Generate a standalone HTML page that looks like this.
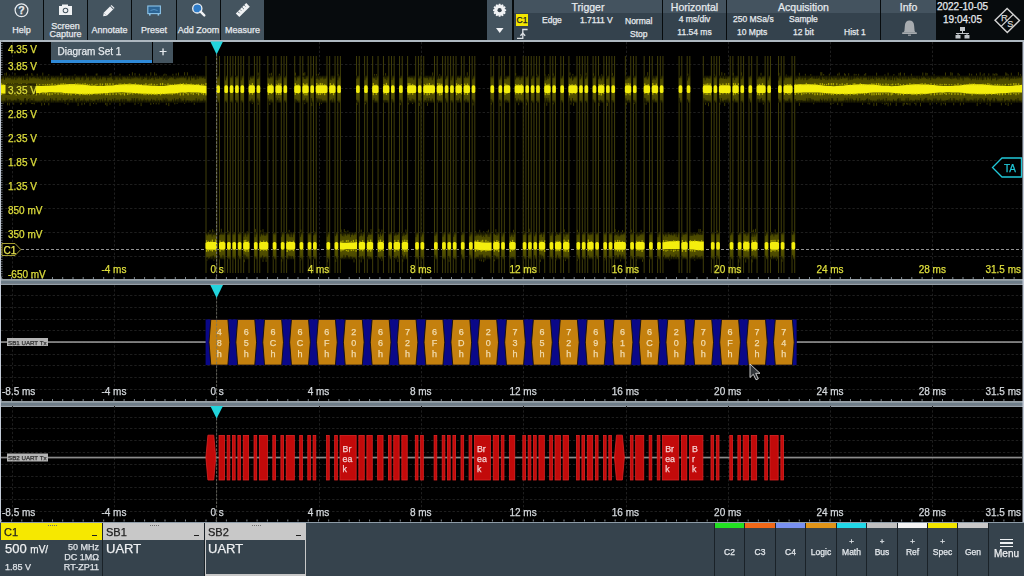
<!DOCTYPE html><html><head><meta charset="utf-8"><style>
*{margin:0;padding:0;box-sizing:border-box}
html,body{width:1024px;height:576px;overflow:hidden;background:#000;font-family:"Liberation Sans", sans-serif}
.a{position:absolute}
.t{position:absolute;white-space:nowrap;line-height:1;-webkit-text-stroke:0.25px currentColor}
.btn{position:absolute;top:0;height:40px;background:#44545f}
.bl{position:absolute;left:0;right:0;text-align:center;color:#e6eaee;font-size:9px;line-height:1;-webkit-text-stroke:0.25px currentColor}
</style></head><body>
<div class="a" style="left:0;top:0;width:1024px;height:40px;background:#070b0d"></div>
<div class="btn" style="left:0px;width:43px">
<div class="bl" style="top:26px">Help</div>
</div>
<div class="btn" style="left:44px;width:43px">
<div class="bl" style="top:22px">Screen</div><div class="bl" style="top:30px">Capture</div>
</div>
<div class="btn" style="left:88px;width:43px">
<div class="bl" style="top:26px">Annotate</div>
</div>
<div class="btn" style="left:132px;width:44px">
<div class="bl" style="top:26px">Preset</div>
</div>
<div class="btn" style="left:177px;width:43px">
<div class="bl" style="top:26px">Add Zoom</div>
</div>
<div class="btn" style="left:221px;width:43px">
<div class="bl" style="top:26px">Measure</div>
</div>
<svg class="a" style="left:0;top:0" width="270" height="40"><circle cx="21.5" cy="10.3" r="6.4" fill="none" stroke="#e8ecf0" stroke-width="1.2"/><text x="21.5" y="14" font-size="10.5" font-weight="bold" fill="#e8ecf0" text-anchor="middle" font-family='"Liberation Sans"' stroke="#e8ecf0" stroke-width="0.25">?</text><rect x="59" y="6" width="13" height="9" fill="#f0f2f4"/><rect x="62" y="4.5" width="6" height="2" fill="#f0f2f4"/><circle cx="65.5" cy="10.5" r="2.8" fill="#44545f"/><circle cx="65.5" cy="10.5" r="1.8" fill="#f0f2f4"/><g transform="translate(109.5,10) rotate(-45)"><rect x="-6" y="-2.2" width="11" height="4.4" fill="#f0f2f4"/><path d="M-6,-2.2 L-9,0 L-6,2.2 Z" fill="#f0f2f4"/><rect x="3" y="-2.2" width="0.8" height="4.4" fill="#44545f"/></g><rect x="147.8" y="6" width="12.6" height="7.6" fill="#2c6494" stroke="#8cc4e8" stroke-width="1.1"/><rect x="149" y="14" width="1.6" height="1.6" fill="#8cc4e8"/><rect x="157.6" y="14" width="1.6" height="1.6" fill="#8cc4e8"/><path d="M150.5,10.5 Q154,8.5 157.5,10.5" stroke="#6aa8d8" stroke-width="0.7" fill="none"/><circle cx="197.3" cy="8.4" r="4.6" fill="#2f7cc8" stroke="#f0f2f4" stroke-width="1.3"/><line x1="200.6" y1="11.7" x2="204.3" y2="15.4" stroke="#f0f2f4" stroke-width="2.4" stroke-linecap="round"/><g transform="translate(242.8,10.1) rotate(-45)"><rect x="-7.4" y="-2.5" width="14.8" height="5" fill="#f0f2f4"/><line x1="-4.5" y1="-2.5" x2="-4.5" y2="0" stroke="#44545f" stroke-width="0.8"/><line x1="-1.5" y1="-2.5" x2="-1.5" y2="-0.6" stroke="#44545f" stroke-width="0.8"/><line x1="1.5" y1="-2.5" x2="1.5" y2="0" stroke="#44545f" stroke-width="0.8"/><line x1="4.5" y1="-2.5" x2="4.5" y2="-0.6" stroke="#44545f" stroke-width="0.8"/></g></svg>
<div class="a" style="left:487px;top:0;width:25px;height:40px;background:#44545f"></div>
<svg class="a" style="left:0;top:0" width="520" height="40"><path d="M504.64,8.92 L506.15,9.42 L506.15,10.98 L504.64,11.48 L504.60,11.61 L505.66,12.81 L504.89,14.15 L503.32,13.83 L503.23,13.92 L503.55,15.49 L502.21,16.26 L501.01,15.20 L500.88,15.24 L500.38,16.75 L498.82,16.75 L498.32,15.24 L498.19,15.20 L496.99,16.26 L495.65,15.49 L495.97,13.92 L495.88,13.83 L494.31,14.15 L493.54,12.81 L494.60,11.61 L494.56,11.48 L493.05,10.98 L493.05,9.42 L494.56,8.92 L494.60,8.79 L493.54,7.59 L494.31,6.25 L495.88,6.57 L495.97,6.48 L495.65,4.91 L496.99,4.14 L498.19,5.20 L498.32,5.16 L498.82,3.65 L500.38,3.65 L500.88,5.16 L501.01,5.20 L502.21,4.14 L503.55,4.91 L503.23,6.48 L503.32,6.57 L504.89,6.25 L505.66,7.59 L504.60,8.79Z" fill="#f0f2f4"/><circle cx="499.6" cy="10.2" r="2.1" fill="#3a464f"/><path d="M496,28 L503.5,28 L499.75,33 Z" fill="#f0f2f4"/></svg>
<div class="a" style="left:514px;top:0;width:148px;height:13px;background:#44535f"></div>
<div class="a" style="left:514px;top:13px;width:148px;height:27px;background:#34424d"></div>
<div class="t" style="left:514px;width:148px;top:2px;text-align:center;font-size:10.5px;color:#e6eaee">Trigger</div>
<div class="a" style="left:663px;top:0;width:63px;height:13px;background:#44535f"></div>
<div class="a" style="left:663px;top:13px;width:63px;height:27px;background:#34424d"></div>
<div class="t" style="left:663px;width:63px;top:2px;text-align:center;font-size:10.5px;color:#e6eaee">Horizontal</div>
<div class="a" style="left:727px;top:0;width:153px;height:13px;background:#44535f"></div>
<div class="a" style="left:727px;top:13px;width:153px;height:27px;background:#34424d"></div>
<div class="t" style="left:727px;width:153px;top:2px;text-align:center;font-size:10.5px;color:#e6eaee">Acquisition</div>
<div class="a" style="left:881px;top:0;width:55px;height:13px;background:#44535f"></div>
<div class="a" style="left:881px;top:13px;width:55px;height:27px;background:#34424d"></div>
<div class="t" style="left:881px;width:55px;top:2px;text-align:center;font-size:10.5px;color:#e6eaee">Info</div>
<div class="a" style="left:516px;top:14px;width:12px;height:12px;background:#f4e600"></div>
<div class="t" style="left:516px;width:12px;text-align:center;top:16px;font-size:8.5px;color:#202020">C1</div>
<svg class="a" style="left:510px;top:24px" width="24" height="16"><path d="M7,14.4 L12.8,14.4 L12.8,5.5 L17.6,5.5" fill="none" stroke="#dde1e5" stroke-width="1.3"/><path d="M10.4,11.8 L12.8,9.2 L15.2,11.8" stroke="#dde1e5" stroke-width="1.3" fill="none"/></svg>
<div class="t" style="left:542px;top:16px;font-size:8.5px;color:#e6eaee;">Edge</div>
<div class="t" style="left:580px;top:16px;font-size:8.5px;color:#e6eaee;">1.7111 V</div>
<div class="t" style="left:625px;top:16.5px;font-size:8.5px;color:#e6eaee;">Normal</div>
<div class="t" style="left:630px;top:30px;font-size:8.5px;color:#e6eaee;">Stop</div>
<div class="t" style="left:594.5px;width:200px;text-align:center;top:14.5px;font-size:8.5px;color:#e6eaee;">4 ms/div</div>
<div class="t" style="left:594.5px;width:200px;text-align:center;top:27.5px;font-size:8.5px;color:#e6eaee;">11.54 ms</div>
<div class="t" style="left:733px;top:14.8px;font-size:8.5px;color:#e6eaee;">250 MSa/s</div>
<div class="t" style="left:789px;top:14.8px;font-size:8.5px;color:#e6eaee;">Sample</div>
<div class="t" style="left:737px;top:27.6px;font-size:8.5px;color:#e6eaee;">10 Mpts</div>
<div class="t" style="left:793px;top:27.6px;font-size:8.5px;color:#e6eaee;">12 bit</div>
<div class="t" style="left:844px;top:27.6px;font-size:8.5px;color:#e6eaee;">Hist 1</div>
<svg class="a" style="left:895px;top:16px" width="30" height="22"><path d="M14.5,4.6 Q10.3,4.6 9.9,9.5 L9.4,15 Q9,16 7.6,16.6 L21.4,16.6 Q20,16 19.6,15 L19.1,9.5 Q18.7,4.6 14.5,4.6 Z" fill="#a8acb0"/><rect x="7.2" y="16.4" width="14.6" height="1.6" fill="#a8acb0"/><rect x="13" y="18.6" width="3" height="1.1" fill="#a8acb0"/></svg>
<div class="t" style="left:862.5px;width:200px;text-align:center;top:2px;font-size:10px;color:#e6eaee;">2022-10-05</div>
<div class="t" style="left:862.5px;width:200px;text-align:center;top:15px;font-size:10px;color:#e6eaee;">19:04:05</div>
<svg class="a" style="left:950px;top:25px" width="26" height="15"><rect x="10" y="2" width="5" height="4" fill="#c0c4c8"/><line x1="12.5" y1="6" x2="12.5" y2="8.5" stroke="#c0c4c8"/><line x1="6" y1="8.5" x2="19" y2="8.5" stroke="#c0c4c8"/><line x1="8" y1="8.5" x2="8" y2="10" stroke="#c0c4c8"/><line x1="17" y1="8.5" x2="17" y2="10" stroke="#c0c4c8"/><rect x="5.5" y="10" width="5" height="3.5" fill="#c0c4c8"/><rect x="14.5" y="10" width="5" height="3.5" fill="#c0c4c8"/></svg>
<svg class="a" style="left:990px;top:4px" width="34" height="33"><path d="M17.1,4.4 L29.5,16.5 L17.3,28.6 L5,16.2 Z" fill="none" stroke="#d4d4d4" stroke-width="1.4"/><line x1="11.1" y1="22.4" x2="23.3" y2="10.4" stroke="#d4d4d4" stroke-width="1.3"/><text x="14.4" y="17.2" font-size="9.5" fill="#d4d4d4" text-anchor="middle" font-family='"Liberation Sans"' stroke="#d4d4d4" stroke-width="0.25">R</text><text x="20.3" y="23" font-size="9" fill="#d4d4d4" text-anchor="middle" font-family='"Liberation Sans"' stroke="#d4d4d4" stroke-width="0.25">S</text></svg>
<div class="a" style="left:0;top:40px;width:1024px;height:2px;background:#aeb8c0"></div>
<svg class="a" style="left:0;top:0" width="1024" height="576"><defs><linearGradient id="env" x1="0" y1="0" x2="0" y2="1"><stop offset="0" stop-color="#3a3a00" stop-opacity="0.5"/><stop offset="0.12" stop-color="#4a4800"/><stop offset="0.4" stop-color="#565400"/><stop offset="0.5" stop-color="#606000"/><stop offset="0.6" stop-color="#565400"/><stop offset="0.88" stop-color="#4a4800"/><stop offset="1" stop-color="#3a3a00" stop-opacity="0.5"/></linearGradient><filter id="bl" x="-0.2" y="-0.2" width="1.4" height="1.4"><feGaussianBlur stdDeviation="0.6"/></filter></defs><line x1="1" y1="64.5" x2="1022" y2="64.5" stroke="#1e1e1e" stroke-width="1" stroke-dasharray="2.4,1.9"/><line x1="1" y1="88.5" x2="1022" y2="88.5" stroke="#1e1e1e" stroke-width="1" stroke-dasharray="2.4,1.9"/><line x1="1" y1="112.5" x2="1022" y2="112.5" stroke="#1e1e1e" stroke-width="1" stroke-dasharray="2.4,1.9"/><line x1="1" y1="136.5" x2="1022" y2="136.5" stroke="#1e1e1e" stroke-width="1" stroke-dasharray="2.4,1.9"/><line x1="1" y1="160.5" x2="1022" y2="160.5" stroke="#1e1e1e" stroke-width="1" stroke-dasharray="2.4,1.9"/><line x1="1" y1="184.5" x2="1022" y2="184.5" stroke="#1e1e1e" stroke-width="1" stroke-dasharray="2.4,1.9"/><line x1="1" y1="208.5" x2="1022" y2="208.5" stroke="#1e1e1e" stroke-width="1" stroke-dasharray="2.4,1.9"/><line x1="1" y1="232.5" x2="1022" y2="232.5" stroke="#1e1e1e" stroke-width="1" stroke-dasharray="2.4,1.9"/><line x1="1" y1="256.5" x2="1022" y2="256.5" stroke="#1e1e1e" stroke-width="1" stroke-dasharray="2.4,1.9"/><line x1="12.5" y1="42" x2="12.5" y2="279" stroke="#1e1e1e" stroke-width="1" stroke-dasharray="2.4,1.9"/><line x1="114.5" y1="42" x2="114.5" y2="279" stroke="#1e1e1e" stroke-width="1" stroke-dasharray="2.4,1.9"/><line x1="216.5" y1="42" x2="216.5" y2="279" stroke="#1e1e1e" stroke-width="1" stroke-dasharray="2.4,1.9"/><line x1="319.5" y1="42" x2="319.5" y2="279" stroke="#1e1e1e" stroke-width="1" stroke-dasharray="2.4,1.9"/><line x1="421.5" y1="42" x2="421.5" y2="279" stroke="#1e1e1e" stroke-width="1" stroke-dasharray="2.4,1.9"/><line x1="523.5" y1="42" x2="523.5" y2="279" stroke="#1e1e1e" stroke-width="1" stroke-dasharray="2.4,1.9"/><line x1="626.5" y1="42" x2="626.5" y2="279" stroke="#1e1e1e" stroke-width="1" stroke-dasharray="2.4,1.9"/><line x1="728.5" y1="42" x2="728.5" y2="279" stroke="#1e1e1e" stroke-width="1" stroke-dasharray="2.4,1.9"/><line x1="830.5" y1="42" x2="830.5" y2="279" stroke="#1e1e1e" stroke-width="1" stroke-dasharray="2.4,1.9"/><line x1="932.5" y1="42" x2="932.5" y2="279" stroke="#1e1e1e" stroke-width="1" stroke-dasharray="2.4,1.9"/><line x1="1.4" y1="277" x2="1.4" y2="279" stroke="#8a949c" stroke-width="0.9"/><line x1="11.6" y1="277" x2="11.6" y2="279" stroke="#8a949c" stroke-width="0.9"/><line x1="21.8" y1="277" x2="21.8" y2="279" stroke="#8a949c" stroke-width="0.9"/><line x1="32.1" y1="277" x2="32.1" y2="279" stroke="#8a949c" stroke-width="0.9"/><line x1="42.3" y1="277" x2="42.3" y2="279" stroke="#8a949c" stroke-width="0.9"/><line x1="52.5" y1="277" x2="52.5" y2="279" stroke="#8a949c" stroke-width="0.9"/><line x1="62.7" y1="277" x2="62.7" y2="279" stroke="#8a949c" stroke-width="0.9"/><line x1="73.0" y1="277" x2="73.0" y2="279" stroke="#8a949c" stroke-width="0.9"/><line x1="83.2" y1="277" x2="83.2" y2="279" stroke="#8a949c" stroke-width="0.9"/><line x1="93.4" y1="277" x2="93.4" y2="279" stroke="#8a949c" stroke-width="0.9"/><line x1="103.7" y1="277" x2="103.7" y2="279" stroke="#8a949c" stroke-width="0.9"/><line x1="113.9" y1="277" x2="113.9" y2="279" stroke="#8a949c" stroke-width="0.9"/><line x1="124.1" y1="277" x2="124.1" y2="279" stroke="#8a949c" stroke-width="0.9"/><line x1="134.4" y1="277" x2="134.4" y2="279" stroke="#8a949c" stroke-width="0.9"/><line x1="144.6" y1="277" x2="144.6" y2="279" stroke="#8a949c" stroke-width="0.9"/><line x1="154.8" y1="277" x2="154.8" y2="279" stroke="#8a949c" stroke-width="0.9"/><line x1="165.0" y1="277" x2="165.0" y2="279" stroke="#8a949c" stroke-width="0.9"/><line x1="175.3" y1="277" x2="175.3" y2="279" stroke="#8a949c" stroke-width="0.9"/><line x1="185.5" y1="277" x2="185.5" y2="279" stroke="#8a949c" stroke-width="0.9"/><line x1="195.7" y1="277" x2="195.7" y2="279" stroke="#8a949c" stroke-width="0.9"/><line x1="206.0" y1="277" x2="206.0" y2="279" stroke="#8a949c" stroke-width="0.9"/><line x1="216.2" y1="277" x2="216.2" y2="279" stroke="#8a949c" stroke-width="0.9"/><line x1="226.4" y1="277" x2="226.4" y2="279" stroke="#8a949c" stroke-width="0.9"/><line x1="236.7" y1="277" x2="236.7" y2="279" stroke="#8a949c" stroke-width="0.9"/><line x1="246.9" y1="277" x2="246.9" y2="279" stroke="#8a949c" stroke-width="0.9"/><line x1="257.1" y1="277" x2="257.1" y2="279" stroke="#8a949c" stroke-width="0.9"/><line x1="267.4" y1="277" x2="267.4" y2="279" stroke="#8a949c" stroke-width="0.9"/><line x1="277.6" y1="277" x2="277.6" y2="279" stroke="#8a949c" stroke-width="0.9"/><line x1="287.8" y1="277" x2="287.8" y2="279" stroke="#8a949c" stroke-width="0.9"/><line x1="298.0" y1="277" x2="298.0" y2="279" stroke="#8a949c" stroke-width="0.9"/><line x1="308.3" y1="277" x2="308.3" y2="279" stroke="#8a949c" stroke-width="0.9"/><line x1="318.5" y1="277" x2="318.5" y2="279" stroke="#8a949c" stroke-width="0.9"/><line x1="328.7" y1="277" x2="328.7" y2="279" stroke="#8a949c" stroke-width="0.9"/><line x1="339.0" y1="277" x2="339.0" y2="279" stroke="#8a949c" stroke-width="0.9"/><line x1="349.2" y1="277" x2="349.2" y2="279" stroke="#8a949c" stroke-width="0.9"/><line x1="359.4" y1="277" x2="359.4" y2="279" stroke="#8a949c" stroke-width="0.9"/><line x1="369.6" y1="277" x2="369.6" y2="279" stroke="#8a949c" stroke-width="0.9"/><line x1="379.9" y1="277" x2="379.9" y2="279" stroke="#8a949c" stroke-width="0.9"/><line x1="390.1" y1="277" x2="390.1" y2="279" stroke="#8a949c" stroke-width="0.9"/><line x1="400.3" y1="277" x2="400.3" y2="279" stroke="#8a949c" stroke-width="0.9"/><line x1="410.6" y1="277" x2="410.6" y2="279" stroke="#8a949c" stroke-width="0.9"/><line x1="420.8" y1="277" x2="420.8" y2="279" stroke="#8a949c" stroke-width="0.9"/><line x1="431.0" y1="277" x2="431.0" y2="279" stroke="#8a949c" stroke-width="0.9"/><line x1="441.3" y1="277" x2="441.3" y2="279" stroke="#8a949c" stroke-width="0.9"/><line x1="451.5" y1="277" x2="451.5" y2="279" stroke="#8a949c" stroke-width="0.9"/><line x1="461.7" y1="277" x2="461.7" y2="279" stroke="#8a949c" stroke-width="0.9"/><line x1="471.9" y1="277" x2="471.9" y2="279" stroke="#8a949c" stroke-width="0.9"/><line x1="482.2" y1="277" x2="482.2" y2="279" stroke="#8a949c" stroke-width="0.9"/><line x1="492.4" y1="277" x2="492.4" y2="279" stroke="#8a949c" stroke-width="0.9"/><line x1="502.6" y1="277" x2="502.6" y2="279" stroke="#8a949c" stroke-width="0.9"/><line x1="512.9" y1="277" x2="512.9" y2="279" stroke="#8a949c" stroke-width="0.9"/><line x1="523.1" y1="277" x2="523.1" y2="279" stroke="#8a949c" stroke-width="0.9"/><line x1="533.3" y1="277" x2="533.3" y2="279" stroke="#8a949c" stroke-width="0.9"/><line x1="543.6" y1="277" x2="543.6" y2="279" stroke="#8a949c" stroke-width="0.9"/><line x1="553.8" y1="277" x2="553.8" y2="279" stroke="#8a949c" stroke-width="0.9"/><line x1="564.0" y1="277" x2="564.0" y2="279" stroke="#8a949c" stroke-width="0.9"/><line x1="574.2" y1="277" x2="574.2" y2="279" stroke="#8a949c" stroke-width="0.9"/><line x1="584.5" y1="277" x2="584.5" y2="279" stroke="#8a949c" stroke-width="0.9"/><line x1="594.7" y1="277" x2="594.7" y2="279" stroke="#8a949c" stroke-width="0.9"/><line x1="604.9" y1="277" x2="604.9" y2="279" stroke="#8a949c" stroke-width="0.9"/><line x1="615.2" y1="277" x2="615.2" y2="279" stroke="#8a949c" stroke-width="0.9"/><line x1="625.4" y1="277" x2="625.4" y2="279" stroke="#8a949c" stroke-width="0.9"/><line x1="635.6" y1="277" x2="635.6" y2="279" stroke="#8a949c" stroke-width="0.9"/><line x1="645.9" y1="277" x2="645.9" y2="279" stroke="#8a949c" stroke-width="0.9"/><line x1="656.1" y1="277" x2="656.1" y2="279" stroke="#8a949c" stroke-width="0.9"/><line x1="666.3" y1="277" x2="666.3" y2="279" stroke="#8a949c" stroke-width="0.9"/><line x1="676.5" y1="277" x2="676.5" y2="279" stroke="#8a949c" stroke-width="0.9"/><line x1="686.8" y1="277" x2="686.8" y2="279" stroke="#8a949c" stroke-width="0.9"/><line x1="697.0" y1="277" x2="697.0" y2="279" stroke="#8a949c" stroke-width="0.9"/><line x1="707.2" y1="277" x2="707.2" y2="279" stroke="#8a949c" stroke-width="0.9"/><line x1="717.5" y1="277" x2="717.5" y2="279" stroke="#8a949c" stroke-width="0.9"/><line x1="727.7" y1="277" x2="727.7" y2="279" stroke="#8a949c" stroke-width="0.9"/><line x1="737.9" y1="277" x2="737.9" y2="279" stroke="#8a949c" stroke-width="0.9"/><line x1="748.2" y1="277" x2="748.2" y2="279" stroke="#8a949c" stroke-width="0.9"/><line x1="758.4" y1="277" x2="758.4" y2="279" stroke="#8a949c" stroke-width="0.9"/><line x1="768.6" y1="277" x2="768.6" y2="279" stroke="#8a949c" stroke-width="0.9"/><line x1="778.8" y1="277" x2="778.8" y2="279" stroke="#8a949c" stroke-width="0.9"/><line x1="789.1" y1="277" x2="789.1" y2="279" stroke="#8a949c" stroke-width="0.9"/><line x1="799.3" y1="277" x2="799.3" y2="279" stroke="#8a949c" stroke-width="0.9"/><line x1="809.5" y1="277" x2="809.5" y2="279" stroke="#8a949c" stroke-width="0.9"/><line x1="819.8" y1="277" x2="819.8" y2="279" stroke="#8a949c" stroke-width="0.9"/><line x1="830.0" y1="277" x2="830.0" y2="279" stroke="#8a949c" stroke-width="0.9"/><line x1="840.2" y1="277" x2="840.2" y2="279" stroke="#8a949c" stroke-width="0.9"/><line x1="850.5" y1="277" x2="850.5" y2="279" stroke="#8a949c" stroke-width="0.9"/><line x1="860.7" y1="277" x2="860.7" y2="279" stroke="#8a949c" stroke-width="0.9"/><line x1="870.9" y1="277" x2="870.9" y2="279" stroke="#8a949c" stroke-width="0.9"/><line x1="881.2" y1="277" x2="881.2" y2="279" stroke="#8a949c" stroke-width="0.9"/><line x1="891.4" y1="277" x2="891.4" y2="279" stroke="#8a949c" stroke-width="0.9"/><line x1="901.6" y1="277" x2="901.6" y2="279" stroke="#8a949c" stroke-width="0.9"/><line x1="911.8" y1="277" x2="911.8" y2="279" stroke="#8a949c" stroke-width="0.9"/><line x1="922.1" y1="277" x2="922.1" y2="279" stroke="#8a949c" stroke-width="0.9"/><line x1="932.3" y1="277" x2="932.3" y2="279" stroke="#8a949c" stroke-width="0.9"/><line x1="942.5" y1="277" x2="942.5" y2="279" stroke="#8a949c" stroke-width="0.9"/><line x1="952.8" y1="277" x2="952.8" y2="279" stroke="#8a949c" stroke-width="0.9"/><line x1="963.0" y1="277" x2="963.0" y2="279" stroke="#8a949c" stroke-width="0.9"/><line x1="973.2" y1="277" x2="973.2" y2="279" stroke="#8a949c" stroke-width="0.9"/><line x1="983.5" y1="277" x2="983.5" y2="279" stroke="#8a949c" stroke-width="0.9"/><line x1="993.7" y1="277" x2="993.7" y2="279" stroke="#8a949c" stroke-width="0.9"/><line x1="1003.9" y1="277" x2="1003.9" y2="279" stroke="#8a949c" stroke-width="0.9"/><line x1="1014.1" y1="277" x2="1014.1" y2="279" stroke="#8a949c" stroke-width="0.9"/><line x1="1" y1="41.0" x2="2.6" y2="41.0" stroke="#8a949e" stroke-width="0.8"/><line x1="1" y1="43.4" x2="2.6" y2="43.4" stroke="#8a949e" stroke-width="0.8"/><line x1="1" y1="45.8" x2="2.6" y2="45.8" stroke="#8a949e" stroke-width="0.8"/><line x1="1" y1="48.2" x2="2.6" y2="48.2" stroke="#8a949e" stroke-width="0.8"/><line x1="1" y1="50.6" x2="2.6" y2="50.6" stroke="#8a949e" stroke-width="0.8"/><line x1="1" y1="53.0" x2="2.6" y2="53.0" stroke="#8a949e" stroke-width="0.8"/><line x1="1" y1="55.4" x2="2.6" y2="55.4" stroke="#8a949e" stroke-width="0.8"/><line x1="1" y1="57.8" x2="2.6" y2="57.8" stroke="#8a949e" stroke-width="0.8"/><line x1="1" y1="60.2" x2="2.6" y2="60.2" stroke="#8a949e" stroke-width="0.8"/><line x1="1" y1="62.6" x2="2.6" y2="62.6" stroke="#8a949e" stroke-width="0.8"/><line x1="1" y1="65.0" x2="2.6" y2="65.0" stroke="#8a949e" stroke-width="0.8"/><line x1="1" y1="67.4" x2="2.6" y2="67.4" stroke="#8a949e" stroke-width="0.8"/><line x1="1" y1="69.8" x2="2.6" y2="69.8" stroke="#8a949e" stroke-width="0.8"/><line x1="1" y1="72.2" x2="2.6" y2="72.2" stroke="#8a949e" stroke-width="0.8"/><line x1="1" y1="74.6" x2="2.6" y2="74.6" stroke="#8a949e" stroke-width="0.8"/><line x1="1" y1="77.0" x2="2.6" y2="77.0" stroke="#8a949e" stroke-width="0.8"/><line x1="1" y1="79.4" x2="2.6" y2="79.4" stroke="#8a949e" stroke-width="0.8"/><line x1="1" y1="81.8" x2="2.6" y2="81.8" stroke="#8a949e" stroke-width="0.8"/><line x1="1" y1="84.2" x2="2.6" y2="84.2" stroke="#8a949e" stroke-width="0.8"/><line x1="1" y1="86.6" x2="2.6" y2="86.6" stroke="#8a949e" stroke-width="0.8"/><line x1="1" y1="89.0" x2="2.6" y2="89.0" stroke="#8a949e" stroke-width="0.8"/><line x1="1" y1="91.4" x2="2.6" y2="91.4" stroke="#8a949e" stroke-width="0.8"/><line x1="1" y1="93.8" x2="2.6" y2="93.8" stroke="#8a949e" stroke-width="0.8"/><line x1="1" y1="96.2" x2="2.6" y2="96.2" stroke="#8a949e" stroke-width="0.8"/><line x1="1" y1="98.6" x2="2.6" y2="98.6" stroke="#8a949e" stroke-width="0.8"/><line x1="1" y1="101.0" x2="2.6" y2="101.0" stroke="#8a949e" stroke-width="0.8"/><line x1="1" y1="103.4" x2="2.6" y2="103.4" stroke="#8a949e" stroke-width="0.8"/><line x1="1" y1="105.8" x2="2.6" y2="105.8" stroke="#8a949e" stroke-width="0.8"/><line x1="1" y1="108.2" x2="2.6" y2="108.2" stroke="#8a949e" stroke-width="0.8"/><line x1="1" y1="110.6" x2="2.6" y2="110.6" stroke="#8a949e" stroke-width="0.8"/><line x1="1" y1="113.0" x2="2.6" y2="113.0" stroke="#8a949e" stroke-width="0.8"/><line x1="1" y1="115.4" x2="2.6" y2="115.4" stroke="#8a949e" stroke-width="0.8"/><line x1="1" y1="117.8" x2="2.6" y2="117.8" stroke="#8a949e" stroke-width="0.8"/><line x1="1" y1="120.2" x2="2.6" y2="120.2" stroke="#8a949e" stroke-width="0.8"/><line x1="1" y1="122.6" x2="2.6" y2="122.6" stroke="#8a949e" stroke-width="0.8"/><line x1="1" y1="125.0" x2="2.6" y2="125.0" stroke="#8a949e" stroke-width="0.8"/><line x1="1" y1="127.4" x2="2.6" y2="127.4" stroke="#8a949e" stroke-width="0.8"/><line x1="1" y1="129.8" x2="2.6" y2="129.8" stroke="#8a949e" stroke-width="0.8"/><line x1="1" y1="132.2" x2="2.6" y2="132.2" stroke="#8a949e" stroke-width="0.8"/><line x1="1" y1="134.6" x2="2.6" y2="134.6" stroke="#8a949e" stroke-width="0.8"/><line x1="1" y1="137.0" x2="2.6" y2="137.0" stroke="#8a949e" stroke-width="0.8"/><line x1="1" y1="139.4" x2="2.6" y2="139.4" stroke="#8a949e" stroke-width="0.8"/><line x1="1" y1="141.8" x2="2.6" y2="141.8" stroke="#8a949e" stroke-width="0.8"/><line x1="1" y1="144.2" x2="2.6" y2="144.2" stroke="#8a949e" stroke-width="0.8"/><line x1="1" y1="146.6" x2="2.6" y2="146.6" stroke="#8a949e" stroke-width="0.8"/><line x1="1" y1="149.0" x2="2.6" y2="149.0" stroke="#8a949e" stroke-width="0.8"/><line x1="1" y1="151.4" x2="2.6" y2="151.4" stroke="#8a949e" stroke-width="0.8"/><line x1="1" y1="153.8" x2="2.6" y2="153.8" stroke="#8a949e" stroke-width="0.8"/><line x1="1" y1="156.2" x2="2.6" y2="156.2" stroke="#8a949e" stroke-width="0.8"/><line x1="1" y1="158.6" x2="2.6" y2="158.6" stroke="#8a949e" stroke-width="0.8"/><line x1="1" y1="161.0" x2="2.6" y2="161.0" stroke="#8a949e" stroke-width="0.8"/><line x1="1" y1="163.4" x2="2.6" y2="163.4" stroke="#8a949e" stroke-width="0.8"/><line x1="1" y1="165.8" x2="2.6" y2="165.8" stroke="#8a949e" stroke-width="0.8"/><line x1="1" y1="168.2" x2="2.6" y2="168.2" stroke="#8a949e" stroke-width="0.8"/><line x1="1" y1="170.6" x2="2.6" y2="170.6" stroke="#8a949e" stroke-width="0.8"/><line x1="1" y1="173.0" x2="2.6" y2="173.0" stroke="#8a949e" stroke-width="0.8"/><line x1="1" y1="175.4" x2="2.6" y2="175.4" stroke="#8a949e" stroke-width="0.8"/><line x1="1" y1="177.8" x2="2.6" y2="177.8" stroke="#8a949e" stroke-width="0.8"/><line x1="1" y1="180.2" x2="2.6" y2="180.2" stroke="#8a949e" stroke-width="0.8"/><line x1="1" y1="182.6" x2="2.6" y2="182.6" stroke="#8a949e" stroke-width="0.8"/><line x1="1" y1="185.0" x2="2.6" y2="185.0" stroke="#8a949e" stroke-width="0.8"/><line x1="1" y1="187.4" x2="2.6" y2="187.4" stroke="#8a949e" stroke-width="0.8"/><line x1="1" y1="189.8" x2="2.6" y2="189.8" stroke="#8a949e" stroke-width="0.8"/><line x1="1" y1="192.2" x2="2.6" y2="192.2" stroke="#8a949e" stroke-width="0.8"/><line x1="1" y1="194.6" x2="2.6" y2="194.6" stroke="#8a949e" stroke-width="0.8"/><line x1="1" y1="197.0" x2="2.6" y2="197.0" stroke="#8a949e" stroke-width="0.8"/><line x1="1" y1="199.4" x2="2.6" y2="199.4" stroke="#8a949e" stroke-width="0.8"/><line x1="1" y1="201.8" x2="2.6" y2="201.8" stroke="#8a949e" stroke-width="0.8"/><line x1="1" y1="204.2" x2="2.6" y2="204.2" stroke="#8a949e" stroke-width="0.8"/><line x1="1" y1="206.6" x2="2.6" y2="206.6" stroke="#8a949e" stroke-width="0.8"/><line x1="1" y1="209.0" x2="2.6" y2="209.0" stroke="#8a949e" stroke-width="0.8"/><line x1="1" y1="211.4" x2="2.6" y2="211.4" stroke="#8a949e" stroke-width="0.8"/><line x1="1" y1="213.8" x2="2.6" y2="213.8" stroke="#8a949e" stroke-width="0.8"/><line x1="1" y1="216.2" x2="2.6" y2="216.2" stroke="#8a949e" stroke-width="0.8"/><line x1="1" y1="218.6" x2="2.6" y2="218.6" stroke="#8a949e" stroke-width="0.8"/><line x1="1" y1="221.0" x2="2.6" y2="221.0" stroke="#8a949e" stroke-width="0.8"/><line x1="1" y1="223.4" x2="2.6" y2="223.4" stroke="#8a949e" stroke-width="0.8"/><line x1="1" y1="225.8" x2="2.6" y2="225.8" stroke="#8a949e" stroke-width="0.8"/><line x1="1" y1="228.2" x2="2.6" y2="228.2" stroke="#8a949e" stroke-width="0.8"/><line x1="1" y1="230.6" x2="2.6" y2="230.6" stroke="#8a949e" stroke-width="0.8"/><line x1="1" y1="233.0" x2="2.6" y2="233.0" stroke="#8a949e" stroke-width="0.8"/><line x1="1" y1="235.4" x2="2.6" y2="235.4" stroke="#8a949e" stroke-width="0.8"/><line x1="1" y1="237.8" x2="2.6" y2="237.8" stroke="#8a949e" stroke-width="0.8"/><line x1="1" y1="240.2" x2="2.6" y2="240.2" stroke="#8a949e" stroke-width="0.8"/><line x1="1" y1="242.6" x2="2.6" y2="242.6" stroke="#8a949e" stroke-width="0.8"/><line x1="1" y1="245.0" x2="2.6" y2="245.0" stroke="#8a949e" stroke-width="0.8"/><line x1="1" y1="247.4" x2="2.6" y2="247.4" stroke="#8a949e" stroke-width="0.8"/><line x1="1" y1="249.8" x2="2.6" y2="249.8" stroke="#8a949e" stroke-width="0.8"/><line x1="1" y1="252.2" x2="2.6" y2="252.2" stroke="#8a949e" stroke-width="0.8"/><line x1="1" y1="254.6" x2="2.6" y2="254.6" stroke="#8a949e" stroke-width="0.8"/><line x1="1" y1="257.0" x2="2.6" y2="257.0" stroke="#8a949e" stroke-width="0.8"/><line x1="1" y1="259.4" x2="2.6" y2="259.4" stroke="#8a949e" stroke-width="0.8"/><line x1="1" y1="261.8" x2="2.6" y2="261.8" stroke="#8a949e" stroke-width="0.8"/><line x1="1" y1="264.2" x2="2.6" y2="264.2" stroke="#8a949e" stroke-width="0.8"/><line x1="1" y1="266.6" x2="2.6" y2="266.6" stroke="#8a949e" stroke-width="0.8"/><line x1="1" y1="269.0" x2="2.6" y2="269.0" stroke="#8a949e" stroke-width="0.8"/><line x1="1" y1="271.4" x2="2.6" y2="271.4" stroke="#8a949e" stroke-width="0.8"/><line x1="1" y1="273.8" x2="2.6" y2="273.8" stroke="#8a949e" stroke-width="0.8"/><line x1="1" y1="276.2" x2="2.6" y2="276.2" stroke="#8a949e" stroke-width="0.8"/><line x1="1" y1="278.6" x2="2.6" y2="278.6" stroke="#8a949e" stroke-width="0.8"/><line x1="21" y1="249.5" x2="1022" y2="249.5" stroke="#d0d0d0" stroke-width="1" stroke-dasharray="3,2" opacity="0.7"/><line x1="206.00" y1="56" x2="206.00" y2="273" stroke="#403e0a" stroke-width="1"/><line x1="216.77" y1="56" x2="216.77" y2="273" stroke="#403e0a" stroke-width="1"/><line x1="219.47" y1="56" x2="219.47" y2="273" stroke="#403e0a" stroke-width="1"/><line x1="224.85" y1="56" x2="224.85" y2="273" stroke="#403e0a" stroke-width="1"/><line x1="227.54" y1="56" x2="227.54" y2="273" stroke="#403e0a" stroke-width="1"/><line x1="230.24" y1="56" x2="230.24" y2="273" stroke="#403e0a" stroke-width="1"/><line x1="232.88" y1="56" x2="232.88" y2="273" stroke="#403e0a" stroke-width="1"/><line x1="235.57" y1="56" x2="235.57" y2="273" stroke="#403e0a" stroke-width="1"/><line x1="238.27" y1="56" x2="238.27" y2="273" stroke="#403e0a" stroke-width="1"/><line x1="240.96" y1="56" x2="240.96" y2="273" stroke="#403e0a" stroke-width="1"/><line x1="243.65" y1="56" x2="243.65" y2="273" stroke="#403e0a" stroke-width="1"/><line x1="249.04" y1="56" x2="249.04" y2="273" stroke="#403e0a" stroke-width="1"/><line x1="254.42" y1="56" x2="254.42" y2="273" stroke="#403e0a" stroke-width="1"/><line x1="257.12" y1="56" x2="257.12" y2="273" stroke="#403e0a" stroke-width="1"/><line x1="259.76" y1="56" x2="259.76" y2="273" stroke="#403e0a" stroke-width="1"/><line x1="267.84" y1="56" x2="267.84" y2="273" stroke="#403e0a" stroke-width="1"/><line x1="273.22" y1="56" x2="273.22" y2="273" stroke="#403e0a" stroke-width="1"/><line x1="275.92" y1="56" x2="275.92" y2="273" stroke="#403e0a" stroke-width="1"/><line x1="281.30" y1="56" x2="281.30" y2="273" stroke="#403e0a" stroke-width="1"/><line x1="284.00" y1="56" x2="284.00" y2="273" stroke="#403e0a" stroke-width="1"/><line x1="286.64" y1="56" x2="286.64" y2="273" stroke="#403e0a" stroke-width="1"/><line x1="294.72" y1="56" x2="294.72" y2="273" stroke="#403e0a" stroke-width="1"/><line x1="300.10" y1="56" x2="300.10" y2="273" stroke="#403e0a" stroke-width="1"/><line x1="302.80" y1="56" x2="302.80" y2="273" stroke="#403e0a" stroke-width="1"/><line x1="308.18" y1="56" x2="308.18" y2="273" stroke="#403e0a" stroke-width="1"/><line x1="310.88" y1="56" x2="310.88" y2="273" stroke="#403e0a" stroke-width="1"/><line x1="313.52" y1="56" x2="313.52" y2="273" stroke="#403e0a" stroke-width="1"/><line x1="316.21" y1="56" x2="316.21" y2="273" stroke="#403e0a" stroke-width="1"/><line x1="326.98" y1="56" x2="326.98" y2="273" stroke="#403e0a" stroke-width="1"/><line x1="329.68" y1="56" x2="329.68" y2="273" stroke="#403e0a" stroke-width="1"/><line x1="335.06" y1="56" x2="335.06" y2="273" stroke="#403e0a" stroke-width="1"/><line x1="337.76" y1="56" x2="337.76" y2="273" stroke="#403e0a" stroke-width="1"/><line x1="340.40" y1="56" x2="340.40" y2="273" stroke="#403e0a" stroke-width="1"/><line x1="356.56" y1="56" x2="356.56" y2="273" stroke="#403e0a" stroke-width="1"/><line x1="359.25" y1="56" x2="359.25" y2="273" stroke="#403e0a" stroke-width="1"/><line x1="364.64" y1="56" x2="364.64" y2="273" stroke="#403e0a" stroke-width="1"/><line x1="367.28" y1="56" x2="367.28" y2="273" stroke="#403e0a" stroke-width="1"/><line x1="372.67" y1="56" x2="372.67" y2="273" stroke="#403e0a" stroke-width="1"/><line x1="378.05" y1="56" x2="378.05" y2="273" stroke="#403e0a" stroke-width="1"/><line x1="383.44" y1="56" x2="383.44" y2="273" stroke="#403e0a" stroke-width="1"/><line x1="388.82" y1="56" x2="388.82" y2="273" stroke="#403e0a" stroke-width="1"/><line x1="391.52" y1="56" x2="391.52" y2="273" stroke="#403e0a" stroke-width="1"/><line x1="394.16" y1="56" x2="394.16" y2="273" stroke="#403e0a" stroke-width="1"/><line x1="399.55" y1="56" x2="399.55" y2="273" stroke="#403e0a" stroke-width="1"/><line x1="402.24" y1="56" x2="402.24" y2="273" stroke="#403e0a" stroke-width="1"/><line x1="407.62" y1="56" x2="407.62" y2="273" stroke="#403e0a" stroke-width="1"/><line x1="415.70" y1="56" x2="415.70" y2="273" stroke="#403e0a" stroke-width="1"/><line x1="418.40" y1="56" x2="418.40" y2="273" stroke="#403e0a" stroke-width="1"/><line x1="421.04" y1="56" x2="421.04" y2="273" stroke="#403e0a" stroke-width="1"/><line x1="423.73" y1="56" x2="423.73" y2="273" stroke="#403e0a" stroke-width="1"/><line x1="434.50" y1="56" x2="434.50" y2="273" stroke="#403e0a" stroke-width="1"/><line x1="437.20" y1="56" x2="437.20" y2="273" stroke="#403e0a" stroke-width="1"/><line x1="442.58" y1="56" x2="442.58" y2="273" stroke="#403e0a" stroke-width="1"/><line x1="445.28" y1="56" x2="445.28" y2="273" stroke="#403e0a" stroke-width="1"/><line x1="447.92" y1="56" x2="447.92" y2="273" stroke="#403e0a" stroke-width="1"/><line x1="450.61" y1="56" x2="450.61" y2="273" stroke="#403e0a" stroke-width="1"/><line x1="453.31" y1="56" x2="453.31" y2="273" stroke="#403e0a" stroke-width="1"/><line x1="456.00" y1="56" x2="456.00" y2="273" stroke="#403e0a" stroke-width="1"/><line x1="461.38" y1="56" x2="461.38" y2="273" stroke="#403e0a" stroke-width="1"/><line x1="464.08" y1="56" x2="464.08" y2="273" stroke="#403e0a" stroke-width="1"/><line x1="469.46" y1="56" x2="469.46" y2="273" stroke="#403e0a" stroke-width="1"/><line x1="472.16" y1="56" x2="472.16" y2="273" stroke="#403e0a" stroke-width="1"/><line x1="474.80" y1="56" x2="474.80" y2="273" stroke="#403e0a" stroke-width="1"/><line x1="490.96" y1="56" x2="490.96" y2="273" stroke="#403e0a" stroke-width="1"/><line x1="493.65" y1="56" x2="493.65" y2="273" stroke="#403e0a" stroke-width="1"/><line x1="499.04" y1="56" x2="499.04" y2="273" stroke="#403e0a" stroke-width="1"/><line x1="501.68" y1="56" x2="501.68" y2="273" stroke="#403e0a" stroke-width="1"/><line x1="504.37" y1="56" x2="504.37" y2="273" stroke="#403e0a" stroke-width="1"/><line x1="509.76" y1="56" x2="509.76" y2="273" stroke="#403e0a" stroke-width="1"/><line x1="515.14" y1="56" x2="515.14" y2="273" stroke="#403e0a" stroke-width="1"/><line x1="523.22" y1="56" x2="523.22" y2="273" stroke="#403e0a" stroke-width="1"/><line x1="525.92" y1="56" x2="525.92" y2="273" stroke="#403e0a" stroke-width="1"/><line x1="528.56" y1="56" x2="528.56" y2="273" stroke="#403e0a" stroke-width="1"/><line x1="531.25" y1="56" x2="531.25" y2="273" stroke="#403e0a" stroke-width="1"/><line x1="533.95" y1="56" x2="533.95" y2="273" stroke="#403e0a" stroke-width="1"/><line x1="536.64" y1="56" x2="536.64" y2="273" stroke="#403e0a" stroke-width="1"/><line x1="539.33" y1="56" x2="539.33" y2="273" stroke="#403e0a" stroke-width="1"/><line x1="544.72" y1="56" x2="544.72" y2="273" stroke="#403e0a" stroke-width="1"/><line x1="550.10" y1="56" x2="550.10" y2="273" stroke="#403e0a" stroke-width="1"/><line x1="552.80" y1="56" x2="552.80" y2="273" stroke="#403e0a" stroke-width="1"/><line x1="555.44" y1="56" x2="555.44" y2="273" stroke="#403e0a" stroke-width="1"/><line x1="560.83" y1="56" x2="560.83" y2="273" stroke="#403e0a" stroke-width="1"/><line x1="563.52" y1="56" x2="563.52" y2="273" stroke="#403e0a" stroke-width="1"/><line x1="568.91" y1="56" x2="568.91" y2="273" stroke="#403e0a" stroke-width="1"/><line x1="576.98" y1="56" x2="576.98" y2="273" stroke="#403e0a" stroke-width="1"/><line x1="579.68" y1="56" x2="579.68" y2="273" stroke="#403e0a" stroke-width="1"/><line x1="582.32" y1="56" x2="582.32" y2="273" stroke="#403e0a" stroke-width="1"/><line x1="585.01" y1="56" x2="585.01" y2="273" stroke="#403e0a" stroke-width="1"/><line x1="587.71" y1="56" x2="587.71" y2="273" stroke="#403e0a" stroke-width="1"/><line x1="593.09" y1="56" x2="593.09" y2="273" stroke="#403e0a" stroke-width="1"/><line x1="595.78" y1="56" x2="595.78" y2="273" stroke="#403e0a" stroke-width="1"/><line x1="598.48" y1="56" x2="598.48" y2="273" stroke="#403e0a" stroke-width="1"/><line x1="603.86" y1="56" x2="603.86" y2="273" stroke="#403e0a" stroke-width="1"/><line x1="606.56" y1="56" x2="606.56" y2="273" stroke="#403e0a" stroke-width="1"/><line x1="609.20" y1="56" x2="609.20" y2="273" stroke="#403e0a" stroke-width="1"/><line x1="611.89" y1="56" x2="611.89" y2="273" stroke="#403e0a" stroke-width="1"/><line x1="614.59" y1="56" x2="614.59" y2="273" stroke="#403e0a" stroke-width="1"/><line x1="625.36" y1="56" x2="625.36" y2="273" stroke="#403e0a" stroke-width="1"/><line x1="630.74" y1="56" x2="630.74" y2="273" stroke="#403e0a" stroke-width="1"/><line x1="633.44" y1="56" x2="633.44" y2="273" stroke="#403e0a" stroke-width="1"/><line x1="636.08" y1="56" x2="636.08" y2="273" stroke="#403e0a" stroke-width="1"/><line x1="644.16" y1="56" x2="644.16" y2="273" stroke="#403e0a" stroke-width="1"/><line x1="649.54" y1="56" x2="649.54" y2="273" stroke="#403e0a" stroke-width="1"/><line x1="652.24" y1="56" x2="652.24" y2="273" stroke="#403e0a" stroke-width="1"/><line x1="657.62" y1="56" x2="657.62" y2="273" stroke="#403e0a" stroke-width="1"/><line x1="660.32" y1="56" x2="660.32" y2="273" stroke="#403e0a" stroke-width="1"/><line x1="662.96" y1="56" x2="662.96" y2="273" stroke="#403e0a" stroke-width="1"/><line x1="679.12" y1="56" x2="679.12" y2="273" stroke="#403e0a" stroke-width="1"/><line x1="681.81" y1="56" x2="681.81" y2="273" stroke="#403e0a" stroke-width="1"/><line x1="687.20" y1="56" x2="687.20" y2="273" stroke="#403e0a" stroke-width="1"/><line x1="689.84" y1="56" x2="689.84" y2="273" stroke="#403e0a" stroke-width="1"/><line x1="703.30" y1="56" x2="703.30" y2="273" stroke="#403e0a" stroke-width="1"/><line x1="711.38" y1="56" x2="711.38" y2="273" stroke="#403e0a" stroke-width="1"/><line x1="714.08" y1="56" x2="714.08" y2="273" stroke="#403e0a" stroke-width="1"/><line x1="716.72" y1="56" x2="716.72" y2="273" stroke="#403e0a" stroke-width="1"/><line x1="719.41" y1="56" x2="719.41" y2="273" stroke="#403e0a" stroke-width="1"/><line x1="730.19" y1="56" x2="730.19" y2="273" stroke="#403e0a" stroke-width="1"/><line x1="732.88" y1="56" x2="732.88" y2="273" stroke="#403e0a" stroke-width="1"/><line x1="738.26" y1="56" x2="738.26" y2="273" stroke="#403e0a" stroke-width="1"/><line x1="740.96" y1="56" x2="740.96" y2="273" stroke="#403e0a" stroke-width="1"/><line x1="743.60" y1="56" x2="743.60" y2="273" stroke="#403e0a" stroke-width="1"/><line x1="748.99" y1="56" x2="748.99" y2="273" stroke="#403e0a" stroke-width="1"/><line x1="751.68" y1="56" x2="751.68" y2="273" stroke="#403e0a" stroke-width="1"/><line x1="757.07" y1="56" x2="757.07" y2="273" stroke="#403e0a" stroke-width="1"/><line x1="765.14" y1="56" x2="765.14" y2="273" stroke="#403e0a" stroke-width="1"/><line x1="767.84" y1="56" x2="767.84" y2="273" stroke="#403e0a" stroke-width="1"/><line x1="770.48" y1="56" x2="770.48" y2="273" stroke="#403e0a" stroke-width="1"/><line x1="778.56" y1="56" x2="778.56" y2="273" stroke="#403e0a" stroke-width="1"/><line x1="781.25" y1="56" x2="781.25" y2="273" stroke="#403e0a" stroke-width="1"/><line x1="783.95" y1="56" x2="783.95" y2="273" stroke="#403e0a" stroke-width="1"/><line x1="792.02" y1="56" x2="792.02" y2="273" stroke="#403e0a" stroke-width="1"/><line x1="794.72" y1="56" x2="794.72" y2="273" stroke="#403e0a" stroke-width="1"/><rect x="0.70" y="75.7" width="205.60" height="27" fill="url(#env)"/><rect x="205.70" y="232.3" width="11.37" height="27" fill="url(#env)"/><rect x="216.47" y="75.7" width="3.29" height="27" fill="url(#env)"/><rect x="219.16" y="232.3" width="5.99" height="27" fill="url(#env)"/><rect x="224.55" y="75.7" width="3.29" height="27" fill="url(#env)"/><rect x="227.24" y="232.3" width="3.29" height="27" fill="url(#env)"/><rect x="229.94" y="75.7" width="3.24" height="27" fill="url(#env)"/><rect x="232.58" y="232.3" width="3.29" height="27" fill="url(#env)"/><rect x="235.27" y="75.7" width="3.29" height="27" fill="url(#env)"/><rect x="237.97" y="232.3" width="3.29" height="27" fill="url(#env)"/><rect x="240.66" y="75.7" width="3.29" height="27" fill="url(#env)"/><rect x="243.35" y="232.3" width="5.99" height="27" fill="url(#env)"/><rect x="248.74" y="75.7" width="5.99" height="27" fill="url(#env)"/><rect x="254.12" y="232.3" width="3.29" height="27" fill="url(#env)"/><rect x="256.82" y="75.7" width="3.24" height="27" fill="url(#env)"/><rect x="259.46" y="232.3" width="8.68" height="27" fill="url(#env)"/><rect x="267.54" y="75.7" width="5.99" height="27" fill="url(#env)"/><rect x="272.92" y="232.3" width="3.29" height="27" fill="url(#env)"/><rect x="275.62" y="75.7" width="5.99" height="27" fill="url(#env)"/><rect x="281.00" y="232.3" width="3.29" height="27" fill="url(#env)"/><rect x="283.70" y="75.7" width="3.24" height="27" fill="url(#env)"/><rect x="286.34" y="232.3" width="8.68" height="27" fill="url(#env)"/><rect x="294.42" y="75.7" width="5.99" height="27" fill="url(#env)"/><rect x="299.80" y="232.3" width="3.29" height="27" fill="url(#env)"/><rect x="302.50" y="75.7" width="5.99" height="27" fill="url(#env)"/><rect x="307.88" y="232.3" width="3.29" height="27" fill="url(#env)"/><rect x="310.58" y="75.7" width="3.24" height="27" fill="url(#env)"/><rect x="313.22" y="232.3" width="3.29" height="27" fill="url(#env)"/><rect x="315.91" y="75.7" width="11.37" height="27" fill="url(#env)"/><rect x="326.68" y="232.3" width="3.29" height="27" fill="url(#env)"/><rect x="329.38" y="75.7" width="5.99" height="27" fill="url(#env)"/><rect x="334.76" y="232.3" width="3.29" height="27" fill="url(#env)"/><rect x="337.46" y="75.7" width="3.24" height="27" fill="url(#env)"/><rect x="340.10" y="232.3" width="16.76" height="27" fill="url(#env)"/><rect x="356.26" y="75.7" width="3.29" height="27" fill="url(#env)"/><rect x="358.95" y="232.3" width="5.99" height="27" fill="url(#env)"/><rect x="364.34" y="75.7" width="3.24" height="27" fill="url(#env)"/><rect x="366.98" y="232.3" width="5.99" height="27" fill="url(#env)"/><rect x="372.37" y="75.7" width="5.99" height="27" fill="url(#env)"/><rect x="377.75" y="232.3" width="5.99" height="27" fill="url(#env)"/><rect x="383.14" y="75.7" width="5.99" height="27" fill="url(#env)"/><rect x="388.52" y="232.3" width="3.29" height="27" fill="url(#env)"/><rect x="391.22" y="75.7" width="3.24" height="27" fill="url(#env)"/><rect x="393.86" y="232.3" width="5.99" height="27" fill="url(#env)"/><rect x="399.25" y="75.7" width="3.29" height="27" fill="url(#env)"/><rect x="401.94" y="232.3" width="5.99" height="27" fill="url(#env)"/><rect x="407.32" y="75.7" width="8.68" height="27" fill="url(#env)"/><rect x="415.40" y="232.3" width="3.29" height="27" fill="url(#env)"/><rect x="418.10" y="75.7" width="3.24" height="27" fill="url(#env)"/><rect x="420.74" y="232.3" width="3.29" height="27" fill="url(#env)"/><rect x="423.43" y="75.7" width="11.37" height="27" fill="url(#env)"/><rect x="434.20" y="232.3" width="3.29" height="27" fill="url(#env)"/><rect x="436.90" y="75.7" width="5.99" height="27" fill="url(#env)"/><rect x="442.28" y="232.3" width="3.29" height="27" fill="url(#env)"/><rect x="444.98" y="75.7" width="3.24" height="27" fill="url(#env)"/><rect x="447.62" y="232.3" width="3.29" height="27" fill="url(#env)"/><rect x="450.31" y="75.7" width="3.29" height="27" fill="url(#env)"/><rect x="453.01" y="232.3" width="3.29" height="27" fill="url(#env)"/><rect x="455.70" y="75.7" width="5.99" height="27" fill="url(#env)"/><rect x="461.08" y="232.3" width="3.29" height="27" fill="url(#env)"/><rect x="463.78" y="75.7" width="5.99" height="27" fill="url(#env)"/><rect x="469.16" y="232.3" width="3.29" height="27" fill="url(#env)"/><rect x="471.86" y="75.7" width="3.24" height="27" fill="url(#env)"/><rect x="474.50" y="232.3" width="16.76" height="27" fill="url(#env)"/><rect x="490.66" y="75.7" width="3.29" height="27" fill="url(#env)"/><rect x="493.35" y="232.3" width="5.99" height="27" fill="url(#env)"/><rect x="498.74" y="75.7" width="3.24" height="27" fill="url(#env)"/><rect x="501.38" y="232.3" width="3.29" height="27" fill="url(#env)"/><rect x="504.07" y="75.7" width="5.99" height="27" fill="url(#env)"/><rect x="509.46" y="232.3" width="5.99" height="27" fill="url(#env)"/><rect x="514.85" y="75.7" width="8.68" height="27" fill="url(#env)"/><rect x="522.92" y="232.3" width="3.29" height="27" fill="url(#env)"/><rect x="525.62" y="75.7" width="3.24" height="27" fill="url(#env)"/><rect x="528.26" y="232.3" width="3.29" height="27" fill="url(#env)"/><rect x="530.95" y="75.7" width="3.29" height="27" fill="url(#env)"/><rect x="533.65" y="232.3" width="3.29" height="27" fill="url(#env)"/><rect x="536.34" y="75.7" width="3.29" height="27" fill="url(#env)"/><rect x="539.03" y="232.3" width="5.99" height="27" fill="url(#env)"/><rect x="544.42" y="75.7" width="5.99" height="27" fill="url(#env)"/><rect x="549.80" y="232.3" width="3.29" height="27" fill="url(#env)"/><rect x="552.50" y="75.7" width="3.24" height="27" fill="url(#env)"/><rect x="555.14" y="232.3" width="5.99" height="27" fill="url(#env)"/><rect x="560.53" y="75.7" width="3.29" height="27" fill="url(#env)"/><rect x="563.22" y="232.3" width="5.99" height="27" fill="url(#env)"/><rect x="568.61" y="75.7" width="8.68" height="27" fill="url(#env)"/><rect x="576.68" y="232.3" width="3.29" height="27" fill="url(#env)"/><rect x="579.38" y="75.7" width="3.24" height="27" fill="url(#env)"/><rect x="582.02" y="232.3" width="3.29" height="27" fill="url(#env)"/><rect x="584.71" y="75.7" width="3.29" height="27" fill="url(#env)"/><rect x="587.41" y="232.3" width="5.99" height="27" fill="url(#env)"/><rect x="592.79" y="75.7" width="3.29" height="27" fill="url(#env)"/><rect x="595.49" y="232.3" width="3.29" height="27" fill="url(#env)"/><rect x="598.18" y="75.7" width="5.99" height="27" fill="url(#env)"/><rect x="603.56" y="232.3" width="3.29" height="27" fill="url(#env)"/><rect x="606.26" y="75.7" width="3.24" height="27" fill="url(#env)"/><rect x="608.90" y="232.3" width="3.29" height="27" fill="url(#env)"/><rect x="611.59" y="75.7" width="3.29" height="27" fill="url(#env)"/><rect x="614.29" y="232.3" width="11.37" height="27" fill="url(#env)"/><rect x="625.06" y="75.7" width="5.99" height="27" fill="url(#env)"/><rect x="630.44" y="232.3" width="3.29" height="27" fill="url(#env)"/><rect x="633.14" y="75.7" width="3.24" height="27" fill="url(#env)"/><rect x="635.78" y="232.3" width="8.68" height="27" fill="url(#env)"/><rect x="643.86" y="75.7" width="5.99" height="27" fill="url(#env)"/><rect x="649.25" y="232.3" width="3.29" height="27" fill="url(#env)"/><rect x="651.94" y="75.7" width="5.99" height="27" fill="url(#env)"/><rect x="657.32" y="232.3" width="3.29" height="27" fill="url(#env)"/><rect x="660.02" y="75.7" width="3.24" height="27" fill="url(#env)"/><rect x="662.66" y="232.3" width="16.76" height="27" fill="url(#env)"/><rect x="678.82" y="75.7" width="3.29" height="27" fill="url(#env)"/><rect x="681.51" y="232.3" width="5.99" height="27" fill="url(#env)"/><rect x="686.90" y="75.7" width="3.24" height="27" fill="url(#env)"/><rect x="689.54" y="232.3" width="14.07" height="27" fill="url(#env)"/><rect x="703.00" y="75.7" width="8.68" height="27" fill="url(#env)"/><rect x="711.08" y="232.3" width="3.29" height="27" fill="url(#env)"/><rect x="713.78" y="75.7" width="3.24" height="27" fill="url(#env)"/><rect x="716.42" y="232.3" width="3.29" height="27" fill="url(#env)"/><rect x="719.11" y="75.7" width="11.37" height="27" fill="url(#env)"/><rect x="729.89" y="232.3" width="3.29" height="27" fill="url(#env)"/><rect x="732.58" y="75.7" width="5.99" height="27" fill="url(#env)"/><rect x="737.96" y="232.3" width="3.29" height="27" fill="url(#env)"/><rect x="740.66" y="75.7" width="3.24" height="27" fill="url(#env)"/><rect x="743.30" y="232.3" width="5.99" height="27" fill="url(#env)"/><rect x="748.69" y="75.7" width="3.29" height="27" fill="url(#env)"/><rect x="751.38" y="232.3" width="5.99" height="27" fill="url(#env)"/><rect x="756.77" y="75.7" width="8.68" height="27" fill="url(#env)"/><rect x="764.84" y="232.3" width="3.29" height="27" fill="url(#env)"/><rect x="767.54" y="75.7" width="3.24" height="27" fill="url(#env)"/><rect x="770.18" y="232.3" width="8.68" height="27" fill="url(#env)"/><rect x="778.26" y="75.7" width="3.29" height="27" fill="url(#env)"/><rect x="780.95" y="232.3" width="3.29" height="27" fill="url(#env)"/><rect x="783.65" y="75.7" width="8.68" height="27" fill="url(#env)"/><rect x="791.72" y="232.3" width="3.29" height="27" fill="url(#env)"/><rect x="794.42" y="75.7" width="227.88" height="27" fill="url(#env)"/><line x1="1.5" y1="75.6" x2="1.5" y2="79.2" stroke="#000" stroke-width="0.9" opacity="0.6"/><line x1="1.5" y1="101.5" x2="1.5" y2="102.8" stroke="#000" stroke-width="0.9" opacity="0.6"/><line x1="2.8" y1="75.6" x2="2.8" y2="78.6" stroke="#000" stroke-width="0.9" opacity="0.6"/><line x1="2.8" y1="101.7" x2="2.8" y2="102.8" stroke="#000" stroke-width="0.9" opacity="0.6"/><line x1="3.2" y1="102.8" x2="3.2" y2="104.0" stroke="#4a4800" stroke-width="0.8"/><line x1="4.5" y1="75.6" x2="4.5" y2="79.9" stroke="#000" stroke-width="0.9" opacity="0.6"/><line x1="4.5" y1="101.3" x2="4.5" y2="102.8" stroke="#000" stroke-width="0.9" opacity="0.6"/><line x1="4.9" y1="73.0" x2="4.9" y2="75.6" stroke="#4a4800" stroke-width="0.8"/><line x1="6.1" y1="75.6" x2="6.1" y2="78.2" stroke="#000" stroke-width="0.9" opacity="0.6"/><line x1="6.1" y1="97.9" x2="6.1" y2="102.8" stroke="#000" stroke-width="0.9" opacity="0.6"/><line x1="6.5" y1="72.5" x2="6.5" y2="75.6" stroke="#4a4800" stroke-width="0.8"/><line x1="7.1" y1="75.6" x2="7.1" y2="77.1" stroke="#000" stroke-width="0.9" opacity="0.6"/><line x1="7.1" y1="100.6" x2="7.1" y2="102.8" stroke="#000" stroke-width="0.9" opacity="0.6"/><line x1="7.5" y1="102.8" x2="7.5" y2="105.3" stroke="#4a4800" stroke-width="0.8"/><line x1="8.9" y1="75.6" x2="8.9" y2="78.1" stroke="#000" stroke-width="0.9" opacity="0.6"/><line x1="8.9" y1="99.6" x2="8.9" y2="102.8" stroke="#000" stroke-width="0.9" opacity="0.6"/><line x1="9.3" y1="74.5" x2="9.3" y2="75.6" stroke="#4a4800" stroke-width="0.8"/><line x1="9.3" y1="102.8" x2="9.3" y2="105.5" stroke="#4a4800" stroke-width="0.8"/><line x1="10.1" y1="75.6" x2="10.1" y2="77.9" stroke="#000" stroke-width="0.9" opacity="0.6"/><line x1="10.1" y1="99.5" x2="10.1" y2="102.8" stroke="#000" stroke-width="0.9" opacity="0.6"/><line x1="11.8" y1="75.6" x2="11.8" y2="79.4" stroke="#000" stroke-width="0.9" opacity="0.6"/><line x1="11.8" y1="100.8" x2="11.8" y2="102.8" stroke="#000" stroke-width="0.9" opacity="0.6"/><line x1="13.3" y1="75.6" x2="13.3" y2="79.5" stroke="#000" stroke-width="0.9" opacity="0.6"/><line x1="13.3" y1="100.6" x2="13.3" y2="102.8" stroke="#000" stroke-width="0.9" opacity="0.6"/><line x1="13.7" y1="102.8" x2="13.7" y2="104.8" stroke="#4a4800" stroke-width="0.8"/><line x1="14.6" y1="75.6" x2="14.6" y2="77.2" stroke="#000" stroke-width="0.9" opacity="0.6"/><line x1="14.6" y1="99.8" x2="14.6" y2="102.8" stroke="#000" stroke-width="0.9" opacity="0.6"/><line x1="15.0" y1="72.9" x2="15.0" y2="75.6" stroke="#4a4800" stroke-width="0.8"/><line x1="15.9" y1="75.6" x2="15.9" y2="80.1" stroke="#000" stroke-width="0.9" opacity="0.6"/><line x1="15.9" y1="100.5" x2="15.9" y2="102.8" stroke="#000" stroke-width="0.9" opacity="0.6"/><line x1="17.3" y1="75.6" x2="17.3" y2="78.4" stroke="#000" stroke-width="0.9" opacity="0.6"/><line x1="17.3" y1="98.4" x2="17.3" y2="102.8" stroke="#000" stroke-width="0.9" opacity="0.6"/><line x1="18.7" y1="75.6" x2="18.7" y2="76.8" stroke="#000" stroke-width="0.9" opacity="0.6"/><line x1="18.7" y1="99.0" x2="18.7" y2="102.8" stroke="#000" stroke-width="0.9" opacity="0.6"/><line x1="20.3" y1="75.6" x2="20.3" y2="77.7" stroke="#000" stroke-width="0.9" opacity="0.6"/><line x1="20.3" y1="100.3" x2="20.3" y2="102.8" stroke="#000" stroke-width="0.9" opacity="0.6"/><line x1="20.7" y1="102.8" x2="20.7" y2="105.0" stroke="#4a4800" stroke-width="0.8"/><line x1="21.1" y1="75.6" x2="21.1" y2="77.1" stroke="#000" stroke-width="0.9" opacity="0.6"/><line x1="21.1" y1="101.6" x2="21.1" y2="102.8" stroke="#000" stroke-width="0.9" opacity="0.6"/><line x1="21.5" y1="102.8" x2="21.5" y2="104.4" stroke="#4a4800" stroke-width="0.8"/><line x1="22.7" y1="75.6" x2="22.7" y2="80.1" stroke="#000" stroke-width="0.9" opacity="0.6"/><line x1="22.7" y1="101.5" x2="22.7" y2="102.8" stroke="#000" stroke-width="0.9" opacity="0.6"/><line x1="24.5" y1="75.6" x2="24.5" y2="79.9" stroke="#000" stroke-width="0.9" opacity="0.6"/><line x1="24.5" y1="98.3" x2="24.5" y2="102.8" stroke="#000" stroke-width="0.9" opacity="0.6"/><line x1="25.5" y1="75.6" x2="25.5" y2="80.1" stroke="#000" stroke-width="0.9" opacity="0.6"/><line x1="25.5" y1="98.0" x2="25.5" y2="102.8" stroke="#000" stroke-width="0.9" opacity="0.6"/><line x1="25.9" y1="74.2" x2="25.9" y2="75.6" stroke="#4a4800" stroke-width="0.8"/><line x1="25.9" y1="102.8" x2="25.9" y2="104.4" stroke="#4a4800" stroke-width="0.8"/><line x1="27.0" y1="75.6" x2="27.0" y2="79.0" stroke="#000" stroke-width="0.9" opacity="0.6"/><line x1="27.0" y1="100.7" x2="27.0" y2="102.8" stroke="#000" stroke-width="0.9" opacity="0.6"/><line x1="27.4" y1="73.6" x2="27.4" y2="75.6" stroke="#4a4800" stroke-width="0.8"/><line x1="28.5" y1="75.6" x2="28.5" y2="80.4" stroke="#000" stroke-width="0.9" opacity="0.6"/><line x1="28.5" y1="99.0" x2="28.5" y2="102.8" stroke="#000" stroke-width="0.9" opacity="0.6"/><line x1="29.9" y1="75.6" x2="29.9" y2="76.8" stroke="#000" stroke-width="0.9" opacity="0.6"/><line x1="29.9" y1="98.2" x2="29.9" y2="102.8" stroke="#000" stroke-width="0.9" opacity="0.6"/><line x1="31.4" y1="75.6" x2="31.4" y2="78.2" stroke="#000" stroke-width="0.9" opacity="0.6"/><line x1="31.4" y1="100.2" x2="31.4" y2="102.8" stroke="#000" stroke-width="0.9" opacity="0.6"/><line x1="31.8" y1="73.0" x2="31.8" y2="75.6" stroke="#4a4800" stroke-width="0.8"/><line x1="31.8" y1="102.8" x2="31.8" y2="104.0" stroke="#4a4800" stroke-width="0.8"/><line x1="32.4" y1="75.6" x2="32.4" y2="77.2" stroke="#000" stroke-width="0.9" opacity="0.6"/><line x1="32.4" y1="100.4" x2="32.4" y2="102.8" stroke="#000" stroke-width="0.9" opacity="0.6"/><line x1="32.8" y1="74.6" x2="32.8" y2="75.6" stroke="#4a4800" stroke-width="0.8"/><line x1="32.8" y1="102.8" x2="32.8" y2="104.1" stroke="#4a4800" stroke-width="0.8"/><line x1="33.9" y1="75.6" x2="33.9" y2="76.7" stroke="#000" stroke-width="0.9" opacity="0.6"/><line x1="33.9" y1="98.3" x2="33.9" y2="102.8" stroke="#000" stroke-width="0.9" opacity="0.6"/><line x1="34.3" y1="102.8" x2="34.3" y2="104.4" stroke="#4a4800" stroke-width="0.8"/><line x1="35.3" y1="75.6" x2="35.3" y2="78.1" stroke="#000" stroke-width="0.9" opacity="0.6"/><line x1="35.3" y1="101.3" x2="35.3" y2="102.8" stroke="#000" stroke-width="0.9" opacity="0.6"/><line x1="36.8" y1="75.6" x2="36.8" y2="78.5" stroke="#000" stroke-width="0.9" opacity="0.6"/><line x1="36.8" y1="101.5" x2="36.8" y2="102.8" stroke="#000" stroke-width="0.9" opacity="0.6"/><line x1="37.2" y1="73.7" x2="37.2" y2="75.6" stroke="#4a4800" stroke-width="0.8"/><line x1="38.5" y1="75.6" x2="38.5" y2="77.2" stroke="#000" stroke-width="0.9" opacity="0.6"/><line x1="38.5" y1="101.7" x2="38.5" y2="102.8" stroke="#000" stroke-width="0.9" opacity="0.6"/><line x1="39.3" y1="75.6" x2="39.3" y2="78.8" stroke="#000" stroke-width="0.9" opacity="0.6"/><line x1="39.3" y1="101.7" x2="39.3" y2="102.8" stroke="#000" stroke-width="0.9" opacity="0.6"/><line x1="41.3" y1="75.6" x2="41.3" y2="79.4" stroke="#000" stroke-width="0.9" opacity="0.6"/><line x1="41.3" y1="100.8" x2="41.3" y2="102.8" stroke="#000" stroke-width="0.9" opacity="0.6"/><line x1="41.7" y1="102.8" x2="41.7" y2="105.7" stroke="#4a4800" stroke-width="0.8"/><line x1="42.4" y1="75.6" x2="42.4" y2="79.7" stroke="#000" stroke-width="0.9" opacity="0.6"/><line x1="42.4" y1="100.5" x2="42.4" y2="102.8" stroke="#000" stroke-width="0.9" opacity="0.6"/><line x1="42.8" y1="72.6" x2="42.8" y2="75.6" stroke="#4a4800" stroke-width="0.8"/><line x1="44.1" y1="75.6" x2="44.1" y2="79.8" stroke="#000" stroke-width="0.9" opacity="0.6"/><line x1="44.1" y1="98.5" x2="44.1" y2="102.8" stroke="#000" stroke-width="0.9" opacity="0.6"/><line x1="44.5" y1="102.8" x2="44.5" y2="105.1" stroke="#4a4800" stroke-width="0.8"/><line x1="45.1" y1="75.6" x2="45.1" y2="76.7" stroke="#000" stroke-width="0.9" opacity="0.6"/><line x1="45.1" y1="101.7" x2="45.1" y2="102.8" stroke="#000" stroke-width="0.9" opacity="0.6"/><line x1="46.8" y1="75.6" x2="46.8" y2="80.4" stroke="#000" stroke-width="0.9" opacity="0.6"/><line x1="46.8" y1="100.0" x2="46.8" y2="102.8" stroke="#000" stroke-width="0.9" opacity="0.6"/><line x1="48.4" y1="75.6" x2="48.4" y2="78.1" stroke="#000" stroke-width="0.9" opacity="0.6"/><line x1="48.4" y1="100.9" x2="48.4" y2="102.8" stroke="#000" stroke-width="0.9" opacity="0.6"/><line x1="48.8" y1="74.1" x2="48.8" y2="75.6" stroke="#4a4800" stroke-width="0.8"/><line x1="48.8" y1="102.8" x2="48.8" y2="105.4" stroke="#4a4800" stroke-width="0.8"/><line x1="49.7" y1="75.6" x2="49.7" y2="80.0" stroke="#000" stroke-width="0.9" opacity="0.6"/><line x1="49.7" y1="99.9" x2="49.7" y2="102.8" stroke="#000" stroke-width="0.9" opacity="0.6"/><line x1="50.5" y1="75.6" x2="50.5" y2="79.2" stroke="#000" stroke-width="0.9" opacity="0.6"/><line x1="50.5" y1="98.2" x2="50.5" y2="102.8" stroke="#000" stroke-width="0.9" opacity="0.6"/><line x1="52.2" y1="75.6" x2="52.2" y2="77.3" stroke="#000" stroke-width="0.9" opacity="0.6"/><line x1="52.2" y1="98.6" x2="52.2" y2="102.8" stroke="#000" stroke-width="0.9" opacity="0.6"/><line x1="54.0" y1="75.6" x2="54.0" y2="78.2" stroke="#000" stroke-width="0.9" opacity="0.6"/><line x1="54.0" y1="100.2" x2="54.0" y2="102.8" stroke="#000" stroke-width="0.9" opacity="0.6"/><line x1="54.7" y1="75.6" x2="54.7" y2="77.1" stroke="#000" stroke-width="0.9" opacity="0.6"/><line x1="54.7" y1="101.2" x2="54.7" y2="102.8" stroke="#000" stroke-width="0.9" opacity="0.6"/><line x1="56.1" y1="75.6" x2="56.1" y2="79.9" stroke="#000" stroke-width="0.9" opacity="0.6"/><line x1="56.1" y1="97.9" x2="56.1" y2="102.8" stroke="#000" stroke-width="0.9" opacity="0.6"/><line x1="57.8" y1="75.6" x2="57.8" y2="77.1" stroke="#000" stroke-width="0.9" opacity="0.6"/><line x1="57.8" y1="101.7" x2="57.8" y2="102.8" stroke="#000" stroke-width="0.9" opacity="0.6"/><line x1="59.2" y1="75.6" x2="59.2" y2="80.3" stroke="#000" stroke-width="0.9" opacity="0.6"/><line x1="59.2" y1="100.1" x2="59.2" y2="102.8" stroke="#000" stroke-width="0.9" opacity="0.6"/><line x1="60.4" y1="75.6" x2="60.4" y2="77.6" stroke="#000" stroke-width="0.9" opacity="0.6"/><line x1="60.4" y1="100.6" x2="60.4" y2="102.8" stroke="#000" stroke-width="0.9" opacity="0.6"/><line x1="60.8" y1="73.1" x2="60.8" y2="75.6" stroke="#4a4800" stroke-width="0.8"/><line x1="61.9" y1="75.6" x2="61.9" y2="77.1" stroke="#000" stroke-width="0.9" opacity="0.6"/><line x1="61.9" y1="98.2" x2="61.9" y2="102.8" stroke="#000" stroke-width="0.9" opacity="0.6"/><line x1="63.5" y1="75.6" x2="63.5" y2="80.2" stroke="#000" stroke-width="0.9" opacity="0.6"/><line x1="63.5" y1="100.1" x2="63.5" y2="102.8" stroke="#000" stroke-width="0.9" opacity="0.6"/><line x1="64.8" y1="75.6" x2="64.8" y2="78.7" stroke="#000" stroke-width="0.9" opacity="0.6"/><line x1="64.8" y1="101.7" x2="64.8" y2="102.8" stroke="#000" stroke-width="0.9" opacity="0.6"/><line x1="65.2" y1="102.8" x2="65.2" y2="103.8" stroke="#4a4800" stroke-width="0.8"/><line x1="66.4" y1="75.6" x2="66.4" y2="77.3" stroke="#000" stroke-width="0.9" opacity="0.6"/><line x1="66.4" y1="99.9" x2="66.4" y2="102.8" stroke="#000" stroke-width="0.9" opacity="0.6"/><line x1="67.5" y1="75.6" x2="67.5" y2="78.7" stroke="#000" stroke-width="0.9" opacity="0.6"/><line x1="67.5" y1="99.6" x2="67.5" y2="102.8" stroke="#000" stroke-width="0.9" opacity="0.6"/><line x1="67.9" y1="102.8" x2="67.9" y2="105.2" stroke="#4a4800" stroke-width="0.8"/><line x1="68.8" y1="75.6" x2="68.8" y2="77.7" stroke="#000" stroke-width="0.9" opacity="0.6"/><line x1="68.8" y1="98.7" x2="68.8" y2="102.8" stroke="#000" stroke-width="0.9" opacity="0.6"/><line x1="70.6" y1="75.6" x2="70.6" y2="80.2" stroke="#000" stroke-width="0.9" opacity="0.6"/><line x1="70.6" y1="100.0" x2="70.6" y2="102.8" stroke="#000" stroke-width="0.9" opacity="0.6"/><line x1="71.8" y1="75.6" x2="71.8" y2="79.4" stroke="#000" stroke-width="0.9" opacity="0.6"/><line x1="71.8" y1="100.0" x2="71.8" y2="102.8" stroke="#000" stroke-width="0.9" opacity="0.6"/><line x1="73.6" y1="75.6" x2="73.6" y2="79.4" stroke="#000" stroke-width="0.9" opacity="0.6"/><line x1="73.6" y1="98.3" x2="73.6" y2="102.8" stroke="#000" stroke-width="0.9" opacity="0.6"/><line x1="74.6" y1="75.6" x2="74.6" y2="80.4" stroke="#000" stroke-width="0.9" opacity="0.6"/><line x1="74.6" y1="98.4" x2="74.6" y2="102.8" stroke="#000" stroke-width="0.9" opacity="0.6"/><line x1="75.0" y1="74.3" x2="75.0" y2="75.6" stroke="#4a4800" stroke-width="0.8"/><line x1="75.7" y1="75.6" x2="75.7" y2="77.6" stroke="#000" stroke-width="0.9" opacity="0.6"/><line x1="75.7" y1="101.5" x2="75.7" y2="102.8" stroke="#000" stroke-width="0.9" opacity="0.6"/><line x1="77.7" y1="75.6" x2="77.7" y2="77.2" stroke="#000" stroke-width="0.9" opacity="0.6"/><line x1="77.7" y1="98.9" x2="77.7" y2="102.8" stroke="#000" stroke-width="0.9" opacity="0.6"/><line x1="78.1" y1="102.8" x2="78.1" y2="106.0" stroke="#4a4800" stroke-width="0.8"/><line x1="79.2" y1="75.6" x2="79.2" y2="77.5" stroke="#000" stroke-width="0.9" opacity="0.6"/><line x1="79.2" y1="98.0" x2="79.2" y2="102.8" stroke="#000" stroke-width="0.9" opacity="0.6"/><line x1="80.6" y1="75.6" x2="80.6" y2="79.9" stroke="#000" stroke-width="0.9" opacity="0.6"/><line x1="80.6" y1="101.2" x2="80.6" y2="102.8" stroke="#000" stroke-width="0.9" opacity="0.6"/><line x1="81.5" y1="75.6" x2="81.5" y2="77.4" stroke="#000" stroke-width="0.9" opacity="0.6"/><line x1="81.5" y1="100.5" x2="81.5" y2="102.8" stroke="#000" stroke-width="0.9" opacity="0.6"/><line x1="81.9" y1="102.8" x2="81.9" y2="105.2" stroke="#4a4800" stroke-width="0.8"/><line x1="83.0" y1="75.6" x2="83.0" y2="76.7" stroke="#000" stroke-width="0.9" opacity="0.6"/><line x1="83.0" y1="100.5" x2="83.0" y2="102.8" stroke="#000" stroke-width="0.9" opacity="0.6"/><line x1="84.1" y1="75.6" x2="84.1" y2="80.5" stroke="#000" stroke-width="0.9" opacity="0.6"/><line x1="84.1" y1="98.6" x2="84.1" y2="102.8" stroke="#000" stroke-width="0.9" opacity="0.6"/><line x1="84.5" y1="102.8" x2="84.5" y2="104.5" stroke="#4a4800" stroke-width="0.8"/><line x1="85.4" y1="75.6" x2="85.4" y2="79.7" stroke="#000" stroke-width="0.9" opacity="0.6"/><line x1="85.4" y1="100.7" x2="85.4" y2="102.8" stroke="#000" stroke-width="0.9" opacity="0.6"/><line x1="85.8" y1="73.5" x2="85.8" y2="75.6" stroke="#4a4800" stroke-width="0.8"/><line x1="87.5" y1="75.6" x2="87.5" y2="77.6" stroke="#000" stroke-width="0.9" opacity="0.6"/><line x1="87.5" y1="101.2" x2="87.5" y2="102.8" stroke="#000" stroke-width="0.9" opacity="0.6"/><line x1="88.8" y1="75.6" x2="88.8" y2="77.0" stroke="#000" stroke-width="0.9" opacity="0.6"/><line x1="88.8" y1="101.6" x2="88.8" y2="102.8" stroke="#000" stroke-width="0.9" opacity="0.6"/><line x1="89.7" y1="75.6" x2="89.7" y2="80.4" stroke="#000" stroke-width="0.9" opacity="0.6"/><line x1="89.7" y1="99.3" x2="89.7" y2="102.8" stroke="#000" stroke-width="0.9" opacity="0.6"/><line x1="90.1" y1="102.8" x2="90.1" y2="105.9" stroke="#4a4800" stroke-width="0.8"/><line x1="91.1" y1="75.6" x2="91.1" y2="80.1" stroke="#000" stroke-width="0.9" opacity="0.6"/><line x1="91.1" y1="100.0" x2="91.1" y2="102.8" stroke="#000" stroke-width="0.9" opacity="0.6"/><line x1="93.1" y1="75.6" x2="93.1" y2="77.7" stroke="#000" stroke-width="0.9" opacity="0.6"/><line x1="93.1" y1="101.3" x2="93.1" y2="102.8" stroke="#000" stroke-width="0.9" opacity="0.6"/><line x1="93.5" y1="102.8" x2="93.5" y2="104.1" stroke="#4a4800" stroke-width="0.8"/><line x1="93.9" y1="75.6" x2="93.9" y2="76.8" stroke="#000" stroke-width="0.9" opacity="0.6"/><line x1="93.9" y1="101.0" x2="93.9" y2="102.8" stroke="#000" stroke-width="0.9" opacity="0.6"/><line x1="95.8" y1="75.6" x2="95.8" y2="77.8" stroke="#000" stroke-width="0.9" opacity="0.6"/><line x1="95.8" y1="99.8" x2="95.8" y2="102.8" stroke="#000" stroke-width="0.9" opacity="0.6"/><line x1="96.2" y1="73.7" x2="96.2" y2="75.6" stroke="#4a4800" stroke-width="0.8"/><line x1="96.2" y1="102.8" x2="96.2" y2="104.4" stroke="#4a4800" stroke-width="0.8"/><line x1="96.6" y1="75.6" x2="96.6" y2="79.5" stroke="#000" stroke-width="0.9" opacity="0.6"/><line x1="96.6" y1="99.6" x2="96.6" y2="102.8" stroke="#000" stroke-width="0.9" opacity="0.6"/><line x1="97.0" y1="73.4" x2="97.0" y2="75.6" stroke="#4a4800" stroke-width="0.8"/><line x1="98.1" y1="75.6" x2="98.1" y2="79.9" stroke="#000" stroke-width="0.9" opacity="0.6"/><line x1="98.1" y1="100.1" x2="98.1" y2="102.8" stroke="#000" stroke-width="0.9" opacity="0.6"/><line x1="99.7" y1="75.6" x2="99.7" y2="78.6" stroke="#000" stroke-width="0.9" opacity="0.6"/><line x1="99.7" y1="99.0" x2="99.7" y2="102.8" stroke="#000" stroke-width="0.9" opacity="0.6"/><line x1="101.5" y1="75.6" x2="101.5" y2="79.4" stroke="#000" stroke-width="0.9" opacity="0.6"/><line x1="101.5" y1="99.3" x2="101.5" y2="102.8" stroke="#000" stroke-width="0.9" opacity="0.6"/><line x1="102.2" y1="75.6" x2="102.2" y2="77.1" stroke="#000" stroke-width="0.9" opacity="0.6"/><line x1="102.2" y1="101.5" x2="102.2" y2="102.8" stroke="#000" stroke-width="0.9" opacity="0.6"/><line x1="103.7" y1="75.6" x2="103.7" y2="76.9" stroke="#000" stroke-width="0.9" opacity="0.6"/><line x1="103.7" y1="98.4" x2="103.7" y2="102.8" stroke="#000" stroke-width="0.9" opacity="0.6"/><line x1="105.2" y1="75.6" x2="105.2" y2="77.6" stroke="#000" stroke-width="0.9" opacity="0.6"/><line x1="105.2" y1="100.6" x2="105.2" y2="102.8" stroke="#000" stroke-width="0.9" opacity="0.6"/><line x1="105.6" y1="102.8" x2="105.6" y2="104.9" stroke="#4a4800" stroke-width="0.8"/><line x1="106.6" y1="75.6" x2="106.6" y2="80.4" stroke="#000" stroke-width="0.9" opacity="0.6"/><line x1="106.6" y1="97.9" x2="106.6" y2="102.8" stroke="#000" stroke-width="0.9" opacity="0.6"/><line x1="107.0" y1="102.8" x2="107.0" y2="106.2" stroke="#4a4800" stroke-width="0.8"/><line x1="108.0" y1="75.6" x2="108.0" y2="78.0" stroke="#000" stroke-width="0.9" opacity="0.6"/><line x1="108.0" y1="101.8" x2="108.0" y2="102.8" stroke="#000" stroke-width="0.9" opacity="0.6"/><line x1="109.6" y1="75.6" x2="109.6" y2="77.4" stroke="#000" stroke-width="0.9" opacity="0.6"/><line x1="109.6" y1="99.8" x2="109.6" y2="102.8" stroke="#000" stroke-width="0.9" opacity="0.6"/><line x1="110.0" y1="73.9" x2="110.0" y2="75.6" stroke="#4a4800" stroke-width="0.8"/><line x1="110.0" y1="102.8" x2="110.0" y2="104.8" stroke="#4a4800" stroke-width="0.8"/><line x1="110.6" y1="75.6" x2="110.6" y2="76.7" stroke="#000" stroke-width="0.9" opacity="0.6"/><line x1="110.6" y1="100.6" x2="110.6" y2="102.8" stroke="#000" stroke-width="0.9" opacity="0.6"/><line x1="111.0" y1="73.1" x2="111.0" y2="75.6" stroke="#4a4800" stroke-width="0.8"/><line x1="112.6" y1="75.6" x2="112.6" y2="79.2" stroke="#000" stroke-width="0.9" opacity="0.6"/><line x1="112.6" y1="98.9" x2="112.6" y2="102.8" stroke="#000" stroke-width="0.9" opacity="0.6"/><line x1="113.7" y1="75.6" x2="113.7" y2="80.5" stroke="#000" stroke-width="0.9" opacity="0.6"/><line x1="113.7" y1="101.2" x2="113.7" y2="102.8" stroke="#000" stroke-width="0.9" opacity="0.6"/><line x1="114.8" y1="75.6" x2="114.8" y2="79.9" stroke="#000" stroke-width="0.9" opacity="0.6"/><line x1="114.8" y1="98.2" x2="114.8" y2="102.8" stroke="#000" stroke-width="0.9" opacity="0.6"/><line x1="116.8" y1="75.6" x2="116.8" y2="77.2" stroke="#000" stroke-width="0.9" opacity="0.6"/><line x1="116.8" y1="99.7" x2="116.8" y2="102.8" stroke="#000" stroke-width="0.9" opacity="0.6"/><line x1="118.2" y1="75.6" x2="118.2" y2="79.9" stroke="#000" stroke-width="0.9" opacity="0.6"/><line x1="118.2" y1="99.5" x2="118.2" y2="102.8" stroke="#000" stroke-width="0.9" opacity="0.6"/><line x1="119.6" y1="75.6" x2="119.6" y2="77.5" stroke="#000" stroke-width="0.9" opacity="0.6"/><line x1="119.6" y1="101.7" x2="119.6" y2="102.8" stroke="#000" stroke-width="0.9" opacity="0.6"/><line x1="120.0" y1="73.7" x2="120.0" y2="75.6" stroke="#4a4800" stroke-width="0.8"/><line x1="120.0" y1="102.8" x2="120.0" y2="105.9" stroke="#4a4800" stroke-width="0.8"/><line x1="120.8" y1="75.6" x2="120.8" y2="79.1" stroke="#000" stroke-width="0.9" opacity="0.6"/><line x1="120.8" y1="99.3" x2="120.8" y2="102.8" stroke="#000" stroke-width="0.9" opacity="0.6"/><line x1="121.8" y1="75.6" x2="121.8" y2="79.8" stroke="#000" stroke-width="0.9" opacity="0.6"/><line x1="121.8" y1="98.8" x2="121.8" y2="102.8" stroke="#000" stroke-width="0.9" opacity="0.6"/><line x1="123.7" y1="75.6" x2="123.7" y2="76.9" stroke="#000" stroke-width="0.9" opacity="0.6"/><line x1="123.7" y1="98.9" x2="123.7" y2="102.8" stroke="#000" stroke-width="0.9" opacity="0.6"/><line x1="124.1" y1="102.8" x2="124.1" y2="104.5" stroke="#4a4800" stroke-width="0.8"/><line x1="125.2" y1="75.6" x2="125.2" y2="77.4" stroke="#000" stroke-width="0.9" opacity="0.6"/><line x1="125.2" y1="98.8" x2="125.2" y2="102.8" stroke="#000" stroke-width="0.9" opacity="0.6"/><line x1="126.3" y1="75.6" x2="126.3" y2="78.5" stroke="#000" stroke-width="0.9" opacity="0.6"/><line x1="126.3" y1="99.1" x2="126.3" y2="102.8" stroke="#000" stroke-width="0.9" opacity="0.6"/><line x1="127.9" y1="75.6" x2="127.9" y2="76.9" stroke="#000" stroke-width="0.9" opacity="0.6"/><line x1="127.9" y1="101.2" x2="127.9" y2="102.8" stroke="#000" stroke-width="0.9" opacity="0.6"/><line x1="129.0" y1="75.6" x2="129.0" y2="78.9" stroke="#000" stroke-width="0.9" opacity="0.6"/><line x1="129.0" y1="101.8" x2="129.0" y2="102.8" stroke="#000" stroke-width="0.9" opacity="0.6"/><line x1="129.4" y1="73.9" x2="129.4" y2="75.6" stroke="#4a4800" stroke-width="0.8"/><line x1="130.8" y1="75.6" x2="130.8" y2="79.3" stroke="#000" stroke-width="0.9" opacity="0.6"/><line x1="130.8" y1="100.6" x2="130.8" y2="102.8" stroke="#000" stroke-width="0.9" opacity="0.6"/><line x1="132.0" y1="75.6" x2="132.0" y2="77.1" stroke="#000" stroke-width="0.9" opacity="0.6"/><line x1="132.0" y1="98.2" x2="132.0" y2="102.8" stroke="#000" stroke-width="0.9" opacity="0.6"/><line x1="132.4" y1="72.2" x2="132.4" y2="75.6" stroke="#4a4800" stroke-width="0.8"/><line x1="133.0" y1="75.6" x2="133.0" y2="78.4" stroke="#000" stroke-width="0.9" opacity="0.6"/><line x1="133.0" y1="98.5" x2="133.0" y2="102.8" stroke="#000" stroke-width="0.9" opacity="0.6"/><line x1="134.6" y1="75.6" x2="134.6" y2="77.4" stroke="#000" stroke-width="0.9" opacity="0.6"/><line x1="134.6" y1="98.0" x2="134.6" y2="102.8" stroke="#000" stroke-width="0.9" opacity="0.6"/><line x1="135.0" y1="73.1" x2="135.0" y2="75.6" stroke="#4a4800" stroke-width="0.8"/><line x1="135.0" y1="102.8" x2="135.0" y2="105.1" stroke="#4a4800" stroke-width="0.8"/><line x1="136.6" y1="75.6" x2="136.6" y2="77.1" stroke="#000" stroke-width="0.9" opacity="0.6"/><line x1="136.6" y1="98.5" x2="136.6" y2="102.8" stroke="#000" stroke-width="0.9" opacity="0.6"/><line x1="137.8" y1="75.6" x2="137.8" y2="77.5" stroke="#000" stroke-width="0.9" opacity="0.6"/><line x1="137.8" y1="98.2" x2="137.8" y2="102.8" stroke="#000" stroke-width="0.9" opacity="0.6"/><line x1="138.2" y1="102.8" x2="138.2" y2="103.8" stroke="#4a4800" stroke-width="0.8"/><line x1="139.0" y1="75.6" x2="139.0" y2="78.4" stroke="#000" stroke-width="0.9" opacity="0.6"/><line x1="139.0" y1="100.6" x2="139.0" y2="102.8" stroke="#000" stroke-width="0.9" opacity="0.6"/><line x1="139.4" y1="73.7" x2="139.4" y2="75.6" stroke="#4a4800" stroke-width="0.8"/><line x1="140.7" y1="75.6" x2="140.7" y2="76.6" stroke="#000" stroke-width="0.9" opacity="0.6"/><line x1="140.7" y1="98.8" x2="140.7" y2="102.8" stroke="#000" stroke-width="0.9" opacity="0.6"/><line x1="141.1" y1="102.8" x2="141.1" y2="106.1" stroke="#4a4800" stroke-width="0.8"/><line x1="142.0" y1="75.6" x2="142.0" y2="80.2" stroke="#000" stroke-width="0.9" opacity="0.6"/><line x1="142.0" y1="100.6" x2="142.0" y2="102.8" stroke="#000" stroke-width="0.9" opacity="0.6"/><line x1="143.6" y1="75.6" x2="143.6" y2="79.0" stroke="#000" stroke-width="0.9" opacity="0.6"/><line x1="143.6" y1="100.4" x2="143.6" y2="102.8" stroke="#000" stroke-width="0.9" opacity="0.6"/><line x1="144.2" y1="75.6" x2="144.2" y2="77.0" stroke="#000" stroke-width="0.9" opacity="0.6"/><line x1="144.2" y1="98.5" x2="144.2" y2="102.8" stroke="#000" stroke-width="0.9" opacity="0.6"/><line x1="145.8" y1="75.6" x2="145.8" y2="77.7" stroke="#000" stroke-width="0.9" opacity="0.6"/><line x1="145.8" y1="99.8" x2="145.8" y2="102.8" stroke="#000" stroke-width="0.9" opacity="0.6"/><line x1="146.2" y1="73.7" x2="146.2" y2="75.6" stroke="#4a4800" stroke-width="0.8"/><line x1="147.7" y1="75.6" x2="147.7" y2="79.8" stroke="#000" stroke-width="0.9" opacity="0.6"/><line x1="147.7" y1="99.3" x2="147.7" y2="102.8" stroke="#000" stroke-width="0.9" opacity="0.6"/><line x1="148.8" y1="75.6" x2="148.8" y2="79.5" stroke="#000" stroke-width="0.9" opacity="0.6"/><line x1="148.8" y1="101.6" x2="148.8" y2="102.8" stroke="#000" stroke-width="0.9" opacity="0.6"/><line x1="150.4" y1="75.6" x2="150.4" y2="79.2" stroke="#000" stroke-width="0.9" opacity="0.6"/><line x1="150.4" y1="100.7" x2="150.4" y2="102.8" stroke="#000" stroke-width="0.9" opacity="0.6"/><line x1="150.8" y1="72.3" x2="150.8" y2="75.6" stroke="#4a4800" stroke-width="0.8"/><line x1="150.8" y1="102.8" x2="150.8" y2="105.0" stroke="#4a4800" stroke-width="0.8"/><line x1="151.5" y1="75.6" x2="151.5" y2="77.8" stroke="#000" stroke-width="0.9" opacity="0.6"/><line x1="151.5" y1="98.8" x2="151.5" y2="102.8" stroke="#000" stroke-width="0.9" opacity="0.6"/><line x1="153.1" y1="75.6" x2="153.1" y2="77.8" stroke="#000" stroke-width="0.9" opacity="0.6"/><line x1="153.1" y1="99.6" x2="153.1" y2="102.8" stroke="#000" stroke-width="0.9" opacity="0.6"/><line x1="153.5" y1="102.8" x2="153.5" y2="104.2" stroke="#4a4800" stroke-width="0.8"/><line x1="154.2" y1="75.6" x2="154.2" y2="80.2" stroke="#000" stroke-width="0.9" opacity="0.6"/><line x1="154.2" y1="99.8" x2="154.2" y2="102.8" stroke="#000" stroke-width="0.9" opacity="0.6"/><line x1="154.6" y1="72.3" x2="154.6" y2="75.6" stroke="#4a4800" stroke-width="0.8"/><line x1="155.8" y1="75.6" x2="155.8" y2="77.2" stroke="#000" stroke-width="0.9" opacity="0.6"/><line x1="155.8" y1="101.0" x2="155.8" y2="102.8" stroke="#000" stroke-width="0.9" opacity="0.6"/><line x1="156.2" y1="73.7" x2="156.2" y2="75.6" stroke="#4a4800" stroke-width="0.8"/><line x1="156.2" y1="102.8" x2="156.2" y2="104.4" stroke="#4a4800" stroke-width="0.8"/><line x1="157.0" y1="75.6" x2="157.0" y2="78.9" stroke="#000" stroke-width="0.9" opacity="0.6"/><line x1="157.0" y1="98.3" x2="157.0" y2="102.8" stroke="#000" stroke-width="0.9" opacity="0.6"/><line x1="158.5" y1="75.6" x2="158.5" y2="78.7" stroke="#000" stroke-width="0.9" opacity="0.6"/><line x1="158.5" y1="100.3" x2="158.5" y2="102.8" stroke="#000" stroke-width="0.9" opacity="0.6"/><line x1="158.9" y1="102.8" x2="158.9" y2="104.5" stroke="#4a4800" stroke-width="0.8"/><line x1="160.4" y1="75.6" x2="160.4" y2="77.1" stroke="#000" stroke-width="0.9" opacity="0.6"/><line x1="160.4" y1="99.8" x2="160.4" y2="102.8" stroke="#000" stroke-width="0.9" opacity="0.6"/><line x1="161.2" y1="75.6" x2="161.2" y2="77.7" stroke="#000" stroke-width="0.9" opacity="0.6"/><line x1="161.2" y1="100.8" x2="161.2" y2="102.8" stroke="#000" stroke-width="0.9" opacity="0.6"/><line x1="163.2" y1="75.6" x2="163.2" y2="80.0" stroke="#000" stroke-width="0.9" opacity="0.6"/><line x1="163.2" y1="98.3" x2="163.2" y2="102.8" stroke="#000" stroke-width="0.9" opacity="0.6"/><line x1="163.6" y1="74.5" x2="163.6" y2="75.6" stroke="#4a4800" stroke-width="0.8"/><line x1="164.5" y1="75.6" x2="164.5" y2="78.5" stroke="#000" stroke-width="0.9" opacity="0.6"/><line x1="164.5" y1="99.5" x2="164.5" y2="102.8" stroke="#000" stroke-width="0.9" opacity="0.6"/><line x1="164.9" y1="73.6" x2="164.9" y2="75.6" stroke="#4a4800" stroke-width="0.8"/><line x1="165.9" y1="75.6" x2="165.9" y2="80.0" stroke="#000" stroke-width="0.9" opacity="0.6"/><line x1="165.9" y1="97.9" x2="165.9" y2="102.8" stroke="#000" stroke-width="0.9" opacity="0.6"/><line x1="166.3" y1="74.3" x2="166.3" y2="75.6" stroke="#4a4800" stroke-width="0.8"/><line x1="166.3" y1="102.8" x2="166.3" y2="105.1" stroke="#4a4800" stroke-width="0.8"/><line x1="167.1" y1="75.6" x2="167.1" y2="80.4" stroke="#000" stroke-width="0.9" opacity="0.6"/><line x1="167.1" y1="98.9" x2="167.1" y2="102.8" stroke="#000" stroke-width="0.9" opacity="0.6"/><line x1="168.4" y1="75.6" x2="168.4" y2="78.8" stroke="#000" stroke-width="0.9" opacity="0.6"/><line x1="168.4" y1="101.6" x2="168.4" y2="102.8" stroke="#000" stroke-width="0.9" opacity="0.6"/><line x1="168.8" y1="102.8" x2="168.8" y2="106.1" stroke="#4a4800" stroke-width="0.8"/><line x1="169.9" y1="75.6" x2="169.9" y2="77.8" stroke="#000" stroke-width="0.9" opacity="0.6"/><line x1="169.9" y1="101.3" x2="169.9" y2="102.8" stroke="#000" stroke-width="0.9" opacity="0.6"/><line x1="171.4" y1="75.6" x2="171.4" y2="77.0" stroke="#000" stroke-width="0.9" opacity="0.6"/><line x1="171.4" y1="101.5" x2="171.4" y2="102.8" stroke="#000" stroke-width="0.9" opacity="0.6"/><line x1="172.5" y1="75.6" x2="172.5" y2="77.5" stroke="#000" stroke-width="0.9" opacity="0.6"/><line x1="172.5" y1="99.4" x2="172.5" y2="102.8" stroke="#000" stroke-width="0.9" opacity="0.6"/><line x1="172.9" y1="73.8" x2="172.9" y2="75.6" stroke="#4a4800" stroke-width="0.8"/><line x1="174.4" y1="75.6" x2="174.4" y2="79.2" stroke="#000" stroke-width="0.9" opacity="0.6"/><line x1="174.4" y1="98.3" x2="174.4" y2="102.8" stroke="#000" stroke-width="0.9" opacity="0.6"/><line x1="174.8" y1="102.8" x2="174.8" y2="104.4" stroke="#4a4800" stroke-width="0.8"/><line x1="175.8" y1="75.6" x2="175.8" y2="79.4" stroke="#000" stroke-width="0.9" opacity="0.6"/><line x1="175.8" y1="100.6" x2="175.8" y2="102.8" stroke="#000" stroke-width="0.9" opacity="0.6"/><line x1="176.2" y1="73.4" x2="176.2" y2="75.6" stroke="#4a4800" stroke-width="0.8"/><line x1="176.7" y1="75.6" x2="176.7" y2="77.6" stroke="#000" stroke-width="0.9" opacity="0.6"/><line x1="176.7" y1="99.1" x2="176.7" y2="102.8" stroke="#000" stroke-width="0.9" opacity="0.6"/><line x1="177.1" y1="102.8" x2="177.1" y2="103.9" stroke="#4a4800" stroke-width="0.8"/><line x1="178.1" y1="75.6" x2="178.1" y2="78.3" stroke="#000" stroke-width="0.9" opacity="0.6"/><line x1="178.1" y1="99.1" x2="178.1" y2="102.8" stroke="#000" stroke-width="0.9" opacity="0.6"/><line x1="178.5" y1="72.6" x2="178.5" y2="75.6" stroke="#4a4800" stroke-width="0.8"/><line x1="179.6" y1="75.6" x2="179.6" y2="77.4" stroke="#000" stroke-width="0.9" opacity="0.6"/><line x1="179.6" y1="97.9" x2="179.6" y2="102.8" stroke="#000" stroke-width="0.9" opacity="0.6"/><line x1="180.8" y1="75.6" x2="180.8" y2="77.5" stroke="#000" stroke-width="0.9" opacity="0.6"/><line x1="180.8" y1="98.8" x2="180.8" y2="102.8" stroke="#000" stroke-width="0.9" opacity="0.6"/><line x1="182.4" y1="75.6" x2="182.4" y2="77.3" stroke="#000" stroke-width="0.9" opacity="0.6"/><line x1="182.4" y1="100.9" x2="182.4" y2="102.8" stroke="#000" stroke-width="0.9" opacity="0.6"/><line x1="184.2" y1="75.6" x2="184.2" y2="77.2" stroke="#000" stroke-width="0.9" opacity="0.6"/><line x1="184.2" y1="100.2" x2="184.2" y2="102.8" stroke="#000" stroke-width="0.9" opacity="0.6"/><line x1="184.6" y1="72.2" x2="184.6" y2="75.6" stroke="#4a4800" stroke-width="0.8"/><line x1="184.6" y1="102.8" x2="184.6" y2="103.9" stroke="#4a4800" stroke-width="0.8"/><line x1="184.8" y1="75.6" x2="184.8" y2="78.2" stroke="#000" stroke-width="0.9" opacity="0.6"/><line x1="184.8" y1="98.2" x2="184.8" y2="102.8" stroke="#000" stroke-width="0.9" opacity="0.6"/><line x1="187.0" y1="75.6" x2="187.0" y2="80.3" stroke="#000" stroke-width="0.9" opacity="0.6"/><line x1="187.0" y1="100.5" x2="187.0" y2="102.8" stroke="#000" stroke-width="0.9" opacity="0.6"/><line x1="187.4" y1="72.3" x2="187.4" y2="75.6" stroke="#4a4800" stroke-width="0.8"/><line x1="187.6" y1="75.6" x2="187.6" y2="79.3" stroke="#000" stroke-width="0.9" opacity="0.6"/><line x1="187.6" y1="100.3" x2="187.6" y2="102.8" stroke="#000" stroke-width="0.9" opacity="0.6"/><line x1="189.1" y1="75.6" x2="189.1" y2="76.6" stroke="#000" stroke-width="0.9" opacity="0.6"/><line x1="189.1" y1="100.7" x2="189.1" y2="102.8" stroke="#000" stroke-width="0.9" opacity="0.6"/><line x1="190.5" y1="75.6" x2="190.5" y2="80.5" stroke="#000" stroke-width="0.9" opacity="0.6"/><line x1="190.5" y1="101.0" x2="190.5" y2="102.8" stroke="#000" stroke-width="0.9" opacity="0.6"/><line x1="192.5" y1="75.6" x2="192.5" y2="78.3" stroke="#000" stroke-width="0.9" opacity="0.6"/><line x1="192.5" y1="101.6" x2="192.5" y2="102.8" stroke="#000" stroke-width="0.9" opacity="0.6"/><line x1="193.9" y1="75.6" x2="193.9" y2="77.4" stroke="#000" stroke-width="0.9" opacity="0.6"/><line x1="193.9" y1="100.3" x2="193.9" y2="102.8" stroke="#000" stroke-width="0.9" opacity="0.6"/><line x1="194.3" y1="102.8" x2="194.3" y2="104.8" stroke="#4a4800" stroke-width="0.8"/><line x1="195.2" y1="75.6" x2="195.2" y2="79.7" stroke="#000" stroke-width="0.9" opacity="0.6"/><line x1="195.2" y1="101.6" x2="195.2" y2="102.8" stroke="#000" stroke-width="0.9" opacity="0.6"/><line x1="195.6" y1="74.4" x2="195.6" y2="75.6" stroke="#4a4800" stroke-width="0.8"/><line x1="196.2" y1="75.6" x2="196.2" y2="79.6" stroke="#000" stroke-width="0.9" opacity="0.6"/><line x1="196.2" y1="98.2" x2="196.2" y2="102.8" stroke="#000" stroke-width="0.9" opacity="0.6"/><line x1="198.2" y1="75.6" x2="198.2" y2="79.1" stroke="#000" stroke-width="0.9" opacity="0.6"/><line x1="198.2" y1="100.8" x2="198.2" y2="102.8" stroke="#000" stroke-width="0.9" opacity="0.6"/><line x1="199.0" y1="75.6" x2="199.0" y2="76.6" stroke="#000" stroke-width="0.9" opacity="0.6"/><line x1="199.0" y1="98.8" x2="199.0" y2="102.8" stroke="#000" stroke-width="0.9" opacity="0.6"/><line x1="201.0" y1="75.6" x2="201.0" y2="76.7" stroke="#000" stroke-width="0.9" opacity="0.6"/><line x1="201.0" y1="100.9" x2="201.0" y2="102.8" stroke="#000" stroke-width="0.9" opacity="0.6"/><line x1="202.4" y1="75.6" x2="202.4" y2="78.1" stroke="#000" stroke-width="0.9" opacity="0.6"/><line x1="202.4" y1="100.8" x2="202.4" y2="102.8" stroke="#000" stroke-width="0.9" opacity="0.6"/><line x1="203.7" y1="75.6" x2="203.7" y2="77.3" stroke="#000" stroke-width="0.9" opacity="0.6"/><line x1="203.7" y1="98.6" x2="203.7" y2="102.8" stroke="#000" stroke-width="0.9" opacity="0.6"/><line x1="205.0" y1="75.6" x2="205.0" y2="79.0" stroke="#000" stroke-width="0.9" opacity="0.6"/><line x1="205.0" y1="100.5" x2="205.0" y2="102.8" stroke="#000" stroke-width="0.9" opacity="0.6"/><line x1="206.6" y1="232.2" x2="206.6" y2="233.5" stroke="#000" stroke-width="0.9" opacity="0.6"/><line x1="206.6" y1="257.6" x2="206.6" y2="259.4" stroke="#000" stroke-width="0.9" opacity="0.6"/><line x1="207.0" y1="259.4" x2="207.0" y2="260.6" stroke="#4a4800" stroke-width="0.8"/><line x1="207.4" y1="232.2" x2="207.4" y2="235.4" stroke="#000" stroke-width="0.9" opacity="0.6"/><line x1="207.4" y1="257.1" x2="207.4" y2="259.4" stroke="#000" stroke-width="0.9" opacity="0.6"/><line x1="209.6" y1="232.2" x2="209.6" y2="234.3" stroke="#000" stroke-width="0.9" opacity="0.6"/><line x1="209.6" y1="258.1" x2="209.6" y2="259.4" stroke="#000" stroke-width="0.9" opacity="0.6"/><line x1="210.0" y1="230.0" x2="210.0" y2="232.2" stroke="#4a4800" stroke-width="0.8"/><line x1="210.6" y1="232.2" x2="210.6" y2="234.1" stroke="#000" stroke-width="0.9" opacity="0.6"/><line x1="210.6" y1="256.7" x2="210.6" y2="259.4" stroke="#000" stroke-width="0.9" opacity="0.6"/><line x1="212.2" y1="232.2" x2="212.2" y2="236.6" stroke="#000" stroke-width="0.9" opacity="0.6"/><line x1="212.2" y1="255.7" x2="212.2" y2="259.4" stroke="#000" stroke-width="0.9" opacity="0.6"/><line x1="212.6" y1="229.1" x2="212.6" y2="232.2" stroke="#4a4800" stroke-width="0.8"/><line x1="213.5" y1="232.2" x2="213.5" y2="234.7" stroke="#000" stroke-width="0.9" opacity="0.6"/><line x1="213.5" y1="255.4" x2="213.5" y2="259.4" stroke="#000" stroke-width="0.9" opacity="0.6"/><line x1="213.9" y1="230.6" x2="213.9" y2="232.2" stroke="#4a4800" stroke-width="0.8"/><line x1="213.9" y1="259.4" x2="213.9" y2="260.8" stroke="#4a4800" stroke-width="0.8"/><line x1="215.1" y1="232.2" x2="215.1" y2="235.5" stroke="#000" stroke-width="0.9" opacity="0.6"/><line x1="215.1" y1="257.1" x2="215.1" y2="259.4" stroke="#000" stroke-width="0.9" opacity="0.6"/><line x1="217.2" y1="75.6" x2="217.2" y2="77.5" stroke="#000" stroke-width="0.9" opacity="0.6"/><line x1="217.2" y1="98.6" x2="217.2" y2="102.8" stroke="#000" stroke-width="0.9" opacity="0.6"/><line x1="219.5" y1="232.2" x2="219.5" y2="235.1" stroke="#000" stroke-width="0.9" opacity="0.6"/><line x1="219.5" y1="255.1" x2="219.5" y2="259.4" stroke="#000" stroke-width="0.9" opacity="0.6"/><line x1="220.9" y1="232.2" x2="220.9" y2="234.4" stroke="#000" stroke-width="0.9" opacity="0.6"/><line x1="220.9" y1="257.9" x2="220.9" y2="259.4" stroke="#000" stroke-width="0.9" opacity="0.6"/><line x1="221.3" y1="228.8" x2="221.3" y2="232.2" stroke="#4a4800" stroke-width="0.8"/><line x1="223.0" y1="232.2" x2="223.0" y2="234.7" stroke="#000" stroke-width="0.9" opacity="0.6"/><line x1="223.0" y1="254.9" x2="223.0" y2="259.4" stroke="#000" stroke-width="0.9" opacity="0.6"/><line x1="225.5" y1="75.6" x2="225.5" y2="80.4" stroke="#000" stroke-width="0.9" opacity="0.6"/><line x1="225.5" y1="101.4" x2="225.5" y2="102.8" stroke="#000" stroke-width="0.9" opacity="0.6"/><line x1="227.7" y1="232.2" x2="227.7" y2="234.7" stroke="#000" stroke-width="0.9" opacity="0.6"/><line x1="227.7" y1="257.8" x2="227.7" y2="259.4" stroke="#000" stroke-width="0.9" opacity="0.6"/><line x1="228.1" y1="230.6" x2="228.1" y2="232.2" stroke="#4a4800" stroke-width="0.8"/><line x1="230.8" y1="75.6" x2="230.8" y2="77.4" stroke="#000" stroke-width="0.9" opacity="0.6"/><line x1="230.8" y1="101.8" x2="230.8" y2="102.8" stroke="#000" stroke-width="0.9" opacity="0.6"/><line x1="233.0" y1="232.2" x2="233.0" y2="234.4" stroke="#000" stroke-width="0.9" opacity="0.6"/><line x1="233.0" y1="257.6" x2="233.0" y2="259.4" stroke="#000" stroke-width="0.9" opacity="0.6"/><line x1="235.6" y1="75.6" x2="235.6" y2="77.0" stroke="#000" stroke-width="0.9" opacity="0.6"/><line x1="235.6" y1="100.2" x2="235.6" y2="102.8" stroke="#000" stroke-width="0.9" opacity="0.6"/><line x1="238.3" y1="232.2" x2="238.3" y2="233.9" stroke="#000" stroke-width="0.9" opacity="0.6"/><line x1="238.3" y1="255.6" x2="238.3" y2="259.4" stroke="#000" stroke-width="0.9" opacity="0.6"/><line x1="241.2" y1="75.6" x2="241.2" y2="80.4" stroke="#000" stroke-width="0.9" opacity="0.6"/><line x1="241.2" y1="100.6" x2="241.2" y2="102.8" stroke="#000" stroke-width="0.9" opacity="0.6"/><line x1="244.0" y1="232.2" x2="244.0" y2="236.7" stroke="#000" stroke-width="0.9" opacity="0.6"/><line x1="244.0" y1="254.4" x2="244.0" y2="259.4" stroke="#000" stroke-width="0.9" opacity="0.6"/><line x1="244.4" y1="259.4" x2="244.4" y2="262.2" stroke="#4a4800" stroke-width="0.8"/><line x1="245.2" y1="232.2" x2="245.2" y2="233.2" stroke="#000" stroke-width="0.9" opacity="0.6"/><line x1="245.2" y1="254.8" x2="245.2" y2="259.4" stroke="#000" stroke-width="0.9" opacity="0.6"/><line x1="246.8" y1="232.2" x2="246.8" y2="236.7" stroke="#000" stroke-width="0.9" opacity="0.6"/><line x1="246.8" y1="256.6" x2="246.8" y2="259.4" stroke="#000" stroke-width="0.9" opacity="0.6"/><line x1="247.2" y1="231.2" x2="247.2" y2="232.2" stroke="#4a4800" stroke-width="0.8"/><line x1="249.6" y1="75.6" x2="249.6" y2="80.2" stroke="#000" stroke-width="0.9" opacity="0.6"/><line x1="249.6" y1="101.4" x2="249.6" y2="102.8" stroke="#000" stroke-width="0.9" opacity="0.6"/><line x1="250.8" y1="75.6" x2="250.8" y2="77.2" stroke="#000" stroke-width="0.9" opacity="0.6"/><line x1="250.8" y1="100.7" x2="250.8" y2="102.8" stroke="#000" stroke-width="0.9" opacity="0.6"/><line x1="251.9" y1="75.6" x2="251.9" y2="78.6" stroke="#000" stroke-width="0.9" opacity="0.6"/><line x1="251.9" y1="98.6" x2="251.9" y2="102.8" stroke="#000" stroke-width="0.9" opacity="0.6"/><line x1="252.3" y1="102.8" x2="252.3" y2="104.1" stroke="#4a4800" stroke-width="0.8"/><line x1="255.2" y1="232.2" x2="255.2" y2="237.1" stroke="#000" stroke-width="0.9" opacity="0.6"/><line x1="255.2" y1="256.5" x2="255.2" y2="259.4" stroke="#000" stroke-width="0.9" opacity="0.6"/><line x1="255.6" y1="228.9" x2="255.6" y2="232.2" stroke="#4a4800" stroke-width="0.8"/><line x1="257.8" y1="75.6" x2="257.8" y2="79.1" stroke="#000" stroke-width="0.9" opacity="0.6"/><line x1="257.8" y1="98.5" x2="257.8" y2="102.8" stroke="#000" stroke-width="0.9" opacity="0.6"/><line x1="258.2" y1="72.6" x2="258.2" y2="75.6" stroke="#4a4800" stroke-width="0.8"/><line x1="258.2" y1="102.8" x2="258.2" y2="104.8" stroke="#4a4800" stroke-width="0.8"/><line x1="260.4" y1="232.2" x2="260.4" y2="236.5" stroke="#000" stroke-width="0.9" opacity="0.6"/><line x1="260.4" y1="257.7" x2="260.4" y2="259.4" stroke="#000" stroke-width="0.9" opacity="0.6"/><line x1="260.8" y1="230.2" x2="260.8" y2="232.2" stroke="#4a4800" stroke-width="0.8"/><line x1="261.5" y1="232.2" x2="261.5" y2="233.7" stroke="#000" stroke-width="0.9" opacity="0.6"/><line x1="261.5" y1="257.4" x2="261.5" y2="259.4" stroke="#000" stroke-width="0.9" opacity="0.6"/><line x1="262.6" y1="232.2" x2="262.6" y2="235.4" stroke="#000" stroke-width="0.9" opacity="0.6"/><line x1="262.6" y1="255.4" x2="262.6" y2="259.4" stroke="#000" stroke-width="0.9" opacity="0.6"/><line x1="263.0" y1="229.1" x2="263.0" y2="232.2" stroke="#4a4800" stroke-width="0.8"/><line x1="263.0" y1="259.4" x2="263.0" y2="261.9" stroke="#4a4800" stroke-width="0.8"/><line x1="264.4" y1="232.2" x2="264.4" y2="235.7" stroke="#000" stroke-width="0.9" opacity="0.6"/><line x1="264.4" y1="257.2" x2="264.4" y2="259.4" stroke="#000" stroke-width="0.9" opacity="0.6"/><line x1="265.7" y1="232.2" x2="265.7" y2="235.8" stroke="#000" stroke-width="0.9" opacity="0.6"/><line x1="265.7" y1="256.6" x2="265.7" y2="259.4" stroke="#000" stroke-width="0.9" opacity="0.6"/><line x1="266.1" y1="259.4" x2="266.1" y2="261.9" stroke="#4a4800" stroke-width="0.8"/><line x1="268.2" y1="75.6" x2="268.2" y2="77.5" stroke="#000" stroke-width="0.9" opacity="0.6"/><line x1="268.2" y1="98.7" x2="268.2" y2="102.8" stroke="#000" stroke-width="0.9" opacity="0.6"/><line x1="269.4" y1="75.6" x2="269.4" y2="78.5" stroke="#000" stroke-width="0.9" opacity="0.6"/><line x1="269.4" y1="101.4" x2="269.4" y2="102.8" stroke="#000" stroke-width="0.9" opacity="0.6"/><line x1="269.8" y1="73.5" x2="269.8" y2="75.6" stroke="#4a4800" stroke-width="0.8"/><line x1="269.8" y1="102.8" x2="269.8" y2="104.9" stroke="#4a4800" stroke-width="0.8"/><line x1="271.0" y1="75.6" x2="271.0" y2="76.8" stroke="#000" stroke-width="0.9" opacity="0.6"/><line x1="271.0" y1="99.3" x2="271.0" y2="102.8" stroke="#000" stroke-width="0.9" opacity="0.6"/><line x1="271.4" y1="72.8" x2="271.4" y2="75.6" stroke="#4a4800" stroke-width="0.8"/><line x1="273.6" y1="232.2" x2="273.6" y2="233.4" stroke="#000" stroke-width="0.9" opacity="0.6"/><line x1="273.6" y1="256.4" x2="273.6" y2="259.4" stroke="#000" stroke-width="0.9" opacity="0.6"/><line x1="276.0" y1="75.6" x2="276.0" y2="80.0" stroke="#000" stroke-width="0.9" opacity="0.6"/><line x1="276.0" y1="97.8" x2="276.0" y2="102.8" stroke="#000" stroke-width="0.9" opacity="0.6"/><line x1="277.5" y1="75.6" x2="277.5" y2="80.5" stroke="#000" stroke-width="0.9" opacity="0.6"/><line x1="277.5" y1="99.8" x2="277.5" y2="102.8" stroke="#000" stroke-width="0.9" opacity="0.6"/><line x1="278.9" y1="75.6" x2="278.9" y2="79.8" stroke="#000" stroke-width="0.9" opacity="0.6"/><line x1="278.9" y1="98.1" x2="278.9" y2="102.8" stroke="#000" stroke-width="0.9" opacity="0.6"/><line x1="279.3" y1="73.7" x2="279.3" y2="75.6" stroke="#4a4800" stroke-width="0.8"/><line x1="281.4" y1="232.2" x2="281.4" y2="236.8" stroke="#000" stroke-width="0.9" opacity="0.6"/><line x1="281.4" y1="257.3" x2="281.4" y2="259.4" stroke="#000" stroke-width="0.9" opacity="0.6"/><line x1="281.8" y1="259.4" x2="281.8" y2="261.7" stroke="#4a4800" stroke-width="0.8"/><line x1="284.7" y1="75.6" x2="284.7" y2="77.4" stroke="#000" stroke-width="0.9" opacity="0.6"/><line x1="284.7" y1="100.7" x2="284.7" y2="102.8" stroke="#000" stroke-width="0.9" opacity="0.6"/><line x1="286.7" y1="232.2" x2="286.7" y2="233.9" stroke="#000" stroke-width="0.9" opacity="0.6"/><line x1="286.7" y1="257.8" x2="286.7" y2="259.4" stroke="#000" stroke-width="0.9" opacity="0.6"/><line x1="288.8" y1="232.2" x2="288.8" y2="233.9" stroke="#000" stroke-width="0.9" opacity="0.6"/><line x1="288.8" y1="255.3" x2="288.8" y2="259.4" stroke="#000" stroke-width="0.9" opacity="0.6"/><line x1="289.2" y1="229.9" x2="289.2" y2="232.2" stroke="#4a4800" stroke-width="0.8"/><line x1="289.7" y1="232.2" x2="289.7" y2="236.7" stroke="#000" stroke-width="0.9" opacity="0.6"/><line x1="289.7" y1="256.2" x2="289.7" y2="259.4" stroke="#000" stroke-width="0.9" opacity="0.6"/><line x1="290.9" y1="232.2" x2="290.9" y2="237.2" stroke="#000" stroke-width="0.9" opacity="0.6"/><line x1="290.9" y1="255.9" x2="290.9" y2="259.4" stroke="#000" stroke-width="0.9" opacity="0.6"/><line x1="292.5" y1="232.2" x2="292.5" y2="237.2" stroke="#000" stroke-width="0.9" opacity="0.6"/><line x1="292.5" y1="256.1" x2="292.5" y2="259.4" stroke="#000" stroke-width="0.9" opacity="0.6"/><line x1="295.1" y1="75.6" x2="295.1" y2="77.3" stroke="#000" stroke-width="0.9" opacity="0.6"/><line x1="295.1" y1="98.8" x2="295.1" y2="102.8" stroke="#000" stroke-width="0.9" opacity="0.6"/><line x1="295.5" y1="72.6" x2="295.5" y2="75.6" stroke="#4a4800" stroke-width="0.8"/><line x1="296.6" y1="75.6" x2="296.6" y2="80.5" stroke="#000" stroke-width="0.9" opacity="0.6"/><line x1="296.6" y1="99.5" x2="296.6" y2="102.8" stroke="#000" stroke-width="0.9" opacity="0.6"/><line x1="297.5" y1="75.6" x2="297.5" y2="76.7" stroke="#000" stroke-width="0.9" opacity="0.6"/><line x1="297.5" y1="101.2" x2="297.5" y2="102.8" stroke="#000" stroke-width="0.9" opacity="0.6"/><line x1="300.5" y1="232.2" x2="300.5" y2="236.8" stroke="#000" stroke-width="0.9" opacity="0.6"/><line x1="300.5" y1="257.9" x2="300.5" y2="259.4" stroke="#000" stroke-width="0.9" opacity="0.6"/><line x1="300.9" y1="229.6" x2="300.9" y2="232.2" stroke="#4a4800" stroke-width="0.8"/><line x1="300.9" y1="259.4" x2="300.9" y2="260.4" stroke="#4a4800" stroke-width="0.8"/><line x1="303.1" y1="75.6" x2="303.1" y2="77.0" stroke="#000" stroke-width="0.9" opacity="0.6"/><line x1="303.1" y1="100.4" x2="303.1" y2="102.8" stroke="#000" stroke-width="0.9" opacity="0.6"/><line x1="303.5" y1="73.1" x2="303.5" y2="75.6" stroke="#4a4800" stroke-width="0.8"/><line x1="304.4" y1="75.6" x2="304.4" y2="79.1" stroke="#000" stroke-width="0.9" opacity="0.6"/><line x1="304.4" y1="99.9" x2="304.4" y2="102.8" stroke="#000" stroke-width="0.9" opacity="0.6"/><line x1="304.8" y1="72.3" x2="304.8" y2="75.6" stroke="#4a4800" stroke-width="0.8"/><line x1="304.8" y1="102.8" x2="304.8" y2="104.2" stroke="#4a4800" stroke-width="0.8"/><line x1="305.7" y1="75.6" x2="305.7" y2="79.2" stroke="#000" stroke-width="0.9" opacity="0.6"/><line x1="305.7" y1="98.3" x2="305.7" y2="102.8" stroke="#000" stroke-width="0.9" opacity="0.6"/><line x1="308.4" y1="232.2" x2="308.4" y2="233.2" stroke="#000" stroke-width="0.9" opacity="0.6"/><line x1="308.4" y1="255.8" x2="308.4" y2="259.4" stroke="#000" stroke-width="0.9" opacity="0.6"/><line x1="311.4" y1="75.6" x2="311.4" y2="78.4" stroke="#000" stroke-width="0.9" opacity="0.6"/><line x1="311.4" y1="98.1" x2="311.4" y2="102.8" stroke="#000" stroke-width="0.9" opacity="0.6"/><line x1="311.8" y1="102.8" x2="311.8" y2="106.1" stroke="#4a4800" stroke-width="0.8"/><line x1="313.6" y1="232.2" x2="313.6" y2="235.3" stroke="#000" stroke-width="0.9" opacity="0.6"/><line x1="313.6" y1="256.8" x2="313.6" y2="259.4" stroke="#000" stroke-width="0.9" opacity="0.6"/><line x1="314.0" y1="231.1" x2="314.0" y2="232.2" stroke="#4a4800" stroke-width="0.8"/><line x1="316.2" y1="75.6" x2="316.2" y2="78.8" stroke="#000" stroke-width="0.9" opacity="0.6"/><line x1="316.2" y1="98.0" x2="316.2" y2="102.8" stroke="#000" stroke-width="0.9" opacity="0.6"/><line x1="316.6" y1="74.1" x2="316.6" y2="75.6" stroke="#4a4800" stroke-width="0.8"/><line x1="318.0" y1="75.6" x2="318.0" y2="79.2" stroke="#000" stroke-width="0.9" opacity="0.6"/><line x1="318.0" y1="98.5" x2="318.0" y2="102.8" stroke="#000" stroke-width="0.9" opacity="0.6"/><line x1="318.4" y1="73.8" x2="318.4" y2="75.6" stroke="#4a4800" stroke-width="0.8"/><line x1="319.1" y1="75.6" x2="319.1" y2="80.2" stroke="#000" stroke-width="0.9" opacity="0.6"/><line x1="319.1" y1="98.7" x2="319.1" y2="102.8" stroke="#000" stroke-width="0.9" opacity="0.6"/><line x1="319.5" y1="102.8" x2="319.5" y2="105.9" stroke="#4a4800" stroke-width="0.8"/><line x1="321.0" y1="75.6" x2="321.0" y2="78.5" stroke="#000" stroke-width="0.9" opacity="0.6"/><line x1="321.0" y1="98.8" x2="321.0" y2="102.8" stroke="#000" stroke-width="0.9" opacity="0.6"/><line x1="321.4" y1="102.8" x2="321.4" y2="104.1" stroke="#4a4800" stroke-width="0.8"/><line x1="322.0" y1="75.6" x2="322.0" y2="76.8" stroke="#000" stroke-width="0.9" opacity="0.6"/><line x1="322.0" y1="100.5" x2="322.0" y2="102.8" stroke="#000" stroke-width="0.9" opacity="0.6"/><line x1="323.9" y1="75.6" x2="323.9" y2="79.4" stroke="#000" stroke-width="0.9" opacity="0.6"/><line x1="323.9" y1="100.7" x2="323.9" y2="102.8" stroke="#000" stroke-width="0.9" opacity="0.6"/><line x1="325.2" y1="75.6" x2="325.2" y2="78.7" stroke="#000" stroke-width="0.9" opacity="0.6"/><line x1="325.2" y1="100.7" x2="325.2" y2="102.8" stroke="#000" stroke-width="0.9" opacity="0.6"/><line x1="327.2" y1="232.2" x2="327.2" y2="236.7" stroke="#000" stroke-width="0.9" opacity="0.6"/><line x1="327.2" y1="258.3" x2="327.2" y2="259.4" stroke="#000" stroke-width="0.9" opacity="0.6"/><line x1="327.6" y1="259.4" x2="327.6" y2="262.3" stroke="#4a4800" stroke-width="0.8"/><line x1="330.4" y1="75.6" x2="330.4" y2="79.6" stroke="#000" stroke-width="0.9" opacity="0.6"/><line x1="330.4" y1="100.5" x2="330.4" y2="102.8" stroke="#000" stroke-width="0.9" opacity="0.6"/><line x1="331.3" y1="75.6" x2="331.3" y2="80.2" stroke="#000" stroke-width="0.9" opacity="0.6"/><line x1="331.3" y1="99.3" x2="331.3" y2="102.8" stroke="#000" stroke-width="0.9" opacity="0.6"/><line x1="333.3" y1="75.6" x2="333.3" y2="78.5" stroke="#000" stroke-width="0.9" opacity="0.6"/><line x1="333.3" y1="98.4" x2="333.3" y2="102.8" stroke="#000" stroke-width="0.9" opacity="0.6"/><line x1="335.4" y1="232.2" x2="335.4" y2="236.1" stroke="#000" stroke-width="0.9" opacity="0.6"/><line x1="335.4" y1="256.1" x2="335.4" y2="259.4" stroke="#000" stroke-width="0.9" opacity="0.6"/><line x1="335.8" y1="259.4" x2="335.8" y2="262.0" stroke="#4a4800" stroke-width="0.8"/><line x1="337.8" y1="75.6" x2="337.8" y2="80.2" stroke="#000" stroke-width="0.9" opacity="0.6"/><line x1="337.8" y1="101.2" x2="337.8" y2="102.8" stroke="#000" stroke-width="0.9" opacity="0.6"/><line x1="338.2" y1="74.3" x2="338.2" y2="75.6" stroke="#4a4800" stroke-width="0.8"/><line x1="340.7" y1="232.2" x2="340.7" y2="233.8" stroke="#000" stroke-width="0.9" opacity="0.6"/><line x1="340.7" y1="258.3" x2="340.7" y2="259.4" stroke="#000" stroke-width="0.9" opacity="0.6"/><line x1="341.1" y1="229.5" x2="341.1" y2="232.2" stroke="#4a4800" stroke-width="0.8"/><line x1="342.4" y1="232.2" x2="342.4" y2="236.1" stroke="#000" stroke-width="0.9" opacity="0.6"/><line x1="342.4" y1="258.1" x2="342.4" y2="259.4" stroke="#000" stroke-width="0.9" opacity="0.6"/><line x1="343.9" y1="232.2" x2="343.9" y2="236.5" stroke="#000" stroke-width="0.9" opacity="0.6"/><line x1="343.9" y1="254.8" x2="343.9" y2="259.4" stroke="#000" stroke-width="0.9" opacity="0.6"/><line x1="344.3" y1="229.0" x2="344.3" y2="232.2" stroke="#4a4800" stroke-width="0.8"/><line x1="345.4" y1="232.2" x2="345.4" y2="233.6" stroke="#000" stroke-width="0.9" opacity="0.6"/><line x1="345.4" y1="257.6" x2="345.4" y2="259.4" stroke="#000" stroke-width="0.9" opacity="0.6"/><line x1="345.8" y1="231.1" x2="345.8" y2="232.2" stroke="#4a4800" stroke-width="0.8"/><line x1="346.6" y1="232.2" x2="346.6" y2="235.7" stroke="#000" stroke-width="0.9" opacity="0.6"/><line x1="346.6" y1="255.1" x2="346.6" y2="259.4" stroke="#000" stroke-width="0.9" opacity="0.6"/><line x1="347.5" y1="232.2" x2="347.5" y2="233.6" stroke="#000" stroke-width="0.9" opacity="0.6"/><line x1="347.5" y1="255.4" x2="347.5" y2="259.4" stroke="#000" stroke-width="0.9" opacity="0.6"/><line x1="347.9" y1="230.4" x2="347.9" y2="232.2" stroke="#4a4800" stroke-width="0.8"/><line x1="348.8" y1="232.2" x2="348.8" y2="234.2" stroke="#000" stroke-width="0.9" opacity="0.6"/><line x1="348.8" y1="257.3" x2="348.8" y2="259.4" stroke="#000" stroke-width="0.9" opacity="0.6"/><line x1="350.5" y1="232.2" x2="350.5" y2="237.1" stroke="#000" stroke-width="0.9" opacity="0.6"/><line x1="350.5" y1="256.4" x2="350.5" y2="259.4" stroke="#000" stroke-width="0.9" opacity="0.6"/><line x1="351.6" y1="232.2" x2="351.6" y2="234.9" stroke="#000" stroke-width="0.9" opacity="0.6"/><line x1="351.6" y1="256.7" x2="351.6" y2="259.4" stroke="#000" stroke-width="0.9" opacity="0.6"/><line x1="353.6" y1="232.2" x2="353.6" y2="235.4" stroke="#000" stroke-width="0.9" opacity="0.6"/><line x1="353.6" y1="257.5" x2="353.6" y2="259.4" stroke="#000" stroke-width="0.9" opacity="0.6"/><line x1="354.0" y1="259.4" x2="354.0" y2="262.4" stroke="#4a4800" stroke-width="0.8"/><line x1="354.5" y1="232.2" x2="354.5" y2="233.2" stroke="#000" stroke-width="0.9" opacity="0.6"/><line x1="354.5" y1="257.6" x2="354.5" y2="259.4" stroke="#000" stroke-width="0.9" opacity="0.6"/><line x1="356.6" y1="75.6" x2="356.6" y2="78.6" stroke="#000" stroke-width="0.9" opacity="0.6"/><line x1="356.6" y1="99.8" x2="356.6" y2="102.8" stroke="#000" stroke-width="0.9" opacity="0.6"/><line x1="357.0" y1="102.8" x2="357.0" y2="105.0" stroke="#4a4800" stroke-width="0.8"/><line x1="359.5" y1="232.2" x2="359.5" y2="236.5" stroke="#000" stroke-width="0.9" opacity="0.6"/><line x1="359.5" y1="257.4" x2="359.5" y2="259.4" stroke="#000" stroke-width="0.9" opacity="0.6"/><line x1="360.8" y1="232.2" x2="360.8" y2="236.0" stroke="#000" stroke-width="0.9" opacity="0.6"/><line x1="360.8" y1="256.4" x2="360.8" y2="259.4" stroke="#000" stroke-width="0.9" opacity="0.6"/><line x1="361.2" y1="229.6" x2="361.2" y2="232.2" stroke="#4a4800" stroke-width="0.8"/><line x1="361.2" y1="259.4" x2="361.2" y2="262.4" stroke="#4a4800" stroke-width="0.8"/><line x1="362.6" y1="232.2" x2="362.6" y2="236.3" stroke="#000" stroke-width="0.9" opacity="0.6"/><line x1="362.6" y1="255.9" x2="362.6" y2="259.4" stroke="#000" stroke-width="0.9" opacity="0.6"/><line x1="365.0" y1="75.6" x2="365.0" y2="80.2" stroke="#000" stroke-width="0.9" opacity="0.6"/><line x1="365.0" y1="101.5" x2="365.0" y2="102.8" stroke="#000" stroke-width="0.9" opacity="0.6"/><line x1="365.4" y1="102.8" x2="365.4" y2="104.3" stroke="#4a4800" stroke-width="0.8"/><line x1="367.5" y1="232.2" x2="367.5" y2="236.8" stroke="#000" stroke-width="0.9" opacity="0.6"/><line x1="367.5" y1="256.4" x2="367.5" y2="259.4" stroke="#000" stroke-width="0.9" opacity="0.6"/><line x1="368.9" y1="232.2" x2="368.9" y2="235.0" stroke="#000" stroke-width="0.9" opacity="0.6"/><line x1="368.9" y1="256.3" x2="368.9" y2="259.4" stroke="#000" stroke-width="0.9" opacity="0.6"/><line x1="370.6" y1="232.2" x2="370.6" y2="234.6" stroke="#000" stroke-width="0.9" opacity="0.6"/><line x1="370.6" y1="257.1" x2="370.6" y2="259.4" stroke="#000" stroke-width="0.9" opacity="0.6"/><line x1="371.0" y1="229.1" x2="371.0" y2="232.2" stroke="#4a4800" stroke-width="0.8"/><line x1="373.3" y1="75.6" x2="373.3" y2="77.3" stroke="#000" stroke-width="0.9" opacity="0.6"/><line x1="373.3" y1="100.0" x2="373.3" y2="102.8" stroke="#000" stroke-width="0.9" opacity="0.6"/><line x1="374.2" y1="75.6" x2="374.2" y2="78.4" stroke="#000" stroke-width="0.9" opacity="0.6"/><line x1="374.2" y1="98.3" x2="374.2" y2="102.8" stroke="#000" stroke-width="0.9" opacity="0.6"/><line x1="374.6" y1="74.1" x2="374.6" y2="75.6" stroke="#4a4800" stroke-width="0.8"/><line x1="376.0" y1="75.6" x2="376.0" y2="80.0" stroke="#000" stroke-width="0.9" opacity="0.6"/><line x1="376.0" y1="101.2" x2="376.0" y2="102.8" stroke="#000" stroke-width="0.9" opacity="0.6"/><line x1="376.4" y1="74.0" x2="376.4" y2="75.6" stroke="#4a4800" stroke-width="0.8"/><line x1="378.5" y1="232.2" x2="378.5" y2="233.8" stroke="#000" stroke-width="0.9" opacity="0.6"/><line x1="378.5" y1="257.1" x2="378.5" y2="259.4" stroke="#000" stroke-width="0.9" opacity="0.6"/><line x1="378.9" y1="228.8" x2="378.9" y2="232.2" stroke="#4a4800" stroke-width="0.8"/><line x1="379.5" y1="232.2" x2="379.5" y2="237.0" stroke="#000" stroke-width="0.9" opacity="0.6"/><line x1="379.5" y1="258.0" x2="379.5" y2="259.4" stroke="#000" stroke-width="0.9" opacity="0.6"/><line x1="381.5" y1="232.2" x2="381.5" y2="236.1" stroke="#000" stroke-width="0.9" opacity="0.6"/><line x1="381.5" y1="256.7" x2="381.5" y2="259.4" stroke="#000" stroke-width="0.9" opacity="0.6"/><line x1="381.9" y1="229.6" x2="381.9" y2="232.2" stroke="#4a4800" stroke-width="0.8"/><line x1="381.9" y1="259.4" x2="381.9" y2="260.9" stroke="#4a4800" stroke-width="0.8"/><line x1="383.7" y1="75.6" x2="383.7" y2="76.7" stroke="#000" stroke-width="0.9" opacity="0.6"/><line x1="383.7" y1="100.2" x2="383.7" y2="102.8" stroke="#000" stroke-width="0.9" opacity="0.6"/><line x1="385.2" y1="75.6" x2="385.2" y2="79.1" stroke="#000" stroke-width="0.9" opacity="0.6"/><line x1="385.2" y1="99.9" x2="385.2" y2="102.8" stroke="#000" stroke-width="0.9" opacity="0.6"/><line x1="385.6" y1="73.1" x2="385.6" y2="75.6" stroke="#4a4800" stroke-width="0.8"/><line x1="386.8" y1="75.6" x2="386.8" y2="80.2" stroke="#000" stroke-width="0.9" opacity="0.6"/><line x1="386.8" y1="100.1" x2="386.8" y2="102.8" stroke="#000" stroke-width="0.9" opacity="0.6"/><line x1="389.2" y1="232.2" x2="389.2" y2="234.1" stroke="#000" stroke-width="0.9" opacity="0.6"/><line x1="389.2" y1="255.5" x2="389.2" y2="259.4" stroke="#000" stroke-width="0.9" opacity="0.6"/><line x1="392.1" y1="75.6" x2="392.1" y2="80.0" stroke="#000" stroke-width="0.9" opacity="0.6"/><line x1="392.1" y1="99.1" x2="392.1" y2="102.8" stroke="#000" stroke-width="0.9" opacity="0.6"/><line x1="394.4" y1="232.2" x2="394.4" y2="235.7" stroke="#000" stroke-width="0.9" opacity="0.6"/><line x1="394.4" y1="258.0" x2="394.4" y2="259.4" stroke="#000" stroke-width="0.9" opacity="0.6"/><line x1="396.1" y1="232.2" x2="396.1" y2="235.7" stroke="#000" stroke-width="0.9" opacity="0.6"/><line x1="396.1" y1="257.4" x2="396.1" y2="259.4" stroke="#000" stroke-width="0.9" opacity="0.6"/><line x1="397.5" y1="232.2" x2="397.5" y2="234.8" stroke="#000" stroke-width="0.9" opacity="0.6"/><line x1="397.5" y1="255.7" x2="397.5" y2="259.4" stroke="#000" stroke-width="0.9" opacity="0.6"/><line x1="397.9" y1="259.4" x2="397.9" y2="262.0" stroke="#4a4800" stroke-width="0.8"/><line x1="400.2" y1="75.6" x2="400.2" y2="78.2" stroke="#000" stroke-width="0.9" opacity="0.6"/><line x1="400.2" y1="99.8" x2="400.2" y2="102.8" stroke="#000" stroke-width="0.9" opacity="0.6"/><line x1="400.6" y1="102.8" x2="400.6" y2="105.2" stroke="#4a4800" stroke-width="0.8"/><line x1="402.4" y1="232.2" x2="402.4" y2="236.3" stroke="#000" stroke-width="0.9" opacity="0.6"/><line x1="402.4" y1="254.6" x2="402.4" y2="259.4" stroke="#000" stroke-width="0.9" opacity="0.6"/><line x1="402.8" y1="259.4" x2="402.8" y2="261.8" stroke="#4a4800" stroke-width="0.8"/><line x1="404.1" y1="232.2" x2="404.1" y2="236.1" stroke="#000" stroke-width="0.9" opacity="0.6"/><line x1="404.1" y1="256.4" x2="404.1" y2="259.4" stroke="#000" stroke-width="0.9" opacity="0.6"/><line x1="405.5" y1="232.2" x2="405.5" y2="234.8" stroke="#000" stroke-width="0.9" opacity="0.6"/><line x1="405.5" y1="254.6" x2="405.5" y2="259.4" stroke="#000" stroke-width="0.9" opacity="0.6"/><line x1="405.9" y1="229.5" x2="405.9" y2="232.2" stroke="#4a4800" stroke-width="0.8"/><line x1="408.2" y1="75.6" x2="408.2" y2="77.1" stroke="#000" stroke-width="0.9" opacity="0.6"/><line x1="408.2" y1="97.9" x2="408.2" y2="102.8" stroke="#000" stroke-width="0.9" opacity="0.6"/><line x1="408.6" y1="102.8" x2="408.6" y2="104.5" stroke="#4a4800" stroke-width="0.8"/><line x1="409.3" y1="75.6" x2="409.3" y2="76.7" stroke="#000" stroke-width="0.9" opacity="0.6"/><line x1="409.3" y1="100.1" x2="409.3" y2="102.8" stroke="#000" stroke-width="0.9" opacity="0.6"/><line x1="410.7" y1="75.6" x2="410.7" y2="77.7" stroke="#000" stroke-width="0.9" opacity="0.6"/><line x1="410.7" y1="100.9" x2="410.7" y2="102.8" stroke="#000" stroke-width="0.9" opacity="0.6"/><line x1="412.2" y1="75.6" x2="412.2" y2="77.5" stroke="#000" stroke-width="0.9" opacity="0.6"/><line x1="412.2" y1="98.6" x2="412.2" y2="102.8" stroke="#000" stroke-width="0.9" opacity="0.6"/><line x1="412.6" y1="102.8" x2="412.6" y2="104.1" stroke="#4a4800" stroke-width="0.8"/><line x1="413.8" y1="75.6" x2="413.8" y2="79.8" stroke="#000" stroke-width="0.9" opacity="0.6"/><line x1="413.8" y1="99.3" x2="413.8" y2="102.8" stroke="#000" stroke-width="0.9" opacity="0.6"/><line x1="415.9" y1="232.2" x2="415.9" y2="237.1" stroke="#000" stroke-width="0.9" opacity="0.6"/><line x1="415.9" y1="257.0" x2="415.9" y2="259.4" stroke="#000" stroke-width="0.9" opacity="0.6"/><line x1="419.0" y1="75.6" x2="419.0" y2="78.5" stroke="#000" stroke-width="0.9" opacity="0.6"/><line x1="419.0" y1="100.6" x2="419.0" y2="102.8" stroke="#000" stroke-width="0.9" opacity="0.6"/><line x1="419.4" y1="102.8" x2="419.4" y2="105.9" stroke="#4a4800" stroke-width="0.8"/><line x1="421.3" y1="232.2" x2="421.3" y2="236.6" stroke="#000" stroke-width="0.9" opacity="0.6"/><line x1="421.3" y1="257.3" x2="421.3" y2="259.4" stroke="#000" stroke-width="0.9" opacity="0.6"/><line x1="424.1" y1="75.6" x2="424.1" y2="77.3" stroke="#000" stroke-width="0.9" opacity="0.6"/><line x1="424.1" y1="101.8" x2="424.1" y2="102.8" stroke="#000" stroke-width="0.9" opacity="0.6"/><line x1="425.3" y1="75.6" x2="425.3" y2="77.8" stroke="#000" stroke-width="0.9" opacity="0.6"/><line x1="425.3" y1="99.9" x2="425.3" y2="102.8" stroke="#000" stroke-width="0.9" opacity="0.6"/><line x1="427.1" y1="75.6" x2="427.1" y2="78.0" stroke="#000" stroke-width="0.9" opacity="0.6"/><line x1="427.1" y1="98.1" x2="427.1" y2="102.8" stroke="#000" stroke-width="0.9" opacity="0.6"/><line x1="427.5" y1="102.8" x2="427.5" y2="105.9" stroke="#4a4800" stroke-width="0.8"/><line x1="428.7" y1="75.6" x2="428.7" y2="79.7" stroke="#000" stroke-width="0.9" opacity="0.6"/><line x1="428.7" y1="101.2" x2="428.7" y2="102.8" stroke="#000" stroke-width="0.9" opacity="0.6"/><line x1="429.3" y1="75.6" x2="429.3" y2="76.6" stroke="#000" stroke-width="0.9" opacity="0.6"/><line x1="429.3" y1="98.0" x2="429.3" y2="102.8" stroke="#000" stroke-width="0.9" opacity="0.6"/><line x1="430.8" y1="75.6" x2="430.8" y2="77.2" stroke="#000" stroke-width="0.9" opacity="0.6"/><line x1="430.8" y1="100.9" x2="430.8" y2="102.8" stroke="#000" stroke-width="0.9" opacity="0.6"/><line x1="432.3" y1="75.6" x2="432.3" y2="80.2" stroke="#000" stroke-width="0.9" opacity="0.6"/><line x1="432.3" y1="98.6" x2="432.3" y2="102.8" stroke="#000" stroke-width="0.9" opacity="0.6"/><line x1="432.7" y1="72.4" x2="432.7" y2="75.6" stroke="#4a4800" stroke-width="0.8"/><line x1="435.1" y1="232.2" x2="435.1" y2="235.9" stroke="#000" stroke-width="0.9" opacity="0.6"/><line x1="435.1" y1="254.8" x2="435.1" y2="259.4" stroke="#000" stroke-width="0.9" opacity="0.6"/><line x1="437.4" y1="75.6" x2="437.4" y2="79.4" stroke="#000" stroke-width="0.9" opacity="0.6"/><line x1="437.4" y1="99.7" x2="437.4" y2="102.8" stroke="#000" stroke-width="0.9" opacity="0.6"/><line x1="439.3" y1="75.6" x2="439.3" y2="78.8" stroke="#000" stroke-width="0.9" opacity="0.6"/><line x1="439.3" y1="100.7" x2="439.3" y2="102.8" stroke="#000" stroke-width="0.9" opacity="0.6"/><line x1="439.7" y1="74.3" x2="439.7" y2="75.6" stroke="#4a4800" stroke-width="0.8"/><line x1="440.0" y1="75.6" x2="440.0" y2="78.5" stroke="#000" stroke-width="0.9" opacity="0.6"/><line x1="440.0" y1="101.2" x2="440.0" y2="102.8" stroke="#000" stroke-width="0.9" opacity="0.6"/><line x1="443.0" y1="232.2" x2="443.0" y2="236.7" stroke="#000" stroke-width="0.9" opacity="0.6"/><line x1="443.0" y1="258.4" x2="443.0" y2="259.4" stroke="#000" stroke-width="0.9" opacity="0.6"/><line x1="445.7" y1="75.6" x2="445.7" y2="79.3" stroke="#000" stroke-width="0.9" opacity="0.6"/><line x1="445.7" y1="98.4" x2="445.7" y2="102.8" stroke="#000" stroke-width="0.9" opacity="0.6"/><line x1="448.7" y1="232.2" x2="448.7" y2="233.5" stroke="#000" stroke-width="0.9" opacity="0.6"/><line x1="448.7" y1="255.9" x2="448.7" y2="259.4" stroke="#000" stroke-width="0.9" opacity="0.6"/><line x1="449.1" y1="259.4" x2="449.1" y2="261.9" stroke="#4a4800" stroke-width="0.8"/><line x1="451.2" y1="75.6" x2="451.2" y2="80.3" stroke="#000" stroke-width="0.9" opacity="0.6"/><line x1="451.2" y1="100.5" x2="451.2" y2="102.8" stroke="#000" stroke-width="0.9" opacity="0.6"/><line x1="453.7" y1="232.2" x2="453.7" y2="236.8" stroke="#000" stroke-width="0.9" opacity="0.6"/><line x1="453.7" y1="258.3" x2="453.7" y2="259.4" stroke="#000" stroke-width="0.9" opacity="0.6"/><line x1="456.3" y1="75.6" x2="456.3" y2="80.0" stroke="#000" stroke-width="0.9" opacity="0.6"/><line x1="456.3" y1="100.3" x2="456.3" y2="102.8" stroke="#000" stroke-width="0.9" opacity="0.6"/><line x1="458.0" y1="75.6" x2="458.0" y2="77.4" stroke="#000" stroke-width="0.9" opacity="0.6"/><line x1="458.0" y1="100.1" x2="458.0" y2="102.8" stroke="#000" stroke-width="0.9" opacity="0.6"/><line x1="459.5" y1="75.6" x2="459.5" y2="77.8" stroke="#000" stroke-width="0.9" opacity="0.6"/><line x1="459.5" y1="98.5" x2="459.5" y2="102.8" stroke="#000" stroke-width="0.9" opacity="0.6"/><line x1="461.6" y1="232.2" x2="461.6" y2="235.2" stroke="#000" stroke-width="0.9" opacity="0.6"/><line x1="461.6" y1="254.5" x2="461.6" y2="259.4" stroke="#000" stroke-width="0.9" opacity="0.6"/><line x1="464.3" y1="75.6" x2="464.3" y2="77.9" stroke="#000" stroke-width="0.9" opacity="0.6"/><line x1="464.3" y1="100.6" x2="464.3" y2="102.8" stroke="#000" stroke-width="0.9" opacity="0.6"/><line x1="466.1" y1="75.6" x2="466.1" y2="76.8" stroke="#000" stroke-width="0.9" opacity="0.6"/><line x1="466.1" y1="98.9" x2="466.1" y2="102.8" stroke="#000" stroke-width="0.9" opacity="0.6"/><line x1="466.9" y1="75.6" x2="466.9" y2="77.8" stroke="#000" stroke-width="0.9" opacity="0.6"/><line x1="466.9" y1="101.8" x2="466.9" y2="102.8" stroke="#000" stroke-width="0.9" opacity="0.6"/><line x1="467.3" y1="72.3" x2="467.3" y2="75.6" stroke="#4a4800" stroke-width="0.8"/><line x1="470.0" y1="232.2" x2="470.0" y2="236.4" stroke="#000" stroke-width="0.9" opacity="0.6"/><line x1="470.0" y1="254.8" x2="470.0" y2="259.4" stroke="#000" stroke-width="0.9" opacity="0.6"/><line x1="472.7" y1="75.6" x2="472.7" y2="79.4" stroke="#000" stroke-width="0.9" opacity="0.6"/><line x1="472.7" y1="99.4" x2="472.7" y2="102.8" stroke="#000" stroke-width="0.9" opacity="0.6"/><line x1="473.1" y1="102.8" x2="473.1" y2="105.5" stroke="#4a4800" stroke-width="0.8"/><line x1="475.2" y1="232.2" x2="475.2" y2="236.3" stroke="#000" stroke-width="0.9" opacity="0.6"/><line x1="475.2" y1="258.0" x2="475.2" y2="259.4" stroke="#000" stroke-width="0.9" opacity="0.6"/><line x1="475.6" y1="231.1" x2="475.6" y2="232.2" stroke="#4a4800" stroke-width="0.8"/><line x1="476.9" y1="232.2" x2="476.9" y2="235.8" stroke="#000" stroke-width="0.9" opacity="0.6"/><line x1="476.9" y1="256.9" x2="476.9" y2="259.4" stroke="#000" stroke-width="0.9" opacity="0.6"/><line x1="478.0" y1="232.2" x2="478.0" y2="234.2" stroke="#000" stroke-width="0.9" opacity="0.6"/><line x1="478.0" y1="257.2" x2="478.0" y2="259.4" stroke="#000" stroke-width="0.9" opacity="0.6"/><line x1="479.3" y1="232.2" x2="479.3" y2="235.8" stroke="#000" stroke-width="0.9" opacity="0.6"/><line x1="479.3" y1="254.7" x2="479.3" y2="259.4" stroke="#000" stroke-width="0.9" opacity="0.6"/><line x1="479.7" y1="229.8" x2="479.7" y2="232.2" stroke="#4a4800" stroke-width="0.8"/><line x1="479.7" y1="259.4" x2="479.7" y2="260.7" stroke="#4a4800" stroke-width="0.8"/><line x1="481.0" y1="232.2" x2="481.0" y2="235.5" stroke="#000" stroke-width="0.9" opacity="0.6"/><line x1="481.0" y1="254.7" x2="481.0" y2="259.4" stroke="#000" stroke-width="0.9" opacity="0.6"/><line x1="481.4" y1="259.4" x2="481.4" y2="261.4" stroke="#4a4800" stroke-width="0.8"/><line x1="482.3" y1="232.2" x2="482.3" y2="237.0" stroke="#000" stroke-width="0.9" opacity="0.6"/><line x1="482.3" y1="254.5" x2="482.3" y2="259.4" stroke="#000" stroke-width="0.9" opacity="0.6"/><line x1="483.3" y1="232.2" x2="483.3" y2="235.8" stroke="#000" stroke-width="0.9" opacity="0.6"/><line x1="483.3" y1="257.6" x2="483.3" y2="259.4" stroke="#000" stroke-width="0.9" opacity="0.6"/><line x1="483.7" y1="231.2" x2="483.7" y2="232.2" stroke="#4a4800" stroke-width="0.8"/><line x1="483.7" y1="259.4" x2="483.7" y2="262.1" stroke="#4a4800" stroke-width="0.8"/><line x1="484.7" y1="232.2" x2="484.7" y2="237.1" stroke="#000" stroke-width="0.9" opacity="0.6"/><line x1="484.7" y1="258.0" x2="484.7" y2="259.4" stroke="#000" stroke-width="0.9" opacity="0.6"/><line x1="485.1" y1="259.4" x2="485.1" y2="260.4" stroke="#4a4800" stroke-width="0.8"/><line x1="486.6" y1="232.2" x2="486.6" y2="234.2" stroke="#000" stroke-width="0.9" opacity="0.6"/><line x1="486.6" y1="255.5" x2="486.6" y2="259.4" stroke="#000" stroke-width="0.9" opacity="0.6"/><line x1="487.0" y1="231.1" x2="487.0" y2="232.2" stroke="#4a4800" stroke-width="0.8"/><line x1="488.0" y1="232.2" x2="488.0" y2="236.6" stroke="#000" stroke-width="0.9" opacity="0.6"/><line x1="488.0" y1="255.5" x2="488.0" y2="259.4" stroke="#000" stroke-width="0.9" opacity="0.6"/><line x1="488.4" y1="229.6" x2="488.4" y2="232.2" stroke="#4a4800" stroke-width="0.8"/><line x1="489.2" y1="232.2" x2="489.2" y2="236.9" stroke="#000" stroke-width="0.9" opacity="0.6"/><line x1="489.2" y1="257.4" x2="489.2" y2="259.4" stroke="#000" stroke-width="0.9" opacity="0.6"/><line x1="491.0" y1="75.6" x2="491.0" y2="76.7" stroke="#000" stroke-width="0.9" opacity="0.6"/><line x1="491.0" y1="99.2" x2="491.0" y2="102.8" stroke="#000" stroke-width="0.9" opacity="0.6"/><line x1="491.4" y1="102.8" x2="491.4" y2="104.6" stroke="#4a4800" stroke-width="0.8"/><line x1="494.2" y1="232.2" x2="494.2" y2="233.9" stroke="#000" stroke-width="0.9" opacity="0.6"/><line x1="494.2" y1="255.0" x2="494.2" y2="259.4" stroke="#000" stroke-width="0.9" opacity="0.6"/><line x1="494.6" y1="259.4" x2="494.6" y2="261.3" stroke="#4a4800" stroke-width="0.8"/><line x1="495.5" y1="232.2" x2="495.5" y2="235.0" stroke="#000" stroke-width="0.9" opacity="0.6"/><line x1="495.5" y1="255.7" x2="495.5" y2="259.4" stroke="#000" stroke-width="0.9" opacity="0.6"/><line x1="495.9" y1="229.2" x2="495.9" y2="232.2" stroke="#4a4800" stroke-width="0.8"/><line x1="497.0" y1="232.2" x2="497.0" y2="235.7" stroke="#000" stroke-width="0.9" opacity="0.6"/><line x1="497.0" y1="256.7" x2="497.0" y2="259.4" stroke="#000" stroke-width="0.9" opacity="0.6"/><line x1="499.8" y1="75.6" x2="499.8" y2="79.7" stroke="#000" stroke-width="0.9" opacity="0.6"/><line x1="499.8" y1="99.5" x2="499.8" y2="102.8" stroke="#000" stroke-width="0.9" opacity="0.6"/><line x1="500.2" y1="102.8" x2="500.2" y2="106.2" stroke="#4a4800" stroke-width="0.8"/><line x1="502.2" y1="232.2" x2="502.2" y2="236.5" stroke="#000" stroke-width="0.9" opacity="0.6"/><line x1="502.2" y1="257.1" x2="502.2" y2="259.4" stroke="#000" stroke-width="0.9" opacity="0.6"/><line x1="505.0" y1="75.6" x2="505.0" y2="79.0" stroke="#000" stroke-width="0.9" opacity="0.6"/><line x1="505.0" y1="100.6" x2="505.0" y2="102.8" stroke="#000" stroke-width="0.9" opacity="0.6"/><line x1="506.1" y1="75.6" x2="506.1" y2="79.3" stroke="#000" stroke-width="0.9" opacity="0.6"/><line x1="506.1" y1="99.4" x2="506.1" y2="102.8" stroke="#000" stroke-width="0.9" opacity="0.6"/><line x1="507.4" y1="75.6" x2="507.4" y2="76.6" stroke="#000" stroke-width="0.9" opacity="0.6"/><line x1="507.4" y1="100.7" x2="507.4" y2="102.8" stroke="#000" stroke-width="0.9" opacity="0.6"/><line x1="510.4" y1="232.2" x2="510.4" y2="236.7" stroke="#000" stroke-width="0.9" opacity="0.6"/><line x1="510.4" y1="258.2" x2="510.4" y2="259.4" stroke="#000" stroke-width="0.9" opacity="0.6"/><line x1="511.9" y1="232.2" x2="511.9" y2="235.5" stroke="#000" stroke-width="0.9" opacity="0.6"/><line x1="511.9" y1="257.3" x2="511.9" y2="259.4" stroke="#000" stroke-width="0.9" opacity="0.6"/><line x1="513.1" y1="232.2" x2="513.1" y2="236.9" stroke="#000" stroke-width="0.9" opacity="0.6"/><line x1="513.1" y1="257.0" x2="513.1" y2="259.4" stroke="#000" stroke-width="0.9" opacity="0.6"/><line x1="513.5" y1="229.8" x2="513.5" y2="232.2" stroke="#4a4800" stroke-width="0.8"/><line x1="515.3" y1="75.6" x2="515.3" y2="79.6" stroke="#000" stroke-width="0.9" opacity="0.6"/><line x1="515.3" y1="98.1" x2="515.3" y2="102.8" stroke="#000" stroke-width="0.9" opacity="0.6"/><line x1="515.7" y1="73.1" x2="515.7" y2="75.6" stroke="#4a4800" stroke-width="0.8"/><line x1="516.9" y1="75.6" x2="516.9" y2="77.4" stroke="#000" stroke-width="0.9" opacity="0.6"/><line x1="516.9" y1="100.8" x2="516.9" y2="102.8" stroke="#000" stroke-width="0.9" opacity="0.6"/><line x1="518.3" y1="75.6" x2="518.3" y2="77.0" stroke="#000" stroke-width="0.9" opacity="0.6"/><line x1="518.3" y1="98.6" x2="518.3" y2="102.8" stroke="#000" stroke-width="0.9" opacity="0.6"/><line x1="518.7" y1="102.8" x2="518.7" y2="105.2" stroke="#4a4800" stroke-width="0.8"/><line x1="520.1" y1="75.6" x2="520.1" y2="80.1" stroke="#000" stroke-width="0.9" opacity="0.6"/><line x1="520.1" y1="99.7" x2="520.1" y2="102.8" stroke="#000" stroke-width="0.9" opacity="0.6"/><line x1="520.9" y1="75.6" x2="520.9" y2="77.4" stroke="#000" stroke-width="0.9" opacity="0.6"/><line x1="520.9" y1="101.1" x2="520.9" y2="102.8" stroke="#000" stroke-width="0.9" opacity="0.6"/><line x1="523.7" y1="232.2" x2="523.7" y2="234.8" stroke="#000" stroke-width="0.9" opacity="0.6"/><line x1="523.7" y1="256.3" x2="523.7" y2="259.4" stroke="#000" stroke-width="0.9" opacity="0.6"/><line x1="524.1" y1="231.1" x2="524.1" y2="232.2" stroke="#4a4800" stroke-width="0.8"/><line x1="526.2" y1="75.6" x2="526.2" y2="77.0" stroke="#000" stroke-width="0.9" opacity="0.6"/><line x1="526.2" y1="99.3" x2="526.2" y2="102.8" stroke="#000" stroke-width="0.9" opacity="0.6"/><line x1="526.6" y1="102.8" x2="526.6" y2="105.3" stroke="#4a4800" stroke-width="0.8"/><line x1="528.8" y1="232.2" x2="528.8" y2="235.3" stroke="#000" stroke-width="0.9" opacity="0.6"/><line x1="528.8" y1="258.3" x2="528.8" y2="259.4" stroke="#000" stroke-width="0.9" opacity="0.6"/><line x1="529.2" y1="228.7" x2="529.2" y2="232.2" stroke="#4a4800" stroke-width="0.8"/><line x1="531.6" y1="75.6" x2="531.6" y2="78.9" stroke="#000" stroke-width="0.9" opacity="0.6"/><line x1="531.6" y1="100.8" x2="531.6" y2="102.8" stroke="#000" stroke-width="0.9" opacity="0.6"/><line x1="534.7" y1="232.2" x2="534.7" y2="236.3" stroke="#000" stroke-width="0.9" opacity="0.6"/><line x1="534.7" y1="255.1" x2="534.7" y2="259.4" stroke="#000" stroke-width="0.9" opacity="0.6"/><line x1="536.7" y1="75.6" x2="536.7" y2="77.4" stroke="#000" stroke-width="0.9" opacity="0.6"/><line x1="536.7" y1="101.1" x2="536.7" y2="102.8" stroke="#000" stroke-width="0.9" opacity="0.6"/><line x1="537.1" y1="74.5" x2="537.1" y2="75.6" stroke="#4a4800" stroke-width="0.8"/><line x1="540.0" y1="232.2" x2="540.0" y2="235.0" stroke="#000" stroke-width="0.9" opacity="0.6"/><line x1="540.0" y1="254.6" x2="540.0" y2="259.4" stroke="#000" stroke-width="0.9" opacity="0.6"/><line x1="540.4" y1="259.4" x2="540.4" y2="261.9" stroke="#4a4800" stroke-width="0.8"/><line x1="541.0" y1="232.2" x2="541.0" y2="233.7" stroke="#000" stroke-width="0.9" opacity="0.6"/><line x1="541.0" y1="254.6" x2="541.0" y2="259.4" stroke="#000" stroke-width="0.9" opacity="0.6"/><line x1="542.6" y1="232.2" x2="542.6" y2="237.0" stroke="#000" stroke-width="0.9" opacity="0.6"/><line x1="542.6" y1="255.7" x2="542.6" y2="259.4" stroke="#000" stroke-width="0.9" opacity="0.6"/><line x1="544.8" y1="75.6" x2="544.8" y2="80.5" stroke="#000" stroke-width="0.9" opacity="0.6"/><line x1="544.8" y1="97.8" x2="544.8" y2="102.8" stroke="#000" stroke-width="0.9" opacity="0.6"/><line x1="545.2" y1="74.5" x2="545.2" y2="75.6" stroke="#4a4800" stroke-width="0.8"/><line x1="546.4" y1="75.6" x2="546.4" y2="80.2" stroke="#000" stroke-width="0.9" opacity="0.6"/><line x1="546.4" y1="98.2" x2="546.4" y2="102.8" stroke="#000" stroke-width="0.9" opacity="0.6"/><line x1="546.8" y1="102.8" x2="546.8" y2="105.8" stroke="#4a4800" stroke-width="0.8"/><line x1="548.1" y1="75.6" x2="548.1" y2="79.2" stroke="#000" stroke-width="0.9" opacity="0.6"/><line x1="548.1" y1="97.9" x2="548.1" y2="102.8" stroke="#000" stroke-width="0.9" opacity="0.6"/><line x1="548.5" y1="74.2" x2="548.5" y2="75.6" stroke="#4a4800" stroke-width="0.8"/><line x1="550.9" y1="232.2" x2="550.9" y2="235.9" stroke="#000" stroke-width="0.9" opacity="0.6"/><line x1="550.9" y1="257.2" x2="550.9" y2="259.4" stroke="#000" stroke-width="0.9" opacity="0.6"/><line x1="552.9" y1="75.6" x2="552.9" y2="77.9" stroke="#000" stroke-width="0.9" opacity="0.6"/><line x1="552.9" y1="100.8" x2="552.9" y2="102.8" stroke="#000" stroke-width="0.9" opacity="0.6"/><line x1="553.3" y1="73.4" x2="553.3" y2="75.6" stroke="#4a4800" stroke-width="0.8"/><line x1="553.3" y1="102.8" x2="553.3" y2="104.4" stroke="#4a4800" stroke-width="0.8"/><line x1="555.6" y1="232.2" x2="555.6" y2="235.9" stroke="#000" stroke-width="0.9" opacity="0.6"/><line x1="555.6" y1="258.3" x2="555.6" y2="259.4" stroke="#000" stroke-width="0.9" opacity="0.6"/><line x1="556.0" y1="259.4" x2="556.0" y2="260.5" stroke="#4a4800" stroke-width="0.8"/><line x1="557.6" y1="232.2" x2="557.6" y2="234.1" stroke="#000" stroke-width="0.9" opacity="0.6"/><line x1="557.6" y1="254.7" x2="557.6" y2="259.4" stroke="#000" stroke-width="0.9" opacity="0.6"/><line x1="558.4" y1="232.2" x2="558.4" y2="235.0" stroke="#000" stroke-width="0.9" opacity="0.6"/><line x1="558.4" y1="258.0" x2="558.4" y2="259.4" stroke="#000" stroke-width="0.9" opacity="0.6"/><line x1="561.3" y1="75.6" x2="561.3" y2="78.4" stroke="#000" stroke-width="0.9" opacity="0.6"/><line x1="561.3" y1="100.4" x2="561.3" y2="102.8" stroke="#000" stroke-width="0.9" opacity="0.6"/><line x1="564.0" y1="232.2" x2="564.0" y2="233.8" stroke="#000" stroke-width="0.9" opacity="0.6"/><line x1="564.0" y1="257.5" x2="564.0" y2="259.4" stroke="#000" stroke-width="0.9" opacity="0.6"/><line x1="564.4" y1="229.4" x2="564.4" y2="232.2" stroke="#4a4800" stroke-width="0.8"/><line x1="565.0" y1="232.2" x2="565.0" y2="236.7" stroke="#000" stroke-width="0.9" opacity="0.6"/><line x1="565.0" y1="257.3" x2="565.0" y2="259.4" stroke="#000" stroke-width="0.9" opacity="0.6"/><line x1="565.4" y1="259.4" x2="565.4" y2="261.1" stroke="#4a4800" stroke-width="0.8"/><line x1="567.0" y1="232.2" x2="567.0" y2="234.5" stroke="#000" stroke-width="0.9" opacity="0.6"/><line x1="567.0" y1="257.7" x2="567.0" y2="259.4" stroke="#000" stroke-width="0.9" opacity="0.6"/><line x1="569.6" y1="75.6" x2="569.6" y2="77.1" stroke="#000" stroke-width="0.9" opacity="0.6"/><line x1="569.6" y1="97.9" x2="569.6" y2="102.8" stroke="#000" stroke-width="0.9" opacity="0.6"/><line x1="570.0" y1="72.4" x2="570.0" y2="75.6" stroke="#4a4800" stroke-width="0.8"/><line x1="570.5" y1="75.6" x2="570.5" y2="78.5" stroke="#000" stroke-width="0.9" opacity="0.6"/><line x1="570.5" y1="100.7" x2="570.5" y2="102.8" stroke="#000" stroke-width="0.9" opacity="0.6"/><line x1="570.9" y1="102.8" x2="570.9" y2="104.7" stroke="#4a4800" stroke-width="0.8"/><line x1="572.5" y1="75.6" x2="572.5" y2="80.6" stroke="#000" stroke-width="0.9" opacity="0.6"/><line x1="572.5" y1="98.1" x2="572.5" y2="102.8" stroke="#000" stroke-width="0.9" opacity="0.6"/><line x1="572.9" y1="73.9" x2="572.9" y2="75.6" stroke="#4a4800" stroke-width="0.8"/><line x1="573.2" y1="75.6" x2="573.2" y2="79.5" stroke="#000" stroke-width="0.9" opacity="0.6"/><line x1="573.2" y1="100.6" x2="573.2" y2="102.8" stroke="#000" stroke-width="0.9" opacity="0.6"/><line x1="573.6" y1="102.8" x2="573.6" y2="105.8" stroke="#4a4800" stroke-width="0.8"/><line x1="574.8" y1="75.6" x2="574.8" y2="77.2" stroke="#000" stroke-width="0.9" opacity="0.6"/><line x1="574.8" y1="101.8" x2="574.8" y2="102.8" stroke="#000" stroke-width="0.9" opacity="0.6"/><line x1="577.1" y1="232.2" x2="577.1" y2="234.9" stroke="#000" stroke-width="0.9" opacity="0.6"/><line x1="577.1" y1="254.8" x2="577.1" y2="259.4" stroke="#000" stroke-width="0.9" opacity="0.6"/><line x1="577.5" y1="229.8" x2="577.5" y2="232.2" stroke="#4a4800" stroke-width="0.8"/><line x1="577.5" y1="259.4" x2="577.5" y2="260.9" stroke="#4a4800" stroke-width="0.8"/><line x1="580.3" y1="75.6" x2="580.3" y2="79.4" stroke="#000" stroke-width="0.9" opacity="0.6"/><line x1="580.3" y1="101.0" x2="580.3" y2="102.8" stroke="#000" stroke-width="0.9" opacity="0.6"/><line x1="580.7" y1="74.4" x2="580.7" y2="75.6" stroke="#4a4800" stroke-width="0.8"/><line x1="582.7" y1="232.2" x2="582.7" y2="234.3" stroke="#000" stroke-width="0.9" opacity="0.6"/><line x1="582.7" y1="257.6" x2="582.7" y2="259.4" stroke="#000" stroke-width="0.9" opacity="0.6"/><line x1="585.7" y1="75.6" x2="585.7" y2="78.9" stroke="#000" stroke-width="0.9" opacity="0.6"/><line x1="585.7" y1="101.0" x2="585.7" y2="102.8" stroke="#000" stroke-width="0.9" opacity="0.6"/><line x1="586.1" y1="72.8" x2="586.1" y2="75.6" stroke="#4a4800" stroke-width="0.8"/><line x1="588.3" y1="232.2" x2="588.3" y2="233.4" stroke="#000" stroke-width="0.9" opacity="0.6"/><line x1="588.3" y1="255.2" x2="588.3" y2="259.4" stroke="#000" stroke-width="0.9" opacity="0.6"/><line x1="589.8" y1="232.2" x2="589.8" y2="235.2" stroke="#000" stroke-width="0.9" opacity="0.6"/><line x1="589.8" y1="258.3" x2="589.8" y2="259.4" stroke="#000" stroke-width="0.9" opacity="0.6"/><line x1="591.2" y1="232.2" x2="591.2" y2="234.3" stroke="#000" stroke-width="0.9" opacity="0.6"/><line x1="591.2" y1="257.7" x2="591.2" y2="259.4" stroke="#000" stroke-width="0.9" opacity="0.6"/><line x1="593.2" y1="75.6" x2="593.2" y2="78.1" stroke="#000" stroke-width="0.9" opacity="0.6"/><line x1="593.2" y1="99.4" x2="593.2" y2="102.8" stroke="#000" stroke-width="0.9" opacity="0.6"/><line x1="593.6" y1="73.3" x2="593.6" y2="75.6" stroke="#4a4800" stroke-width="0.8"/><line x1="596.2" y1="232.2" x2="596.2" y2="233.7" stroke="#000" stroke-width="0.9" opacity="0.6"/><line x1="596.2" y1="255.5" x2="596.2" y2="259.4" stroke="#000" stroke-width="0.9" opacity="0.6"/><line x1="598.7" y1="75.6" x2="598.7" y2="79.4" stroke="#000" stroke-width="0.9" opacity="0.6"/><line x1="598.7" y1="100.3" x2="598.7" y2="102.8" stroke="#000" stroke-width="0.9" opacity="0.6"/><line x1="599.1" y1="102.8" x2="599.1" y2="106.0" stroke="#4a4800" stroke-width="0.8"/><line x1="600.6" y1="75.6" x2="600.6" y2="78.6" stroke="#000" stroke-width="0.9" opacity="0.6"/><line x1="600.6" y1="99.7" x2="600.6" y2="102.8" stroke="#000" stroke-width="0.9" opacity="0.6"/><line x1="601.3" y1="75.6" x2="601.3" y2="80.5" stroke="#000" stroke-width="0.9" opacity="0.6"/><line x1="601.3" y1="100.9" x2="601.3" y2="102.8" stroke="#000" stroke-width="0.9" opacity="0.6"/><line x1="601.7" y1="74.3" x2="601.7" y2="75.6" stroke="#4a4800" stroke-width="0.8"/><line x1="604.5" y1="232.2" x2="604.5" y2="233.3" stroke="#000" stroke-width="0.9" opacity="0.6"/><line x1="604.5" y1="258.0" x2="604.5" y2="259.4" stroke="#000" stroke-width="0.9" opacity="0.6"/><line x1="604.9" y1="259.4" x2="604.9" y2="260.4" stroke="#4a4800" stroke-width="0.8"/><line x1="607.0" y1="75.6" x2="607.0" y2="78.9" stroke="#000" stroke-width="0.9" opacity="0.6"/><line x1="607.0" y1="99.7" x2="607.0" y2="102.8" stroke="#000" stroke-width="0.9" opacity="0.6"/><line x1="607.4" y1="102.8" x2="607.4" y2="106.0" stroke="#4a4800" stroke-width="0.8"/><line x1="609.8" y1="232.2" x2="609.8" y2="233.4" stroke="#000" stroke-width="0.9" opacity="0.6"/><line x1="609.8" y1="257.9" x2="609.8" y2="259.4" stroke="#000" stroke-width="0.9" opacity="0.6"/><line x1="612.1" y1="75.6" x2="612.1" y2="77.1" stroke="#000" stroke-width="0.9" opacity="0.6"/><line x1="612.1" y1="100.2" x2="612.1" y2="102.8" stroke="#000" stroke-width="0.9" opacity="0.6"/><line x1="612.5" y1="73.1" x2="612.5" y2="75.6" stroke="#4a4800" stroke-width="0.8"/><line x1="614.7" y1="232.2" x2="614.7" y2="235.5" stroke="#000" stroke-width="0.9" opacity="0.6"/><line x1="614.7" y1="255.4" x2="614.7" y2="259.4" stroke="#000" stroke-width="0.9" opacity="0.6"/><line x1="615.1" y1="229.1" x2="615.1" y2="232.2" stroke="#4a4800" stroke-width="0.8"/><line x1="616.3" y1="232.2" x2="616.3" y2="234.9" stroke="#000" stroke-width="0.9" opacity="0.6"/><line x1="616.3" y1="255.0" x2="616.3" y2="259.4" stroke="#000" stroke-width="0.9" opacity="0.6"/><line x1="618.1" y1="232.2" x2="618.1" y2="236.3" stroke="#000" stroke-width="0.9" opacity="0.6"/><line x1="618.1" y1="257.0" x2="618.1" y2="259.4" stroke="#000" stroke-width="0.9" opacity="0.6"/><line x1="618.5" y1="230.4" x2="618.5" y2="232.2" stroke="#4a4800" stroke-width="0.8"/><line x1="619.6" y1="232.2" x2="619.6" y2="236.4" stroke="#000" stroke-width="0.9" opacity="0.6"/><line x1="619.6" y1="254.7" x2="619.6" y2="259.4" stroke="#000" stroke-width="0.9" opacity="0.6"/><line x1="620.2" y1="232.2" x2="620.2" y2="235.3" stroke="#000" stroke-width="0.9" opacity="0.6"/><line x1="620.2" y1="254.6" x2="620.2" y2="259.4" stroke="#000" stroke-width="0.9" opacity="0.6"/><line x1="620.6" y1="259.4" x2="620.6" y2="261.5" stroke="#4a4800" stroke-width="0.8"/><line x1="622.1" y1="232.2" x2="622.1" y2="234.7" stroke="#000" stroke-width="0.9" opacity="0.6"/><line x1="622.1" y1="256.3" x2="622.1" y2="259.4" stroke="#000" stroke-width="0.9" opacity="0.6"/><line x1="622.5" y1="230.1" x2="622.5" y2="232.2" stroke="#4a4800" stroke-width="0.8"/><line x1="623.0" y1="232.2" x2="623.0" y2="233.8" stroke="#000" stroke-width="0.9" opacity="0.6"/><line x1="623.0" y1="254.5" x2="623.0" y2="259.4" stroke="#000" stroke-width="0.9" opacity="0.6"/><line x1="625.9" y1="75.6" x2="625.9" y2="79.8" stroke="#000" stroke-width="0.9" opacity="0.6"/><line x1="625.9" y1="98.3" x2="625.9" y2="102.8" stroke="#000" stroke-width="0.9" opacity="0.6"/><line x1="626.3" y1="102.8" x2="626.3" y2="105.4" stroke="#4a4800" stroke-width="0.8"/><line x1="627.0" y1="75.6" x2="627.0" y2="79.3" stroke="#000" stroke-width="0.9" opacity="0.6"/><line x1="627.0" y1="100.7" x2="627.0" y2="102.8" stroke="#000" stroke-width="0.9" opacity="0.6"/><line x1="628.7" y1="75.6" x2="628.7" y2="77.6" stroke="#000" stroke-width="0.9" opacity="0.6"/><line x1="628.7" y1="99.7" x2="628.7" y2="102.8" stroke="#000" stroke-width="0.9" opacity="0.6"/><line x1="631.0" y1="232.2" x2="631.0" y2="234.4" stroke="#000" stroke-width="0.9" opacity="0.6"/><line x1="631.0" y1="255.8" x2="631.0" y2="259.4" stroke="#000" stroke-width="0.9" opacity="0.6"/><line x1="631.4" y1="229.7" x2="631.4" y2="232.2" stroke="#4a4800" stroke-width="0.8"/><line x1="633.8" y1="75.6" x2="633.8" y2="77.7" stroke="#000" stroke-width="0.9" opacity="0.6"/><line x1="633.8" y1="99.9" x2="633.8" y2="102.8" stroke="#000" stroke-width="0.9" opacity="0.6"/><line x1="634.2" y1="102.8" x2="634.2" y2="104.1" stroke="#4a4800" stroke-width="0.8"/><line x1="636.2" y1="232.2" x2="636.2" y2="234.4" stroke="#000" stroke-width="0.9" opacity="0.6"/><line x1="636.2" y1="256.8" x2="636.2" y2="259.4" stroke="#000" stroke-width="0.9" opacity="0.6"/><line x1="636.6" y1="259.4" x2="636.6" y2="260.6" stroke="#4a4800" stroke-width="0.8"/><line x1="637.9" y1="232.2" x2="637.9" y2="236.6" stroke="#000" stroke-width="0.9" opacity="0.6"/><line x1="637.9" y1="256.0" x2="637.9" y2="259.4" stroke="#000" stroke-width="0.9" opacity="0.6"/><line x1="639.0" y1="232.2" x2="639.0" y2="236.0" stroke="#000" stroke-width="0.9" opacity="0.6"/><line x1="639.0" y1="256.6" x2="639.0" y2="259.4" stroke="#000" stroke-width="0.9" opacity="0.6"/><line x1="640.7" y1="232.2" x2="640.7" y2="234.4" stroke="#000" stroke-width="0.9" opacity="0.6"/><line x1="640.7" y1="257.4" x2="640.7" y2="259.4" stroke="#000" stroke-width="0.9" opacity="0.6"/><line x1="641.1" y1="229.9" x2="641.1" y2="232.2" stroke="#4a4800" stroke-width="0.8"/><line x1="642.1" y1="232.2" x2="642.1" y2="233.2" stroke="#000" stroke-width="0.9" opacity="0.6"/><line x1="642.1" y1="257.0" x2="642.1" y2="259.4" stroke="#000" stroke-width="0.9" opacity="0.6"/><line x1="642.5" y1="259.4" x2="642.5" y2="261.8" stroke="#4a4800" stroke-width="0.8"/><line x1="644.6" y1="75.6" x2="644.6" y2="77.7" stroke="#000" stroke-width="0.9" opacity="0.6"/><line x1="644.6" y1="97.8" x2="644.6" y2="102.8" stroke="#000" stroke-width="0.9" opacity="0.6"/><line x1="645.7" y1="75.6" x2="645.7" y2="76.9" stroke="#000" stroke-width="0.9" opacity="0.6"/><line x1="645.7" y1="98.3" x2="645.7" y2="102.8" stroke="#000" stroke-width="0.9" opacity="0.6"/><line x1="646.1" y1="102.8" x2="646.1" y2="104.8" stroke="#4a4800" stroke-width="0.8"/><line x1="647.3" y1="75.6" x2="647.3" y2="79.5" stroke="#000" stroke-width="0.9" opacity="0.6"/><line x1="647.3" y1="101.4" x2="647.3" y2="102.8" stroke="#000" stroke-width="0.9" opacity="0.6"/><line x1="647.7" y1="72.2" x2="647.7" y2="75.6" stroke="#4a4800" stroke-width="0.8"/><line x1="649.7" y1="232.2" x2="649.7" y2="234.5" stroke="#000" stroke-width="0.9" opacity="0.6"/><line x1="649.7" y1="257.0" x2="649.7" y2="259.4" stroke="#000" stroke-width="0.9" opacity="0.6"/><line x1="652.9" y1="75.6" x2="652.9" y2="79.9" stroke="#000" stroke-width="0.9" opacity="0.6"/><line x1="652.9" y1="99.7" x2="652.9" y2="102.8" stroke="#000" stroke-width="0.9" opacity="0.6"/><line x1="654.2" y1="75.6" x2="654.2" y2="78.5" stroke="#000" stroke-width="0.9" opacity="0.6"/><line x1="654.2" y1="98.7" x2="654.2" y2="102.8" stroke="#000" stroke-width="0.9" opacity="0.6"/><line x1="655.1" y1="75.6" x2="655.1" y2="80.1" stroke="#000" stroke-width="0.9" opacity="0.6"/><line x1="655.1" y1="101.8" x2="655.1" y2="102.8" stroke="#000" stroke-width="0.9" opacity="0.6"/><line x1="658.0" y1="232.2" x2="658.0" y2="237.1" stroke="#000" stroke-width="0.9" opacity="0.6"/><line x1="658.0" y1="256.1" x2="658.0" y2="259.4" stroke="#000" stroke-width="0.9" opacity="0.6"/><line x1="661.0" y1="75.6" x2="661.0" y2="79.0" stroke="#000" stroke-width="0.9" opacity="0.6"/><line x1="661.0" y1="100.3" x2="661.0" y2="102.8" stroke="#000" stroke-width="0.9" opacity="0.6"/><line x1="663.5" y1="232.2" x2="663.5" y2="234.4" stroke="#000" stroke-width="0.9" opacity="0.6"/><line x1="663.5" y1="256.8" x2="663.5" y2="259.4" stroke="#000" stroke-width="0.9" opacity="0.6"/><line x1="664.6" y1="232.2" x2="664.6" y2="236.3" stroke="#000" stroke-width="0.9" opacity="0.6"/><line x1="664.6" y1="255.0" x2="664.6" y2="259.4" stroke="#000" stroke-width="0.9" opacity="0.6"/><line x1="665.9" y1="232.2" x2="665.9" y2="234.4" stroke="#000" stroke-width="0.9" opacity="0.6"/><line x1="665.9" y1="257.8" x2="665.9" y2="259.4" stroke="#000" stroke-width="0.9" opacity="0.6"/><line x1="667.2" y1="232.2" x2="667.2" y2="236.9" stroke="#000" stroke-width="0.9" opacity="0.6"/><line x1="667.2" y1="257.1" x2="667.2" y2="259.4" stroke="#000" stroke-width="0.9" opacity="0.6"/><line x1="669.3" y1="232.2" x2="669.3" y2="234.0" stroke="#000" stroke-width="0.9" opacity="0.6"/><line x1="669.3" y1="256.7" x2="669.3" y2="259.4" stroke="#000" stroke-width="0.9" opacity="0.6"/><line x1="669.7" y1="259.4" x2="669.7" y2="260.5" stroke="#4a4800" stroke-width="0.8"/><line x1="670.4" y1="232.2" x2="670.4" y2="235.2" stroke="#000" stroke-width="0.9" opacity="0.6"/><line x1="670.4" y1="254.7" x2="670.4" y2="259.4" stroke="#000" stroke-width="0.9" opacity="0.6"/><line x1="672.2" y1="232.2" x2="672.2" y2="235.3" stroke="#000" stroke-width="0.9" opacity="0.6"/><line x1="672.2" y1="256.3" x2="672.2" y2="259.4" stroke="#000" stroke-width="0.9" opacity="0.6"/><line x1="673.0" y1="232.2" x2="673.0" y2="235.6" stroke="#000" stroke-width="0.9" opacity="0.6"/><line x1="673.0" y1="257.0" x2="673.0" y2="259.4" stroke="#000" stroke-width="0.9" opacity="0.6"/><line x1="674.6" y1="232.2" x2="674.6" y2="233.6" stroke="#000" stroke-width="0.9" opacity="0.6"/><line x1="674.6" y1="256.9" x2="674.6" y2="259.4" stroke="#000" stroke-width="0.9" opacity="0.6"/><line x1="676.0" y1="232.2" x2="676.0" y2="236.7" stroke="#000" stroke-width="0.9" opacity="0.6"/><line x1="676.0" y1="254.5" x2="676.0" y2="259.4" stroke="#000" stroke-width="0.9" opacity="0.6"/><line x1="677.5" y1="232.2" x2="677.5" y2="237.2" stroke="#000" stroke-width="0.9" opacity="0.6"/><line x1="677.5" y1="257.0" x2="677.5" y2="259.4" stroke="#000" stroke-width="0.9" opacity="0.6"/><line x1="679.3" y1="75.6" x2="679.3" y2="77.9" stroke="#000" stroke-width="0.9" opacity="0.6"/><line x1="679.3" y1="97.9" x2="679.3" y2="102.8" stroke="#000" stroke-width="0.9" opacity="0.6"/><line x1="681.9" y1="232.2" x2="681.9" y2="236.8" stroke="#000" stroke-width="0.9" opacity="0.6"/><line x1="681.9" y1="255.6" x2="681.9" y2="259.4" stroke="#000" stroke-width="0.9" opacity="0.6"/><line x1="683.9" y1="232.2" x2="683.9" y2="234.9" stroke="#000" stroke-width="0.9" opacity="0.6"/><line x1="683.9" y1="257.8" x2="683.9" y2="259.4" stroke="#000" stroke-width="0.9" opacity="0.6"/><line x1="685.0" y1="232.2" x2="685.0" y2="234.0" stroke="#000" stroke-width="0.9" opacity="0.6"/><line x1="685.0" y1="257.7" x2="685.0" y2="259.4" stroke="#000" stroke-width="0.9" opacity="0.6"/><line x1="687.5" y1="75.6" x2="687.5" y2="80.6" stroke="#000" stroke-width="0.9" opacity="0.6"/><line x1="687.5" y1="99.3" x2="687.5" y2="102.8" stroke="#000" stroke-width="0.9" opacity="0.6"/><line x1="687.9" y1="73.6" x2="687.9" y2="75.6" stroke="#4a4800" stroke-width="0.8"/><line x1="690.1" y1="232.2" x2="690.1" y2="236.0" stroke="#000" stroke-width="0.9" opacity="0.6"/><line x1="690.1" y1="258.4" x2="690.1" y2="259.4" stroke="#000" stroke-width="0.9" opacity="0.6"/><line x1="691.7" y1="232.2" x2="691.7" y2="235.9" stroke="#000" stroke-width="0.9" opacity="0.6"/><line x1="691.7" y1="257.6" x2="691.7" y2="259.4" stroke="#000" stroke-width="0.9" opacity="0.6"/><line x1="692.9" y1="232.2" x2="692.9" y2="235.8" stroke="#000" stroke-width="0.9" opacity="0.6"/><line x1="692.9" y1="256.3" x2="692.9" y2="259.4" stroke="#000" stroke-width="0.9" opacity="0.6"/><line x1="694.4" y1="232.2" x2="694.4" y2="233.7" stroke="#000" stroke-width="0.9" opacity="0.6"/><line x1="694.4" y1="257.8" x2="694.4" y2="259.4" stroke="#000" stroke-width="0.9" opacity="0.6"/><line x1="694.8" y1="259.4" x2="694.8" y2="260.7" stroke="#4a4800" stroke-width="0.8"/><line x1="695.6" y1="232.2" x2="695.6" y2="235.3" stroke="#000" stroke-width="0.9" opacity="0.6"/><line x1="695.6" y1="255.1" x2="695.6" y2="259.4" stroke="#000" stroke-width="0.9" opacity="0.6"/><line x1="696.9" y1="232.2" x2="696.9" y2="233.2" stroke="#000" stroke-width="0.9" opacity="0.6"/><line x1="696.9" y1="255.3" x2="696.9" y2="259.4" stroke="#000" stroke-width="0.9" opacity="0.6"/><line x1="698.5" y1="232.2" x2="698.5" y2="233.9" stroke="#000" stroke-width="0.9" opacity="0.6"/><line x1="698.5" y1="257.3" x2="698.5" y2="259.4" stroke="#000" stroke-width="0.9" opacity="0.6"/><line x1="698.9" y1="228.9" x2="698.9" y2="232.2" stroke="#4a4800" stroke-width="0.8"/><line x1="699.9" y1="232.2" x2="699.9" y2="235.0" stroke="#000" stroke-width="0.9" opacity="0.6"/><line x1="699.9" y1="256.9" x2="699.9" y2="259.4" stroke="#000" stroke-width="0.9" opacity="0.6"/><line x1="700.3" y1="229.0" x2="700.3" y2="232.2" stroke="#4a4800" stroke-width="0.8"/><line x1="701.8" y1="232.2" x2="701.8" y2="235.0" stroke="#000" stroke-width="0.9" opacity="0.6"/><line x1="701.8" y1="255.9" x2="701.8" y2="259.4" stroke="#000" stroke-width="0.9" opacity="0.6"/><line x1="702.2" y1="231.1" x2="702.2" y2="232.2" stroke="#4a4800" stroke-width="0.8"/><line x1="704.0" y1="75.6" x2="704.0" y2="77.9" stroke="#000" stroke-width="0.9" opacity="0.6"/><line x1="704.0" y1="98.2" x2="704.0" y2="102.8" stroke="#000" stroke-width="0.9" opacity="0.6"/><line x1="705.2" y1="75.6" x2="705.2" y2="80.4" stroke="#000" stroke-width="0.9" opacity="0.6"/><line x1="705.2" y1="99.8" x2="705.2" y2="102.8" stroke="#000" stroke-width="0.9" opacity="0.6"/><line x1="705.6" y1="102.8" x2="705.6" y2="104.8" stroke="#4a4800" stroke-width="0.8"/><line x1="706.7" y1="75.6" x2="706.7" y2="77.5" stroke="#000" stroke-width="0.9" opacity="0.6"/><line x1="706.7" y1="100.6" x2="706.7" y2="102.8" stroke="#000" stroke-width="0.9" opacity="0.6"/><line x1="708.1" y1="75.6" x2="708.1" y2="77.6" stroke="#000" stroke-width="0.9" opacity="0.6"/><line x1="708.1" y1="101.1" x2="708.1" y2="102.8" stroke="#000" stroke-width="0.9" opacity="0.6"/><line x1="708.5" y1="102.8" x2="708.5" y2="106.2" stroke="#4a4800" stroke-width="0.8"/><line x1="709.1" y1="75.6" x2="709.1" y2="78.8" stroke="#000" stroke-width="0.9" opacity="0.6"/><line x1="709.1" y1="101.3" x2="709.1" y2="102.8" stroke="#000" stroke-width="0.9" opacity="0.6"/><line x1="711.7" y1="232.2" x2="711.7" y2="233.5" stroke="#000" stroke-width="0.9" opacity="0.6"/><line x1="711.7" y1="257.9" x2="711.7" y2="259.4" stroke="#000" stroke-width="0.9" opacity="0.6"/><line x1="714.3" y1="75.6" x2="714.3" y2="77.4" stroke="#000" stroke-width="0.9" opacity="0.6"/><line x1="714.3" y1="100.7" x2="714.3" y2="102.8" stroke="#000" stroke-width="0.9" opacity="0.6"/><line x1="714.7" y1="74.5" x2="714.7" y2="75.6" stroke="#4a4800" stroke-width="0.8"/><line x1="717.0" y1="232.2" x2="717.0" y2="233.8" stroke="#000" stroke-width="0.9" opacity="0.6"/><line x1="717.0" y1="255.6" x2="717.0" y2="259.4" stroke="#000" stroke-width="0.9" opacity="0.6"/><line x1="717.4" y1="230.5" x2="717.4" y2="232.2" stroke="#4a4800" stroke-width="0.8"/><line x1="719.5" y1="75.6" x2="719.5" y2="78.4" stroke="#000" stroke-width="0.9" opacity="0.6"/><line x1="719.5" y1="98.5" x2="719.5" y2="102.8" stroke="#000" stroke-width="0.9" opacity="0.6"/><line x1="719.9" y1="102.8" x2="719.9" y2="104.7" stroke="#4a4800" stroke-width="0.8"/><line x1="721.4" y1="75.6" x2="721.4" y2="78.1" stroke="#000" stroke-width="0.9" opacity="0.6"/><line x1="721.4" y1="98.0" x2="721.4" y2="102.8" stroke="#000" stroke-width="0.9" opacity="0.6"/><line x1="721.8" y1="72.2" x2="721.8" y2="75.6" stroke="#4a4800" stroke-width="0.8"/><line x1="722.4" y1="75.6" x2="722.4" y2="78.4" stroke="#000" stroke-width="0.9" opacity="0.6"/><line x1="722.4" y1="101.3" x2="722.4" y2="102.8" stroke="#000" stroke-width="0.9" opacity="0.6"/><line x1="724.3" y1="75.6" x2="724.3" y2="79.0" stroke="#000" stroke-width="0.9" opacity="0.6"/><line x1="724.3" y1="100.3" x2="724.3" y2="102.8" stroke="#000" stroke-width="0.9" opacity="0.6"/><line x1="724.7" y1="73.1" x2="724.7" y2="75.6" stroke="#4a4800" stroke-width="0.8"/><line x1="724.7" y1="102.8" x2="724.7" y2="106.0" stroke="#4a4800" stroke-width="0.8"/><line x1="725.1" y1="75.6" x2="725.1" y2="78.7" stroke="#000" stroke-width="0.9" opacity="0.6"/><line x1="725.1" y1="99.6" x2="725.1" y2="102.8" stroke="#000" stroke-width="0.9" opacity="0.6"/><line x1="726.7" y1="75.6" x2="726.7" y2="79.2" stroke="#000" stroke-width="0.9" opacity="0.6"/><line x1="726.7" y1="99.5" x2="726.7" y2="102.8" stroke="#000" stroke-width="0.9" opacity="0.6"/><line x1="727.9" y1="75.6" x2="727.9" y2="77.3" stroke="#000" stroke-width="0.9" opacity="0.6"/><line x1="727.9" y1="98.4" x2="727.9" y2="102.8" stroke="#000" stroke-width="0.9" opacity="0.6"/><line x1="730.3" y1="232.2" x2="730.3" y2="235.4" stroke="#000" stroke-width="0.9" opacity="0.6"/><line x1="730.3" y1="257.0" x2="730.3" y2="259.4" stroke="#000" stroke-width="0.9" opacity="0.6"/><line x1="732.9" y1="75.6" x2="732.9" y2="77.8" stroke="#000" stroke-width="0.9" opacity="0.6"/><line x1="732.9" y1="100.9" x2="732.9" y2="102.8" stroke="#000" stroke-width="0.9" opacity="0.6"/><line x1="733.3" y1="72.8" x2="733.3" y2="75.6" stroke="#4a4800" stroke-width="0.8"/><line x1="734.6" y1="75.6" x2="734.6" y2="80.2" stroke="#000" stroke-width="0.9" opacity="0.6"/><line x1="734.6" y1="98.7" x2="734.6" y2="102.8" stroke="#000" stroke-width="0.9" opacity="0.6"/><line x1="735.8" y1="75.6" x2="735.8" y2="77.7" stroke="#000" stroke-width="0.9" opacity="0.6"/><line x1="735.8" y1="101.7" x2="735.8" y2="102.8" stroke="#000" stroke-width="0.9" opacity="0.6"/><line x1="738.5" y1="232.2" x2="738.5" y2="234.9" stroke="#000" stroke-width="0.9" opacity="0.6"/><line x1="738.5" y1="255.8" x2="738.5" y2="259.4" stroke="#000" stroke-width="0.9" opacity="0.6"/><line x1="738.9" y1="259.4" x2="738.9" y2="262.5" stroke="#4a4800" stroke-width="0.8"/><line x1="741.2" y1="75.6" x2="741.2" y2="79.1" stroke="#000" stroke-width="0.9" opacity="0.6"/><line x1="741.2" y1="101.1" x2="741.2" y2="102.8" stroke="#000" stroke-width="0.9" opacity="0.6"/><line x1="741.6" y1="72.3" x2="741.6" y2="75.6" stroke="#4a4800" stroke-width="0.8"/><line x1="744.2" y1="232.2" x2="744.2" y2="233.4" stroke="#000" stroke-width="0.9" opacity="0.6"/><line x1="744.2" y1="258.2" x2="744.2" y2="259.4" stroke="#000" stroke-width="0.9" opacity="0.6"/><line x1="744.6" y1="230.7" x2="744.6" y2="232.2" stroke="#4a4800" stroke-width="0.8"/><line x1="745.3" y1="232.2" x2="745.3" y2="233.4" stroke="#000" stroke-width="0.9" opacity="0.6"/><line x1="745.3" y1="257.2" x2="745.3" y2="259.4" stroke="#000" stroke-width="0.9" opacity="0.6"/><line x1="745.7" y1="259.4" x2="745.7" y2="262.5" stroke="#4a4800" stroke-width="0.8"/><line x1="746.9" y1="232.2" x2="746.9" y2="236.1" stroke="#000" stroke-width="0.9" opacity="0.6"/><line x1="746.9" y1="257.4" x2="746.9" y2="259.4" stroke="#000" stroke-width="0.9" opacity="0.6"/><line x1="749.3" y1="75.6" x2="749.3" y2="76.6" stroke="#000" stroke-width="0.9" opacity="0.6"/><line x1="749.3" y1="98.5" x2="749.3" y2="102.8" stroke="#000" stroke-width="0.9" opacity="0.6"/><line x1="751.7" y1="232.2" x2="751.7" y2="236.6" stroke="#000" stroke-width="0.9" opacity="0.6"/><line x1="751.7" y1="256.0" x2="751.7" y2="259.4" stroke="#000" stroke-width="0.9" opacity="0.6"/><line x1="752.1" y1="230.6" x2="752.1" y2="232.2" stroke="#4a4800" stroke-width="0.8"/><line x1="752.1" y1="259.4" x2="752.1" y2="262.4" stroke="#4a4800" stroke-width="0.8"/><line x1="753.2" y1="232.2" x2="753.2" y2="236.9" stroke="#000" stroke-width="0.9" opacity="0.6"/><line x1="753.2" y1="255.4" x2="753.2" y2="259.4" stroke="#000" stroke-width="0.9" opacity="0.6"/><line x1="753.6" y1="229.5" x2="753.6" y2="232.2" stroke="#4a4800" stroke-width="0.8"/><line x1="755.1" y1="232.2" x2="755.1" y2="236.5" stroke="#000" stroke-width="0.9" opacity="0.6"/><line x1="755.1" y1="257.3" x2="755.1" y2="259.4" stroke="#000" stroke-width="0.9" opacity="0.6"/><line x1="755.5" y1="228.8" x2="755.5" y2="232.2" stroke="#4a4800" stroke-width="0.8"/><line x1="757.8" y1="75.6" x2="757.8" y2="79.4" stroke="#000" stroke-width="0.9" opacity="0.6"/><line x1="757.8" y1="98.8" x2="757.8" y2="102.8" stroke="#000" stroke-width="0.9" opacity="0.6"/><line x1="758.8" y1="75.6" x2="758.8" y2="76.8" stroke="#000" stroke-width="0.9" opacity="0.6"/><line x1="758.8" y1="99.0" x2="758.8" y2="102.8" stroke="#000" stroke-width="0.9" opacity="0.6"/><line x1="760.6" y1="75.6" x2="760.6" y2="77.1" stroke="#000" stroke-width="0.9" opacity="0.6"/><line x1="760.6" y1="98.8" x2="760.6" y2="102.8" stroke="#000" stroke-width="0.9" opacity="0.6"/><line x1="761.0" y1="72.8" x2="761.0" y2="75.6" stroke="#4a4800" stroke-width="0.8"/><line x1="761.5" y1="75.6" x2="761.5" y2="78.8" stroke="#000" stroke-width="0.9" opacity="0.6"/><line x1="761.5" y1="97.9" x2="761.5" y2="102.8" stroke="#000" stroke-width="0.9" opacity="0.6"/><line x1="762.9" y1="75.6" x2="762.9" y2="76.8" stroke="#000" stroke-width="0.9" opacity="0.6"/><line x1="762.9" y1="100.4" x2="762.9" y2="102.8" stroke="#000" stroke-width="0.9" opacity="0.6"/><line x1="763.3" y1="102.8" x2="763.3" y2="104.6" stroke="#4a4800" stroke-width="0.8"/><line x1="765.3" y1="232.2" x2="765.3" y2="236.0" stroke="#000" stroke-width="0.9" opacity="0.6"/><line x1="765.3" y1="255.7" x2="765.3" y2="259.4" stroke="#000" stroke-width="0.9" opacity="0.6"/><line x1="765.7" y1="230.6" x2="765.7" y2="232.2" stroke="#4a4800" stroke-width="0.8"/><line x1="768.2" y1="75.6" x2="768.2" y2="80.3" stroke="#000" stroke-width="0.9" opacity="0.6"/><line x1="768.2" y1="100.4" x2="768.2" y2="102.8" stroke="#000" stroke-width="0.9" opacity="0.6"/><line x1="770.6" y1="232.2" x2="770.6" y2="235.5" stroke="#000" stroke-width="0.9" opacity="0.6"/><line x1="770.6" y1="257.1" x2="770.6" y2="259.4" stroke="#000" stroke-width="0.9" opacity="0.6"/><line x1="772.5" y1="232.2" x2="772.5" y2="233.9" stroke="#000" stroke-width="0.9" opacity="0.6"/><line x1="772.5" y1="255.7" x2="772.5" y2="259.4" stroke="#000" stroke-width="0.9" opacity="0.6"/><line x1="773.9" y1="232.2" x2="773.9" y2="236.5" stroke="#000" stroke-width="0.9" opacity="0.6"/><line x1="773.9" y1="257.9" x2="773.9" y2="259.4" stroke="#000" stroke-width="0.9" opacity="0.6"/><line x1="774.8" y1="232.2" x2="774.8" y2="233.4" stroke="#000" stroke-width="0.9" opacity="0.6"/><line x1="774.8" y1="257.3" x2="774.8" y2="259.4" stroke="#000" stroke-width="0.9" opacity="0.6"/><line x1="775.2" y1="229.4" x2="775.2" y2="232.2" stroke="#4a4800" stroke-width="0.8"/><line x1="776.2" y1="232.2" x2="776.2" y2="234.5" stroke="#000" stroke-width="0.9" opacity="0.6"/><line x1="776.2" y1="256.5" x2="776.2" y2="259.4" stroke="#000" stroke-width="0.9" opacity="0.6"/><line x1="776.6" y1="259.4" x2="776.6" y2="260.6" stroke="#4a4800" stroke-width="0.8"/><line x1="778.6" y1="75.6" x2="778.6" y2="80.6" stroke="#000" stroke-width="0.9" opacity="0.6"/><line x1="778.6" y1="98.8" x2="778.6" y2="102.8" stroke="#000" stroke-width="0.9" opacity="0.6"/><line x1="779.0" y1="72.8" x2="779.0" y2="75.6" stroke="#4a4800" stroke-width="0.8"/><line x1="781.7" y1="232.2" x2="781.7" y2="233.6" stroke="#000" stroke-width="0.9" opacity="0.6"/><line x1="781.7" y1="256.4" x2="781.7" y2="259.4" stroke="#000" stroke-width="0.9" opacity="0.6"/><line x1="782.1" y1="259.4" x2="782.1" y2="261.8" stroke="#4a4800" stroke-width="0.8"/><line x1="784.0" y1="75.6" x2="784.0" y2="80.3" stroke="#000" stroke-width="0.9" opacity="0.6"/><line x1="784.0" y1="99.2" x2="784.0" y2="102.8" stroke="#000" stroke-width="0.9" opacity="0.6"/><line x1="785.9" y1="75.6" x2="785.9" y2="77.6" stroke="#000" stroke-width="0.9" opacity="0.6"/><line x1="785.9" y1="100.8" x2="785.9" y2="102.8" stroke="#000" stroke-width="0.9" opacity="0.6"/><line x1="786.3" y1="74.5" x2="786.3" y2="75.6" stroke="#4a4800" stroke-width="0.8"/><line x1="787.4" y1="75.6" x2="787.4" y2="77.8" stroke="#000" stroke-width="0.9" opacity="0.6"/><line x1="787.4" y1="101.1" x2="787.4" y2="102.8" stroke="#000" stroke-width="0.9" opacity="0.6"/><line x1="788.9" y1="75.6" x2="788.9" y2="77.3" stroke="#000" stroke-width="0.9" opacity="0.6"/><line x1="788.9" y1="98.7" x2="788.9" y2="102.8" stroke="#000" stroke-width="0.9" opacity="0.6"/><line x1="789.8" y1="75.6" x2="789.8" y2="77.3" stroke="#000" stroke-width="0.9" opacity="0.6"/><line x1="789.8" y1="98.5" x2="789.8" y2="102.8" stroke="#000" stroke-width="0.9" opacity="0.6"/><line x1="792.5" y1="232.2" x2="792.5" y2="234.7" stroke="#000" stroke-width="0.9" opacity="0.6"/><line x1="792.5" y1="255.1" x2="792.5" y2="259.4" stroke="#000" stroke-width="0.9" opacity="0.6"/><line x1="792.9" y1="231.1" x2="792.9" y2="232.2" stroke="#4a4800" stroke-width="0.8"/><line x1="795.2" y1="75.6" x2="795.2" y2="79.9" stroke="#000" stroke-width="0.9" opacity="0.6"/><line x1="795.2" y1="99.0" x2="795.2" y2="102.8" stroke="#000" stroke-width="0.9" opacity="0.6"/><line x1="796.5" y1="75.6" x2="796.5" y2="78.6" stroke="#000" stroke-width="0.9" opacity="0.6"/><line x1="796.5" y1="101.2" x2="796.5" y2="102.8" stroke="#000" stroke-width="0.9" opacity="0.6"/><line x1="797.6" y1="75.6" x2="797.6" y2="79.4" stroke="#000" stroke-width="0.9" opacity="0.6"/><line x1="797.6" y1="101.1" x2="797.6" y2="102.8" stroke="#000" stroke-width="0.9" opacity="0.6"/><line x1="799.0" y1="75.6" x2="799.0" y2="76.8" stroke="#000" stroke-width="0.9" opacity="0.6"/><line x1="799.0" y1="100.0" x2="799.0" y2="102.8" stroke="#000" stroke-width="0.9" opacity="0.6"/><line x1="799.4" y1="72.8" x2="799.4" y2="75.6" stroke="#4a4800" stroke-width="0.8"/><line x1="799.4" y1="102.8" x2="799.4" y2="105.9" stroke="#4a4800" stroke-width="0.8"/><line x1="801.0" y1="75.6" x2="801.0" y2="79.7" stroke="#000" stroke-width="0.9" opacity="0.6"/><line x1="801.0" y1="100.1" x2="801.0" y2="102.8" stroke="#000" stroke-width="0.9" opacity="0.6"/><line x1="802.1" y1="75.6" x2="802.1" y2="78.3" stroke="#000" stroke-width="0.9" opacity="0.6"/><line x1="802.1" y1="100.4" x2="802.1" y2="102.8" stroke="#000" stroke-width="0.9" opacity="0.6"/><line x1="803.8" y1="75.6" x2="803.8" y2="80.2" stroke="#000" stroke-width="0.9" opacity="0.6"/><line x1="803.8" y1="101.1" x2="803.8" y2="102.8" stroke="#000" stroke-width="0.9" opacity="0.6"/><line x1="805.0" y1="75.6" x2="805.0" y2="78.0" stroke="#000" stroke-width="0.9" opacity="0.6"/><line x1="805.0" y1="101.0" x2="805.0" y2="102.8" stroke="#000" stroke-width="0.9" opacity="0.6"/><line x1="805.4" y1="73.8" x2="805.4" y2="75.6" stroke="#4a4800" stroke-width="0.8"/><line x1="806.7" y1="75.6" x2="806.7" y2="80.2" stroke="#000" stroke-width="0.9" opacity="0.6"/><line x1="806.7" y1="98.3" x2="806.7" y2="102.8" stroke="#000" stroke-width="0.9" opacity="0.6"/><line x1="807.8" y1="75.6" x2="807.8" y2="79.8" stroke="#000" stroke-width="0.9" opacity="0.6"/><line x1="807.8" y1="101.6" x2="807.8" y2="102.8" stroke="#000" stroke-width="0.9" opacity="0.6"/><line x1="809.0" y1="75.6" x2="809.0" y2="78.9" stroke="#000" stroke-width="0.9" opacity="0.6"/><line x1="809.0" y1="98.0" x2="809.0" y2="102.8" stroke="#000" stroke-width="0.9" opacity="0.6"/><line x1="810.4" y1="75.6" x2="810.4" y2="78.0" stroke="#000" stroke-width="0.9" opacity="0.6"/><line x1="810.4" y1="98.3" x2="810.4" y2="102.8" stroke="#000" stroke-width="0.9" opacity="0.6"/><line x1="810.8" y1="74.1" x2="810.8" y2="75.6" stroke="#4a4800" stroke-width="0.8"/><line x1="811.9" y1="75.6" x2="811.9" y2="76.9" stroke="#000" stroke-width="0.9" opacity="0.6"/><line x1="811.9" y1="99.2" x2="811.9" y2="102.8" stroke="#000" stroke-width="0.9" opacity="0.6"/><line x1="813.3" y1="75.6" x2="813.3" y2="78.7" stroke="#000" stroke-width="0.9" opacity="0.6"/><line x1="813.3" y1="99.5" x2="813.3" y2="102.8" stroke="#000" stroke-width="0.9" opacity="0.6"/><line x1="813.7" y1="102.8" x2="813.7" y2="104.3" stroke="#4a4800" stroke-width="0.8"/><line x1="815.0" y1="75.6" x2="815.0" y2="78.8" stroke="#000" stroke-width="0.9" opacity="0.6"/><line x1="815.0" y1="101.4" x2="815.0" y2="102.8" stroke="#000" stroke-width="0.9" opacity="0.6"/><line x1="815.8" y1="75.6" x2="815.8" y2="78.7" stroke="#000" stroke-width="0.9" opacity="0.6"/><line x1="815.8" y1="100.8" x2="815.8" y2="102.8" stroke="#000" stroke-width="0.9" opacity="0.6"/><line x1="817.3" y1="75.6" x2="817.3" y2="78.9" stroke="#000" stroke-width="0.9" opacity="0.6"/><line x1="817.3" y1="101.3" x2="817.3" y2="102.8" stroke="#000" stroke-width="0.9" opacity="0.6"/><line x1="818.6" y1="75.6" x2="818.6" y2="78.2" stroke="#000" stroke-width="0.9" opacity="0.6"/><line x1="818.6" y1="101.5" x2="818.6" y2="102.8" stroke="#000" stroke-width="0.9" opacity="0.6"/><line x1="820.4" y1="75.6" x2="820.4" y2="79.5" stroke="#000" stroke-width="0.9" opacity="0.6"/><line x1="820.4" y1="98.8" x2="820.4" y2="102.8" stroke="#000" stroke-width="0.9" opacity="0.6"/><line x1="820.8" y1="72.1" x2="820.8" y2="75.6" stroke="#4a4800" stroke-width="0.8"/><line x1="821.4" y1="75.6" x2="821.4" y2="79.9" stroke="#000" stroke-width="0.9" opacity="0.6"/><line x1="821.4" y1="100.2" x2="821.4" y2="102.8" stroke="#000" stroke-width="0.9" opacity="0.6"/><line x1="821.8" y1="72.2" x2="821.8" y2="75.6" stroke="#4a4800" stroke-width="0.8"/><line x1="823.3" y1="75.6" x2="823.3" y2="77.1" stroke="#000" stroke-width="0.9" opacity="0.6"/><line x1="823.3" y1="98.7" x2="823.3" y2="102.8" stroke="#000" stroke-width="0.9" opacity="0.6"/><line x1="823.7" y1="74.0" x2="823.7" y2="75.6" stroke="#4a4800" stroke-width="0.8"/><line x1="824.1" y1="75.6" x2="824.1" y2="79.0" stroke="#000" stroke-width="0.9" opacity="0.6"/><line x1="824.1" y1="100.9" x2="824.1" y2="102.8" stroke="#000" stroke-width="0.9" opacity="0.6"/><line x1="825.9" y1="75.6" x2="825.9" y2="80.2" stroke="#000" stroke-width="0.9" opacity="0.6"/><line x1="825.9" y1="99.3" x2="825.9" y2="102.8" stroke="#000" stroke-width="0.9" opacity="0.6"/><line x1="827.7" y1="75.6" x2="827.7" y2="80.1" stroke="#000" stroke-width="0.9" opacity="0.6"/><line x1="827.7" y1="101.1" x2="827.7" y2="102.8" stroke="#000" stroke-width="0.9" opacity="0.6"/><line x1="828.9" y1="75.6" x2="828.9" y2="79.3" stroke="#000" stroke-width="0.9" opacity="0.6"/><line x1="828.9" y1="98.5" x2="828.9" y2="102.8" stroke="#000" stroke-width="0.9" opacity="0.6"/><line x1="829.3" y1="73.7" x2="829.3" y2="75.6" stroke="#4a4800" stroke-width="0.8"/><line x1="830.5" y1="75.6" x2="830.5" y2="79.5" stroke="#000" stroke-width="0.9" opacity="0.6"/><line x1="830.5" y1="101.6" x2="830.5" y2="102.8" stroke="#000" stroke-width="0.9" opacity="0.6"/><line x1="830.9" y1="102.8" x2="830.9" y2="105.2" stroke="#4a4800" stroke-width="0.8"/><line x1="831.8" y1="75.6" x2="831.8" y2="77.1" stroke="#000" stroke-width="0.9" opacity="0.6"/><line x1="831.8" y1="98.1" x2="831.8" y2="102.8" stroke="#000" stroke-width="0.9" opacity="0.6"/><line x1="832.7" y1="75.6" x2="832.7" y2="78.4" stroke="#000" stroke-width="0.9" opacity="0.6"/><line x1="832.7" y1="98.4" x2="832.7" y2="102.8" stroke="#000" stroke-width="0.9" opacity="0.6"/><line x1="833.1" y1="102.8" x2="833.1" y2="103.9" stroke="#4a4800" stroke-width="0.8"/><line x1="834.0" y1="75.6" x2="834.0" y2="79.8" stroke="#000" stroke-width="0.9" opacity="0.6"/><line x1="834.0" y1="101.1" x2="834.0" y2="102.8" stroke="#000" stroke-width="0.9" opacity="0.6"/><line x1="835.9" y1="75.6" x2="835.9" y2="78.1" stroke="#000" stroke-width="0.9" opacity="0.6"/><line x1="835.9" y1="101.2" x2="835.9" y2="102.8" stroke="#000" stroke-width="0.9" opacity="0.6"/><line x1="837.3" y1="75.6" x2="837.3" y2="79.8" stroke="#000" stroke-width="0.9" opacity="0.6"/><line x1="837.3" y1="98.0" x2="837.3" y2="102.8" stroke="#000" stroke-width="0.9" opacity="0.6"/><line x1="837.7" y1="73.7" x2="837.7" y2="75.6" stroke="#4a4800" stroke-width="0.8"/><line x1="837.7" y1="102.8" x2="837.7" y2="105.1" stroke="#4a4800" stroke-width="0.8"/><line x1="838.8" y1="75.6" x2="838.8" y2="79.8" stroke="#000" stroke-width="0.9" opacity="0.6"/><line x1="838.8" y1="101.7" x2="838.8" y2="102.8" stroke="#000" stroke-width="0.9" opacity="0.6"/><line x1="839.2" y1="72.6" x2="839.2" y2="75.6" stroke="#4a4800" stroke-width="0.8"/><line x1="839.8" y1="75.6" x2="839.8" y2="78.5" stroke="#000" stroke-width="0.9" opacity="0.6"/><line x1="839.8" y1="101.2" x2="839.8" y2="102.8" stroke="#000" stroke-width="0.9" opacity="0.6"/><line x1="841.6" y1="75.6" x2="841.6" y2="79.0" stroke="#000" stroke-width="0.9" opacity="0.6"/><line x1="841.6" y1="101.5" x2="841.6" y2="102.8" stroke="#000" stroke-width="0.9" opacity="0.6"/><line x1="842.0" y1="102.8" x2="842.0" y2="106.0" stroke="#4a4800" stroke-width="0.8"/><line x1="842.8" y1="75.6" x2="842.8" y2="76.8" stroke="#000" stroke-width="0.9" opacity="0.6"/><line x1="842.8" y1="101.1" x2="842.8" y2="102.8" stroke="#000" stroke-width="0.9" opacity="0.6"/><line x1="844.2" y1="75.6" x2="844.2" y2="78.2" stroke="#000" stroke-width="0.9" opacity="0.6"/><line x1="844.2" y1="100.4" x2="844.2" y2="102.8" stroke="#000" stroke-width="0.9" opacity="0.6"/><line x1="844.6" y1="73.2" x2="844.6" y2="75.6" stroke="#4a4800" stroke-width="0.8"/><line x1="845.1" y1="75.6" x2="845.1" y2="78.4" stroke="#000" stroke-width="0.9" opacity="0.6"/><line x1="845.1" y1="97.9" x2="845.1" y2="102.8" stroke="#000" stroke-width="0.9" opacity="0.6"/><line x1="845.5" y1="74.2" x2="845.5" y2="75.6" stroke="#4a4800" stroke-width="0.8"/><line x1="846.7" y1="75.6" x2="846.7" y2="77.7" stroke="#000" stroke-width="0.9" opacity="0.6"/><line x1="846.7" y1="99.8" x2="846.7" y2="102.8" stroke="#000" stroke-width="0.9" opacity="0.6"/><line x1="848.3" y1="75.6" x2="848.3" y2="80.4" stroke="#000" stroke-width="0.9" opacity="0.6"/><line x1="848.3" y1="97.8" x2="848.3" y2="102.8" stroke="#000" stroke-width="0.9" opacity="0.6"/><line x1="848.7" y1="73.2" x2="848.7" y2="75.6" stroke="#4a4800" stroke-width="0.8"/><line x1="850.0" y1="75.6" x2="850.0" y2="79.7" stroke="#000" stroke-width="0.9" opacity="0.6"/><line x1="850.0" y1="99.3" x2="850.0" y2="102.8" stroke="#000" stroke-width="0.9" opacity="0.6"/><line x1="850.9" y1="75.6" x2="850.9" y2="79.8" stroke="#000" stroke-width="0.9" opacity="0.6"/><line x1="850.9" y1="98.3" x2="850.9" y2="102.8" stroke="#000" stroke-width="0.9" opacity="0.6"/><line x1="852.4" y1="75.6" x2="852.4" y2="79.7" stroke="#000" stroke-width="0.9" opacity="0.6"/><line x1="852.4" y1="98.8" x2="852.4" y2="102.8" stroke="#000" stroke-width="0.9" opacity="0.6"/><line x1="853.8" y1="75.6" x2="853.8" y2="78.8" stroke="#000" stroke-width="0.9" opacity="0.6"/><line x1="853.8" y1="100.2" x2="853.8" y2="102.8" stroke="#000" stroke-width="0.9" opacity="0.6"/><line x1="854.2" y1="73.8" x2="854.2" y2="75.6" stroke="#4a4800" stroke-width="0.8"/><line x1="855.7" y1="75.6" x2="855.7" y2="78.5" stroke="#000" stroke-width="0.9" opacity="0.6"/><line x1="855.7" y1="100.3" x2="855.7" y2="102.8" stroke="#000" stroke-width="0.9" opacity="0.6"/><line x1="856.1" y1="74.0" x2="856.1" y2="75.6" stroke="#4a4800" stroke-width="0.8"/><line x1="856.4" y1="75.6" x2="856.4" y2="76.6" stroke="#000" stroke-width="0.9" opacity="0.6"/><line x1="856.4" y1="98.3" x2="856.4" y2="102.8" stroke="#000" stroke-width="0.9" opacity="0.6"/><line x1="858.2" y1="75.6" x2="858.2" y2="77.8" stroke="#000" stroke-width="0.9" opacity="0.6"/><line x1="858.2" y1="101.1" x2="858.2" y2="102.8" stroke="#000" stroke-width="0.9" opacity="0.6"/><line x1="858.6" y1="73.8" x2="858.6" y2="75.6" stroke="#4a4800" stroke-width="0.8"/><line x1="859.7" y1="75.6" x2="859.7" y2="78.8" stroke="#000" stroke-width="0.9" opacity="0.6"/><line x1="859.7" y1="98.1" x2="859.7" y2="102.8" stroke="#000" stroke-width="0.9" opacity="0.6"/><line x1="861.0" y1="75.6" x2="861.0" y2="76.9" stroke="#000" stroke-width="0.9" opacity="0.6"/><line x1="861.0" y1="101.1" x2="861.0" y2="102.8" stroke="#000" stroke-width="0.9" opacity="0.6"/><line x1="862.2" y1="75.6" x2="862.2" y2="79.7" stroke="#000" stroke-width="0.9" opacity="0.6"/><line x1="862.2" y1="100.1" x2="862.2" y2="102.8" stroke="#000" stroke-width="0.9" opacity="0.6"/><line x1="862.6" y1="102.8" x2="862.6" y2="105.0" stroke="#4a4800" stroke-width="0.8"/><line x1="864.0" y1="75.6" x2="864.0" y2="77.7" stroke="#000" stroke-width="0.9" opacity="0.6"/><line x1="864.0" y1="100.8" x2="864.0" y2="102.8" stroke="#000" stroke-width="0.9" opacity="0.6"/><line x1="864.4" y1="74.2" x2="864.4" y2="75.6" stroke="#4a4800" stroke-width="0.8"/><line x1="865.3" y1="75.6" x2="865.3" y2="77.5" stroke="#000" stroke-width="0.9" opacity="0.6"/><line x1="865.3" y1="100.2" x2="865.3" y2="102.8" stroke="#000" stroke-width="0.9" opacity="0.6"/><line x1="865.7" y1="73.1" x2="865.7" y2="75.6" stroke="#4a4800" stroke-width="0.8"/><line x1="866.6" y1="75.6" x2="866.6" y2="77.4" stroke="#000" stroke-width="0.9" opacity="0.6"/><line x1="866.6" y1="98.9" x2="866.6" y2="102.8" stroke="#000" stroke-width="0.9" opacity="0.6"/><line x1="867.6" y1="75.6" x2="867.6" y2="79.8" stroke="#000" stroke-width="0.9" opacity="0.6"/><line x1="867.6" y1="98.3" x2="867.6" y2="102.8" stroke="#000" stroke-width="0.9" opacity="0.6"/><line x1="868.0" y1="102.8" x2="868.0" y2="104.3" stroke="#4a4800" stroke-width="0.8"/><line x1="869.3" y1="75.6" x2="869.3" y2="80.1" stroke="#000" stroke-width="0.9" opacity="0.6"/><line x1="869.3" y1="99.2" x2="869.3" y2="102.8" stroke="#000" stroke-width="0.9" opacity="0.6"/><line x1="869.7" y1="102.8" x2="869.7" y2="104.6" stroke="#4a4800" stroke-width="0.8"/><line x1="870.9" y1="75.6" x2="870.9" y2="79.2" stroke="#000" stroke-width="0.9" opacity="0.6"/><line x1="870.9" y1="100.2" x2="870.9" y2="102.8" stroke="#000" stroke-width="0.9" opacity="0.6"/><line x1="871.8" y1="75.6" x2="871.8" y2="78.3" stroke="#000" stroke-width="0.9" opacity="0.6"/><line x1="871.8" y1="101.6" x2="871.8" y2="102.8" stroke="#000" stroke-width="0.9" opacity="0.6"/><line x1="873.5" y1="75.6" x2="873.5" y2="79.0" stroke="#000" stroke-width="0.9" opacity="0.6"/><line x1="873.5" y1="100.8" x2="873.5" y2="102.8" stroke="#000" stroke-width="0.9" opacity="0.6"/><line x1="873.9" y1="102.8" x2="873.9" y2="106.1" stroke="#4a4800" stroke-width="0.8"/><line x1="875.0" y1="75.6" x2="875.0" y2="80.6" stroke="#000" stroke-width="0.9" opacity="0.6"/><line x1="875.0" y1="101.6" x2="875.0" y2="102.8" stroke="#000" stroke-width="0.9" opacity="0.6"/><line x1="876.2" y1="75.6" x2="876.2" y2="77.0" stroke="#000" stroke-width="0.9" opacity="0.6"/><line x1="876.2" y1="101.2" x2="876.2" y2="102.8" stroke="#000" stroke-width="0.9" opacity="0.6"/><line x1="876.6" y1="72.7" x2="876.6" y2="75.6" stroke="#4a4800" stroke-width="0.8"/><line x1="876.6" y1="102.8" x2="876.6" y2="105.8" stroke="#4a4800" stroke-width="0.8"/><line x1="877.7" y1="75.6" x2="877.7" y2="78.8" stroke="#000" stroke-width="0.9" opacity="0.6"/><line x1="877.7" y1="99.4" x2="877.7" y2="102.8" stroke="#000" stroke-width="0.9" opacity="0.6"/><line x1="879.2" y1="75.6" x2="879.2" y2="77.9" stroke="#000" stroke-width="0.9" opacity="0.6"/><line x1="879.2" y1="98.8" x2="879.2" y2="102.8" stroke="#000" stroke-width="0.9" opacity="0.6"/><line x1="880.7" y1="75.6" x2="880.7" y2="79.7" stroke="#000" stroke-width="0.9" opacity="0.6"/><line x1="880.7" y1="100.6" x2="880.7" y2="102.8" stroke="#000" stroke-width="0.9" opacity="0.6"/><line x1="881.9" y1="75.6" x2="881.9" y2="77.7" stroke="#000" stroke-width="0.9" opacity="0.6"/><line x1="881.9" y1="99.7" x2="881.9" y2="102.8" stroke="#000" stroke-width="0.9" opacity="0.6"/><line x1="882.3" y1="102.8" x2="882.3" y2="103.8" stroke="#4a4800" stroke-width="0.8"/><line x1="883.3" y1="75.6" x2="883.3" y2="79.2" stroke="#000" stroke-width="0.9" opacity="0.6"/><line x1="883.3" y1="98.7" x2="883.3" y2="102.8" stroke="#000" stroke-width="0.9" opacity="0.6"/><line x1="884.5" y1="75.6" x2="884.5" y2="79.6" stroke="#000" stroke-width="0.9" opacity="0.6"/><line x1="884.5" y1="101.4" x2="884.5" y2="102.8" stroke="#000" stroke-width="0.9" opacity="0.6"/><line x1="884.9" y1="74.3" x2="884.9" y2="75.6" stroke="#4a4800" stroke-width="0.8"/><line x1="884.9" y1="102.8" x2="884.9" y2="105.1" stroke="#4a4800" stroke-width="0.8"/><line x1="886.2" y1="75.6" x2="886.2" y2="77.3" stroke="#000" stroke-width="0.9" opacity="0.6"/><line x1="886.2" y1="98.0" x2="886.2" y2="102.8" stroke="#000" stroke-width="0.9" opacity="0.6"/><line x1="886.6" y1="102.8" x2="886.6" y2="104.2" stroke="#4a4800" stroke-width="0.8"/><line x1="887.7" y1="75.6" x2="887.7" y2="80.3" stroke="#000" stroke-width="0.9" opacity="0.6"/><line x1="887.7" y1="101.2" x2="887.7" y2="102.8" stroke="#000" stroke-width="0.9" opacity="0.6"/><line x1="888.1" y1="72.7" x2="888.1" y2="75.6" stroke="#4a4800" stroke-width="0.8"/><line x1="888.1" y1="102.8" x2="888.1" y2="106.3" stroke="#4a4800" stroke-width="0.8"/><line x1="888.9" y1="75.6" x2="888.9" y2="79.1" stroke="#000" stroke-width="0.9" opacity="0.6"/><line x1="888.9" y1="100.4" x2="888.9" y2="102.8" stroke="#000" stroke-width="0.9" opacity="0.6"/><line x1="890.2" y1="75.6" x2="890.2" y2="80.2" stroke="#000" stroke-width="0.9" opacity="0.6"/><line x1="890.2" y1="101.4" x2="890.2" y2="102.8" stroke="#000" stroke-width="0.9" opacity="0.6"/><line x1="890.6" y1="102.8" x2="890.6" y2="105.4" stroke="#4a4800" stroke-width="0.8"/><line x1="891.6" y1="75.6" x2="891.6" y2="80.1" stroke="#000" stroke-width="0.9" opacity="0.6"/><line x1="891.6" y1="101.6" x2="891.6" y2="102.8" stroke="#000" stroke-width="0.9" opacity="0.6"/><line x1="893.5" y1="75.6" x2="893.5" y2="80.4" stroke="#000" stroke-width="0.9" opacity="0.6"/><line x1="893.5" y1="99.3" x2="893.5" y2="102.8" stroke="#000" stroke-width="0.9" opacity="0.6"/><line x1="893.9" y1="74.0" x2="893.9" y2="75.6" stroke="#4a4800" stroke-width="0.8"/><line x1="894.5" y1="75.6" x2="894.5" y2="77.5" stroke="#000" stroke-width="0.9" opacity="0.6"/><line x1="894.5" y1="101.0" x2="894.5" y2="102.8" stroke="#000" stroke-width="0.9" opacity="0.6"/><line x1="895.8" y1="75.6" x2="895.8" y2="80.6" stroke="#000" stroke-width="0.9" opacity="0.6"/><line x1="895.8" y1="100.9" x2="895.8" y2="102.8" stroke="#000" stroke-width="0.9" opacity="0.6"/><line x1="896.2" y1="102.8" x2="896.2" y2="106.0" stroke="#4a4800" stroke-width="0.8"/><line x1="897.6" y1="75.6" x2="897.6" y2="77.7" stroke="#000" stroke-width="0.9" opacity="0.6"/><line x1="897.6" y1="98.8" x2="897.6" y2="102.8" stroke="#000" stroke-width="0.9" opacity="0.6"/><line x1="898.6" y1="75.6" x2="898.6" y2="78.5" stroke="#000" stroke-width="0.9" opacity="0.6"/><line x1="898.6" y1="98.2" x2="898.6" y2="102.8" stroke="#000" stroke-width="0.9" opacity="0.6"/><line x1="899.0" y1="72.9" x2="899.0" y2="75.6" stroke="#4a4800" stroke-width="0.8"/><line x1="900.1" y1="75.6" x2="900.1" y2="78.9" stroke="#000" stroke-width="0.9" opacity="0.6"/><line x1="900.1" y1="98.3" x2="900.1" y2="102.8" stroke="#000" stroke-width="0.9" opacity="0.6"/><line x1="900.5" y1="72.4" x2="900.5" y2="75.6" stroke="#4a4800" stroke-width="0.8"/><line x1="901.7" y1="75.6" x2="901.7" y2="80.1" stroke="#000" stroke-width="0.9" opacity="0.6"/><line x1="901.7" y1="101.1" x2="901.7" y2="102.8" stroke="#000" stroke-width="0.9" opacity="0.6"/><line x1="902.8" y1="75.6" x2="902.8" y2="76.7" stroke="#000" stroke-width="0.9" opacity="0.6"/><line x1="902.8" y1="101.4" x2="902.8" y2="102.8" stroke="#000" stroke-width="0.9" opacity="0.6"/><line x1="903.2" y1="102.8" x2="903.2" y2="106.1" stroke="#4a4800" stroke-width="0.8"/><line x1="904.0" y1="75.6" x2="904.0" y2="79.5" stroke="#000" stroke-width="0.9" opacity="0.6"/><line x1="904.0" y1="101.4" x2="904.0" y2="102.8" stroke="#000" stroke-width="0.9" opacity="0.6"/><line x1="904.4" y1="72.9" x2="904.4" y2="75.6" stroke="#4a4800" stroke-width="0.8"/><line x1="904.4" y1="102.8" x2="904.4" y2="104.6" stroke="#4a4800" stroke-width="0.8"/><line x1="906.1" y1="75.6" x2="906.1" y2="79.5" stroke="#000" stroke-width="0.9" opacity="0.6"/><line x1="906.1" y1="98.3" x2="906.1" y2="102.8" stroke="#000" stroke-width="0.9" opacity="0.6"/><line x1="906.5" y1="102.8" x2="906.5" y2="104.4" stroke="#4a4800" stroke-width="0.8"/><line x1="907.4" y1="75.6" x2="907.4" y2="79.4" stroke="#000" stroke-width="0.9" opacity="0.6"/><line x1="907.4" y1="101.6" x2="907.4" y2="102.8" stroke="#000" stroke-width="0.9" opacity="0.6"/><line x1="907.8" y1="102.8" x2="907.8" y2="104.9" stroke="#4a4800" stroke-width="0.8"/><line x1="908.2" y1="75.6" x2="908.2" y2="76.7" stroke="#000" stroke-width="0.9" opacity="0.6"/><line x1="908.2" y1="97.8" x2="908.2" y2="102.8" stroke="#000" stroke-width="0.9" opacity="0.6"/><line x1="909.6" y1="75.6" x2="909.6" y2="78.5" stroke="#000" stroke-width="0.9" opacity="0.6"/><line x1="909.6" y1="101.3" x2="909.6" y2="102.8" stroke="#000" stroke-width="0.9" opacity="0.6"/><line x1="910.0" y1="102.8" x2="910.0" y2="105.5" stroke="#4a4800" stroke-width="0.8"/><line x1="911.0" y1="75.6" x2="911.0" y2="79.6" stroke="#000" stroke-width="0.9" opacity="0.6"/><line x1="911.0" y1="99.8" x2="911.0" y2="102.8" stroke="#000" stroke-width="0.9" opacity="0.6"/><line x1="911.4" y1="73.7" x2="911.4" y2="75.6" stroke="#4a4800" stroke-width="0.8"/><line x1="913.1" y1="75.6" x2="913.1" y2="78.0" stroke="#000" stroke-width="0.9" opacity="0.6"/><line x1="913.1" y1="100.9" x2="913.1" y2="102.8" stroke="#000" stroke-width="0.9" opacity="0.6"/><line x1="914.3" y1="75.6" x2="914.3" y2="77.7" stroke="#000" stroke-width="0.9" opacity="0.6"/><line x1="914.3" y1="101.1" x2="914.3" y2="102.8" stroke="#000" stroke-width="0.9" opacity="0.6"/><line x1="914.7" y1="102.8" x2="914.7" y2="103.9" stroke="#4a4800" stroke-width="0.8"/><line x1="915.5" y1="75.6" x2="915.5" y2="78.2" stroke="#000" stroke-width="0.9" opacity="0.6"/><line x1="915.5" y1="99.6" x2="915.5" y2="102.8" stroke="#000" stroke-width="0.9" opacity="0.6"/><line x1="915.9" y1="102.8" x2="915.9" y2="105.5" stroke="#4a4800" stroke-width="0.8"/><line x1="917.0" y1="75.6" x2="917.0" y2="78.8" stroke="#000" stroke-width="0.9" opacity="0.6"/><line x1="917.0" y1="99.6" x2="917.0" y2="102.8" stroke="#000" stroke-width="0.9" opacity="0.6"/><line x1="918.6" y1="75.6" x2="918.6" y2="79.5" stroke="#000" stroke-width="0.9" opacity="0.6"/><line x1="918.6" y1="100.2" x2="918.6" y2="102.8" stroke="#000" stroke-width="0.9" opacity="0.6"/><line x1="920.1" y1="75.6" x2="920.1" y2="78.1" stroke="#000" stroke-width="0.9" opacity="0.6"/><line x1="920.1" y1="100.3" x2="920.1" y2="102.8" stroke="#000" stroke-width="0.9" opacity="0.6"/><line x1="920.5" y1="102.8" x2="920.5" y2="106.3" stroke="#4a4800" stroke-width="0.8"/><line x1="920.7" y1="75.6" x2="920.7" y2="79.0" stroke="#000" stroke-width="0.9" opacity="0.6"/><line x1="920.7" y1="98.1" x2="920.7" y2="102.8" stroke="#000" stroke-width="0.9" opacity="0.6"/><line x1="922.4" y1="75.6" x2="922.4" y2="77.6" stroke="#000" stroke-width="0.9" opacity="0.6"/><line x1="922.4" y1="101.0" x2="922.4" y2="102.8" stroke="#000" stroke-width="0.9" opacity="0.6"/><line x1="922.8" y1="72.5" x2="922.8" y2="75.6" stroke="#4a4800" stroke-width="0.8"/><line x1="924.2" y1="75.6" x2="924.2" y2="76.8" stroke="#000" stroke-width="0.9" opacity="0.6"/><line x1="924.2" y1="99.0" x2="924.2" y2="102.8" stroke="#000" stroke-width="0.9" opacity="0.6"/><line x1="925.4" y1="75.6" x2="925.4" y2="77.9" stroke="#000" stroke-width="0.9" opacity="0.6"/><line x1="925.4" y1="97.9" x2="925.4" y2="102.8" stroke="#000" stroke-width="0.9" opacity="0.6"/><line x1="925.8" y1="72.7" x2="925.8" y2="75.6" stroke="#4a4800" stroke-width="0.8"/><line x1="926.7" y1="75.6" x2="926.7" y2="79.0" stroke="#000" stroke-width="0.9" opacity="0.6"/><line x1="926.7" y1="97.8" x2="926.7" y2="102.8" stroke="#000" stroke-width="0.9" opacity="0.6"/><line x1="927.1" y1="73.0" x2="927.1" y2="75.6" stroke="#4a4800" stroke-width="0.8"/><line x1="928.0" y1="75.6" x2="928.0" y2="79.4" stroke="#000" stroke-width="0.9" opacity="0.6"/><line x1="928.0" y1="100.2" x2="928.0" y2="102.8" stroke="#000" stroke-width="0.9" opacity="0.6"/><line x1="929.7" y1="75.6" x2="929.7" y2="77.9" stroke="#000" stroke-width="0.9" opacity="0.6"/><line x1="929.7" y1="99.3" x2="929.7" y2="102.8" stroke="#000" stroke-width="0.9" opacity="0.6"/><line x1="930.1" y1="102.8" x2="930.1" y2="105.3" stroke="#4a4800" stroke-width="0.8"/><line x1="930.7" y1="75.6" x2="930.7" y2="80.2" stroke="#000" stroke-width="0.9" opacity="0.6"/><line x1="930.7" y1="99.9" x2="930.7" y2="102.8" stroke="#000" stroke-width="0.9" opacity="0.6"/><line x1="932.3" y1="75.6" x2="932.3" y2="77.5" stroke="#000" stroke-width="0.9" opacity="0.6"/><line x1="932.3" y1="101.2" x2="932.3" y2="102.8" stroke="#000" stroke-width="0.9" opacity="0.6"/><line x1="933.7" y1="75.6" x2="933.7" y2="78.7" stroke="#000" stroke-width="0.9" opacity="0.6"/><line x1="933.7" y1="98.5" x2="933.7" y2="102.8" stroke="#000" stroke-width="0.9" opacity="0.6"/><line x1="934.1" y1="74.2" x2="934.1" y2="75.6" stroke="#4a4800" stroke-width="0.8"/><line x1="935.1" y1="75.6" x2="935.1" y2="79.2" stroke="#000" stroke-width="0.9" opacity="0.6"/><line x1="935.1" y1="98.5" x2="935.1" y2="102.8" stroke="#000" stroke-width="0.9" opacity="0.6"/><line x1="936.2" y1="75.6" x2="936.2" y2="78.1" stroke="#000" stroke-width="0.9" opacity="0.6"/><line x1="936.2" y1="98.5" x2="936.2" y2="102.8" stroke="#000" stroke-width="0.9" opacity="0.6"/><line x1="936.6" y1="102.8" x2="936.6" y2="104.2" stroke="#4a4800" stroke-width="0.8"/><line x1="937.7" y1="75.6" x2="937.7" y2="77.0" stroke="#000" stroke-width="0.9" opacity="0.6"/><line x1="937.7" y1="100.4" x2="937.7" y2="102.8" stroke="#000" stroke-width="0.9" opacity="0.6"/><line x1="939.3" y1="75.6" x2="939.3" y2="77.0" stroke="#000" stroke-width="0.9" opacity="0.6"/><line x1="939.3" y1="100.2" x2="939.3" y2="102.8" stroke="#000" stroke-width="0.9" opacity="0.6"/><line x1="940.7" y1="75.6" x2="940.7" y2="78.5" stroke="#000" stroke-width="0.9" opacity="0.6"/><line x1="940.7" y1="98.6" x2="940.7" y2="102.8" stroke="#000" stroke-width="0.9" opacity="0.6"/><line x1="941.1" y1="102.8" x2="941.1" y2="105.5" stroke="#4a4800" stroke-width="0.8"/><line x1="942.0" y1="75.6" x2="942.0" y2="78.7" stroke="#000" stroke-width="0.9" opacity="0.6"/><line x1="942.0" y1="100.8" x2="942.0" y2="102.8" stroke="#000" stroke-width="0.9" opacity="0.6"/><line x1="943.4" y1="75.6" x2="943.4" y2="76.7" stroke="#000" stroke-width="0.9" opacity="0.6"/><line x1="943.4" y1="101.0" x2="943.4" y2="102.8" stroke="#000" stroke-width="0.9" opacity="0.6"/><line x1="943.8" y1="102.8" x2="943.8" y2="104.2" stroke="#4a4800" stroke-width="0.8"/><line x1="945.1" y1="75.6" x2="945.1" y2="77.7" stroke="#000" stroke-width="0.9" opacity="0.6"/><line x1="945.1" y1="100.5" x2="945.1" y2="102.8" stroke="#000" stroke-width="0.9" opacity="0.6"/><line x1="945.5" y1="72.5" x2="945.5" y2="75.6" stroke="#4a4800" stroke-width="0.8"/><line x1="945.5" y1="102.8" x2="945.5" y2="105.4" stroke="#4a4800" stroke-width="0.8"/><line x1="946.6" y1="75.6" x2="946.6" y2="77.4" stroke="#000" stroke-width="0.9" opacity="0.6"/><line x1="946.6" y1="100.1" x2="946.6" y2="102.8" stroke="#000" stroke-width="0.9" opacity="0.6"/><line x1="947.6" y1="75.6" x2="947.6" y2="76.8" stroke="#000" stroke-width="0.9" opacity="0.6"/><line x1="947.6" y1="100.0" x2="947.6" y2="102.8" stroke="#000" stroke-width="0.9" opacity="0.6"/><line x1="949.0" y1="75.6" x2="949.0" y2="78.2" stroke="#000" stroke-width="0.9" opacity="0.6"/><line x1="949.0" y1="99.2" x2="949.0" y2="102.8" stroke="#000" stroke-width="0.9" opacity="0.6"/><line x1="950.4" y1="75.6" x2="950.4" y2="78.9" stroke="#000" stroke-width="0.9" opacity="0.6"/><line x1="950.4" y1="98.1" x2="950.4" y2="102.8" stroke="#000" stroke-width="0.9" opacity="0.6"/><line x1="950.8" y1="72.2" x2="950.8" y2="75.6" stroke="#4a4800" stroke-width="0.8"/><line x1="951.8" y1="75.6" x2="951.8" y2="79.3" stroke="#000" stroke-width="0.9" opacity="0.6"/><line x1="951.8" y1="100.5" x2="951.8" y2="102.8" stroke="#000" stroke-width="0.9" opacity="0.6"/><line x1="952.2" y1="72.7" x2="952.2" y2="75.6" stroke="#4a4800" stroke-width="0.8"/><line x1="953.3" y1="75.6" x2="953.3" y2="78.6" stroke="#000" stroke-width="0.9" opacity="0.6"/><line x1="953.3" y1="98.2" x2="953.3" y2="102.8" stroke="#000" stroke-width="0.9" opacity="0.6"/><line x1="953.7" y1="102.8" x2="953.7" y2="105.3" stroke="#4a4800" stroke-width="0.8"/><line x1="954.7" y1="75.6" x2="954.7" y2="78.4" stroke="#000" stroke-width="0.9" opacity="0.6"/><line x1="954.7" y1="98.4" x2="954.7" y2="102.8" stroke="#000" stroke-width="0.9" opacity="0.6"/><line x1="956.4" y1="75.6" x2="956.4" y2="78.4" stroke="#000" stroke-width="0.9" opacity="0.6"/><line x1="956.4" y1="99.8" x2="956.4" y2="102.8" stroke="#000" stroke-width="0.9" opacity="0.6"/><line x1="957.7" y1="75.6" x2="957.7" y2="79.6" stroke="#000" stroke-width="0.9" opacity="0.6"/><line x1="957.7" y1="100.2" x2="957.7" y2="102.8" stroke="#000" stroke-width="0.9" opacity="0.6"/><line x1="958.1" y1="72.9" x2="958.1" y2="75.6" stroke="#4a4800" stroke-width="0.8"/><line x1="959.1" y1="75.6" x2="959.1" y2="79.7" stroke="#000" stroke-width="0.9" opacity="0.6"/><line x1="959.1" y1="101.3" x2="959.1" y2="102.8" stroke="#000" stroke-width="0.9" opacity="0.6"/><line x1="959.5" y1="74.4" x2="959.5" y2="75.6" stroke="#4a4800" stroke-width="0.8"/><line x1="960.0" y1="75.6" x2="960.0" y2="77.0" stroke="#000" stroke-width="0.9" opacity="0.6"/><line x1="960.0" y1="98.8" x2="960.0" y2="102.8" stroke="#000" stroke-width="0.9" opacity="0.6"/><line x1="960.4" y1="102.8" x2="960.4" y2="105.5" stroke="#4a4800" stroke-width="0.8"/><line x1="961.9" y1="75.6" x2="961.9" y2="78.5" stroke="#000" stroke-width="0.9" opacity="0.6"/><line x1="961.9" y1="101.6" x2="961.9" y2="102.8" stroke="#000" stroke-width="0.9" opacity="0.6"/><line x1="963.2" y1="75.6" x2="963.2" y2="80.6" stroke="#000" stroke-width="0.9" opacity="0.6"/><line x1="963.2" y1="98.5" x2="963.2" y2="102.8" stroke="#000" stroke-width="0.9" opacity="0.6"/><line x1="963.6" y1="102.8" x2="963.6" y2="104.6" stroke="#4a4800" stroke-width="0.8"/><line x1="964.5" y1="75.6" x2="964.5" y2="76.6" stroke="#000" stroke-width="0.9" opacity="0.6"/><line x1="964.5" y1="97.8" x2="964.5" y2="102.8" stroke="#000" stroke-width="0.9" opacity="0.6"/><line x1="965.8" y1="75.6" x2="965.8" y2="77.6" stroke="#000" stroke-width="0.9" opacity="0.6"/><line x1="965.8" y1="98.4" x2="965.8" y2="102.8" stroke="#000" stroke-width="0.9" opacity="0.6"/><line x1="967.3" y1="75.6" x2="967.3" y2="76.8" stroke="#000" stroke-width="0.9" opacity="0.6"/><line x1="967.3" y1="100.6" x2="967.3" y2="102.8" stroke="#000" stroke-width="0.9" opacity="0.6"/><line x1="969.0" y1="75.6" x2="969.0" y2="77.6" stroke="#000" stroke-width="0.9" opacity="0.6"/><line x1="969.0" y1="101.0" x2="969.0" y2="102.8" stroke="#000" stroke-width="0.9" opacity="0.6"/><line x1="969.4" y1="73.3" x2="969.4" y2="75.6" stroke="#4a4800" stroke-width="0.8"/><line x1="970.1" y1="75.6" x2="970.1" y2="78.6" stroke="#000" stroke-width="0.9" opacity="0.6"/><line x1="970.1" y1="99.5" x2="970.1" y2="102.8" stroke="#000" stroke-width="0.9" opacity="0.6"/><line x1="971.3" y1="75.6" x2="971.3" y2="80.3" stroke="#000" stroke-width="0.9" opacity="0.6"/><line x1="971.3" y1="99.6" x2="971.3" y2="102.8" stroke="#000" stroke-width="0.9" opacity="0.6"/><line x1="971.7" y1="73.8" x2="971.7" y2="75.6" stroke="#4a4800" stroke-width="0.8"/><line x1="972.8" y1="75.6" x2="972.8" y2="78.9" stroke="#000" stroke-width="0.9" opacity="0.6"/><line x1="972.8" y1="100.5" x2="972.8" y2="102.8" stroke="#000" stroke-width="0.9" opacity="0.6"/><line x1="974.2" y1="75.6" x2="974.2" y2="79.4" stroke="#000" stroke-width="0.9" opacity="0.6"/><line x1="974.2" y1="98.6" x2="974.2" y2="102.8" stroke="#000" stroke-width="0.9" opacity="0.6"/><line x1="976.1" y1="75.6" x2="976.1" y2="78.4" stroke="#000" stroke-width="0.9" opacity="0.6"/><line x1="976.1" y1="98.3" x2="976.1" y2="102.8" stroke="#000" stroke-width="0.9" opacity="0.6"/><line x1="976.5" y1="73.5" x2="976.5" y2="75.6" stroke="#4a4800" stroke-width="0.8"/><line x1="976.8" y1="75.6" x2="976.8" y2="80.1" stroke="#000" stroke-width="0.9" opacity="0.6"/><line x1="976.8" y1="101.5" x2="976.8" y2="102.8" stroke="#000" stroke-width="0.9" opacity="0.6"/><line x1="977.2" y1="102.8" x2="977.2" y2="106.1" stroke="#4a4800" stroke-width="0.8"/><line x1="978.6" y1="75.6" x2="978.6" y2="79.8" stroke="#000" stroke-width="0.9" opacity="0.6"/><line x1="978.6" y1="99.8" x2="978.6" y2="102.8" stroke="#000" stroke-width="0.9" opacity="0.6"/><line x1="979.8" y1="75.6" x2="979.8" y2="77.4" stroke="#000" stroke-width="0.9" opacity="0.6"/><line x1="979.8" y1="98.4" x2="979.8" y2="102.8" stroke="#000" stroke-width="0.9" opacity="0.6"/><line x1="980.2" y1="72.3" x2="980.2" y2="75.6" stroke="#4a4800" stroke-width="0.8"/><line x1="980.2" y1="102.8" x2="980.2" y2="104.1" stroke="#4a4800" stroke-width="0.8"/><line x1="981.0" y1="75.6" x2="981.0" y2="79.7" stroke="#000" stroke-width="0.9" opacity="0.6"/><line x1="981.0" y1="98.0" x2="981.0" y2="102.8" stroke="#000" stroke-width="0.9" opacity="0.6"/><line x1="982.5" y1="75.6" x2="982.5" y2="80.2" stroke="#000" stroke-width="0.9" opacity="0.6"/><line x1="982.5" y1="99.1" x2="982.5" y2="102.8" stroke="#000" stroke-width="0.9" opacity="0.6"/><line x1="982.9" y1="74.5" x2="982.9" y2="75.6" stroke="#4a4800" stroke-width="0.8"/><line x1="983.8" y1="75.6" x2="983.8" y2="79.9" stroke="#000" stroke-width="0.9" opacity="0.6"/><line x1="983.8" y1="100.6" x2="983.8" y2="102.8" stroke="#000" stroke-width="0.9" opacity="0.6"/><line x1="984.2" y1="73.1" x2="984.2" y2="75.6" stroke="#4a4800" stroke-width="0.8"/><line x1="985.6" y1="75.6" x2="985.6" y2="77.2" stroke="#000" stroke-width="0.9" opacity="0.6"/><line x1="985.6" y1="98.2" x2="985.6" y2="102.8" stroke="#000" stroke-width="0.9" opacity="0.6"/><line x1="986.6" y1="75.6" x2="986.6" y2="79.8" stroke="#000" stroke-width="0.9" opacity="0.6"/><line x1="986.6" y1="97.9" x2="986.6" y2="102.8" stroke="#000" stroke-width="0.9" opacity="0.6"/><line x1="987.0" y1="102.8" x2="987.0" y2="104.7" stroke="#4a4800" stroke-width="0.8"/><line x1="988.4" y1="75.6" x2="988.4" y2="77.5" stroke="#000" stroke-width="0.9" opacity="0.6"/><line x1="988.4" y1="99.6" x2="988.4" y2="102.8" stroke="#000" stroke-width="0.9" opacity="0.6"/><line x1="988.8" y1="73.4" x2="988.8" y2="75.6" stroke="#4a4800" stroke-width="0.8"/><line x1="989.7" y1="75.6" x2="989.7" y2="79.3" stroke="#000" stroke-width="0.9" opacity="0.6"/><line x1="989.7" y1="101.3" x2="989.7" y2="102.8" stroke="#000" stroke-width="0.9" opacity="0.6"/><line x1="990.1" y1="102.8" x2="990.1" y2="106.1" stroke="#4a4800" stroke-width="0.8"/><line x1="991.5" y1="75.6" x2="991.5" y2="80.4" stroke="#000" stroke-width="0.9" opacity="0.6"/><line x1="991.5" y1="99.7" x2="991.5" y2="102.8" stroke="#000" stroke-width="0.9" opacity="0.6"/><line x1="992.7" y1="75.6" x2="992.7" y2="78.6" stroke="#000" stroke-width="0.9" opacity="0.6"/><line x1="992.7" y1="98.1" x2="992.7" y2="102.8" stroke="#000" stroke-width="0.9" opacity="0.6"/><line x1="993.1" y1="73.4" x2="993.1" y2="75.6" stroke="#4a4800" stroke-width="0.8"/><line x1="994.0" y1="75.6" x2="994.0" y2="78.8" stroke="#000" stroke-width="0.9" opacity="0.6"/><line x1="994.0" y1="101.4" x2="994.0" y2="102.8" stroke="#000" stroke-width="0.9" opacity="0.6"/><line x1="994.4" y1="73.9" x2="994.4" y2="75.6" stroke="#4a4800" stroke-width="0.8"/><line x1="995.6" y1="75.6" x2="995.6" y2="77.5" stroke="#000" stroke-width="0.9" opacity="0.6"/><line x1="995.6" y1="98.1" x2="995.6" y2="102.8" stroke="#000" stroke-width="0.9" opacity="0.6"/><line x1="996.0" y1="73.1" x2="996.0" y2="75.6" stroke="#4a4800" stroke-width="0.8"/><line x1="996.6" y1="75.6" x2="996.6" y2="80.4" stroke="#000" stroke-width="0.9" opacity="0.6"/><line x1="996.6" y1="99.2" x2="996.6" y2="102.8" stroke="#000" stroke-width="0.9" opacity="0.6"/><line x1="997.0" y1="73.8" x2="997.0" y2="75.6" stroke="#4a4800" stroke-width="0.8"/><line x1="997.9" y1="75.6" x2="997.9" y2="79.6" stroke="#000" stroke-width="0.9" opacity="0.6"/><line x1="997.9" y1="101.1" x2="997.9" y2="102.8" stroke="#000" stroke-width="0.9" opacity="0.6"/><line x1="999.2" y1="75.6" x2="999.2" y2="78.8" stroke="#000" stroke-width="0.9" opacity="0.6"/><line x1="999.2" y1="101.4" x2="999.2" y2="102.8" stroke="#000" stroke-width="0.9" opacity="0.6"/><line x1="1001.0" y1="75.6" x2="1001.0" y2="78.4" stroke="#000" stroke-width="0.9" opacity="0.6"/><line x1="1001.0" y1="101.7" x2="1001.0" y2="102.8" stroke="#000" stroke-width="0.9" opacity="0.6"/><line x1="1001.4" y1="102.8" x2="1001.4" y2="105.4" stroke="#4a4800" stroke-width="0.8"/><line x1="1002.0" y1="75.6" x2="1002.0" y2="78.9" stroke="#000" stroke-width="0.9" opacity="0.6"/><line x1="1002.0" y1="100.4" x2="1002.0" y2="102.8" stroke="#000" stroke-width="0.9" opacity="0.6"/><line x1="1003.4" y1="75.6" x2="1003.4" y2="77.3" stroke="#000" stroke-width="0.9" opacity="0.6"/><line x1="1003.4" y1="98.0" x2="1003.4" y2="102.8" stroke="#000" stroke-width="0.9" opacity="0.6"/><line x1="1005.4" y1="75.6" x2="1005.4" y2="78.5" stroke="#000" stroke-width="0.9" opacity="0.6"/><line x1="1005.4" y1="101.2" x2="1005.4" y2="102.8" stroke="#000" stroke-width="0.9" opacity="0.6"/><line x1="1005.8" y1="72.4" x2="1005.8" y2="75.6" stroke="#4a4800" stroke-width="0.8"/><line x1="1005.8" y1="102.8" x2="1005.8" y2="105.0" stroke="#4a4800" stroke-width="0.8"/><line x1="1006.5" y1="75.6" x2="1006.5" y2="77.1" stroke="#000" stroke-width="0.9" opacity="0.6"/><line x1="1006.5" y1="99.9" x2="1006.5" y2="102.8" stroke="#000" stroke-width="0.9" opacity="0.6"/><line x1="1006.9" y1="73.3" x2="1006.9" y2="75.6" stroke="#4a4800" stroke-width="0.8"/><line x1="1007.8" y1="75.6" x2="1007.8" y2="77.4" stroke="#000" stroke-width="0.9" opacity="0.6"/><line x1="1007.8" y1="100.2" x2="1007.8" y2="102.8" stroke="#000" stroke-width="0.9" opacity="0.6"/><line x1="1008.2" y1="74.3" x2="1008.2" y2="75.6" stroke="#4a4800" stroke-width="0.8"/><line x1="1008.2" y1="102.8" x2="1008.2" y2="106.0" stroke="#4a4800" stroke-width="0.8"/><line x1="1009.3" y1="75.6" x2="1009.3" y2="80.2" stroke="#000" stroke-width="0.9" opacity="0.6"/><line x1="1009.3" y1="101.7" x2="1009.3" y2="102.8" stroke="#000" stroke-width="0.9" opacity="0.6"/><line x1="1010.9" y1="75.6" x2="1010.9" y2="78.9" stroke="#000" stroke-width="0.9" opacity="0.6"/><line x1="1010.9" y1="99.0" x2="1010.9" y2="102.8" stroke="#000" stroke-width="0.9" opacity="0.6"/><line x1="1011.3" y1="72.7" x2="1011.3" y2="75.6" stroke="#4a4800" stroke-width="0.8"/><line x1="1011.3" y1="102.8" x2="1011.3" y2="104.5" stroke="#4a4800" stroke-width="0.8"/><line x1="1011.7" y1="75.6" x2="1011.7" y2="78.2" stroke="#000" stroke-width="0.9" opacity="0.6"/><line x1="1011.7" y1="99.7" x2="1011.7" y2="102.8" stroke="#000" stroke-width="0.9" opacity="0.6"/><line x1="1013.2" y1="75.6" x2="1013.2" y2="78.9" stroke="#000" stroke-width="0.9" opacity="0.6"/><line x1="1013.2" y1="100.9" x2="1013.2" y2="102.8" stroke="#000" stroke-width="0.9" opacity="0.6"/><line x1="1015.1" y1="75.6" x2="1015.1" y2="76.8" stroke="#000" stroke-width="0.9" opacity="0.6"/><line x1="1015.1" y1="100.8" x2="1015.1" y2="102.8" stroke="#000" stroke-width="0.9" opacity="0.6"/><line x1="1015.9" y1="75.6" x2="1015.9" y2="79.1" stroke="#000" stroke-width="0.9" opacity="0.6"/><line x1="1015.9" y1="99.0" x2="1015.9" y2="102.8" stroke="#000" stroke-width="0.9" opacity="0.6"/><line x1="1018.0" y1="75.6" x2="1018.0" y2="78.4" stroke="#000" stroke-width="0.9" opacity="0.6"/><line x1="1018.0" y1="98.1" x2="1018.0" y2="102.8" stroke="#000" stroke-width="0.9" opacity="0.6"/><line x1="1018.4" y1="72.2" x2="1018.4" y2="75.6" stroke="#4a4800" stroke-width="0.8"/><line x1="1019.0" y1="75.6" x2="1019.0" y2="77.0" stroke="#000" stroke-width="0.9" opacity="0.6"/><line x1="1019.0" y1="100.8" x2="1019.0" y2="102.8" stroke="#000" stroke-width="0.9" opacity="0.6"/><line x1="1020.2" y1="75.6" x2="1020.2" y2="78.0" stroke="#000" stroke-width="0.9" opacity="0.6"/><line x1="1020.2" y1="101.2" x2="1020.2" y2="102.8" stroke="#000" stroke-width="0.9" opacity="0.6"/><line x1="1020.6" y1="74.1" x2="1020.6" y2="75.6" stroke="#4a4800" stroke-width="0.8"/><g filter="url(#bl)"><path d="M0.5,85.1 L3.5,84.9 L6.6,84.6 L9.6,84.3 L12.6,84.1 L15.6,84.1 L18.7,84.2 L21.7,84.5 L24.7,84.6 L27.8,84.8 L30.8,85.1 L33.8,85.7 L36.9,85.7 L39.9,86.0 L42.9,86.1 L45.9,85.8 L49.0,85.8 L52.0,85.6 L55.0,85.5 L58.1,85.0 L61.1,84.6 L64.1,84.4 L67.1,84.2 L70.2,84.1 L73.2,84.1 L76.2,84.3 L79.3,84.5 L82.3,84.6 L85.3,84.9 L88.4,85.2 L91.4,85.7 L94.4,85.6 L97.4,85.9 L100.5,85.8 L103.5,86.1 L106.5,85.6 L109.6,85.5 L112.6,85.4 L115.6,84.9 L118.6,84.8 L121.7,84.6 L124.7,84.3 L127.7,84.3 L130.8,84.2 L133.8,84.2 L136.8,84.5 L139.9,84.7 L142.9,85.2 L145.9,85.3 L148.9,85.6 L152.0,85.8 L155.0,85.8 L158.0,85.9 L161.1,85.9 L164.1,85.9 L167.1,85.4 L170.1,85.1 L173.2,85.0 L176.2,84.6 L179.2,84.3 L182.3,84.1 L185.3,84.4 L188.3,84.3 L191.4,84.6 L194.4,84.8 L197.4,84.8 L200.4,85.2 L203.5,85.5 L206.5,85.8 L206.5,93.4 L203.5,93.1 L200.4,92.7 L197.4,92.6 L194.4,92.5 L191.4,92.5 L188.3,92.2 L185.3,92.7 L182.3,92.6 L179.2,92.8 L176.2,93.2 L173.2,93.4 L170.1,93.5 L167.1,93.7 L164.1,94.0 L161.1,94.2 L158.0,94.1 L155.0,94.4 L152.0,94.1 L148.9,94.1 L145.9,93.7 L142.9,93.7 L139.9,93.6 L136.8,93.3 L133.8,92.9 L130.8,92.7 L127.7,92.7 L124.7,92.5 L121.7,92.2 L118.6,92.4 L115.6,92.4 L112.6,92.8 L109.6,92.8 L106.5,93.3 L103.5,93.2 L100.5,93.4 L97.4,93.8 L94.4,93.8 L91.4,94.2 L88.4,94.1 L85.3,94.4 L82.3,94.1 L79.3,94.2 L76.2,93.8 L73.2,93.6 L70.2,93.5 L67.1,93.2 L64.1,93.0 L61.1,92.6 L58.1,92.5 L55.0,92.6 L52.0,92.3 L49.0,92.3 L45.9,92.7 L42.9,92.5 L39.9,93.0 L36.9,93.0 L33.8,93.5 L30.8,93.7 L27.8,93.8 L24.7,94.1 L21.7,94.0 L18.7,94.0 L15.6,94.1 L12.6,94.2 L9.6,94.1 L6.6,93.7 L3.5,93.5 L0.5,93.3Z" fill="#f4ee10"/><rect x="1.0" y="83.3" width="1.2" height="2.0" fill="#c8c200" opacity="0.8"/><rect x="1.0" y="93.1" width="1.2" height="2.0" fill="#c8c200" opacity="0.8"/><rect x="2.6" y="84.0" width="1.2" height="1.3" fill="#c8c200" opacity="0.8"/><rect x="2.6" y="93.1" width="1.2" height="1.0" fill="#c8c200" opacity="0.8"/><rect x="6.0" y="83.1" width="1.2" height="2.2" fill="#c8c200" opacity="0.8"/><rect x="6.0" y="93.1" width="1.2" height="1.0" fill="#c8c200" opacity="0.8"/><rect x="8.7" y="83.6" width="1.2" height="1.7" fill="#c8c200" opacity="0.8"/><rect x="8.7" y="93.1" width="1.2" height="0.9" fill="#c8c200" opacity="0.8"/><rect x="10.9" y="83.3" width="1.2" height="2.0" fill="#c8c200" opacity="0.8"/><rect x="10.9" y="93.1" width="1.2" height="1.8" fill="#c8c200" opacity="0.8"/><rect x="13.0" y="83.3" width="1.2" height="2.0" fill="#c8c200" opacity="0.8"/><rect x="13.0" y="93.1" width="1.2" height="1.3" fill="#c8c200" opacity="0.8"/><rect x="15.6" y="83.8" width="1.2" height="1.5" fill="#c8c200" opacity="0.8"/><rect x="15.6" y="93.1" width="1.2" height="2.4" fill="#c8c200" opacity="0.8"/><rect x="18.4" y="83.2" width="1.2" height="2.1" fill="#c8c200" opacity="0.8"/><rect x="18.4" y="93.1" width="1.2" height="1.9" fill="#c8c200" opacity="0.8"/><rect x="20.6" y="83.0" width="1.2" height="2.3" fill="#c8c200" opacity="0.8"/><rect x="20.6" y="93.1" width="1.2" height="1.9" fill="#c8c200" opacity="0.8"/><rect x="23.5" y="84.1" width="1.2" height="1.2" fill="#c8c200" opacity="0.8"/><rect x="23.5" y="93.1" width="1.2" height="1.1" fill="#c8c200" opacity="0.8"/><rect x="26.2" y="83.2" width="1.2" height="2.1" fill="#c8c200" opacity="0.8"/><rect x="26.2" y="93.1" width="1.2" height="2.1" fill="#c8c200" opacity="0.8"/><rect x="28.4" y="84.3" width="1.2" height="1.0" fill="#c8c200" opacity="0.8"/><rect x="28.4" y="93.1" width="1.2" height="1.6" fill="#c8c200" opacity="0.8"/><rect x="31.6" y="84.2" width="1.2" height="1.1" fill="#c8c200" opacity="0.8"/><rect x="31.6" y="93.1" width="1.2" height="2.0" fill="#c8c200" opacity="0.8"/><rect x="33.5" y="84.0" width="1.2" height="1.3" fill="#c8c200" opacity="0.8"/><rect x="33.5" y="93.1" width="1.2" height="0.9" fill="#c8c200" opacity="0.8"/><rect x="35.6" y="83.9" width="1.2" height="1.4" fill="#c8c200" opacity="0.8"/><rect x="35.6" y="93.1" width="1.2" height="2.3" fill="#c8c200" opacity="0.8"/><rect x="39.0" y="84.2" width="1.2" height="1.1" fill="#c8c200" opacity="0.8"/><rect x="39.0" y="93.1" width="1.2" height="1.3" fill="#c8c200" opacity="0.8"/><rect x="42.4" y="84.2" width="1.2" height="1.1" fill="#c8c200" opacity="0.8"/><rect x="42.4" y="93.1" width="1.2" height="1.3" fill="#c8c200" opacity="0.8"/><rect x="44.8" y="84.3" width="1.2" height="1.0" fill="#c8c200" opacity="0.8"/><rect x="44.8" y="93.1" width="1.2" height="1.2" fill="#c8c200" opacity="0.8"/><rect x="47.0" y="83.9" width="1.2" height="1.4" fill="#c8c200" opacity="0.8"/><rect x="47.0" y="93.1" width="1.2" height="2.3" fill="#c8c200" opacity="0.8"/><rect x="49.1" y="84.2" width="1.2" height="1.1" fill="#c8c200" opacity="0.8"/><rect x="49.1" y="93.1" width="1.2" height="2.3" fill="#c8c200" opacity="0.8"/><rect x="51.5" y="83.2" width="1.2" height="2.1" fill="#c8c200" opacity="0.8"/><rect x="51.5" y="93.1" width="1.2" height="1.8" fill="#c8c200" opacity="0.8"/><rect x="54.5" y="84.0" width="1.2" height="1.3" fill="#c8c200" opacity="0.8"/><rect x="54.5" y="93.1" width="1.2" height="1.0" fill="#c8c200" opacity="0.8"/><rect x="57.5" y="83.7" width="1.2" height="1.6" fill="#c8c200" opacity="0.8"/><rect x="57.5" y="93.1" width="1.2" height="1.7" fill="#c8c200" opacity="0.8"/><rect x="60.4" y="83.3" width="1.2" height="2.0" fill="#c8c200" opacity="0.8"/><rect x="60.4" y="93.1" width="1.2" height="1.2" fill="#c8c200" opacity="0.8"/><rect x="62.6" y="83.0" width="1.2" height="2.3" fill="#c8c200" opacity="0.8"/><rect x="62.6" y="93.1" width="1.2" height="1.6" fill="#c8c200" opacity="0.8"/><rect x="64.7" y="83.5" width="1.2" height="1.8" fill="#c8c200" opacity="0.8"/><rect x="64.7" y="93.1" width="1.2" height="1.2" fill="#c8c200" opacity="0.8"/><rect x="67.7" y="84.4" width="1.2" height="0.9" fill="#c8c200" opacity="0.8"/><rect x="67.7" y="93.1" width="1.2" height="2.1" fill="#c8c200" opacity="0.8"/><rect x="70.4" y="83.9" width="1.2" height="1.4" fill="#c8c200" opacity="0.8"/><rect x="70.4" y="93.1" width="1.2" height="2.3" fill="#c8c200" opacity="0.8"/><rect x="72.4" y="84.1" width="1.2" height="1.2" fill="#c8c200" opacity="0.8"/><rect x="72.4" y="93.1" width="1.2" height="0.9" fill="#c8c200" opacity="0.8"/><rect x="75.0" y="83.3" width="1.2" height="2.0" fill="#c8c200" opacity="0.8"/><rect x="75.0" y="93.1" width="1.2" height="1.9" fill="#c8c200" opacity="0.8"/><rect x="77.3" y="83.2" width="1.2" height="2.1" fill="#c8c200" opacity="0.8"/><rect x="77.3" y="93.1" width="1.2" height="1.0" fill="#c8c200" opacity="0.8"/><rect x="79.4" y="83.5" width="1.2" height="1.8" fill="#c8c200" opacity="0.8"/><rect x="79.4" y="93.1" width="1.2" height="2.3" fill="#c8c200" opacity="0.8"/><rect x="82.2" y="83.4" width="1.2" height="1.9" fill="#c8c200" opacity="0.8"/><rect x="82.2" y="93.1" width="1.2" height="2.0" fill="#c8c200" opacity="0.8"/><rect x="84.5" y="83.0" width="1.2" height="2.3" fill="#c8c200" opacity="0.8"/><rect x="84.5" y="93.1" width="1.2" height="2.0" fill="#c8c200" opacity="0.8"/><rect x="86.7" y="83.9" width="1.2" height="1.4" fill="#c8c200" opacity="0.8"/><rect x="86.7" y="93.1" width="1.2" height="2.1" fill="#c8c200" opacity="0.8"/><rect x="88.9" y="84.2" width="1.2" height="1.1" fill="#c8c200" opacity="0.8"/><rect x="88.9" y="93.1" width="1.2" height="2.2" fill="#c8c200" opacity="0.8"/><rect x="91.4" y="83.7" width="1.2" height="1.6" fill="#c8c200" opacity="0.8"/><rect x="91.4" y="93.1" width="1.2" height="1.9" fill="#c8c200" opacity="0.8"/><rect x="94.7" y="84.3" width="1.2" height="1.0" fill="#c8c200" opacity="0.8"/><rect x="94.7" y="93.1" width="1.2" height="1.3" fill="#c8c200" opacity="0.8"/><rect x="96.4" y="83.8" width="1.2" height="1.5" fill="#c8c200" opacity="0.8"/><rect x="96.4" y="93.1" width="1.2" height="1.6" fill="#c8c200" opacity="0.8"/><rect x="99.6" y="83.4" width="1.2" height="1.9" fill="#c8c200" opacity="0.8"/><rect x="99.6" y="93.1" width="1.2" height="1.7" fill="#c8c200" opacity="0.8"/><rect x="101.9" y="83.6" width="1.2" height="1.7" fill="#c8c200" opacity="0.8"/><rect x="101.9" y="93.1" width="1.2" height="1.2" fill="#c8c200" opacity="0.8"/><rect x="105.1" y="83.2" width="1.2" height="2.1" fill="#c8c200" opacity="0.8"/><rect x="105.1" y="93.1" width="1.2" height="2.1" fill="#c8c200" opacity="0.8"/><rect x="106.9" y="83.4" width="1.2" height="1.9" fill="#c8c200" opacity="0.8"/><rect x="106.9" y="93.1" width="1.2" height="2.0" fill="#c8c200" opacity="0.8"/><rect x="109.4" y="83.1" width="1.2" height="2.2" fill="#c8c200" opacity="0.8"/><rect x="109.4" y="93.1" width="1.2" height="2.2" fill="#c8c200" opacity="0.8"/><rect x="112.4" y="83.2" width="1.2" height="2.1" fill="#c8c200" opacity="0.8"/><rect x="112.4" y="93.1" width="1.2" height="1.8" fill="#c8c200" opacity="0.8"/><rect x="115.6" y="84.3" width="1.2" height="1.0" fill="#c8c200" opacity="0.8"/><rect x="115.6" y="93.1" width="1.2" height="1.9" fill="#c8c200" opacity="0.8"/><rect x="118.5" y="83.5" width="1.2" height="1.8" fill="#c8c200" opacity="0.8"/><rect x="118.5" y="93.1" width="1.2" height="1.2" fill="#c8c200" opacity="0.8"/><rect x="120.2" y="83.5" width="1.2" height="1.8" fill="#c8c200" opacity="0.8"/><rect x="120.2" y="93.1" width="1.2" height="2.1" fill="#c8c200" opacity="0.8"/><rect x="122.2" y="84.2" width="1.2" height="1.1" fill="#c8c200" opacity="0.8"/><rect x="122.2" y="93.1" width="1.2" height="1.2" fill="#c8c200" opacity="0.8"/><rect x="123.9" y="83.4" width="1.2" height="1.9" fill="#c8c200" opacity="0.8"/><rect x="123.9" y="93.1" width="1.2" height="2.4" fill="#c8c200" opacity="0.8"/><rect x="127.0" y="83.9" width="1.2" height="1.4" fill="#c8c200" opacity="0.8"/><rect x="127.0" y="93.1" width="1.2" height="1.9" fill="#c8c200" opacity="0.8"/><rect x="128.6" y="83.2" width="1.2" height="2.1" fill="#c8c200" opacity="0.8"/><rect x="128.6" y="93.1" width="1.2" height="1.3" fill="#c8c200" opacity="0.8"/><rect x="130.1" y="83.5" width="1.2" height="1.8" fill="#c8c200" opacity="0.8"/><rect x="130.1" y="93.1" width="1.2" height="1.0" fill="#c8c200" opacity="0.8"/><rect x="132.2" y="84.4" width="1.2" height="0.9" fill="#c8c200" opacity="0.8"/><rect x="132.2" y="93.1" width="1.2" height="1.5" fill="#c8c200" opacity="0.8"/><rect x="134.8" y="83.2" width="1.2" height="2.1" fill="#c8c200" opacity="0.8"/><rect x="134.8" y="93.1" width="1.2" height="0.9" fill="#c8c200" opacity="0.8"/><rect x="138.0" y="84.3" width="1.2" height="1.0" fill="#c8c200" opacity="0.8"/><rect x="138.0" y="93.1" width="1.2" height="1.2" fill="#c8c200" opacity="0.8"/><rect x="140.7" y="84.0" width="1.2" height="1.3" fill="#c8c200" opacity="0.8"/><rect x="140.7" y="93.1" width="1.2" height="1.3" fill="#c8c200" opacity="0.8"/><rect x="143.4" y="84.2" width="1.2" height="1.1" fill="#c8c200" opacity="0.8"/><rect x="143.4" y="93.1" width="1.2" height="2.1" fill="#c8c200" opacity="0.8"/><rect x="145.3" y="83.2" width="1.2" height="2.1" fill="#c8c200" opacity="0.8"/><rect x="145.3" y="93.1" width="1.2" height="2.1" fill="#c8c200" opacity="0.8"/><rect x="147.9" y="84.5" width="1.2" height="0.8" fill="#c8c200" opacity="0.8"/><rect x="147.9" y="93.1" width="1.2" height="2.0" fill="#c8c200" opacity="0.8"/><rect x="149.4" y="83.7" width="1.2" height="1.6" fill="#c8c200" opacity="0.8"/><rect x="149.4" y="93.1" width="1.2" height="1.5" fill="#c8c200" opacity="0.8"/><rect x="151.0" y="83.5" width="1.2" height="1.8" fill="#c8c200" opacity="0.8"/><rect x="151.0" y="93.1" width="1.2" height="2.0" fill="#c8c200" opacity="0.8"/><rect x="153.7" y="83.9" width="1.2" height="1.4" fill="#c8c200" opacity="0.8"/><rect x="153.7" y="93.1" width="1.2" height="1.6" fill="#c8c200" opacity="0.8"/><rect x="156.4" y="84.1" width="1.2" height="1.2" fill="#c8c200" opacity="0.8"/><rect x="156.4" y="93.1" width="1.2" height="2.2" fill="#c8c200" opacity="0.8"/><rect x="159.9" y="83.2" width="1.2" height="2.1" fill="#c8c200" opacity="0.8"/><rect x="159.9" y="93.1" width="1.2" height="2.3" fill="#c8c200" opacity="0.8"/><rect x="162.0" y="82.9" width="1.2" height="2.4" fill="#c8c200" opacity="0.8"/><rect x="162.0" y="93.1" width="1.2" height="0.9" fill="#c8c200" opacity="0.8"/><rect x="164.5" y="84.3" width="1.2" height="1.0" fill="#c8c200" opacity="0.8"/><rect x="164.5" y="93.1" width="1.2" height="1.5" fill="#c8c200" opacity="0.8"/><rect x="167.4" y="83.4" width="1.2" height="1.9" fill="#c8c200" opacity="0.8"/><rect x="167.4" y="93.1" width="1.2" height="1.5" fill="#c8c200" opacity="0.8"/><rect x="169.5" y="84.2" width="1.2" height="1.1" fill="#c8c200" opacity="0.8"/><rect x="169.5" y="93.1" width="1.2" height="1.4" fill="#c8c200" opacity="0.8"/><rect x="171.6" y="84.2" width="1.2" height="1.1" fill="#c8c200" opacity="0.8"/><rect x="171.6" y="93.1" width="1.2" height="2.0" fill="#c8c200" opacity="0.8"/><rect x="174.1" y="83.8" width="1.2" height="1.5" fill="#c8c200" opacity="0.8"/><rect x="174.1" y="93.1" width="1.2" height="1.1" fill="#c8c200" opacity="0.8"/><rect x="177.0" y="84.2" width="1.2" height="1.1" fill="#c8c200" opacity="0.8"/><rect x="177.0" y="93.1" width="1.2" height="1.2" fill="#c8c200" opacity="0.8"/><rect x="179.7" y="83.4" width="1.2" height="1.9" fill="#c8c200" opacity="0.8"/><rect x="179.7" y="93.1" width="1.2" height="2.4" fill="#c8c200" opacity="0.8"/><rect x="182.7" y="83.0" width="1.2" height="2.3" fill="#c8c200" opacity="0.8"/><rect x="182.7" y="93.1" width="1.2" height="2.3" fill="#c8c200" opacity="0.8"/><rect x="185.6" y="83.3" width="1.2" height="2.0" fill="#c8c200" opacity="0.8"/><rect x="185.6" y="93.1" width="1.2" height="0.9" fill="#c8c200" opacity="0.8"/><rect x="187.5" y="84.5" width="1.2" height="0.8" fill="#c8c200" opacity="0.8"/><rect x="187.5" y="93.1" width="1.2" height="2.2" fill="#c8c200" opacity="0.8"/><rect x="190.5" y="83.5" width="1.2" height="1.8" fill="#c8c200" opacity="0.8"/><rect x="190.5" y="93.1" width="1.2" height="1.2" fill="#c8c200" opacity="0.8"/><rect x="192.7" y="84.2" width="1.2" height="1.1" fill="#c8c200" opacity="0.8"/><rect x="192.7" y="93.1" width="1.2" height="1.8" fill="#c8c200" opacity="0.8"/><rect x="196.2" y="84.0" width="1.2" height="1.3" fill="#c8c200" opacity="0.8"/><rect x="196.2" y="93.1" width="1.2" height="0.9" fill="#c8c200" opacity="0.8"/><rect x="198.0" y="83.9" width="1.2" height="1.4" fill="#c8c200" opacity="0.8"/><rect x="198.0" y="93.1" width="1.2" height="2.2" fill="#c8c200" opacity="0.8"/><rect x="201.1" y="83.8" width="1.2" height="1.5" fill="#c8c200" opacity="0.8"/><rect x="201.1" y="93.1" width="1.2" height="1.0" fill="#c8c200" opacity="0.8"/><rect x="202.8" y="84.3" width="1.2" height="1.0" fill="#c8c200" opacity="0.8"/><rect x="202.8" y="93.1" width="1.2" height="2.0" fill="#c8c200" opacity="0.8"/><rect x="205.3" y="82.9" width="1.2" height="2.4" fill="#c8c200" opacity="0.8"/><rect x="205.3" y="93.1" width="1.2" height="2.3" fill="#c8c200" opacity="0.8"/><rect x="205.50" y="241.90" width="11.77" height="7.8" rx="1.6" fill="#f4ee10"/><rect x="206.0" y="240.3" width="1.2" height="1.6" fill="#c8c200" opacity="0.8"/><rect x="206.0" y="249.7" width="1.2" height="2.1" fill="#c8c200" opacity="0.8"/><rect x="207.8" y="240.9" width="1.2" height="1.0" fill="#c8c200" opacity="0.8"/><rect x="207.8" y="249.7" width="1.2" height="1.7" fill="#c8c200" opacity="0.8"/><rect x="210.3" y="240.8" width="1.2" height="1.1" fill="#c8c200" opacity="0.8"/><rect x="210.3" y="249.7" width="1.2" height="1.2" fill="#c8c200" opacity="0.8"/><rect x="211.8" y="239.6" width="1.2" height="2.3" fill="#c8c200" opacity="0.8"/><rect x="211.8" y="249.7" width="1.2" height="1.9" fill="#c8c200" opacity="0.8"/><rect x="215.2" y="239.5" width="1.2" height="2.4" fill="#c8c200" opacity="0.8"/><rect x="215.2" y="249.7" width="1.2" height="1.5" fill="#c8c200" opacity="0.8"/><rect x="216.27" y="85.30" width="3.69" height="7.8" rx="1.6" fill="#f4ee10"/><rect x="218.97" y="241.90" width="6.39" height="7.8" rx="1.6" fill="#f4ee10"/><rect x="219.5" y="240.5" width="1.2" height="1.4" fill="#c8c200" opacity="0.8"/><rect x="219.5" y="249.7" width="1.2" height="2.1" fill="#c8c200" opacity="0.8"/><rect x="222.6" y="240.9" width="1.2" height="1.0" fill="#c8c200" opacity="0.8"/><rect x="222.6" y="249.7" width="1.2" height="0.8" fill="#c8c200" opacity="0.8"/><rect x="224.35" y="85.30" width="3.69" height="7.8" rx="1.6" fill="#f4ee10"/><rect x="227.04" y="241.90" width="3.69" height="7.8" rx="1.6" fill="#f4ee10"/><rect x="229.74" y="85.30" width="3.64" height="7.8" rx="1.6" fill="#f4ee10"/><rect x="232.38" y="241.90" width="3.69" height="7.8" rx="1.6" fill="#f4ee10"/><rect x="235.07" y="85.30" width="3.69" height="7.8" rx="1.6" fill="#f4ee10"/><rect x="237.77" y="241.90" width="3.69" height="7.8" rx="1.6" fill="#f4ee10"/><rect x="240.46" y="85.30" width="3.69" height="7.8" rx="1.6" fill="#f4ee10"/><rect x="243.15" y="241.90" width="6.39" height="7.8" rx="1.6" fill="#f4ee10"/><rect x="243.7" y="240.2" width="1.2" height="1.7" fill="#c8c200" opacity="0.8"/><rect x="243.7" y="249.7" width="1.2" height="1.4" fill="#c8c200" opacity="0.8"/><rect x="245.2" y="239.8" width="1.2" height="2.1" fill="#c8c200" opacity="0.8"/><rect x="245.2" y="249.7" width="1.2" height="2.1" fill="#c8c200" opacity="0.8"/><rect x="247.6" y="241.0" width="1.2" height="0.9" fill="#c8c200" opacity="0.8"/><rect x="247.6" y="249.7" width="1.2" height="2.2" fill="#c8c200" opacity="0.8"/><rect x="248.54" y="85.30" width="6.39" height="7.8" rx="1.6" fill="#f4ee10"/><rect x="249.0" y="84.4" width="1.2" height="0.9" fill="#c8c200" opacity="0.8"/><rect x="249.0" y="93.1" width="1.2" height="1.3" fill="#c8c200" opacity="0.8"/><rect x="251.8" y="83.1" width="1.2" height="2.2" fill="#c8c200" opacity="0.8"/><rect x="251.8" y="93.1" width="1.2" height="1.6" fill="#c8c200" opacity="0.8"/><rect x="253.92" y="241.90" width="3.69" height="7.8" rx="1.6" fill="#f4ee10"/><rect x="256.62" y="85.30" width="3.64" height="7.8" rx="1.6" fill="#f4ee10"/><rect x="259.26" y="241.90" width="9.08" height="7.8" rx="1.6" fill="#f4ee10"/><rect x="259.8" y="240.8" width="1.2" height="1.1" fill="#c8c200" opacity="0.8"/><rect x="259.8" y="249.7" width="1.2" height="1.2" fill="#c8c200" opacity="0.8"/><rect x="263.1" y="240.5" width="1.2" height="1.4" fill="#c8c200" opacity="0.8"/><rect x="263.1" y="249.7" width="1.2" height="1.0" fill="#c8c200" opacity="0.8"/><rect x="265.8" y="240.9" width="1.2" height="1.0" fill="#c8c200" opacity="0.8"/><rect x="265.8" y="249.7" width="1.2" height="1.1" fill="#c8c200" opacity="0.8"/><rect x="267.34" y="85.30" width="6.39" height="7.8" rx="1.6" fill="#f4ee10"/><rect x="267.8" y="83.6" width="1.2" height="1.7" fill="#c8c200" opacity="0.8"/><rect x="267.8" y="93.1" width="1.2" height="1.8" fill="#c8c200" opacity="0.8"/><rect x="270.8" y="83.8" width="1.2" height="1.5" fill="#c8c200" opacity="0.8"/><rect x="270.8" y="93.1" width="1.2" height="0.9" fill="#c8c200" opacity="0.8"/><rect x="272.72" y="241.90" width="3.69" height="7.8" rx="1.6" fill="#f4ee10"/><rect x="275.42" y="85.30" width="6.39" height="7.8" rx="1.6" fill="#f4ee10"/><rect x="275.9" y="84.4" width="1.2" height="0.9" fill="#c8c200" opacity="0.8"/><rect x="275.9" y="93.1" width="1.2" height="1.6" fill="#c8c200" opacity="0.8"/><rect x="278.2" y="83.4" width="1.2" height="1.9" fill="#c8c200" opacity="0.8"/><rect x="278.2" y="93.1" width="1.2" height="1.9" fill="#c8c200" opacity="0.8"/><rect x="280.2" y="83.5" width="1.2" height="1.8" fill="#c8c200" opacity="0.8"/><rect x="280.2" y="93.1" width="1.2" height="1.9" fill="#c8c200" opacity="0.8"/><rect x="280.80" y="241.90" width="3.69" height="7.8" rx="1.6" fill="#f4ee10"/><rect x="283.50" y="85.30" width="3.64" height="7.8" rx="1.6" fill="#f4ee10"/><rect x="286.14" y="241.90" width="9.08" height="7.8" rx="1.6" fill="#f4ee10"/><rect x="286.6" y="240.9" width="1.2" height="1.0" fill="#c8c200" opacity="0.8"/><rect x="286.6" y="249.7" width="1.2" height="2.3" fill="#c8c200" opacity="0.8"/><rect x="289.3" y="241.0" width="1.2" height="0.9" fill="#c8c200" opacity="0.8"/><rect x="289.3" y="249.7" width="1.2" height="1.2" fill="#c8c200" opacity="0.8"/><rect x="292.8" y="240.7" width="1.2" height="1.2" fill="#c8c200" opacity="0.8"/><rect x="292.8" y="249.7" width="1.2" height="1.4" fill="#c8c200" opacity="0.8"/><rect x="294.22" y="85.30" width="6.39" height="7.8" rx="1.6" fill="#f4ee10"/><rect x="294.7" y="83.2" width="1.2" height="2.1" fill="#c8c200" opacity="0.8"/><rect x="294.7" y="93.1" width="1.2" height="1.8" fill="#c8c200" opacity="0.8"/><rect x="297.7" y="84.4" width="1.2" height="0.9" fill="#c8c200" opacity="0.8"/><rect x="297.7" y="93.1" width="1.2" height="1.0" fill="#c8c200" opacity="0.8"/><rect x="299.60" y="241.90" width="3.69" height="7.8" rx="1.6" fill="#f4ee10"/><rect x="302.30" y="85.30" width="6.39" height="7.8" rx="1.6" fill="#f4ee10"/><rect x="302.8" y="83.2" width="1.2" height="2.1" fill="#c8c200" opacity="0.8"/><rect x="302.8" y="93.1" width="1.2" height="0.9" fill="#c8c200" opacity="0.8"/><rect x="304.4" y="84.1" width="1.2" height="1.2" fill="#c8c200" opacity="0.8"/><rect x="304.4" y="93.1" width="1.2" height="2.3" fill="#c8c200" opacity="0.8"/><rect x="306.3" y="83.4" width="1.2" height="1.9" fill="#c8c200" opacity="0.8"/><rect x="306.3" y="93.1" width="1.2" height="2.3" fill="#c8c200" opacity="0.8"/><rect x="307.68" y="241.90" width="3.69" height="7.8" rx="1.6" fill="#f4ee10"/><rect x="310.38" y="85.30" width="3.64" height="7.8" rx="1.6" fill="#f4ee10"/><rect x="313.02" y="241.90" width="3.69" height="7.8" rx="1.6" fill="#f4ee10"/><rect x="315.71" y="85.30" width="11.77" height="7.8" rx="1.6" fill="#f4ee10"/><rect x="316.2" y="83.0" width="1.2" height="2.3" fill="#c8c200" opacity="0.8"/><rect x="316.2" y="93.1" width="1.2" height="1.2" fill="#c8c200" opacity="0.8"/><rect x="318.0" y="84.5" width="1.2" height="0.8" fill="#c8c200" opacity="0.8"/><rect x="318.0" y="93.1" width="1.2" height="2.0" fill="#c8c200" opacity="0.8"/><rect x="319.7" y="82.9" width="1.2" height="2.4" fill="#c8c200" opacity="0.8"/><rect x="319.7" y="93.1" width="1.2" height="1.9" fill="#c8c200" opacity="0.8"/><rect x="321.6" y="83.2" width="1.2" height="2.1" fill="#c8c200" opacity="0.8"/><rect x="321.6" y="93.1" width="1.2" height="1.1" fill="#c8c200" opacity="0.8"/><rect x="324.1" y="84.3" width="1.2" height="1.0" fill="#c8c200" opacity="0.8"/><rect x="324.1" y="93.1" width="1.2" height="2.1" fill="#c8c200" opacity="0.8"/><rect x="326.48" y="241.90" width="3.69" height="7.8" rx="1.6" fill="#f4ee10"/><rect x="329.18" y="85.30" width="6.39" height="7.8" rx="1.6" fill="#f4ee10"/><rect x="329.7" y="83.0" width="1.2" height="2.3" fill="#c8c200" opacity="0.8"/><rect x="329.7" y="93.1" width="1.2" height="0.8" fill="#c8c200" opacity="0.8"/><rect x="332.9" y="83.6" width="1.2" height="1.7" fill="#c8c200" opacity="0.8"/><rect x="332.9" y="93.1" width="1.2" height="2.1" fill="#c8c200" opacity="0.8"/><rect x="334.56" y="241.90" width="3.69" height="7.8" rx="1.6" fill="#f4ee10"/><rect x="337.26" y="85.30" width="3.64" height="7.8" rx="1.6" fill="#f4ee10"/><path d="M339.9,242.2 L343.3,242.7 L346.8,242.8 L350.2,242.5 L353.6,242.4 L357.1,242.1 L357.1,249.0 L353.6,249.2 L350.2,249.3 L346.8,249.1 L343.3,249.7 L339.9,249.6Z" fill="#f4ee10"/><rect x="340.4" y="240.9" width="1.2" height="1.0" fill="#c8c200" opacity="0.8"/><rect x="340.4" y="249.7" width="1.2" height="1.8" fill="#c8c200" opacity="0.8"/><rect x="342.3" y="240.4" width="1.2" height="1.5" fill="#c8c200" opacity="0.8"/><rect x="342.3" y="249.7" width="1.2" height="1.0" fill="#c8c200" opacity="0.8"/><rect x="345.8" y="240.2" width="1.2" height="1.7" fill="#c8c200" opacity="0.8"/><rect x="345.8" y="249.7" width="1.2" height="1.4" fill="#c8c200" opacity="0.8"/><rect x="347.5" y="239.9" width="1.2" height="2.0" fill="#c8c200" opacity="0.8"/><rect x="347.5" y="249.7" width="1.2" height="2.2" fill="#c8c200" opacity="0.8"/><rect x="350.7" y="240.9" width="1.2" height="1.0" fill="#c8c200" opacity="0.8"/><rect x="350.7" y="249.7" width="1.2" height="1.4" fill="#c8c200" opacity="0.8"/><rect x="352.8" y="239.9" width="1.2" height="2.0" fill="#c8c200" opacity="0.8"/><rect x="352.8" y="249.7" width="1.2" height="1.0" fill="#c8c200" opacity="0.8"/><rect x="355.5" y="239.5" width="1.2" height="2.4" fill="#c8c200" opacity="0.8"/><rect x="355.5" y="249.7" width="1.2" height="2.0" fill="#c8c200" opacity="0.8"/><rect x="356.06" y="85.30" width="3.69" height="7.8" rx="1.6" fill="#f4ee10"/><rect x="358.75" y="241.90" width="6.39" height="7.8" rx="1.6" fill="#f4ee10"/><rect x="359.3" y="241.0" width="1.2" height="0.9" fill="#c8c200" opacity="0.8"/><rect x="359.3" y="249.7" width="1.2" height="1.0" fill="#c8c200" opacity="0.8"/><rect x="362.1" y="240.1" width="1.2" height="1.8" fill="#c8c200" opacity="0.8"/><rect x="362.1" y="249.7" width="1.2" height="1.6" fill="#c8c200" opacity="0.8"/><rect x="364.14" y="85.30" width="3.64" height="7.8" rx="1.6" fill="#f4ee10"/><rect x="366.78" y="241.90" width="6.39" height="7.8" rx="1.6" fill="#f4ee10"/><rect x="367.3" y="240.4" width="1.2" height="1.5" fill="#c8c200" opacity="0.8"/><rect x="367.3" y="249.7" width="1.2" height="1.8" fill="#c8c200" opacity="0.8"/><rect x="370.1" y="239.6" width="1.2" height="2.3" fill="#c8c200" opacity="0.8"/><rect x="370.1" y="249.7" width="1.2" height="2.0" fill="#c8c200" opacity="0.8"/><rect x="372.17" y="85.30" width="6.39" height="7.8" rx="1.6" fill="#f4ee10"/><rect x="372.7" y="83.0" width="1.2" height="2.3" fill="#c8c200" opacity="0.8"/><rect x="372.7" y="93.1" width="1.2" height="2.1" fill="#c8c200" opacity="0.8"/><rect x="375.6" y="84.5" width="1.2" height="0.8" fill="#c8c200" opacity="0.8"/><rect x="375.6" y="93.1" width="1.2" height="1.9" fill="#c8c200" opacity="0.8"/><rect x="377.55" y="241.90" width="6.39" height="7.8" rx="1.6" fill="#f4ee10"/><rect x="378.1" y="240.4" width="1.2" height="1.5" fill="#c8c200" opacity="0.8"/><rect x="378.1" y="249.7" width="1.2" height="2.2" fill="#c8c200" opacity="0.8"/><rect x="379.9" y="239.6" width="1.2" height="2.3" fill="#c8c200" opacity="0.8"/><rect x="379.9" y="249.7" width="1.2" height="1.5" fill="#c8c200" opacity="0.8"/><rect x="382.8" y="240.7" width="1.2" height="1.2" fill="#c8c200" opacity="0.8"/><rect x="382.8" y="249.7" width="1.2" height="1.3" fill="#c8c200" opacity="0.8"/><rect x="382.94" y="85.30" width="6.39" height="7.8" rx="1.6" fill="#f4ee10"/><rect x="383.4" y="84.0" width="1.2" height="1.3" fill="#c8c200" opacity="0.8"/><rect x="383.4" y="93.1" width="1.2" height="1.0" fill="#c8c200" opacity="0.8"/><rect x="385.8" y="82.9" width="1.2" height="2.4" fill="#c8c200" opacity="0.8"/><rect x="385.8" y="93.1" width="1.2" height="1.8" fill="#c8c200" opacity="0.8"/><rect x="388.32" y="241.90" width="3.69" height="7.8" rx="1.6" fill="#f4ee10"/><rect x="391.02" y="85.30" width="3.64" height="7.8" rx="1.6" fill="#f4ee10"/><rect x="393.66" y="241.90" width="6.39" height="7.8" rx="1.6" fill="#f4ee10"/><rect x="394.2" y="239.9" width="1.2" height="2.0" fill="#c8c200" opacity="0.8"/><rect x="394.2" y="249.7" width="1.2" height="2.1" fill="#c8c200" opacity="0.8"/><rect x="397.6" y="239.9" width="1.2" height="2.0" fill="#c8c200" opacity="0.8"/><rect x="397.6" y="249.7" width="1.2" height="1.2" fill="#c8c200" opacity="0.8"/><rect x="399.05" y="85.30" width="3.69" height="7.8" rx="1.6" fill="#f4ee10"/><rect x="401.74" y="241.90" width="6.39" height="7.8" rx="1.6" fill="#f4ee10"/><rect x="402.2" y="240.4" width="1.2" height="1.5" fill="#c8c200" opacity="0.8"/><rect x="402.2" y="249.7" width="1.2" height="0.8" fill="#c8c200" opacity="0.8"/><rect x="404.2" y="239.7" width="1.2" height="2.2" fill="#c8c200" opacity="0.8"/><rect x="404.2" y="249.7" width="1.2" height="2.3" fill="#c8c200" opacity="0.8"/><rect x="406.4" y="239.9" width="1.2" height="2.0" fill="#c8c200" opacity="0.8"/><rect x="406.4" y="249.7" width="1.2" height="2.0" fill="#c8c200" opacity="0.8"/><rect x="407.12" y="85.30" width="9.08" height="7.8" rx="1.6" fill="#f4ee10"/><rect x="407.6" y="83.2" width="1.2" height="2.1" fill="#c8c200" opacity="0.8"/><rect x="407.6" y="93.1" width="1.2" height="1.7" fill="#c8c200" opacity="0.8"/><rect x="409.3" y="83.2" width="1.2" height="2.1" fill="#c8c200" opacity="0.8"/><rect x="409.3" y="93.1" width="1.2" height="1.3" fill="#c8c200" opacity="0.8"/><rect x="412.1" y="83.9" width="1.2" height="1.4" fill="#c8c200" opacity="0.8"/><rect x="412.1" y="93.1" width="1.2" height="1.7" fill="#c8c200" opacity="0.8"/><rect x="415.20" y="241.90" width="3.69" height="7.8" rx="1.6" fill="#f4ee10"/><rect x="417.90" y="85.30" width="3.64" height="7.8" rx="1.6" fill="#f4ee10"/><rect x="420.54" y="241.90" width="3.69" height="7.8" rx="1.6" fill="#f4ee10"/><rect x="423.23" y="85.30" width="11.77" height="7.8" rx="1.6" fill="#f4ee10"/><rect x="423.7" y="84.2" width="1.2" height="1.1" fill="#c8c200" opacity="0.8"/><rect x="423.7" y="93.1" width="1.2" height="1.6" fill="#c8c200" opacity="0.8"/><rect x="426.5" y="83.6" width="1.2" height="1.7" fill="#c8c200" opacity="0.8"/><rect x="426.5" y="93.1" width="1.2" height="2.3" fill="#c8c200" opacity="0.8"/><rect x="428.8" y="83.0" width="1.2" height="2.3" fill="#c8c200" opacity="0.8"/><rect x="428.8" y="93.1" width="1.2" height="1.9" fill="#c8c200" opacity="0.8"/><rect x="432.3" y="84.4" width="1.2" height="0.9" fill="#c8c200" opacity="0.8"/><rect x="432.3" y="93.1" width="1.2" height="1.1" fill="#c8c200" opacity="0.8"/><rect x="434.00" y="241.90" width="3.69" height="7.8" rx="1.6" fill="#f4ee10"/><rect x="436.70" y="85.30" width="6.39" height="7.8" rx="1.6" fill="#f4ee10"/><rect x="437.2" y="83.0" width="1.2" height="2.3" fill="#c8c200" opacity="0.8"/><rect x="437.2" y="93.1" width="1.2" height="0.8" fill="#c8c200" opacity="0.8"/><rect x="439.2" y="83.4" width="1.2" height="1.9" fill="#c8c200" opacity="0.8"/><rect x="439.2" y="93.1" width="1.2" height="2.4" fill="#c8c200" opacity="0.8"/><rect x="441.1" y="83.8" width="1.2" height="1.5" fill="#c8c200" opacity="0.8"/><rect x="441.1" y="93.1" width="1.2" height="1.9" fill="#c8c200" opacity="0.8"/><rect x="442.08" y="241.90" width="3.69" height="7.8" rx="1.6" fill="#f4ee10"/><rect x="444.78" y="85.30" width="3.64" height="7.8" rx="1.6" fill="#f4ee10"/><rect x="447.42" y="241.90" width="3.69" height="7.8" rx="1.6" fill="#f4ee10"/><rect x="450.11" y="85.30" width="3.69" height="7.8" rx="1.6" fill="#f4ee10"/><rect x="452.81" y="241.90" width="3.69" height="7.8" rx="1.6" fill="#f4ee10"/><rect x="455.50" y="85.30" width="6.39" height="7.8" rx="1.6" fill="#f4ee10"/><rect x="456.0" y="83.3" width="1.2" height="2.0" fill="#c8c200" opacity="0.8"/><rect x="456.0" y="93.1" width="1.2" height="2.0" fill="#c8c200" opacity="0.8"/><rect x="458.0" y="84.1" width="1.2" height="1.2" fill="#c8c200" opacity="0.8"/><rect x="458.0" y="93.1" width="1.2" height="0.8" fill="#c8c200" opacity="0.8"/><rect x="460.9" y="84.2" width="1.2" height="1.1" fill="#c8c200" opacity="0.8"/><rect x="460.9" y="93.1" width="1.2" height="1.2" fill="#c8c200" opacity="0.8"/><rect x="460.88" y="241.90" width="3.69" height="7.8" rx="1.6" fill="#f4ee10"/><rect x="463.58" y="85.30" width="6.39" height="7.8" rx="1.6" fill="#f4ee10"/><rect x="464.1" y="83.5" width="1.2" height="1.8" fill="#c8c200" opacity="0.8"/><rect x="464.1" y="93.1" width="1.2" height="1.7" fill="#c8c200" opacity="0.8"/><rect x="466.9" y="83.5" width="1.2" height="1.8" fill="#c8c200" opacity="0.8"/><rect x="466.9" y="93.1" width="1.2" height="1.9" fill="#c8c200" opacity="0.8"/><rect x="468.96" y="241.90" width="3.69" height="7.8" rx="1.6" fill="#f4ee10"/><rect x="471.66" y="85.30" width="3.64" height="7.8" rx="1.6" fill="#f4ee10"/><path d="M474.3,241.6 L477.7,241.8 L481.2,242.2 L484.6,242.5 L488.0,242.5 L491.5,242.4 L491.5,250.6 L488.0,250.4 L484.6,250.2 L481.2,250.2 L477.7,249.7 L474.3,249.6Z" fill="#f4ee10"/><rect x="474.8" y="240.4" width="1.2" height="1.5" fill="#c8c200" opacity="0.8"/><rect x="474.8" y="249.7" width="1.2" height="1.9" fill="#c8c200" opacity="0.8"/><rect x="477.2" y="239.9" width="1.2" height="2.0" fill="#c8c200" opacity="0.8"/><rect x="477.2" y="249.7" width="1.2" height="1.0" fill="#c8c200" opacity="0.8"/><rect x="480.6" y="240.6" width="1.2" height="1.3" fill="#c8c200" opacity="0.8"/><rect x="480.6" y="249.7" width="1.2" height="2.1" fill="#c8c200" opacity="0.8"/><rect x="482.1" y="239.8" width="1.2" height="2.1" fill="#c8c200" opacity="0.8"/><rect x="482.1" y="249.7" width="1.2" height="1.2" fill="#c8c200" opacity="0.8"/><rect x="485.3" y="239.8" width="1.2" height="2.1" fill="#c8c200" opacity="0.8"/><rect x="485.3" y="249.7" width="1.2" height="1.9" fill="#c8c200" opacity="0.8"/><rect x="487.4" y="241.1" width="1.2" height="0.8" fill="#c8c200" opacity="0.8"/><rect x="487.4" y="249.7" width="1.2" height="1.1" fill="#c8c200" opacity="0.8"/><rect x="490.46" y="85.30" width="3.69" height="7.8" rx="1.6" fill="#f4ee10"/><rect x="493.15" y="241.90" width="6.39" height="7.8" rx="1.6" fill="#f4ee10"/><rect x="493.7" y="240.8" width="1.2" height="1.1" fill="#c8c200" opacity="0.8"/><rect x="493.7" y="249.7" width="1.2" height="1.9" fill="#c8c200" opacity="0.8"/><rect x="496.3" y="240.0" width="1.2" height="1.9" fill="#c8c200" opacity="0.8"/><rect x="496.3" y="249.7" width="1.2" height="1.1" fill="#c8c200" opacity="0.8"/><rect x="498.1" y="240.9" width="1.2" height="1.0" fill="#c8c200" opacity="0.8"/><rect x="498.1" y="249.7" width="1.2" height="2.4" fill="#c8c200" opacity="0.8"/><rect x="498.54" y="85.30" width="3.64" height="7.8" rx="1.6" fill="#f4ee10"/><rect x="501.18" y="241.90" width="3.69" height="7.8" rx="1.6" fill="#f4ee10"/><rect x="503.87" y="85.30" width="6.39" height="7.8" rx="1.6" fill="#f4ee10"/><rect x="504.4" y="83.5" width="1.2" height="1.8" fill="#c8c200" opacity="0.8"/><rect x="504.4" y="93.1" width="1.2" height="1.7" fill="#c8c200" opacity="0.8"/><rect x="506.3" y="84.4" width="1.2" height="0.9" fill="#c8c200" opacity="0.8"/><rect x="506.3" y="93.1" width="1.2" height="0.8" fill="#c8c200" opacity="0.8"/><rect x="509.26" y="241.90" width="6.39" height="7.8" rx="1.6" fill="#f4ee10"/><rect x="509.8" y="240.9" width="1.2" height="1.0" fill="#c8c200" opacity="0.8"/><rect x="509.8" y="249.7" width="1.2" height="2.3" fill="#c8c200" opacity="0.8"/><rect x="512.0" y="239.9" width="1.2" height="2.0" fill="#c8c200" opacity="0.8"/><rect x="512.0" y="249.7" width="1.2" height="1.0" fill="#c8c200" opacity="0.8"/><rect x="514.64" y="85.30" width="9.08" height="7.8" rx="1.6" fill="#f4ee10"/><rect x="515.1" y="84.1" width="1.2" height="1.2" fill="#c8c200" opacity="0.8"/><rect x="515.1" y="93.1" width="1.2" height="1.4" fill="#c8c200" opacity="0.8"/><rect x="517.7" y="84.3" width="1.2" height="1.0" fill="#c8c200" opacity="0.8"/><rect x="517.7" y="93.1" width="1.2" height="1.2" fill="#c8c200" opacity="0.8"/><rect x="520.8" y="84.0" width="1.2" height="1.3" fill="#c8c200" opacity="0.8"/><rect x="520.8" y="93.1" width="1.2" height="1.4" fill="#c8c200" opacity="0.8"/><rect x="522.72" y="241.90" width="3.69" height="7.8" rx="1.6" fill="#f4ee10"/><rect x="525.42" y="85.30" width="3.64" height="7.8" rx="1.6" fill="#f4ee10"/><rect x="528.06" y="241.90" width="3.69" height="7.8" rx="1.6" fill="#f4ee10"/><rect x="530.75" y="85.30" width="3.69" height="7.8" rx="1.6" fill="#f4ee10"/><rect x="533.45" y="241.90" width="3.69" height="7.8" rx="1.6" fill="#f4ee10"/><rect x="536.14" y="85.30" width="3.69" height="7.8" rx="1.6" fill="#f4ee10"/><rect x="538.83" y="241.90" width="6.39" height="7.8" rx="1.6" fill="#f4ee10"/><rect x="539.3" y="240.7" width="1.2" height="1.2" fill="#c8c200" opacity="0.8"/><rect x="539.3" y="249.7" width="1.2" height="1.1" fill="#c8c200" opacity="0.8"/><rect x="541.3" y="240.5" width="1.2" height="1.4" fill="#c8c200" opacity="0.8"/><rect x="541.3" y="249.7" width="1.2" height="1.4" fill="#c8c200" opacity="0.8"/><rect x="544.1" y="240.3" width="1.2" height="1.6" fill="#c8c200" opacity="0.8"/><rect x="544.1" y="249.7" width="1.2" height="2.2" fill="#c8c200" opacity="0.8"/><rect x="544.22" y="85.30" width="6.39" height="7.8" rx="1.6" fill="#f4ee10"/><rect x="544.7" y="83.4" width="1.2" height="1.9" fill="#c8c200" opacity="0.8"/><rect x="544.7" y="93.1" width="1.2" height="2.1" fill="#c8c200" opacity="0.8"/><rect x="546.7" y="84.5" width="1.2" height="0.8" fill="#c8c200" opacity="0.8"/><rect x="546.7" y="93.1" width="1.2" height="1.5" fill="#c8c200" opacity="0.8"/><rect x="548.4" y="83.8" width="1.2" height="1.5" fill="#c8c200" opacity="0.8"/><rect x="548.4" y="93.1" width="1.2" height="1.9" fill="#c8c200" opacity="0.8"/><rect x="549.60" y="241.90" width="3.69" height="7.8" rx="1.6" fill="#f4ee10"/><rect x="552.30" y="85.30" width="3.64" height="7.8" rx="1.6" fill="#f4ee10"/><rect x="554.94" y="241.90" width="6.39" height="7.8" rx="1.6" fill="#f4ee10"/><rect x="555.4" y="240.9" width="1.2" height="1.0" fill="#c8c200" opacity="0.8"/><rect x="555.4" y="249.7" width="1.2" height="1.6" fill="#c8c200" opacity="0.8"/><rect x="557.3" y="240.7" width="1.2" height="1.2" fill="#c8c200" opacity="0.8"/><rect x="557.3" y="249.7" width="1.2" height="1.5" fill="#c8c200" opacity="0.8"/><rect x="559.0" y="241.0" width="1.2" height="0.9" fill="#c8c200" opacity="0.8"/><rect x="559.0" y="249.7" width="1.2" height="1.4" fill="#c8c200" opacity="0.8"/><rect x="560.33" y="85.30" width="3.69" height="7.8" rx="1.6" fill="#f4ee10"/><rect x="563.02" y="241.90" width="6.39" height="7.8" rx="1.6" fill="#f4ee10"/><rect x="563.5" y="239.6" width="1.2" height="2.3" fill="#c8c200" opacity="0.8"/><rect x="563.5" y="249.7" width="1.2" height="1.7" fill="#c8c200" opacity="0.8"/><rect x="565.2" y="240.7" width="1.2" height="1.2" fill="#c8c200" opacity="0.8"/><rect x="565.2" y="249.7" width="1.2" height="2.0" fill="#c8c200" opacity="0.8"/><rect x="567.8" y="239.7" width="1.2" height="2.2" fill="#c8c200" opacity="0.8"/><rect x="567.8" y="249.7" width="1.2" height="2.3" fill="#c8c200" opacity="0.8"/><rect x="568.41" y="85.30" width="9.08" height="7.8" rx="1.6" fill="#f4ee10"/><rect x="568.9" y="84.3" width="1.2" height="1.0" fill="#c8c200" opacity="0.8"/><rect x="568.9" y="93.1" width="1.2" height="2.3" fill="#c8c200" opacity="0.8"/><rect x="571.5" y="84.1" width="1.2" height="1.2" fill="#c8c200" opacity="0.8"/><rect x="571.5" y="93.1" width="1.2" height="1.1" fill="#c8c200" opacity="0.8"/><rect x="574.7" y="84.2" width="1.2" height="1.1" fill="#c8c200" opacity="0.8"/><rect x="574.7" y="93.1" width="1.2" height="0.9" fill="#c8c200" opacity="0.8"/><rect x="576.48" y="241.90" width="3.69" height="7.8" rx="1.6" fill="#f4ee10"/><rect x="579.18" y="85.30" width="3.64" height="7.8" rx="1.6" fill="#f4ee10"/><rect x="581.82" y="241.90" width="3.69" height="7.8" rx="1.6" fill="#f4ee10"/><rect x="584.51" y="85.30" width="3.69" height="7.8" rx="1.6" fill="#f4ee10"/><rect x="587.21" y="241.90" width="6.39" height="7.8" rx="1.6" fill="#f4ee10"/><rect x="587.7" y="239.6" width="1.2" height="2.3" fill="#c8c200" opacity="0.8"/><rect x="587.7" y="249.7" width="1.2" height="1.5" fill="#c8c200" opacity="0.8"/><rect x="590.7" y="241.0" width="1.2" height="0.9" fill="#c8c200" opacity="0.8"/><rect x="590.7" y="249.7" width="1.2" height="1.5" fill="#c8c200" opacity="0.8"/><rect x="592.59" y="85.30" width="3.69" height="7.8" rx="1.6" fill="#f4ee10"/><rect x="595.28" y="241.90" width="3.69" height="7.8" rx="1.6" fill="#f4ee10"/><rect x="597.98" y="85.30" width="6.39" height="7.8" rx="1.6" fill="#f4ee10"/><rect x="598.5" y="84.2" width="1.2" height="1.1" fill="#c8c200" opacity="0.8"/><rect x="598.5" y="93.1" width="1.2" height="1.9" fill="#c8c200" opacity="0.8"/><rect x="600.7" y="84.3" width="1.2" height="1.0" fill="#c8c200" opacity="0.8"/><rect x="600.7" y="93.1" width="1.2" height="2.4" fill="#c8c200" opacity="0.8"/><rect x="603.2" y="84.2" width="1.2" height="1.1" fill="#c8c200" opacity="0.8"/><rect x="603.2" y="93.1" width="1.2" height="0.8" fill="#c8c200" opacity="0.8"/><rect x="603.36" y="241.90" width="3.69" height="7.8" rx="1.6" fill="#f4ee10"/><rect x="606.06" y="85.30" width="3.64" height="7.8" rx="1.6" fill="#f4ee10"/><rect x="608.70" y="241.90" width="3.69" height="7.8" rx="1.6" fill="#f4ee10"/><rect x="611.39" y="85.30" width="3.69" height="7.8" rx="1.6" fill="#f4ee10"/><rect x="614.09" y="241.90" width="11.77" height="7.8" rx="1.6" fill="#f4ee10"/><rect x="614.6" y="240.3" width="1.2" height="1.6" fill="#c8c200" opacity="0.8"/><rect x="614.6" y="249.7" width="1.2" height="0.8" fill="#c8c200" opacity="0.8"/><rect x="617.0" y="239.9" width="1.2" height="2.0" fill="#c8c200" opacity="0.8"/><rect x="617.0" y="249.7" width="1.2" height="1.7" fill="#c8c200" opacity="0.8"/><rect x="619.0" y="240.3" width="1.2" height="1.6" fill="#c8c200" opacity="0.8"/><rect x="619.0" y="249.7" width="1.2" height="1.8" fill="#c8c200" opacity="0.8"/><rect x="621.8" y="240.9" width="1.2" height="1.0" fill="#c8c200" opacity="0.8"/><rect x="621.8" y="249.7" width="1.2" height="2.1" fill="#c8c200" opacity="0.8"/><rect x="624.86" y="85.30" width="6.39" height="7.8" rx="1.6" fill="#f4ee10"/><rect x="625.4" y="83.3" width="1.2" height="2.0" fill="#c8c200" opacity="0.8"/><rect x="625.4" y="93.1" width="1.2" height="2.2" fill="#c8c200" opacity="0.8"/><rect x="627.6" y="83.1" width="1.2" height="2.2" fill="#c8c200" opacity="0.8"/><rect x="627.6" y="93.1" width="1.2" height="1.1" fill="#c8c200" opacity="0.8"/><rect x="629.5" y="83.5" width="1.2" height="1.8" fill="#c8c200" opacity="0.8"/><rect x="629.5" y="93.1" width="1.2" height="2.2" fill="#c8c200" opacity="0.8"/><rect x="630.24" y="241.90" width="3.69" height="7.8" rx="1.6" fill="#f4ee10"/><rect x="632.94" y="85.30" width="3.64" height="7.8" rx="1.6" fill="#f4ee10"/><rect x="635.58" y="241.90" width="9.08" height="7.8" rx="1.6" fill="#f4ee10"/><rect x="636.1" y="240.8" width="1.2" height="1.1" fill="#c8c200" opacity="0.8"/><rect x="636.1" y="249.7" width="1.2" height="0.9" fill="#c8c200" opacity="0.8"/><rect x="638.5" y="240.9" width="1.2" height="1.0" fill="#c8c200" opacity="0.8"/><rect x="638.5" y="249.7" width="1.2" height="1.1" fill="#c8c200" opacity="0.8"/><rect x="641.5" y="240.2" width="1.2" height="1.7" fill="#c8c200" opacity="0.8"/><rect x="641.5" y="249.7" width="1.2" height="2.3" fill="#c8c200" opacity="0.8"/><rect x="643.66" y="85.30" width="6.39" height="7.8" rx="1.6" fill="#f4ee10"/><rect x="644.2" y="83.4" width="1.2" height="1.9" fill="#c8c200" opacity="0.8"/><rect x="644.2" y="93.1" width="1.2" height="0.8" fill="#c8c200" opacity="0.8"/><rect x="647.6" y="84.1" width="1.2" height="1.2" fill="#c8c200" opacity="0.8"/><rect x="647.6" y="93.1" width="1.2" height="1.6" fill="#c8c200" opacity="0.8"/><rect x="649.04" y="241.90" width="3.69" height="7.8" rx="1.6" fill="#f4ee10"/><rect x="651.74" y="85.30" width="6.39" height="7.8" rx="1.6" fill="#f4ee10"/><rect x="652.2" y="83.0" width="1.2" height="2.3" fill="#c8c200" opacity="0.8"/><rect x="652.2" y="93.1" width="1.2" height="1.6" fill="#c8c200" opacity="0.8"/><rect x="655.7" y="83.5" width="1.2" height="1.8" fill="#c8c200" opacity="0.8"/><rect x="655.7" y="93.1" width="1.2" height="1.1" fill="#c8c200" opacity="0.8"/><rect x="657.12" y="241.90" width="3.69" height="7.8" rx="1.6" fill="#f4ee10"/><rect x="659.82" y="85.30" width="3.64" height="7.8" rx="1.6" fill="#f4ee10"/><path d="M662.5,242.2 L665.9,241.9 L669.3,241.3 L672.8,241.2 L676.2,241.0 L679.6,240.9 L679.6,248.9 L676.2,249.1 L672.8,248.9 L669.3,249.0 L665.9,249.0 L662.5,249.5Z" fill="#f4ee10"/><rect x="663.0" y="240.1" width="1.2" height="1.8" fill="#c8c200" opacity="0.8"/><rect x="663.0" y="249.7" width="1.2" height="1.2" fill="#c8c200" opacity="0.8"/><rect x="665.4" y="240.2" width="1.2" height="1.7" fill="#c8c200" opacity="0.8"/><rect x="665.4" y="249.7" width="1.2" height="1.9" fill="#c8c200" opacity="0.8"/><rect x="667.1" y="240.7" width="1.2" height="1.2" fill="#c8c200" opacity="0.8"/><rect x="667.1" y="249.7" width="1.2" height="1.0" fill="#c8c200" opacity="0.8"/><rect x="670.6" y="240.9" width="1.2" height="1.0" fill="#c8c200" opacity="0.8"/><rect x="670.6" y="249.7" width="1.2" height="1.0" fill="#c8c200" opacity="0.8"/><rect x="673.1" y="240.2" width="1.2" height="1.7" fill="#c8c200" opacity="0.8"/><rect x="673.1" y="249.7" width="1.2" height="2.2" fill="#c8c200" opacity="0.8"/><rect x="674.7" y="240.7" width="1.2" height="1.2" fill="#c8c200" opacity="0.8"/><rect x="674.7" y="249.7" width="1.2" height="1.1" fill="#c8c200" opacity="0.8"/><rect x="677.4" y="240.4" width="1.2" height="1.5" fill="#c8c200" opacity="0.8"/><rect x="677.4" y="249.7" width="1.2" height="1.5" fill="#c8c200" opacity="0.8"/><rect x="678.62" y="85.30" width="3.69" height="7.8" rx="1.6" fill="#f4ee10"/><rect x="681.31" y="241.90" width="6.39" height="7.8" rx="1.6" fill="#f4ee10"/><rect x="681.8" y="240.0" width="1.2" height="1.9" fill="#c8c200" opacity="0.8"/><rect x="681.8" y="249.7" width="1.2" height="2.2" fill="#c8c200" opacity="0.8"/><rect x="685.2" y="240.7" width="1.2" height="1.2" fill="#c8c200" opacity="0.8"/><rect x="685.2" y="249.7" width="1.2" height="2.3" fill="#c8c200" opacity="0.8"/><rect x="686.70" y="85.30" width="3.64" height="7.8" rx="1.6" fill="#f4ee10"/><path d="M689.3,241.0 L693.0,241.0 L696.6,241.1 L700.2,241.4 L703.8,241.5 L703.8,250.5 L700.2,250.3 L696.6,249.9 L693.0,249.5 L689.3,249.5Z" fill="#f4ee10"/><rect x="689.8" y="240.1" width="1.2" height="1.8" fill="#c8c200" opacity="0.8"/><rect x="689.8" y="249.7" width="1.2" height="1.6" fill="#c8c200" opacity="0.8"/><rect x="691.6" y="240.7" width="1.2" height="1.2" fill="#c8c200" opacity="0.8"/><rect x="691.6" y="249.7" width="1.2" height="1.9" fill="#c8c200" opacity="0.8"/><rect x="694.2" y="239.8" width="1.2" height="2.1" fill="#c8c200" opacity="0.8"/><rect x="694.2" y="249.7" width="1.2" height="2.2" fill="#c8c200" opacity="0.8"/><rect x="697.7" y="240.8" width="1.2" height="1.1" fill="#c8c200" opacity="0.8"/><rect x="697.7" y="249.7" width="1.2" height="0.9" fill="#c8c200" opacity="0.8"/><rect x="701.0" y="240.2" width="1.2" height="1.7" fill="#c8c200" opacity="0.8"/><rect x="701.0" y="249.7" width="1.2" height="1.1" fill="#c8c200" opacity="0.8"/><rect x="702.80" y="85.30" width="9.08" height="7.8" rx="1.6" fill="#f4ee10"/><rect x="703.3" y="84.1" width="1.2" height="1.2" fill="#c8c200" opacity="0.8"/><rect x="703.3" y="93.1" width="1.2" height="1.2" fill="#c8c200" opacity="0.8"/><rect x="705.5" y="83.7" width="1.2" height="1.6" fill="#c8c200" opacity="0.8"/><rect x="705.5" y="93.1" width="1.2" height="1.9" fill="#c8c200" opacity="0.8"/><rect x="707.2" y="83.3" width="1.2" height="2.0" fill="#c8c200" opacity="0.8"/><rect x="707.2" y="93.1" width="1.2" height="1.8" fill="#c8c200" opacity="0.8"/><rect x="709.6" y="83.4" width="1.2" height="1.9" fill="#c8c200" opacity="0.8"/><rect x="709.6" y="93.1" width="1.2" height="2.1" fill="#c8c200" opacity="0.8"/><rect x="710.88" y="241.90" width="3.69" height="7.8" rx="1.6" fill="#f4ee10"/><rect x="713.58" y="85.30" width="3.64" height="7.8" rx="1.6" fill="#f4ee10"/><rect x="716.22" y="241.90" width="3.69" height="7.8" rx="1.6" fill="#f4ee10"/><rect x="718.91" y="85.30" width="11.77" height="7.8" rx="1.6" fill="#f4ee10"/><rect x="719.4" y="83.7" width="1.2" height="1.6" fill="#c8c200" opacity="0.8"/><rect x="719.4" y="93.1" width="1.2" height="1.9" fill="#c8c200" opacity="0.8"/><rect x="722.3" y="83.5" width="1.2" height="1.8" fill="#c8c200" opacity="0.8"/><rect x="722.3" y="93.1" width="1.2" height="1.1" fill="#c8c200" opacity="0.8"/><rect x="725.7" y="83.2" width="1.2" height="2.1" fill="#c8c200" opacity="0.8"/><rect x="725.7" y="93.1" width="1.2" height="1.2" fill="#c8c200" opacity="0.8"/><rect x="728.1" y="83.0" width="1.2" height="2.3" fill="#c8c200" opacity="0.8"/><rect x="728.1" y="93.1" width="1.2" height="1.1" fill="#c8c200" opacity="0.8"/><rect x="729.69" y="241.90" width="3.69" height="7.8" rx="1.6" fill="#f4ee10"/><rect x="732.38" y="85.30" width="6.39" height="7.8" rx="1.6" fill="#f4ee10"/><rect x="732.9" y="83.0" width="1.2" height="2.3" fill="#c8c200" opacity="0.8"/><rect x="732.9" y="93.1" width="1.2" height="2.2" fill="#c8c200" opacity="0.8"/><rect x="734.8" y="83.3" width="1.2" height="2.0" fill="#c8c200" opacity="0.8"/><rect x="734.8" y="93.1" width="1.2" height="1.4" fill="#c8c200" opacity="0.8"/><rect x="737.7" y="83.3" width="1.2" height="2.0" fill="#c8c200" opacity="0.8"/><rect x="737.7" y="93.1" width="1.2" height="1.0" fill="#c8c200" opacity="0.8"/><rect x="737.76" y="241.90" width="3.69" height="7.8" rx="1.6" fill="#f4ee10"/><rect x="740.46" y="85.30" width="3.64" height="7.8" rx="1.6" fill="#f4ee10"/><rect x="743.10" y="241.90" width="6.39" height="7.8" rx="1.6" fill="#f4ee10"/><rect x="743.6" y="240.8" width="1.2" height="1.1" fill="#c8c200" opacity="0.8"/><rect x="743.6" y="249.7" width="1.2" height="1.2" fill="#c8c200" opacity="0.8"/><rect x="745.2" y="240.9" width="1.2" height="1.0" fill="#c8c200" opacity="0.8"/><rect x="745.2" y="249.7" width="1.2" height="1.4" fill="#c8c200" opacity="0.8"/><rect x="747.5" y="241.0" width="1.2" height="0.9" fill="#c8c200" opacity="0.8"/><rect x="747.5" y="249.7" width="1.2" height="1.7" fill="#c8c200" opacity="0.8"/><rect x="748.49" y="85.30" width="3.69" height="7.8" rx="1.6" fill="#f4ee10"/><rect x="751.18" y="241.90" width="6.39" height="7.8" rx="1.6" fill="#f4ee10"/><rect x="751.7" y="240.2" width="1.2" height="1.7" fill="#c8c200" opacity="0.8"/><rect x="751.7" y="249.7" width="1.2" height="1.4" fill="#c8c200" opacity="0.8"/><rect x="754.6" y="240.4" width="1.2" height="1.5" fill="#c8c200" opacity="0.8"/><rect x="754.6" y="249.7" width="1.2" height="1.1" fill="#c8c200" opacity="0.8"/><rect x="756.57" y="85.30" width="9.08" height="7.8" rx="1.6" fill="#f4ee10"/><rect x="757.1" y="84.5" width="1.2" height="0.8" fill="#c8c200" opacity="0.8"/><rect x="757.1" y="93.1" width="1.2" height="1.9" fill="#c8c200" opacity="0.8"/><rect x="758.9" y="83.9" width="1.2" height="1.4" fill="#c8c200" opacity="0.8"/><rect x="758.9" y="93.1" width="1.2" height="2.3" fill="#c8c200" opacity="0.8"/><rect x="761.9" y="83.2" width="1.2" height="2.1" fill="#c8c200" opacity="0.8"/><rect x="761.9" y="93.1" width="1.2" height="1.8" fill="#c8c200" opacity="0.8"/><rect x="764.64" y="241.90" width="3.69" height="7.8" rx="1.6" fill="#f4ee10"/><rect x="767.34" y="85.30" width="3.64" height="7.8" rx="1.6" fill="#f4ee10"/><rect x="769.98" y="241.90" width="9.08" height="7.8" rx="1.6" fill="#f4ee10"/><rect x="770.5" y="240.0" width="1.2" height="1.9" fill="#c8c200" opacity="0.8"/><rect x="770.5" y="249.7" width="1.2" height="2.3" fill="#c8c200" opacity="0.8"/><rect x="772.4" y="239.9" width="1.2" height="2.0" fill="#c8c200" opacity="0.8"/><rect x="772.4" y="249.7" width="1.2" height="1.3" fill="#c8c200" opacity="0.8"/><rect x="774.4" y="239.8" width="1.2" height="2.1" fill="#c8c200" opacity="0.8"/><rect x="774.4" y="249.7" width="1.2" height="1.8" fill="#c8c200" opacity="0.8"/><rect x="777.6" y="239.7" width="1.2" height="2.2" fill="#c8c200" opacity="0.8"/><rect x="777.6" y="249.7" width="1.2" height="1.7" fill="#c8c200" opacity="0.8"/><rect x="778.06" y="85.30" width="3.69" height="7.8" rx="1.6" fill="#f4ee10"/><rect x="780.75" y="241.90" width="3.69" height="7.8" rx="1.6" fill="#f4ee10"/><rect x="783.45" y="85.30" width="9.08" height="7.8" rx="1.6" fill="#f4ee10"/><rect x="783.9" y="84.5" width="1.2" height="0.8" fill="#c8c200" opacity="0.8"/><rect x="783.9" y="93.1" width="1.2" height="1.7" fill="#c8c200" opacity="0.8"/><rect x="786.9" y="84.1" width="1.2" height="1.2" fill="#c8c200" opacity="0.8"/><rect x="786.9" y="93.1" width="1.2" height="0.9" fill="#c8c200" opacity="0.8"/><rect x="788.4" y="84.2" width="1.2" height="1.1" fill="#c8c200" opacity="0.8"/><rect x="788.4" y="93.1" width="1.2" height="1.9" fill="#c8c200" opacity="0.8"/><rect x="789.9" y="84.1" width="1.2" height="1.2" fill="#c8c200" opacity="0.8"/><rect x="789.9" y="93.1" width="1.2" height="1.2" fill="#c8c200" opacity="0.8"/><rect x="791.52" y="241.90" width="3.69" height="7.8" rx="1.6" fill="#f4ee10"/><path d="M794.2,85.1 L797.3,84.5 L800.3,84.2 L803.3,84.4 L806.4,84.3 L809.4,84.2 L812.4,84.5 L815.5,84.6 L818.5,84.9 L821.6,85.3 L824.6,85.7 L827.6,85.9 L830.7,86.0 L833.7,86.2 L836.7,85.9 L839.8,85.8 L842.8,85.8 L845.8,85.3 L848.9,85.0 L851.9,84.9 L855.0,84.5 L858.0,84.5 L861.0,84.1 L864.1,84.2 L867.1,84.5 L870.1,84.6 L873.2,84.6 L876.2,85.0 L879.3,85.2 L882.3,85.7 L885.3,85.7 L888.4,85.8 L891.4,86.2 L894.4,85.9 L897.5,85.9 L900.5,85.5 L903.6,85.2 L906.6,84.9 L909.6,84.8 L912.7,84.6 L915.7,84.2 L918.7,84.2 L921.8,84.4 L924.8,84.5 L927.8,84.5 L930.9,85.0 L933.9,85.1 L937.0,85.5 L940.0,85.8 L943.0,85.9 L946.1,86.0 L949.1,85.9 L952.1,86.1 L955.2,85.6 L958.2,85.6 L961.3,85.3 L964.3,84.8 L967.3,84.5 L970.4,84.3 L973.4,84.1 L976.4,84.3 L979.5,84.3 L982.5,84.3 L985.6,84.7 L988.6,85.1 L991.6,85.3 L994.7,85.4 L997.7,85.6 L1000.7,85.8 L1003.8,85.8 L1006.8,85.9 L1009.9,85.9 L1012.9,85.7 L1015.9,85.3 L1019.0,85.2 L1022.0,84.7 L1022.0,92.4 L1019.0,92.4 L1015.9,92.6 L1012.9,92.5 L1009.9,92.8 L1006.8,93.0 L1003.8,93.2 L1000.7,93.2 L997.7,93.4 L994.7,94.0 L991.6,93.9 L988.6,94.0 L985.6,94.1 L982.5,94.2 L979.5,94.2 L976.4,93.9 L973.4,93.7 L970.4,93.8 L967.3,93.4 L964.3,93.0 L961.3,92.7 L958.2,92.5 L955.2,92.4 L952.1,92.5 L949.1,92.3 L946.1,92.3 L943.0,92.7 L940.0,92.5 L937.0,92.8 L933.9,93.0 L930.9,93.3 L927.8,93.7 L924.8,93.9 L921.8,93.8 L918.7,94.1 L915.7,94.2 L912.7,94.2 L909.6,94.0 L906.6,94.1 L903.6,94.0 L900.5,93.4 L897.5,93.2 L894.4,93.1 L891.4,92.8 L888.4,92.5 L885.3,92.6 L882.3,92.6 L879.3,92.6 L876.2,92.4 L873.2,92.5 L870.1,92.8 L867.1,93.0 L864.1,93.2 L861.0,93.4 L858.0,93.6 L855.0,93.9 L851.9,93.9 L848.9,94.1 L845.8,94.2 L842.8,94.0 L839.8,93.9 L836.7,94.0 L833.7,93.8 L830.7,93.6 L827.6,93.2 L824.6,93.0 L821.6,92.8 L818.5,92.5 L815.5,92.4 L812.4,92.4 L809.4,92.6 L806.4,92.6 L803.3,92.5 L800.3,92.8 L797.3,92.8 L794.2,93.1Z" fill="#f4ee10"/><rect x="794.7" y="83.8" width="1.2" height="1.5" fill="#c8c200" opacity="0.8"/><rect x="794.7" y="93.1" width="1.2" height="1.9" fill="#c8c200" opacity="0.8"/><rect x="797.7" y="84.3" width="1.2" height="1.0" fill="#c8c200" opacity="0.8"/><rect x="797.7" y="93.1" width="1.2" height="1.1" fill="#c8c200" opacity="0.8"/><rect x="801.1" y="84.3" width="1.2" height="1.0" fill="#c8c200" opacity="0.8"/><rect x="801.1" y="93.1" width="1.2" height="2.1" fill="#c8c200" opacity="0.8"/><rect x="803.3" y="84.1" width="1.2" height="1.2" fill="#c8c200" opacity="0.8"/><rect x="803.3" y="93.1" width="1.2" height="1.2" fill="#c8c200" opacity="0.8"/><rect x="805.7" y="82.9" width="1.2" height="2.4" fill="#c8c200" opacity="0.8"/><rect x="805.7" y="93.1" width="1.2" height="1.0" fill="#c8c200" opacity="0.8"/><rect x="808.9" y="84.0" width="1.2" height="1.3" fill="#c8c200" opacity="0.8"/><rect x="808.9" y="93.1" width="1.2" height="1.1" fill="#c8c200" opacity="0.8"/><rect x="811.9" y="84.0" width="1.2" height="1.3" fill="#c8c200" opacity="0.8"/><rect x="811.9" y="93.1" width="1.2" height="1.1" fill="#c8c200" opacity="0.8"/><rect x="814.3" y="83.2" width="1.2" height="2.1" fill="#c8c200" opacity="0.8"/><rect x="814.3" y="93.1" width="1.2" height="2.2" fill="#c8c200" opacity="0.8"/><rect x="816.9" y="84.5" width="1.2" height="0.8" fill="#c8c200" opacity="0.8"/><rect x="816.9" y="93.1" width="1.2" height="2.0" fill="#c8c200" opacity="0.8"/><rect x="819.6" y="83.1" width="1.2" height="2.2" fill="#c8c200" opacity="0.8"/><rect x="819.6" y="93.1" width="1.2" height="2.3" fill="#c8c200" opacity="0.8"/><rect x="821.8" y="83.1" width="1.2" height="2.2" fill="#c8c200" opacity="0.8"/><rect x="821.8" y="93.1" width="1.2" height="2.1" fill="#c8c200" opacity="0.8"/><rect x="823.8" y="83.9" width="1.2" height="1.4" fill="#c8c200" opacity="0.8"/><rect x="823.8" y="93.1" width="1.2" height="1.4" fill="#c8c200" opacity="0.8"/><rect x="826.0" y="83.9" width="1.2" height="1.4" fill="#c8c200" opacity="0.8"/><rect x="826.0" y="93.1" width="1.2" height="1.0" fill="#c8c200" opacity="0.8"/><rect x="828.0" y="83.0" width="1.2" height="2.3" fill="#c8c200" opacity="0.8"/><rect x="828.0" y="93.1" width="1.2" height="1.5" fill="#c8c200" opacity="0.8"/><rect x="830.7" y="83.1" width="1.2" height="2.2" fill="#c8c200" opacity="0.8"/><rect x="830.7" y="93.1" width="1.2" height="2.0" fill="#c8c200" opacity="0.8"/><rect x="832.7" y="83.0" width="1.2" height="2.3" fill="#c8c200" opacity="0.8"/><rect x="832.7" y="93.1" width="1.2" height="2.1" fill="#c8c200" opacity="0.8"/><rect x="836.2" y="83.3" width="1.2" height="2.0" fill="#c8c200" opacity="0.8"/><rect x="836.2" y="93.1" width="1.2" height="2.0" fill="#c8c200" opacity="0.8"/><rect x="839.3" y="84.1" width="1.2" height="1.2" fill="#c8c200" opacity="0.8"/><rect x="839.3" y="93.1" width="1.2" height="1.8" fill="#c8c200" opacity="0.8"/><rect x="841.6" y="83.2" width="1.2" height="2.1" fill="#c8c200" opacity="0.8"/><rect x="841.6" y="93.1" width="1.2" height="1.0" fill="#c8c200" opacity="0.8"/><rect x="844.2" y="84.0" width="1.2" height="1.3" fill="#c8c200" opacity="0.8"/><rect x="844.2" y="93.1" width="1.2" height="2.1" fill="#c8c200" opacity="0.8"/><rect x="846.4" y="83.1" width="1.2" height="2.2" fill="#c8c200" opacity="0.8"/><rect x="846.4" y="93.1" width="1.2" height="2.2" fill="#c8c200" opacity="0.8"/><rect x="849.6" y="84.3" width="1.2" height="1.0" fill="#c8c200" opacity="0.8"/><rect x="849.6" y="93.1" width="1.2" height="2.3" fill="#c8c200" opacity="0.8"/><rect x="852.6" y="83.4" width="1.2" height="1.9" fill="#c8c200" opacity="0.8"/><rect x="852.6" y="93.1" width="1.2" height="1.8" fill="#c8c200" opacity="0.8"/><rect x="854.2" y="83.1" width="1.2" height="2.2" fill="#c8c200" opacity="0.8"/><rect x="854.2" y="93.1" width="1.2" height="1.7" fill="#c8c200" opacity="0.8"/><rect x="856.6" y="84.0" width="1.2" height="1.3" fill="#c8c200" opacity="0.8"/><rect x="856.6" y="93.1" width="1.2" height="2.1" fill="#c8c200" opacity="0.8"/><rect x="859.7" y="83.1" width="1.2" height="2.2" fill="#c8c200" opacity="0.8"/><rect x="859.7" y="93.1" width="1.2" height="1.1" fill="#c8c200" opacity="0.8"/><rect x="861.9" y="84.1" width="1.2" height="1.2" fill="#c8c200" opacity="0.8"/><rect x="861.9" y="93.1" width="1.2" height="1.0" fill="#c8c200" opacity="0.8"/><rect x="864.0" y="84.5" width="1.2" height="0.8" fill="#c8c200" opacity="0.8"/><rect x="864.0" y="93.1" width="1.2" height="2.1" fill="#c8c200" opacity="0.8"/><rect x="866.0" y="84.4" width="1.2" height="0.9" fill="#c8c200" opacity="0.8"/><rect x="866.0" y="93.1" width="1.2" height="0.9" fill="#c8c200" opacity="0.8"/><rect x="868.9" y="84.2" width="1.2" height="1.1" fill="#c8c200" opacity="0.8"/><rect x="868.9" y="93.1" width="1.2" height="1.5" fill="#c8c200" opacity="0.8"/><rect x="871.3" y="83.2" width="1.2" height="2.1" fill="#c8c200" opacity="0.8"/><rect x="871.3" y="93.1" width="1.2" height="2.3" fill="#c8c200" opacity="0.8"/><rect x="873.4" y="83.5" width="1.2" height="1.8" fill="#c8c200" opacity="0.8"/><rect x="873.4" y="93.1" width="1.2" height="2.2" fill="#c8c200" opacity="0.8"/><rect x="875.8" y="83.1" width="1.2" height="2.2" fill="#c8c200" opacity="0.8"/><rect x="875.8" y="93.1" width="1.2" height="2.0" fill="#c8c200" opacity="0.8"/><rect x="877.9" y="83.1" width="1.2" height="2.2" fill="#c8c200" opacity="0.8"/><rect x="877.9" y="93.1" width="1.2" height="1.7" fill="#c8c200" opacity="0.8"/><rect x="879.6" y="83.6" width="1.2" height="1.7" fill="#c8c200" opacity="0.8"/><rect x="879.6" y="93.1" width="1.2" height="2.1" fill="#c8c200" opacity="0.8"/><rect x="882.2" y="83.7" width="1.2" height="1.6" fill="#c8c200" opacity="0.8"/><rect x="882.2" y="93.1" width="1.2" height="1.5" fill="#c8c200" opacity="0.8"/><rect x="885.4" y="83.4" width="1.2" height="1.9" fill="#c8c200" opacity="0.8"/><rect x="885.4" y="93.1" width="1.2" height="1.1" fill="#c8c200" opacity="0.8"/><rect x="887.7" y="83.9" width="1.2" height="1.4" fill="#c8c200" opacity="0.8"/><rect x="887.7" y="93.1" width="1.2" height="2.3" fill="#c8c200" opacity="0.8"/><rect x="890.6" y="84.3" width="1.2" height="1.0" fill="#c8c200" opacity="0.8"/><rect x="890.6" y="93.1" width="1.2" height="2.3" fill="#c8c200" opacity="0.8"/><rect x="892.1" y="83.6" width="1.2" height="1.7" fill="#c8c200" opacity="0.8"/><rect x="892.1" y="93.1" width="1.2" height="1.5" fill="#c8c200" opacity="0.8"/><rect x="895.1" y="83.8" width="1.2" height="1.5" fill="#c8c200" opacity="0.8"/><rect x="895.1" y="93.1" width="1.2" height="0.9" fill="#c8c200" opacity="0.8"/><rect x="897.6" y="83.2" width="1.2" height="2.1" fill="#c8c200" opacity="0.8"/><rect x="897.6" y="93.1" width="1.2" height="2.1" fill="#c8c200" opacity="0.8"/><rect x="899.8" y="84.1" width="1.2" height="1.2" fill="#c8c200" opacity="0.8"/><rect x="899.8" y="93.1" width="1.2" height="2.0" fill="#c8c200" opacity="0.8"/><rect x="902.9" y="84.1" width="1.2" height="1.2" fill="#c8c200" opacity="0.8"/><rect x="902.9" y="93.1" width="1.2" height="2.2" fill="#c8c200" opacity="0.8"/><rect x="906.4" y="83.8" width="1.2" height="1.5" fill="#c8c200" opacity="0.8"/><rect x="906.4" y="93.1" width="1.2" height="1.4" fill="#c8c200" opacity="0.8"/><rect x="909.3" y="83.0" width="1.2" height="2.3" fill="#c8c200" opacity="0.8"/><rect x="909.3" y="93.1" width="1.2" height="1.1" fill="#c8c200" opacity="0.8"/><rect x="911.4" y="84.0" width="1.2" height="1.3" fill="#c8c200" opacity="0.8"/><rect x="911.4" y="93.1" width="1.2" height="2.0" fill="#c8c200" opacity="0.8"/><rect x="913.3" y="83.6" width="1.2" height="1.7" fill="#c8c200" opacity="0.8"/><rect x="913.3" y="93.1" width="1.2" height="1.6" fill="#c8c200" opacity="0.8"/><rect x="916.2" y="84.3" width="1.2" height="1.0" fill="#c8c200" opacity="0.8"/><rect x="916.2" y="93.1" width="1.2" height="2.3" fill="#c8c200" opacity="0.8"/><rect x="919.7" y="83.6" width="1.2" height="1.7" fill="#c8c200" opacity="0.8"/><rect x="919.7" y="93.1" width="1.2" height="2.1" fill="#c8c200" opacity="0.8"/><rect x="921.5" y="83.0" width="1.2" height="2.3" fill="#c8c200" opacity="0.8"/><rect x="921.5" y="93.1" width="1.2" height="1.7" fill="#c8c200" opacity="0.8"/><rect x="924.5" y="83.1" width="1.2" height="2.2" fill="#c8c200" opacity="0.8"/><rect x="924.5" y="93.1" width="1.2" height="1.4" fill="#c8c200" opacity="0.8"/><rect x="927.9" y="84.2" width="1.2" height="1.1" fill="#c8c200" opacity="0.8"/><rect x="927.9" y="93.1" width="1.2" height="0.8" fill="#c8c200" opacity="0.8"/><rect x="930.4" y="83.1" width="1.2" height="2.2" fill="#c8c200" opacity="0.8"/><rect x="930.4" y="93.1" width="1.2" height="2.2" fill="#c8c200" opacity="0.8"/><rect x="933.8" y="83.7" width="1.2" height="1.6" fill="#c8c200" opacity="0.8"/><rect x="933.8" y="93.1" width="1.2" height="2.3" fill="#c8c200" opacity="0.8"/><rect x="936.4" y="84.3" width="1.2" height="1.0" fill="#c8c200" opacity="0.8"/><rect x="936.4" y="93.1" width="1.2" height="1.8" fill="#c8c200" opacity="0.8"/><rect x="939.5" y="83.8" width="1.2" height="1.5" fill="#c8c200" opacity="0.8"/><rect x="939.5" y="93.1" width="1.2" height="1.8" fill="#c8c200" opacity="0.8"/><rect x="941.5" y="84.1" width="1.2" height="1.2" fill="#c8c200" opacity="0.8"/><rect x="941.5" y="93.1" width="1.2" height="1.5" fill="#c8c200" opacity="0.8"/><rect x="944.1" y="83.8" width="1.2" height="1.5" fill="#c8c200" opacity="0.8"/><rect x="944.1" y="93.1" width="1.2" height="0.9" fill="#c8c200" opacity="0.8"/><rect x="945.6" y="84.0" width="1.2" height="1.3" fill="#c8c200" opacity="0.8"/><rect x="945.6" y="93.1" width="1.2" height="1.9" fill="#c8c200" opacity="0.8"/><rect x="948.6" y="84.1" width="1.2" height="1.2" fill="#c8c200" opacity="0.8"/><rect x="948.6" y="93.1" width="1.2" height="1.2" fill="#c8c200" opacity="0.8"/><rect x="951.1" y="84.2" width="1.2" height="1.1" fill="#c8c200" opacity="0.8"/><rect x="951.1" y="93.1" width="1.2" height="1.8" fill="#c8c200" opacity="0.8"/><rect x="954.4" y="84.2" width="1.2" height="1.1" fill="#c8c200" opacity="0.8"/><rect x="954.4" y="93.1" width="1.2" height="1.7" fill="#c8c200" opacity="0.8"/><rect x="957.4" y="83.3" width="1.2" height="2.0" fill="#c8c200" opacity="0.8"/><rect x="957.4" y="93.1" width="1.2" height="1.9" fill="#c8c200" opacity="0.8"/><rect x="960.3" y="84.1" width="1.2" height="1.2" fill="#c8c200" opacity="0.8"/><rect x="960.3" y="93.1" width="1.2" height="2.1" fill="#c8c200" opacity="0.8"/><rect x="963.6" y="84.4" width="1.2" height="0.9" fill="#c8c200" opacity="0.8"/><rect x="963.6" y="93.1" width="1.2" height="2.3" fill="#c8c200" opacity="0.8"/><rect x="966.0" y="84.4" width="1.2" height="0.9" fill="#c8c200" opacity="0.8"/><rect x="966.0" y="93.1" width="1.2" height="0.9" fill="#c8c200" opacity="0.8"/><rect x="969.1" y="83.4" width="1.2" height="1.9" fill="#c8c200" opacity="0.8"/><rect x="969.1" y="93.1" width="1.2" height="1.0" fill="#c8c200" opacity="0.8"/><rect x="971.5" y="83.5" width="1.2" height="1.8" fill="#c8c200" opacity="0.8"/><rect x="971.5" y="93.1" width="1.2" height="2.4" fill="#c8c200" opacity="0.8"/><rect x="973.7" y="83.3" width="1.2" height="2.0" fill="#c8c200" opacity="0.8"/><rect x="973.7" y="93.1" width="1.2" height="1.2" fill="#c8c200" opacity="0.8"/><rect x="975.6" y="84.2" width="1.2" height="1.1" fill="#c8c200" opacity="0.8"/><rect x="975.6" y="93.1" width="1.2" height="1.5" fill="#c8c200" opacity="0.8"/><rect x="978.3" y="84.0" width="1.2" height="1.3" fill="#c8c200" opacity="0.8"/><rect x="978.3" y="93.1" width="1.2" height="1.1" fill="#c8c200" opacity="0.8"/><rect x="980.3" y="84.4" width="1.2" height="0.9" fill="#c8c200" opacity="0.8"/><rect x="980.3" y="93.1" width="1.2" height="1.1" fill="#c8c200" opacity="0.8"/><rect x="982.4" y="83.7" width="1.2" height="1.6" fill="#c8c200" opacity="0.8"/><rect x="982.4" y="93.1" width="1.2" height="1.1" fill="#c8c200" opacity="0.8"/><rect x="984.9" y="83.8" width="1.2" height="1.5" fill="#c8c200" opacity="0.8"/><rect x="984.9" y="93.1" width="1.2" height="2.4" fill="#c8c200" opacity="0.8"/><rect x="987.3" y="83.0" width="1.2" height="2.3" fill="#c8c200" opacity="0.8"/><rect x="987.3" y="93.1" width="1.2" height="1.6" fill="#c8c200" opacity="0.8"/><rect x="989.2" y="83.6" width="1.2" height="1.7" fill="#c8c200" opacity="0.8"/><rect x="989.2" y="93.1" width="1.2" height="1.0" fill="#c8c200" opacity="0.8"/><rect x="991.1" y="84.4" width="1.2" height="0.9" fill="#c8c200" opacity="0.8"/><rect x="991.1" y="93.1" width="1.2" height="1.9" fill="#c8c200" opacity="0.8"/><rect x="994.5" y="83.9" width="1.2" height="1.4" fill="#c8c200" opacity="0.8"/><rect x="994.5" y="93.1" width="1.2" height="1.4" fill="#c8c200" opacity="0.8"/><rect x="996.9" y="83.9" width="1.2" height="1.4" fill="#c8c200" opacity="0.8"/><rect x="996.9" y="93.1" width="1.2" height="1.9" fill="#c8c200" opacity="0.8"/><rect x="999.1" y="84.3" width="1.2" height="1.0" fill="#c8c200" opacity="0.8"/><rect x="999.1" y="93.1" width="1.2" height="2.2" fill="#c8c200" opacity="0.8"/><rect x="1001.8" y="84.5" width="1.2" height="0.8" fill="#c8c200" opacity="0.8"/><rect x="1001.8" y="93.1" width="1.2" height="2.2" fill="#c8c200" opacity="0.8"/><rect x="1004.7" y="83.9" width="1.2" height="1.4" fill="#c8c200" opacity="0.8"/><rect x="1004.7" y="93.1" width="1.2" height="1.8" fill="#c8c200" opacity="0.8"/><rect x="1008.1" y="83.9" width="1.2" height="1.4" fill="#c8c200" opacity="0.8"/><rect x="1008.1" y="93.1" width="1.2" height="1.5" fill="#c8c200" opacity="0.8"/><rect x="1010.2" y="83.6" width="1.2" height="1.7" fill="#c8c200" opacity="0.8"/><rect x="1010.2" y="93.1" width="1.2" height="1.9" fill="#c8c200" opacity="0.8"/><rect x="1013.2" y="83.0" width="1.2" height="2.3" fill="#c8c200" opacity="0.8"/><rect x="1013.2" y="93.1" width="1.2" height="1.0" fill="#c8c200" opacity="0.8"/><rect x="1015.4" y="83.1" width="1.2" height="2.2" fill="#c8c200" opacity="0.8"/><rect x="1015.4" y="93.1" width="1.2" height="2.1" fill="#c8c200" opacity="0.8"/><rect x="1018.1" y="83.4" width="1.2" height="1.9" fill="#c8c200" opacity="0.8"/><rect x="1018.1" y="93.1" width="1.2" height="1.3" fill="#c8c200" opacity="0.8"/></g><path d="M2,243.5 L15,243.5 L20.8,249.5 L15,255.5 L2,255.5 Z" fill="#000" stroke="#b8b038" stroke-width="0.9"/><text x="3.6" y="253.6" font-size="10" fill="#ece850" font-family='"Liberation Sans"' stroke="#ece850" stroke-width="0.25">C1</text><path d="M1021.5,158 L1002,158 L992.5,167.5 L1002,177 L1021.5,177 Z" fill="#000" stroke="#20c8d8" stroke-width="1.3"/><text x="1004" y="171.5" font-size="10" fill="#20c8d8" font-family='"Liberation Sans"' stroke="#20c8d8" stroke-width="0.25">TA</text><text x="8" y="52.6" font-size="10" fill="#dede3c" font-family='"Liberation Sans"' stroke="#dede3c" stroke-width="0.25">4.35 V</text><text x="8" y="69.6" font-size="10" fill="#dede3c" font-family='"Liberation Sans"' stroke="#dede3c" stroke-width="0.25">3.85 V</text><rect x="5.5" y="83.5" width="30.5" height="11" fill="#000" opacity="0.72"/><text x="8" y="93.6" font-size="10" fill="#dede3c" font-family='"Liberation Sans"' stroke="#dede3c" stroke-width="0.25">3.35 V</text><text x="8" y="117.6" font-size="10" fill="#dede3c" font-family='"Liberation Sans"' stroke="#dede3c" stroke-width="0.25">2.85 V</text><text x="8" y="141.6" font-size="10" fill="#dede3c" font-family='"Liberation Sans"' stroke="#dede3c" stroke-width="0.25">2.35 V</text><text x="8" y="165.6" font-size="10" fill="#dede3c" font-family='"Liberation Sans"' stroke="#dede3c" stroke-width="0.25">1.85 V</text><text x="8" y="189.6" font-size="10" fill="#dede3c" font-family='"Liberation Sans"' stroke="#dede3c" stroke-width="0.25">1.35 V</text><text x="8" y="213.6" font-size="10" fill="#dede3c" font-family='"Liberation Sans"' stroke="#dede3c" stroke-width="0.25">850 mV</text><text x="8" y="237.6" font-size="10" fill="#dede3c" font-family='"Liberation Sans"' stroke="#dede3c" stroke-width="0.25">350 mV</text><text x="8" y="277.6" font-size="10" fill="#dede3c" font-family='"Liberation Sans"' stroke="#dede3c" stroke-width="0.25">-650 mV</text><text x="113.9" y="273.2" font-size="10" fill="#dede3c" text-anchor="middle" font-family='"Liberation Sans"' stroke="#dede3c" stroke-width="0.25">-4 ms</text><text x="217.2" y="273.2" font-size="10" fill="#dede3c" text-anchor="middle" font-family='"Liberation Sans"' stroke="#dede3c" stroke-width="0.25">0 s</text><text x="318.5" y="273.2" font-size="10" fill="#dede3c" text-anchor="middle" font-family='"Liberation Sans"' stroke="#dede3c" stroke-width="0.25">4 ms</text><text x="420.8" y="273.2" font-size="10" fill="#dede3c" text-anchor="middle" font-family='"Liberation Sans"' stroke="#dede3c" stroke-width="0.25">8 ms</text><text x="523.1" y="273.2" font-size="10" fill="#dede3c" text-anchor="middle" font-family='"Liberation Sans"' stroke="#dede3c" stroke-width="0.25">12 ms</text><text x="625.4" y="273.2" font-size="10" fill="#dede3c" text-anchor="middle" font-family='"Liberation Sans"' stroke="#dede3c" stroke-width="0.25">16 ms</text><text x="727.7" y="273.2" font-size="10" fill="#dede3c" text-anchor="middle" font-family='"Liberation Sans"' stroke="#dede3c" stroke-width="0.25">20 ms</text><text x="830" y="273.2" font-size="10" fill="#dede3c" text-anchor="middle" font-family='"Liberation Sans"' stroke="#dede3c" stroke-width="0.25">24 ms</text><text x="932.3" y="273.2" font-size="10" fill="#dede3c" text-anchor="middle" font-family='"Liberation Sans"' stroke="#dede3c" stroke-width="0.25">28 ms</text><text x="1021" y="273.2" font-size="10" fill="#dede3c" text-anchor="end" font-family='"Liberation Sans"' stroke="#dede3c" stroke-width="0.25">31.5 ms</text><rect x="0" y="279.2" width="1024" height="1.6" fill="#bcc8d0"/><rect x="0" y="280.8" width="1024" height="2.6" fill="#6c7c88"/><rect x="0" y="283.4" width="1024" height="1.5" fill="#a8b4be"/><rect x="0" y="401.2" width="1024" height="1.6" fill="#bcc8d0"/><rect x="0" y="402.8" width="1024" height="2.6" fill="#6c7c88"/><rect x="0" y="405.4" width="1024" height="1.5" fill="#a8b4be"/><rect x="1022.5" y="42" width="1.5" height="480" fill="#c4ccd8"/><rect x="0" y="42" width="1" height="480" fill="#c4ccd8"/><line x1="1" y1="295.5" x2="1022" y2="295.5" stroke="#1e1e1e" stroke-width="1" stroke-dasharray="2.4,1.9"/><line x1="1" y1="307.5" x2="1022" y2="307.5" stroke="#1e1e1e" stroke-width="1" stroke-dasharray="2.4,1.9"/><line x1="1" y1="319.5" x2="1022" y2="319.5" stroke="#1e1e1e" stroke-width="1" stroke-dasharray="2.4,1.9"/><line x1="1" y1="330.5" x2="1022" y2="330.5" stroke="#1e1e1e" stroke-width="1" stroke-dasharray="2.4,1.9"/><line x1="1" y1="342.5" x2="1022" y2="342.5" stroke="#1e1e1e" stroke-width="1" stroke-dasharray="2.4,1.9"/><line x1="1" y1="354.5" x2="1022" y2="354.5" stroke="#1e1e1e" stroke-width="1" stroke-dasharray="2.4,1.9"/><line x1="1" y1="365.5" x2="1022" y2="365.5" stroke="#1e1e1e" stroke-width="1" stroke-dasharray="2.4,1.9"/><line x1="1" y1="377.5" x2="1022" y2="377.5" stroke="#1e1e1e" stroke-width="1" stroke-dasharray="2.4,1.9"/><line x1="1" y1="389.5" x2="1022" y2="389.5" stroke="#1e1e1e" stroke-width="1" stroke-dasharray="2.4,1.9"/><line x1="12.5" y1="285" x2="12.5" y2="401" stroke="#1e1e1e" stroke-width="1" stroke-dasharray="2.4,1.9"/><line x1="114.5" y1="285" x2="114.5" y2="401" stroke="#1e1e1e" stroke-width="1" stroke-dasharray="2.4,1.9"/><line x1="216.5" y1="285" x2="216.5" y2="401" stroke="#1e1e1e" stroke-width="1" stroke-dasharray="2.4,1.9"/><line x1="319.5" y1="285" x2="319.5" y2="401" stroke="#1e1e1e" stroke-width="1" stroke-dasharray="2.4,1.9"/><line x1="421.5" y1="285" x2="421.5" y2="401" stroke="#1e1e1e" stroke-width="1" stroke-dasharray="2.4,1.9"/><line x1="523.5" y1="285" x2="523.5" y2="401" stroke="#1e1e1e" stroke-width="1" stroke-dasharray="2.4,1.9"/><line x1="626.5" y1="285" x2="626.5" y2="401" stroke="#1e1e1e" stroke-width="1" stroke-dasharray="2.4,1.9"/><line x1="728.5" y1="285" x2="728.5" y2="401" stroke="#1e1e1e" stroke-width="1" stroke-dasharray="2.4,1.9"/><line x1="830.5" y1="285" x2="830.5" y2="401" stroke="#1e1e1e" stroke-width="1" stroke-dasharray="2.4,1.9"/><line x1="932.5" y1="285" x2="932.5" y2="401" stroke="#1e1e1e" stroke-width="1" stroke-dasharray="2.4,1.9"/><line x1="1.4" y1="399" x2="1.4" y2="401" stroke="#8a949c" stroke-width="0.9"/><line x1="11.6" y1="399" x2="11.6" y2="401" stroke="#8a949c" stroke-width="0.9"/><line x1="21.8" y1="399" x2="21.8" y2="401" stroke="#8a949c" stroke-width="0.9"/><line x1="32.1" y1="399" x2="32.1" y2="401" stroke="#8a949c" stroke-width="0.9"/><line x1="42.3" y1="399" x2="42.3" y2="401" stroke="#8a949c" stroke-width="0.9"/><line x1="52.5" y1="399" x2="52.5" y2="401" stroke="#8a949c" stroke-width="0.9"/><line x1="62.7" y1="399" x2="62.7" y2="401" stroke="#8a949c" stroke-width="0.9"/><line x1="73.0" y1="399" x2="73.0" y2="401" stroke="#8a949c" stroke-width="0.9"/><line x1="83.2" y1="399" x2="83.2" y2="401" stroke="#8a949c" stroke-width="0.9"/><line x1="93.4" y1="399" x2="93.4" y2="401" stroke="#8a949c" stroke-width="0.9"/><line x1="103.7" y1="399" x2="103.7" y2="401" stroke="#8a949c" stroke-width="0.9"/><line x1="113.9" y1="399" x2="113.9" y2="401" stroke="#8a949c" stroke-width="0.9"/><line x1="124.1" y1="399" x2="124.1" y2="401" stroke="#8a949c" stroke-width="0.9"/><line x1="134.4" y1="399" x2="134.4" y2="401" stroke="#8a949c" stroke-width="0.9"/><line x1="144.6" y1="399" x2="144.6" y2="401" stroke="#8a949c" stroke-width="0.9"/><line x1="154.8" y1="399" x2="154.8" y2="401" stroke="#8a949c" stroke-width="0.9"/><line x1="165.0" y1="399" x2="165.0" y2="401" stroke="#8a949c" stroke-width="0.9"/><line x1="175.3" y1="399" x2="175.3" y2="401" stroke="#8a949c" stroke-width="0.9"/><line x1="185.5" y1="399" x2="185.5" y2="401" stroke="#8a949c" stroke-width="0.9"/><line x1="195.7" y1="399" x2="195.7" y2="401" stroke="#8a949c" stroke-width="0.9"/><line x1="206.0" y1="399" x2="206.0" y2="401" stroke="#8a949c" stroke-width="0.9"/><line x1="216.2" y1="399" x2="216.2" y2="401" stroke="#8a949c" stroke-width="0.9"/><line x1="226.4" y1="399" x2="226.4" y2="401" stroke="#8a949c" stroke-width="0.9"/><line x1="236.7" y1="399" x2="236.7" y2="401" stroke="#8a949c" stroke-width="0.9"/><line x1="246.9" y1="399" x2="246.9" y2="401" stroke="#8a949c" stroke-width="0.9"/><line x1="257.1" y1="399" x2="257.1" y2="401" stroke="#8a949c" stroke-width="0.9"/><line x1="267.4" y1="399" x2="267.4" y2="401" stroke="#8a949c" stroke-width="0.9"/><line x1="277.6" y1="399" x2="277.6" y2="401" stroke="#8a949c" stroke-width="0.9"/><line x1="287.8" y1="399" x2="287.8" y2="401" stroke="#8a949c" stroke-width="0.9"/><line x1="298.0" y1="399" x2="298.0" y2="401" stroke="#8a949c" stroke-width="0.9"/><line x1="308.3" y1="399" x2="308.3" y2="401" stroke="#8a949c" stroke-width="0.9"/><line x1="318.5" y1="399" x2="318.5" y2="401" stroke="#8a949c" stroke-width="0.9"/><line x1="328.7" y1="399" x2="328.7" y2="401" stroke="#8a949c" stroke-width="0.9"/><line x1="339.0" y1="399" x2="339.0" y2="401" stroke="#8a949c" stroke-width="0.9"/><line x1="349.2" y1="399" x2="349.2" y2="401" stroke="#8a949c" stroke-width="0.9"/><line x1="359.4" y1="399" x2="359.4" y2="401" stroke="#8a949c" stroke-width="0.9"/><line x1="369.6" y1="399" x2="369.6" y2="401" stroke="#8a949c" stroke-width="0.9"/><line x1="379.9" y1="399" x2="379.9" y2="401" stroke="#8a949c" stroke-width="0.9"/><line x1="390.1" y1="399" x2="390.1" y2="401" stroke="#8a949c" stroke-width="0.9"/><line x1="400.3" y1="399" x2="400.3" y2="401" stroke="#8a949c" stroke-width="0.9"/><line x1="410.6" y1="399" x2="410.6" y2="401" stroke="#8a949c" stroke-width="0.9"/><line x1="420.8" y1="399" x2="420.8" y2="401" stroke="#8a949c" stroke-width="0.9"/><line x1="431.0" y1="399" x2="431.0" y2="401" stroke="#8a949c" stroke-width="0.9"/><line x1="441.3" y1="399" x2="441.3" y2="401" stroke="#8a949c" stroke-width="0.9"/><line x1="451.5" y1="399" x2="451.5" y2="401" stroke="#8a949c" stroke-width="0.9"/><line x1="461.7" y1="399" x2="461.7" y2="401" stroke="#8a949c" stroke-width="0.9"/><line x1="471.9" y1="399" x2="471.9" y2="401" stroke="#8a949c" stroke-width="0.9"/><line x1="482.2" y1="399" x2="482.2" y2="401" stroke="#8a949c" stroke-width="0.9"/><line x1="492.4" y1="399" x2="492.4" y2="401" stroke="#8a949c" stroke-width="0.9"/><line x1="502.6" y1="399" x2="502.6" y2="401" stroke="#8a949c" stroke-width="0.9"/><line x1="512.9" y1="399" x2="512.9" y2="401" stroke="#8a949c" stroke-width="0.9"/><line x1="523.1" y1="399" x2="523.1" y2="401" stroke="#8a949c" stroke-width="0.9"/><line x1="533.3" y1="399" x2="533.3" y2="401" stroke="#8a949c" stroke-width="0.9"/><line x1="543.6" y1="399" x2="543.6" y2="401" stroke="#8a949c" stroke-width="0.9"/><line x1="553.8" y1="399" x2="553.8" y2="401" stroke="#8a949c" stroke-width="0.9"/><line x1="564.0" y1="399" x2="564.0" y2="401" stroke="#8a949c" stroke-width="0.9"/><line x1="574.2" y1="399" x2="574.2" y2="401" stroke="#8a949c" stroke-width="0.9"/><line x1="584.5" y1="399" x2="584.5" y2="401" stroke="#8a949c" stroke-width="0.9"/><line x1="594.7" y1="399" x2="594.7" y2="401" stroke="#8a949c" stroke-width="0.9"/><line x1="604.9" y1="399" x2="604.9" y2="401" stroke="#8a949c" stroke-width="0.9"/><line x1="615.2" y1="399" x2="615.2" y2="401" stroke="#8a949c" stroke-width="0.9"/><line x1="625.4" y1="399" x2="625.4" y2="401" stroke="#8a949c" stroke-width="0.9"/><line x1="635.6" y1="399" x2="635.6" y2="401" stroke="#8a949c" stroke-width="0.9"/><line x1="645.9" y1="399" x2="645.9" y2="401" stroke="#8a949c" stroke-width="0.9"/><line x1="656.1" y1="399" x2="656.1" y2="401" stroke="#8a949c" stroke-width="0.9"/><line x1="666.3" y1="399" x2="666.3" y2="401" stroke="#8a949c" stroke-width="0.9"/><line x1="676.5" y1="399" x2="676.5" y2="401" stroke="#8a949c" stroke-width="0.9"/><line x1="686.8" y1="399" x2="686.8" y2="401" stroke="#8a949c" stroke-width="0.9"/><line x1="697.0" y1="399" x2="697.0" y2="401" stroke="#8a949c" stroke-width="0.9"/><line x1="707.2" y1="399" x2="707.2" y2="401" stroke="#8a949c" stroke-width="0.9"/><line x1="717.5" y1="399" x2="717.5" y2="401" stroke="#8a949c" stroke-width="0.9"/><line x1="727.7" y1="399" x2="727.7" y2="401" stroke="#8a949c" stroke-width="0.9"/><line x1="737.9" y1="399" x2="737.9" y2="401" stroke="#8a949c" stroke-width="0.9"/><line x1="748.2" y1="399" x2="748.2" y2="401" stroke="#8a949c" stroke-width="0.9"/><line x1="758.4" y1="399" x2="758.4" y2="401" stroke="#8a949c" stroke-width="0.9"/><line x1="768.6" y1="399" x2="768.6" y2="401" stroke="#8a949c" stroke-width="0.9"/><line x1="778.8" y1="399" x2="778.8" y2="401" stroke="#8a949c" stroke-width="0.9"/><line x1="789.1" y1="399" x2="789.1" y2="401" stroke="#8a949c" stroke-width="0.9"/><line x1="799.3" y1="399" x2="799.3" y2="401" stroke="#8a949c" stroke-width="0.9"/><line x1="809.5" y1="399" x2="809.5" y2="401" stroke="#8a949c" stroke-width="0.9"/><line x1="819.8" y1="399" x2="819.8" y2="401" stroke="#8a949c" stroke-width="0.9"/><line x1="830.0" y1="399" x2="830.0" y2="401" stroke="#8a949c" stroke-width="0.9"/><line x1="840.2" y1="399" x2="840.2" y2="401" stroke="#8a949c" stroke-width="0.9"/><line x1="850.5" y1="399" x2="850.5" y2="401" stroke="#8a949c" stroke-width="0.9"/><line x1="860.7" y1="399" x2="860.7" y2="401" stroke="#8a949c" stroke-width="0.9"/><line x1="870.9" y1="399" x2="870.9" y2="401" stroke="#8a949c" stroke-width="0.9"/><line x1="881.2" y1="399" x2="881.2" y2="401" stroke="#8a949c" stroke-width="0.9"/><line x1="891.4" y1="399" x2="891.4" y2="401" stroke="#8a949c" stroke-width="0.9"/><line x1="901.6" y1="399" x2="901.6" y2="401" stroke="#8a949c" stroke-width="0.9"/><line x1="911.8" y1="399" x2="911.8" y2="401" stroke="#8a949c" stroke-width="0.9"/><line x1="922.1" y1="399" x2="922.1" y2="401" stroke="#8a949c" stroke-width="0.9"/><line x1="932.3" y1="399" x2="932.3" y2="401" stroke="#8a949c" stroke-width="0.9"/><line x1="942.5" y1="399" x2="942.5" y2="401" stroke="#8a949c" stroke-width="0.9"/><line x1="952.8" y1="399" x2="952.8" y2="401" stroke="#8a949c" stroke-width="0.9"/><line x1="963.0" y1="399" x2="963.0" y2="401" stroke="#8a949c" stroke-width="0.9"/><line x1="973.2" y1="399" x2="973.2" y2="401" stroke="#8a949c" stroke-width="0.9"/><line x1="983.5" y1="399" x2="983.5" y2="401" stroke="#8a949c" stroke-width="0.9"/><line x1="993.7" y1="399" x2="993.7" y2="401" stroke="#8a949c" stroke-width="0.9"/><line x1="1003.9" y1="399" x2="1003.9" y2="401" stroke="#8a949c" stroke-width="0.9"/><line x1="1014.1" y1="399" x2="1014.1" y2="401" stroke="#8a949c" stroke-width="0.9"/><rect x="1" y="341.2" width="205" height="1.7" fill="#8c8c8c"/><rect x="796.6" y="341.2" width="225.4" height="1.7" fill="#8c8c8c"/><rect x="205.6" y="319.4" width="591" height="45.7" fill="#0a0888"/><path d="M210.80,319.40 L227.90,319.40 L229.70,342.20 L227.90,365.10 L210.80,365.10 L209.00,342.20Z" fill="#c4800e" stroke="#100c10" stroke-width="0.9"/><text x="219.35" y="334.5" font-size="9" fill="#f2dcae" text-anchor="middle" font-family='"Liberation Sans"' stroke="#f2dcae" stroke-width="0.25">4</text><text x="219.35" y="345.5" font-size="9" fill="#f2dcae" text-anchor="middle" font-family='"Liberation Sans"' stroke="#f2dcae" stroke-width="0.25">8</text><text x="219.35" y="356.5" font-size="9" fill="#f2dcae" text-anchor="middle" font-family='"Liberation Sans"' stroke="#f2dcae" stroke-width="0.25">h</text><path d="M237.68,319.40 L254.78,319.40 L256.58,342.20 L254.78,365.10 L237.68,365.10 L235.88,342.20Z" fill="#c4800e" stroke="#100c10" stroke-width="0.9"/><text x="246.23" y="334.5" font-size="9" fill="#f2dcae" text-anchor="middle" font-family='"Liberation Sans"' stroke="#f2dcae" stroke-width="0.25">6</text><text x="246.23" y="345.5" font-size="9" fill="#f2dcae" text-anchor="middle" font-family='"Liberation Sans"' stroke="#f2dcae" stroke-width="0.25">5</text><text x="246.23" y="356.5" font-size="9" fill="#f2dcae" text-anchor="middle" font-family='"Liberation Sans"' stroke="#f2dcae" stroke-width="0.25">h</text><path d="M264.56,319.40 L281.66,319.40 L283.46,342.20 L281.66,365.10 L264.56,365.10 L262.76,342.20Z" fill="#c4800e" stroke="#100c10" stroke-width="0.9"/><text x="273.11" y="334.5" font-size="9" fill="#f2dcae" text-anchor="middle" font-family='"Liberation Sans"' stroke="#f2dcae" stroke-width="0.25">6</text><text x="273.11" y="345.5" font-size="9" fill="#f2dcae" text-anchor="middle" font-family='"Liberation Sans"' stroke="#f2dcae" stroke-width="0.25">C</text><text x="273.11" y="356.5" font-size="9" fill="#f2dcae" text-anchor="middle" font-family='"Liberation Sans"' stroke="#f2dcae" stroke-width="0.25">h</text><path d="M291.44,319.40 L308.54,319.40 L310.34,342.20 L308.54,365.10 L291.44,365.10 L289.64,342.20Z" fill="#c4800e" stroke="#100c10" stroke-width="0.9"/><text x="299.99" y="334.5" font-size="9" fill="#f2dcae" text-anchor="middle" font-family='"Liberation Sans"' stroke="#f2dcae" stroke-width="0.25">6</text><text x="299.99" y="345.5" font-size="9" fill="#f2dcae" text-anchor="middle" font-family='"Liberation Sans"' stroke="#f2dcae" stroke-width="0.25">C</text><text x="299.99" y="356.5" font-size="9" fill="#f2dcae" text-anchor="middle" font-family='"Liberation Sans"' stroke="#f2dcae" stroke-width="0.25">h</text><path d="M318.32,319.40 L335.42,319.40 L337.22,342.20 L335.42,365.10 L318.32,365.10 L316.52,342.20Z" fill="#c4800e" stroke="#100c10" stroke-width="0.9"/><text x="326.87" y="334.5" font-size="9" fill="#f2dcae" text-anchor="middle" font-family='"Liberation Sans"' stroke="#f2dcae" stroke-width="0.25">6</text><text x="326.87" y="345.5" font-size="9" fill="#f2dcae" text-anchor="middle" font-family='"Liberation Sans"' stroke="#f2dcae" stroke-width="0.25">F</text><text x="326.87" y="356.5" font-size="9" fill="#f2dcae" text-anchor="middle" font-family='"Liberation Sans"' stroke="#f2dcae" stroke-width="0.25">h</text><path d="M345.20,319.40 L362.30,319.40 L364.10,342.20 L362.30,365.10 L345.20,365.10 L343.40,342.20Z" fill="#c4800e" stroke="#100c10" stroke-width="0.9"/><text x="353.75" y="334.5" font-size="9" fill="#f2dcae" text-anchor="middle" font-family='"Liberation Sans"' stroke="#f2dcae" stroke-width="0.25">2</text><text x="353.75" y="345.5" font-size="9" fill="#f2dcae" text-anchor="middle" font-family='"Liberation Sans"' stroke="#f2dcae" stroke-width="0.25">0</text><text x="353.75" y="356.5" font-size="9" fill="#f2dcae" text-anchor="middle" font-family='"Liberation Sans"' stroke="#f2dcae" stroke-width="0.25">h</text><path d="M372.08,319.40 L389.18,319.40 L390.98,342.20 L389.18,365.10 L372.08,365.10 L370.28,342.20Z" fill="#c4800e" stroke="#100c10" stroke-width="0.9"/><text x="380.63" y="334.5" font-size="9" fill="#f2dcae" text-anchor="middle" font-family='"Liberation Sans"' stroke="#f2dcae" stroke-width="0.25">6</text><text x="380.63" y="345.5" font-size="9" fill="#f2dcae" text-anchor="middle" font-family='"Liberation Sans"' stroke="#f2dcae" stroke-width="0.25">6</text><text x="380.63" y="356.5" font-size="9" fill="#f2dcae" text-anchor="middle" font-family='"Liberation Sans"' stroke="#f2dcae" stroke-width="0.25">h</text><path d="M398.96,319.40 L416.06,319.40 L417.86,342.20 L416.06,365.10 L398.96,365.10 L397.16,342.20Z" fill="#c4800e" stroke="#100c10" stroke-width="0.9"/><text x="407.51" y="334.5" font-size="9" fill="#f2dcae" text-anchor="middle" font-family='"Liberation Sans"' stroke="#f2dcae" stroke-width="0.25">7</text><text x="407.51" y="345.5" font-size="9" fill="#f2dcae" text-anchor="middle" font-family='"Liberation Sans"' stroke="#f2dcae" stroke-width="0.25">2</text><text x="407.51" y="356.5" font-size="9" fill="#f2dcae" text-anchor="middle" font-family='"Liberation Sans"' stroke="#f2dcae" stroke-width="0.25">h</text><path d="M425.84,319.40 L442.94,319.40 L444.74,342.20 L442.94,365.10 L425.84,365.10 L424.04,342.20Z" fill="#c4800e" stroke="#100c10" stroke-width="0.9"/><text x="434.39" y="334.5" font-size="9" fill="#f2dcae" text-anchor="middle" font-family='"Liberation Sans"' stroke="#f2dcae" stroke-width="0.25">6</text><text x="434.39" y="345.5" font-size="9" fill="#f2dcae" text-anchor="middle" font-family='"Liberation Sans"' stroke="#f2dcae" stroke-width="0.25">F</text><text x="434.39" y="356.5" font-size="9" fill="#f2dcae" text-anchor="middle" font-family='"Liberation Sans"' stroke="#f2dcae" stroke-width="0.25">h</text><path d="M452.72,319.40 L469.82,319.40 L471.62,342.20 L469.82,365.10 L452.72,365.10 L450.92,342.20Z" fill="#c4800e" stroke="#100c10" stroke-width="0.9"/><text x="461.27" y="334.5" font-size="9" fill="#f2dcae" text-anchor="middle" font-family='"Liberation Sans"' stroke="#f2dcae" stroke-width="0.25">6</text><text x="461.27" y="345.5" font-size="9" fill="#f2dcae" text-anchor="middle" font-family='"Liberation Sans"' stroke="#f2dcae" stroke-width="0.25">D</text><text x="461.27" y="356.5" font-size="9" fill="#f2dcae" text-anchor="middle" font-family='"Liberation Sans"' stroke="#f2dcae" stroke-width="0.25">h</text><path d="M479.60,319.40 L496.70,319.40 L498.50,342.20 L496.70,365.10 L479.60,365.10 L477.80,342.20Z" fill="#c4800e" stroke="#100c10" stroke-width="0.9"/><text x="488.15" y="334.5" font-size="9" fill="#f2dcae" text-anchor="middle" font-family='"Liberation Sans"' stroke="#f2dcae" stroke-width="0.25">2</text><text x="488.15" y="345.5" font-size="9" fill="#f2dcae" text-anchor="middle" font-family='"Liberation Sans"' stroke="#f2dcae" stroke-width="0.25">0</text><text x="488.15" y="356.5" font-size="9" fill="#f2dcae" text-anchor="middle" font-family='"Liberation Sans"' stroke="#f2dcae" stroke-width="0.25">h</text><path d="M506.48,319.40 L523.58,319.40 L525.38,342.20 L523.58,365.10 L506.48,365.10 L504.68,342.20Z" fill="#c4800e" stroke="#100c10" stroke-width="0.9"/><text x="515.03" y="334.5" font-size="9" fill="#f2dcae" text-anchor="middle" font-family='"Liberation Sans"' stroke="#f2dcae" stroke-width="0.25">7</text><text x="515.03" y="345.5" font-size="9" fill="#f2dcae" text-anchor="middle" font-family='"Liberation Sans"' stroke="#f2dcae" stroke-width="0.25">3</text><text x="515.03" y="356.5" font-size="9" fill="#f2dcae" text-anchor="middle" font-family='"Liberation Sans"' stroke="#f2dcae" stroke-width="0.25">h</text><path d="M533.36,319.40 L550.46,319.40 L552.26,342.20 L550.46,365.10 L533.36,365.10 L531.56,342.20Z" fill="#c4800e" stroke="#100c10" stroke-width="0.9"/><text x="541.91" y="334.5" font-size="9" fill="#f2dcae" text-anchor="middle" font-family='"Liberation Sans"' stroke="#f2dcae" stroke-width="0.25">6</text><text x="541.91" y="345.5" font-size="9" fill="#f2dcae" text-anchor="middle" font-family='"Liberation Sans"' stroke="#f2dcae" stroke-width="0.25">5</text><text x="541.91" y="356.5" font-size="9" fill="#f2dcae" text-anchor="middle" font-family='"Liberation Sans"' stroke="#f2dcae" stroke-width="0.25">h</text><path d="M560.24,319.40 L577.34,319.40 L579.14,342.20 L577.34,365.10 L560.24,365.10 L558.44,342.20Z" fill="#c4800e" stroke="#100c10" stroke-width="0.9"/><text x="568.79" y="334.5" font-size="9" fill="#f2dcae" text-anchor="middle" font-family='"Liberation Sans"' stroke="#f2dcae" stroke-width="0.25">7</text><text x="568.79" y="345.5" font-size="9" fill="#f2dcae" text-anchor="middle" font-family='"Liberation Sans"' stroke="#f2dcae" stroke-width="0.25">2</text><text x="568.79" y="356.5" font-size="9" fill="#f2dcae" text-anchor="middle" font-family='"Liberation Sans"' stroke="#f2dcae" stroke-width="0.25">h</text><path d="M587.12,319.40 L604.22,319.40 L606.02,342.20 L604.22,365.10 L587.12,365.10 L585.32,342.20Z" fill="#c4800e" stroke="#100c10" stroke-width="0.9"/><text x="595.67" y="334.5" font-size="9" fill="#f2dcae" text-anchor="middle" font-family='"Liberation Sans"' stroke="#f2dcae" stroke-width="0.25">6</text><text x="595.67" y="345.5" font-size="9" fill="#f2dcae" text-anchor="middle" font-family='"Liberation Sans"' stroke="#f2dcae" stroke-width="0.25">9</text><text x="595.67" y="356.5" font-size="9" fill="#f2dcae" text-anchor="middle" font-family='"Liberation Sans"' stroke="#f2dcae" stroke-width="0.25">h</text><path d="M614.00,319.40 L631.10,319.40 L632.90,342.20 L631.10,365.10 L614.00,365.10 L612.20,342.20Z" fill="#c4800e" stroke="#100c10" stroke-width="0.9"/><text x="622.55" y="334.5" font-size="9" fill="#f2dcae" text-anchor="middle" font-family='"Liberation Sans"' stroke="#f2dcae" stroke-width="0.25">6</text><text x="622.55" y="345.5" font-size="9" fill="#f2dcae" text-anchor="middle" font-family='"Liberation Sans"' stroke="#f2dcae" stroke-width="0.25">1</text><text x="622.55" y="356.5" font-size="9" fill="#f2dcae" text-anchor="middle" font-family='"Liberation Sans"' stroke="#f2dcae" stroke-width="0.25">h</text><path d="M640.88,319.40 L657.98,319.40 L659.78,342.20 L657.98,365.10 L640.88,365.10 L639.08,342.20Z" fill="#c4800e" stroke="#100c10" stroke-width="0.9"/><text x="649.43" y="334.5" font-size="9" fill="#f2dcae" text-anchor="middle" font-family='"Liberation Sans"' stroke="#f2dcae" stroke-width="0.25">6</text><text x="649.43" y="345.5" font-size="9" fill="#f2dcae" text-anchor="middle" font-family='"Liberation Sans"' stroke="#f2dcae" stroke-width="0.25">C</text><text x="649.43" y="356.5" font-size="9" fill="#f2dcae" text-anchor="middle" font-family='"Liberation Sans"' stroke="#f2dcae" stroke-width="0.25">h</text><path d="M667.76,319.40 L684.86,319.40 L686.66,342.20 L684.86,365.10 L667.76,365.10 L665.96,342.20Z" fill="#c4800e" stroke="#100c10" stroke-width="0.9"/><text x="676.31" y="334.5" font-size="9" fill="#f2dcae" text-anchor="middle" font-family='"Liberation Sans"' stroke="#f2dcae" stroke-width="0.25">2</text><text x="676.31" y="345.5" font-size="9" fill="#f2dcae" text-anchor="middle" font-family='"Liberation Sans"' stroke="#f2dcae" stroke-width="0.25">0</text><text x="676.31" y="356.5" font-size="9" fill="#f2dcae" text-anchor="middle" font-family='"Liberation Sans"' stroke="#f2dcae" stroke-width="0.25">h</text><path d="M694.64,319.40 L711.74,319.40 L713.54,342.20 L711.74,365.10 L694.64,365.10 L692.84,342.20Z" fill="#c4800e" stroke="#100c10" stroke-width="0.9"/><text x="703.19" y="334.5" font-size="9" fill="#f2dcae" text-anchor="middle" font-family='"Liberation Sans"' stroke="#f2dcae" stroke-width="0.25">7</text><text x="703.19" y="345.5" font-size="9" fill="#f2dcae" text-anchor="middle" font-family='"Liberation Sans"' stroke="#f2dcae" stroke-width="0.25">0</text><text x="703.19" y="356.5" font-size="9" fill="#f2dcae" text-anchor="middle" font-family='"Liberation Sans"' stroke="#f2dcae" stroke-width="0.25">h</text><path d="M721.52,319.40 L738.62,319.40 L740.42,342.20 L738.62,365.10 L721.52,365.10 L719.72,342.20Z" fill="#c4800e" stroke="#100c10" stroke-width="0.9"/><text x="730.07" y="334.5" font-size="9" fill="#f2dcae" text-anchor="middle" font-family='"Liberation Sans"' stroke="#f2dcae" stroke-width="0.25">6</text><text x="730.07" y="345.5" font-size="9" fill="#f2dcae" text-anchor="middle" font-family='"Liberation Sans"' stroke="#f2dcae" stroke-width="0.25">F</text><text x="730.07" y="356.5" font-size="9" fill="#f2dcae" text-anchor="middle" font-family='"Liberation Sans"' stroke="#f2dcae" stroke-width="0.25">h</text><path d="M748.40,319.40 L765.50,319.40 L767.30,342.20 L765.50,365.10 L748.40,365.10 L746.60,342.20Z" fill="#c4800e" stroke="#100c10" stroke-width="0.9"/><text x="756.95" y="334.5" font-size="9" fill="#f2dcae" text-anchor="middle" font-family='"Liberation Sans"' stroke="#f2dcae" stroke-width="0.25">7</text><text x="756.95" y="345.5" font-size="9" fill="#f2dcae" text-anchor="middle" font-family='"Liberation Sans"' stroke="#f2dcae" stroke-width="0.25">2</text><text x="756.95" y="356.5" font-size="9" fill="#f2dcae" text-anchor="middle" font-family='"Liberation Sans"' stroke="#f2dcae" stroke-width="0.25">h</text><path d="M775.28,319.40 L792.38,319.40 L794.18,342.20 L792.38,365.10 L775.28,365.10 L773.48,342.20Z" fill="#c4800e" stroke="#100c10" stroke-width="0.9"/><text x="783.83" y="334.5" font-size="9" fill="#f2dcae" text-anchor="middle" font-family='"Liberation Sans"' stroke="#f2dcae" stroke-width="0.25">7</text><text x="783.83" y="345.5" font-size="9" fill="#f2dcae" text-anchor="middle" font-family='"Liberation Sans"' stroke="#f2dcae" stroke-width="0.25">4</text><text x="783.83" y="356.5" font-size="9" fill="#f2dcae" text-anchor="middle" font-family='"Liberation Sans"' stroke="#f2dcae" stroke-width="0.25">h</text><rect x="7" y="338" width="41" height="8" fill="#b4b4b4"/><text x="8" y="344.6" font-size="6.2" fill="#303030" font-family='"Liberation Sans"' stroke="#303030" stroke-width="0.25">SB1 UART Tx</text><text x="2" y="394.5" font-size="10" fill="#d4d8dc" text-anchor="start" font-family='"Liberation Sans"' stroke="#d4d8dc" stroke-width="0.25">-8.5 ms</text><text x="113.9" y="394.5" font-size="10" fill="#d4d8dc" text-anchor="middle" font-family='"Liberation Sans"' stroke="#d4d8dc" stroke-width="0.25">-4 ms</text><text x="217.2" y="394.5" font-size="10" fill="#d4d8dc" text-anchor="middle" font-family='"Liberation Sans"' stroke="#d4d8dc" stroke-width="0.25">0 s</text><text x="318.5" y="394.5" font-size="10" fill="#d4d8dc" text-anchor="middle" font-family='"Liberation Sans"' stroke="#d4d8dc" stroke-width="0.25">4 ms</text><text x="420.8" y="394.5" font-size="10" fill="#d4d8dc" text-anchor="middle" font-family='"Liberation Sans"' stroke="#d4d8dc" stroke-width="0.25">8 ms</text><text x="523.1" y="394.5" font-size="10" fill="#d4d8dc" text-anchor="middle" font-family='"Liberation Sans"' stroke="#d4d8dc" stroke-width="0.25">12 ms</text><text x="625.4" y="394.5" font-size="10" fill="#d4d8dc" text-anchor="middle" font-family='"Liberation Sans"' stroke="#d4d8dc" stroke-width="0.25">16 ms</text><text x="727.7" y="394.5" font-size="10" fill="#d4d8dc" text-anchor="middle" font-family='"Liberation Sans"' stroke="#d4d8dc" stroke-width="0.25">20 ms</text><text x="830" y="394.5" font-size="10" fill="#d4d8dc" text-anchor="middle" font-family='"Liberation Sans"' stroke="#d4d8dc" stroke-width="0.25">24 ms</text><text x="932.3" y="394.5" font-size="10" fill="#d4d8dc" text-anchor="middle" font-family='"Liberation Sans"' stroke="#d4d8dc" stroke-width="0.25">28 ms</text><text x="1021" y="394.5" font-size="10" fill="#d4d8dc" text-anchor="end" font-family='"Liberation Sans"' stroke="#d4d8dc" stroke-width="0.25">31.5 ms</text><line x1="1" y1="417.5" x2="1022" y2="417.5" stroke="#1e1e1e" stroke-width="1" stroke-dasharray="2.4,1.9"/><line x1="1" y1="428.5" x2="1022" y2="428.5" stroke="#1e1e1e" stroke-width="1" stroke-dasharray="2.4,1.9"/><line x1="1" y1="440.5" x2="1022" y2="440.5" stroke="#1e1e1e" stroke-width="1" stroke-dasharray="2.4,1.9"/><line x1="1" y1="452.5" x2="1022" y2="452.5" stroke="#1e1e1e" stroke-width="1" stroke-dasharray="2.4,1.9"/><line x1="1" y1="464.5" x2="1022" y2="464.5" stroke="#1e1e1e" stroke-width="1" stroke-dasharray="2.4,1.9"/><line x1="1" y1="476.5" x2="1022" y2="476.5" stroke="#1e1e1e" stroke-width="1" stroke-dasharray="2.4,1.9"/><line x1="1" y1="487.5" x2="1022" y2="487.5" stroke="#1e1e1e" stroke-width="1" stroke-dasharray="2.4,1.9"/><line x1="1" y1="499.5" x2="1022" y2="499.5" stroke="#1e1e1e" stroke-width="1" stroke-dasharray="2.4,1.9"/><line x1="1" y1="511.5" x2="1022" y2="511.5" stroke="#1e1e1e" stroke-width="1" stroke-dasharray="2.4,1.9"/><line x1="12.5" y1="406" x2="12.5" y2="522" stroke="#1e1e1e" stroke-width="1" stroke-dasharray="2.4,1.9"/><line x1="114.5" y1="406" x2="114.5" y2="522" stroke="#1e1e1e" stroke-width="1" stroke-dasharray="2.4,1.9"/><line x1="216.5" y1="406" x2="216.5" y2="522" stroke="#1e1e1e" stroke-width="1" stroke-dasharray="2.4,1.9"/><line x1="319.5" y1="406" x2="319.5" y2="522" stroke="#1e1e1e" stroke-width="1" stroke-dasharray="2.4,1.9"/><line x1="421.5" y1="406" x2="421.5" y2="522" stroke="#1e1e1e" stroke-width="1" stroke-dasharray="2.4,1.9"/><line x1="523.5" y1="406" x2="523.5" y2="522" stroke="#1e1e1e" stroke-width="1" stroke-dasharray="2.4,1.9"/><line x1="626.5" y1="406" x2="626.5" y2="522" stroke="#1e1e1e" stroke-width="1" stroke-dasharray="2.4,1.9"/><line x1="728.5" y1="406" x2="728.5" y2="522" stroke="#1e1e1e" stroke-width="1" stroke-dasharray="2.4,1.9"/><line x1="830.5" y1="406" x2="830.5" y2="522" stroke="#1e1e1e" stroke-width="1" stroke-dasharray="2.4,1.9"/><line x1="932.5" y1="406" x2="932.5" y2="522" stroke="#1e1e1e" stroke-width="1" stroke-dasharray="2.4,1.9"/><line x1="1.4" y1="519.5" x2="1.4" y2="521.5" stroke="#8a949c" stroke-width="0.9"/><line x1="11.6" y1="519.5" x2="11.6" y2="521.5" stroke="#8a949c" stroke-width="0.9"/><line x1="21.8" y1="519.5" x2="21.8" y2="521.5" stroke="#8a949c" stroke-width="0.9"/><line x1="32.1" y1="519.5" x2="32.1" y2="521.5" stroke="#8a949c" stroke-width="0.9"/><line x1="42.3" y1="519.5" x2="42.3" y2="521.5" stroke="#8a949c" stroke-width="0.9"/><line x1="52.5" y1="519.5" x2="52.5" y2="521.5" stroke="#8a949c" stroke-width="0.9"/><line x1="62.7" y1="519.5" x2="62.7" y2="521.5" stroke="#8a949c" stroke-width="0.9"/><line x1="73.0" y1="519.5" x2="73.0" y2="521.5" stroke="#8a949c" stroke-width="0.9"/><line x1="83.2" y1="519.5" x2="83.2" y2="521.5" stroke="#8a949c" stroke-width="0.9"/><line x1="93.4" y1="519.5" x2="93.4" y2="521.5" stroke="#8a949c" stroke-width="0.9"/><line x1="103.7" y1="519.5" x2="103.7" y2="521.5" stroke="#8a949c" stroke-width="0.9"/><line x1="113.9" y1="519.5" x2="113.9" y2="521.5" stroke="#8a949c" stroke-width="0.9"/><line x1="124.1" y1="519.5" x2="124.1" y2="521.5" stroke="#8a949c" stroke-width="0.9"/><line x1="134.4" y1="519.5" x2="134.4" y2="521.5" stroke="#8a949c" stroke-width="0.9"/><line x1="144.6" y1="519.5" x2="144.6" y2="521.5" stroke="#8a949c" stroke-width="0.9"/><line x1="154.8" y1="519.5" x2="154.8" y2="521.5" stroke="#8a949c" stroke-width="0.9"/><line x1="165.0" y1="519.5" x2="165.0" y2="521.5" stroke="#8a949c" stroke-width="0.9"/><line x1="175.3" y1="519.5" x2="175.3" y2="521.5" stroke="#8a949c" stroke-width="0.9"/><line x1="185.5" y1="519.5" x2="185.5" y2="521.5" stroke="#8a949c" stroke-width="0.9"/><line x1="195.7" y1="519.5" x2="195.7" y2="521.5" stroke="#8a949c" stroke-width="0.9"/><line x1="206.0" y1="519.5" x2="206.0" y2="521.5" stroke="#8a949c" stroke-width="0.9"/><line x1="216.2" y1="519.5" x2="216.2" y2="521.5" stroke="#8a949c" stroke-width="0.9"/><line x1="226.4" y1="519.5" x2="226.4" y2="521.5" stroke="#8a949c" stroke-width="0.9"/><line x1="236.7" y1="519.5" x2="236.7" y2="521.5" stroke="#8a949c" stroke-width="0.9"/><line x1="246.9" y1="519.5" x2="246.9" y2="521.5" stroke="#8a949c" stroke-width="0.9"/><line x1="257.1" y1="519.5" x2="257.1" y2="521.5" stroke="#8a949c" stroke-width="0.9"/><line x1="267.4" y1="519.5" x2="267.4" y2="521.5" stroke="#8a949c" stroke-width="0.9"/><line x1="277.6" y1="519.5" x2="277.6" y2="521.5" stroke="#8a949c" stroke-width="0.9"/><line x1="287.8" y1="519.5" x2="287.8" y2="521.5" stroke="#8a949c" stroke-width="0.9"/><line x1="298.0" y1="519.5" x2="298.0" y2="521.5" stroke="#8a949c" stroke-width="0.9"/><line x1="308.3" y1="519.5" x2="308.3" y2="521.5" stroke="#8a949c" stroke-width="0.9"/><line x1="318.5" y1="519.5" x2="318.5" y2="521.5" stroke="#8a949c" stroke-width="0.9"/><line x1="328.7" y1="519.5" x2="328.7" y2="521.5" stroke="#8a949c" stroke-width="0.9"/><line x1="339.0" y1="519.5" x2="339.0" y2="521.5" stroke="#8a949c" stroke-width="0.9"/><line x1="349.2" y1="519.5" x2="349.2" y2="521.5" stroke="#8a949c" stroke-width="0.9"/><line x1="359.4" y1="519.5" x2="359.4" y2="521.5" stroke="#8a949c" stroke-width="0.9"/><line x1="369.6" y1="519.5" x2="369.6" y2="521.5" stroke="#8a949c" stroke-width="0.9"/><line x1="379.9" y1="519.5" x2="379.9" y2="521.5" stroke="#8a949c" stroke-width="0.9"/><line x1="390.1" y1="519.5" x2="390.1" y2="521.5" stroke="#8a949c" stroke-width="0.9"/><line x1="400.3" y1="519.5" x2="400.3" y2="521.5" stroke="#8a949c" stroke-width="0.9"/><line x1="410.6" y1="519.5" x2="410.6" y2="521.5" stroke="#8a949c" stroke-width="0.9"/><line x1="420.8" y1="519.5" x2="420.8" y2="521.5" stroke="#8a949c" stroke-width="0.9"/><line x1="431.0" y1="519.5" x2="431.0" y2="521.5" stroke="#8a949c" stroke-width="0.9"/><line x1="441.3" y1="519.5" x2="441.3" y2="521.5" stroke="#8a949c" stroke-width="0.9"/><line x1="451.5" y1="519.5" x2="451.5" y2="521.5" stroke="#8a949c" stroke-width="0.9"/><line x1="461.7" y1="519.5" x2="461.7" y2="521.5" stroke="#8a949c" stroke-width="0.9"/><line x1="471.9" y1="519.5" x2="471.9" y2="521.5" stroke="#8a949c" stroke-width="0.9"/><line x1="482.2" y1="519.5" x2="482.2" y2="521.5" stroke="#8a949c" stroke-width="0.9"/><line x1="492.4" y1="519.5" x2="492.4" y2="521.5" stroke="#8a949c" stroke-width="0.9"/><line x1="502.6" y1="519.5" x2="502.6" y2="521.5" stroke="#8a949c" stroke-width="0.9"/><line x1="512.9" y1="519.5" x2="512.9" y2="521.5" stroke="#8a949c" stroke-width="0.9"/><line x1="523.1" y1="519.5" x2="523.1" y2="521.5" stroke="#8a949c" stroke-width="0.9"/><line x1="533.3" y1="519.5" x2="533.3" y2="521.5" stroke="#8a949c" stroke-width="0.9"/><line x1="543.6" y1="519.5" x2="543.6" y2="521.5" stroke="#8a949c" stroke-width="0.9"/><line x1="553.8" y1="519.5" x2="553.8" y2="521.5" stroke="#8a949c" stroke-width="0.9"/><line x1="564.0" y1="519.5" x2="564.0" y2="521.5" stroke="#8a949c" stroke-width="0.9"/><line x1="574.2" y1="519.5" x2="574.2" y2="521.5" stroke="#8a949c" stroke-width="0.9"/><line x1="584.5" y1="519.5" x2="584.5" y2="521.5" stroke="#8a949c" stroke-width="0.9"/><line x1="594.7" y1="519.5" x2="594.7" y2="521.5" stroke="#8a949c" stroke-width="0.9"/><line x1="604.9" y1="519.5" x2="604.9" y2="521.5" stroke="#8a949c" stroke-width="0.9"/><line x1="615.2" y1="519.5" x2="615.2" y2="521.5" stroke="#8a949c" stroke-width="0.9"/><line x1="625.4" y1="519.5" x2="625.4" y2="521.5" stroke="#8a949c" stroke-width="0.9"/><line x1="635.6" y1="519.5" x2="635.6" y2="521.5" stroke="#8a949c" stroke-width="0.9"/><line x1="645.9" y1="519.5" x2="645.9" y2="521.5" stroke="#8a949c" stroke-width="0.9"/><line x1="656.1" y1="519.5" x2="656.1" y2="521.5" stroke="#8a949c" stroke-width="0.9"/><line x1="666.3" y1="519.5" x2="666.3" y2="521.5" stroke="#8a949c" stroke-width="0.9"/><line x1="676.5" y1="519.5" x2="676.5" y2="521.5" stroke="#8a949c" stroke-width="0.9"/><line x1="686.8" y1="519.5" x2="686.8" y2="521.5" stroke="#8a949c" stroke-width="0.9"/><line x1="697.0" y1="519.5" x2="697.0" y2="521.5" stroke="#8a949c" stroke-width="0.9"/><line x1="707.2" y1="519.5" x2="707.2" y2="521.5" stroke="#8a949c" stroke-width="0.9"/><line x1="717.5" y1="519.5" x2="717.5" y2="521.5" stroke="#8a949c" stroke-width="0.9"/><line x1="727.7" y1="519.5" x2="727.7" y2="521.5" stroke="#8a949c" stroke-width="0.9"/><line x1="737.9" y1="519.5" x2="737.9" y2="521.5" stroke="#8a949c" stroke-width="0.9"/><line x1="748.2" y1="519.5" x2="748.2" y2="521.5" stroke="#8a949c" stroke-width="0.9"/><line x1="758.4" y1="519.5" x2="758.4" y2="521.5" stroke="#8a949c" stroke-width="0.9"/><line x1="768.6" y1="519.5" x2="768.6" y2="521.5" stroke="#8a949c" stroke-width="0.9"/><line x1="778.8" y1="519.5" x2="778.8" y2="521.5" stroke="#8a949c" stroke-width="0.9"/><line x1="789.1" y1="519.5" x2="789.1" y2="521.5" stroke="#8a949c" stroke-width="0.9"/><line x1="799.3" y1="519.5" x2="799.3" y2="521.5" stroke="#8a949c" stroke-width="0.9"/><line x1="809.5" y1="519.5" x2="809.5" y2="521.5" stroke="#8a949c" stroke-width="0.9"/><line x1="819.8" y1="519.5" x2="819.8" y2="521.5" stroke="#8a949c" stroke-width="0.9"/><line x1="830.0" y1="519.5" x2="830.0" y2="521.5" stroke="#8a949c" stroke-width="0.9"/><line x1="840.2" y1="519.5" x2="840.2" y2="521.5" stroke="#8a949c" stroke-width="0.9"/><line x1="850.5" y1="519.5" x2="850.5" y2="521.5" stroke="#8a949c" stroke-width="0.9"/><line x1="860.7" y1="519.5" x2="860.7" y2="521.5" stroke="#8a949c" stroke-width="0.9"/><line x1="870.9" y1="519.5" x2="870.9" y2="521.5" stroke="#8a949c" stroke-width="0.9"/><line x1="881.2" y1="519.5" x2="881.2" y2="521.5" stroke="#8a949c" stroke-width="0.9"/><line x1="891.4" y1="519.5" x2="891.4" y2="521.5" stroke="#8a949c" stroke-width="0.9"/><line x1="901.6" y1="519.5" x2="901.6" y2="521.5" stroke="#8a949c" stroke-width="0.9"/><line x1="911.8" y1="519.5" x2="911.8" y2="521.5" stroke="#8a949c" stroke-width="0.9"/><line x1="922.1" y1="519.5" x2="922.1" y2="521.5" stroke="#8a949c" stroke-width="0.9"/><line x1="932.3" y1="519.5" x2="932.3" y2="521.5" stroke="#8a949c" stroke-width="0.9"/><line x1="942.5" y1="519.5" x2="942.5" y2="521.5" stroke="#8a949c" stroke-width="0.9"/><line x1="952.8" y1="519.5" x2="952.8" y2="521.5" stroke="#8a949c" stroke-width="0.9"/><line x1="963.0" y1="519.5" x2="963.0" y2="521.5" stroke="#8a949c" stroke-width="0.9"/><line x1="973.2" y1="519.5" x2="973.2" y2="521.5" stroke="#8a949c" stroke-width="0.9"/><line x1="983.5" y1="519.5" x2="983.5" y2="521.5" stroke="#8a949c" stroke-width="0.9"/><line x1="993.7" y1="519.5" x2="993.7" y2="521.5" stroke="#8a949c" stroke-width="0.9"/><line x1="1003.9" y1="519.5" x2="1003.9" y2="521.5" stroke="#8a949c" stroke-width="0.9"/><line x1="1014.1" y1="519.5" x2="1014.1" y2="521.5" stroke="#8a949c" stroke-width="0.9"/><rect x="1" y="456.7" width="1021" height="1.7" fill="#8c8c8c"/><path d="M207.90,435.20 L213.77,435.20 L215.77,457.50 L213.77,480.00 L207.90,480.00 L205.90,457.50Z" fill="#c20a0a" stroke="#dc2424" stroke-width="0.8"/><rect x="219.06" y="435.4" width="5.39" height="44.6" fill="#c20a0a" stroke="#dc2424" stroke-width="0.8"/><rect x="227.14" y="435.4" width="2.69" height="44.6" fill="#c20a0a" stroke="#dc2424" stroke-width="0.8"/><rect x="232.48" y="435.4" width="2.69" height="44.6" fill="#c20a0a" stroke="#dc2424" stroke-width="0.8"/><rect x="237.87" y="435.4" width="2.69" height="44.6" fill="#c20a0a" stroke="#dc2424" stroke-width="0.8"/><rect x="243.25" y="435.4" width="5.39" height="44.6" fill="#c20a0a" stroke="#dc2424" stroke-width="0.8"/><rect x="254.02" y="435.4" width="2.69" height="44.6" fill="#c20a0a" stroke="#dc2424" stroke-width="0.8"/><rect x="259.36" y="435.4" width="8.08" height="44.6" fill="#c20a0a" stroke="#dc2424" stroke-width="0.8"/><rect x="272.82" y="435.4" width="2.69" height="44.6" fill="#c20a0a" stroke="#dc2424" stroke-width="0.8"/><rect x="280.90" y="435.4" width="2.69" height="44.6" fill="#c20a0a" stroke="#dc2424" stroke-width="0.8"/><rect x="286.24" y="435.4" width="8.08" height="44.6" fill="#c20a0a" stroke="#dc2424" stroke-width="0.8"/><rect x="299.70" y="435.4" width="2.69" height="44.6" fill="#c20a0a" stroke="#dc2424" stroke-width="0.8"/><rect x="307.78" y="435.4" width="2.69" height="44.6" fill="#c20a0a" stroke="#dc2424" stroke-width="0.8"/><rect x="313.12" y="435.4" width="2.69" height="44.6" fill="#c20a0a" stroke="#dc2424" stroke-width="0.8"/><rect x="326.58" y="435.4" width="2.69" height="44.6" fill="#c20a0a" stroke="#dc2424" stroke-width="0.8"/><rect x="334.66" y="435.4" width="2.69" height="44.6" fill="#c20a0a" stroke="#dc2424" stroke-width="0.8"/><rect x="340.00" y="435.4" width="16.16" height="44.6" fill="#c20a0a" stroke="#dc2424" stroke-width="0.8"/><text x="342.60" y="451.5" font-size="8.8" fill="#f4d0d0" font-family='"Liberation Sans"' stroke="#f4d0d0" stroke-width="0.25">Br</text><text x="342.60" y="461.8" font-size="8.8" fill="#f4d0d0" font-family='"Liberation Sans"' stroke="#f4d0d0" stroke-width="0.25">ea</text><text x="342.60" y="472.1" font-size="8.8" fill="#f4d0d0" font-family='"Liberation Sans"' stroke="#f4d0d0" stroke-width="0.25">k</text><rect x="358.85" y="435.4" width="5.39" height="44.6" fill="#c20a0a" stroke="#dc2424" stroke-width="0.8"/><rect x="366.88" y="435.4" width="5.39" height="44.6" fill="#c20a0a" stroke="#dc2424" stroke-width="0.8"/><rect x="377.65" y="435.4" width="5.39" height="44.6" fill="#c20a0a" stroke="#dc2424" stroke-width="0.8"/><rect x="388.42" y="435.4" width="2.69" height="44.6" fill="#c20a0a" stroke="#dc2424" stroke-width="0.8"/><rect x="393.76" y="435.4" width="5.39" height="44.6" fill="#c20a0a" stroke="#dc2424" stroke-width="0.8"/><rect x="401.84" y="435.4" width="5.39" height="44.6" fill="#c20a0a" stroke="#dc2424" stroke-width="0.8"/><rect x="415.30" y="435.4" width="2.69" height="44.6" fill="#c20a0a" stroke="#dc2424" stroke-width="0.8"/><rect x="420.64" y="435.4" width="2.69" height="44.6" fill="#c20a0a" stroke="#dc2424" stroke-width="0.8"/><rect x="434.10" y="435.4" width="2.69" height="44.6" fill="#c20a0a" stroke="#dc2424" stroke-width="0.8"/><rect x="442.18" y="435.4" width="2.69" height="44.6" fill="#c20a0a" stroke="#dc2424" stroke-width="0.8"/><rect x="447.52" y="435.4" width="2.69" height="44.6" fill="#c20a0a" stroke="#dc2424" stroke-width="0.8"/><rect x="452.91" y="435.4" width="2.69" height="44.6" fill="#c20a0a" stroke="#dc2424" stroke-width="0.8"/><rect x="460.98" y="435.4" width="2.69" height="44.6" fill="#c20a0a" stroke="#dc2424" stroke-width="0.8"/><rect x="469.06" y="435.4" width="2.69" height="44.6" fill="#c20a0a" stroke="#dc2424" stroke-width="0.8"/><rect x="474.40" y="435.4" width="16.16" height="44.6" fill="#c20a0a" stroke="#dc2424" stroke-width="0.8"/><text x="477.00" y="451.5" font-size="8.8" fill="#f4d0d0" font-family='"Liberation Sans"' stroke="#f4d0d0" stroke-width="0.25">Br</text><text x="477.00" y="461.8" font-size="8.8" fill="#f4d0d0" font-family='"Liberation Sans"' stroke="#f4d0d0" stroke-width="0.25">ea</text><text x="477.00" y="472.1" font-size="8.8" fill="#f4d0d0" font-family='"Liberation Sans"' stroke="#f4d0d0" stroke-width="0.25">k</text><rect x="493.25" y="435.4" width="5.39" height="44.6" fill="#c20a0a" stroke="#dc2424" stroke-width="0.8"/><rect x="501.28" y="435.4" width="2.69" height="44.6" fill="#c20a0a" stroke="#dc2424" stroke-width="0.8"/><rect x="509.36" y="435.4" width="5.39" height="44.6" fill="#c20a0a" stroke="#dc2424" stroke-width="0.8"/><rect x="522.82" y="435.4" width="2.69" height="44.6" fill="#c20a0a" stroke="#dc2424" stroke-width="0.8"/><rect x="528.16" y="435.4" width="2.69" height="44.6" fill="#c20a0a" stroke="#dc2424" stroke-width="0.8"/><rect x="533.55" y="435.4" width="2.69" height="44.6" fill="#c20a0a" stroke="#dc2424" stroke-width="0.8"/><rect x="538.93" y="435.4" width="5.39" height="44.6" fill="#c20a0a" stroke="#dc2424" stroke-width="0.8"/><rect x="549.70" y="435.4" width="2.69" height="44.6" fill="#c20a0a" stroke="#dc2424" stroke-width="0.8"/><rect x="555.04" y="435.4" width="5.39" height="44.6" fill="#c20a0a" stroke="#dc2424" stroke-width="0.8"/><rect x="563.12" y="435.4" width="5.39" height="44.6" fill="#c20a0a" stroke="#dc2424" stroke-width="0.8"/><rect x="576.58" y="435.4" width="2.69" height="44.6" fill="#c20a0a" stroke="#dc2424" stroke-width="0.8"/><rect x="581.92" y="435.4" width="2.69" height="44.6" fill="#c20a0a" stroke="#dc2424" stroke-width="0.8"/><rect x="587.31" y="435.4" width="5.39" height="44.6" fill="#c20a0a" stroke="#dc2424" stroke-width="0.8"/><rect x="595.38" y="435.4" width="2.69" height="44.6" fill="#c20a0a" stroke="#dc2424" stroke-width="0.8"/><rect x="603.46" y="435.4" width="2.69" height="44.6" fill="#c20a0a" stroke="#dc2424" stroke-width="0.8"/><rect x="608.80" y="435.4" width="2.69" height="44.6" fill="#c20a0a" stroke="#dc2424" stroke-width="0.8"/><path d="M616.49,435.20 L622.36,435.20 L624.36,457.50 L622.36,480.00 L616.49,480.00 L614.49,457.50Z" fill="#c20a0a" stroke="#dc2424" stroke-width="0.8"/><rect x="630.34" y="435.4" width="2.69" height="44.6" fill="#c20a0a" stroke="#dc2424" stroke-width="0.8"/><rect x="635.68" y="435.4" width="8.08" height="44.6" fill="#c20a0a" stroke="#dc2424" stroke-width="0.8"/><rect x="649.14" y="435.4" width="2.69" height="44.6" fill="#c20a0a" stroke="#dc2424" stroke-width="0.8"/><rect x="657.22" y="435.4" width="2.69" height="44.6" fill="#c20a0a" stroke="#dc2424" stroke-width="0.8"/><rect x="662.56" y="435.4" width="16.16" height="44.6" fill="#c20a0a" stroke="#dc2424" stroke-width="0.8"/><text x="665.16" y="451.5" font-size="8.8" fill="#f4d0d0" font-family='"Liberation Sans"' stroke="#f4d0d0" stroke-width="0.25">Br</text><text x="665.16" y="461.8" font-size="8.8" fill="#f4d0d0" font-family='"Liberation Sans"' stroke="#f4d0d0" stroke-width="0.25">ea</text><text x="665.16" y="472.1" font-size="8.8" fill="#f4d0d0" font-family='"Liberation Sans"' stroke="#f4d0d0" stroke-width="0.25">k</text><rect x="681.41" y="435.4" width="5.39" height="44.6" fill="#c20a0a" stroke="#dc2424" stroke-width="0.8"/><rect x="689.44" y="435.4" width="13.46" height="44.6" fill="#c20a0a" stroke="#dc2424" stroke-width="0.8"/><text x="692.04" y="451.5" font-size="8.8" fill="#f4d0d0" font-family='"Liberation Sans"' stroke="#f4d0d0" stroke-width="0.25">B</text><text x="692.04" y="461.8" font-size="8.8" fill="#f4d0d0" font-family='"Liberation Sans"' stroke="#f4d0d0" stroke-width="0.25">r</text><text x="692.04" y="472.1" font-size="8.8" fill="#f4d0d0" font-family='"Liberation Sans"' stroke="#f4d0d0" stroke-width="0.25">k</text><rect x="710.98" y="435.4" width="2.69" height="44.6" fill="#c20a0a" stroke="#dc2424" stroke-width="0.8"/><rect x="716.32" y="435.4" width="2.69" height="44.6" fill="#c20a0a" stroke="#dc2424" stroke-width="0.8"/><rect x="729.79" y="435.4" width="2.69" height="44.6" fill="#c20a0a" stroke="#dc2424" stroke-width="0.8"/><rect x="737.86" y="435.4" width="2.69" height="44.6" fill="#c20a0a" stroke="#dc2424" stroke-width="0.8"/><rect x="743.20" y="435.4" width="5.39" height="44.6" fill="#c20a0a" stroke="#dc2424" stroke-width="0.8"/><rect x="751.28" y="435.4" width="5.39" height="44.6" fill="#c20a0a" stroke="#dc2424" stroke-width="0.8"/><rect x="764.74" y="435.4" width="2.69" height="44.6" fill="#c20a0a" stroke="#dc2424" stroke-width="0.8"/><rect x="770.08" y="435.4" width="8.08" height="44.6" fill="#c20a0a" stroke="#dc2424" stroke-width="0.8"/><rect x="780.85" y="435.4" width="2.69" height="44.6" fill="#c20a0a" stroke="#dc2424" stroke-width="0.8"/><rect x="7" y="453.5" width="41" height="8" fill="#b4b4b4"/><text x="8" y="460.1" font-size="6.2" fill="#303030" font-family='"Liberation Sans"' stroke="#303030" stroke-width="0.25">SB2 UART Tx</text><text x="2" y="515.5" font-size="10" fill="#d4d8dc" text-anchor="start" font-family='"Liberation Sans"' stroke="#d4d8dc" stroke-width="0.25">-8.5 ms</text><text x="113.9" y="515.5" font-size="10" fill="#d4d8dc" text-anchor="middle" font-family='"Liberation Sans"' stroke="#d4d8dc" stroke-width="0.25">-4 ms</text><text x="217.2" y="515.5" font-size="10" fill="#d4d8dc" text-anchor="middle" font-family='"Liberation Sans"' stroke="#d4d8dc" stroke-width="0.25">0 s</text><text x="318.5" y="515.5" font-size="10" fill="#d4d8dc" text-anchor="middle" font-family='"Liberation Sans"' stroke="#d4d8dc" stroke-width="0.25">4 ms</text><text x="420.8" y="515.5" font-size="10" fill="#d4d8dc" text-anchor="middle" font-family='"Liberation Sans"' stroke="#d4d8dc" stroke-width="0.25">8 ms</text><text x="523.1" y="515.5" font-size="10" fill="#d4d8dc" text-anchor="middle" font-family='"Liberation Sans"' stroke="#d4d8dc" stroke-width="0.25">12 ms</text><text x="625.4" y="515.5" font-size="10" fill="#d4d8dc" text-anchor="middle" font-family='"Liberation Sans"' stroke="#d4d8dc" stroke-width="0.25">16 ms</text><text x="727.7" y="515.5" font-size="10" fill="#d4d8dc" text-anchor="middle" font-family='"Liberation Sans"' stroke="#d4d8dc" stroke-width="0.25">20 ms</text><text x="830" y="515.5" font-size="10" fill="#d4d8dc" text-anchor="middle" font-family='"Liberation Sans"' stroke="#d4d8dc" stroke-width="0.25">24 ms</text><text x="932.3" y="515.5" font-size="10" fill="#d4d8dc" text-anchor="middle" font-family='"Liberation Sans"' stroke="#d4d8dc" stroke-width="0.25">28 ms</text><text x="1021" y="515.5" font-size="10" fill="#d4d8dc" text-anchor="end" font-family='"Liberation Sans"' stroke="#d4d8dc" stroke-width="0.25">31.5 ms</text><line x1="216.6" y1="54" x2="216.6" y2="279" stroke="#74746a" stroke-width="1" stroke-dasharray="2.4,1.4"/><line x1="216.6" y1="297" x2="216.6" y2="401" stroke="#74746a" stroke-width="1" stroke-dasharray="2.4,1.4" opacity="0.8"/><line x1="216.6" y1="418" x2="216.6" y2="522" stroke="#74746a" stroke-width="1" stroke-dasharray="2.4,1.4" opacity="0.8"/><path d="M210.3,41.5 L223,41.5 L216.6,54.5 Z" fill="#22d4dc"/><path d="M210.3,285 L223,285 L216.6,298 Z" fill="#22d4dc"/><path d="M210.3,406 L223,406 L216.6,418.5 Z" fill="#22d4dc"/><path d="M750,364 L750,377.5 L753.3,374.3 L756,379.8 L758.3,378.8 L755.7,373.3 L760,373.3 Z" fill="#303438" stroke="#d8d8d8" stroke-width="0.9"/></svg>
<div class="a" style="left:0;top:522px;width:1024px;height:54px;background:#36434d"></div>
<div class="a" style="left:0;top:521.5px;width:1024px;height:1.5px;background:#8e9ca8"></div>
<div class="a" style="left:1px;top:523px;width:101px;height:17px;background:#f6e800"></div>
<div class="t" style="left:4px;top:527px;font-size:11px;color:#202020">C1</div>
<div class="a" style="left:92px;top:534.5px;width:5px;height:1.5px;background:#202020"></div>
<div class="t" style="left:5px;top:542px;font-size:13px;color:#eef0f2">500 <span style="font-size:10px">mV/</span></div>
<div class="t" style="left:0;width:99px;text-align:right;top:543px;font-size:9px;color:#e0e4e8">50 MHz</div>
<div class="t" style="left:0;width:99px;text-align:right;top:553px;font-size:9px;color:#e0e4e8">DC 1MΩ</div>
<div class="t" style="left:0;width:99px;text-align:right;top:563px;font-size:9px;color:#e0e4e8">RT-ZP11</div>
<div class="t" style="left:5px;top:563px;font-size:9px;color:#e0e4e8">1.85 V</div>
<div class="a" style="left:102px;top:523px;width:1px;height:53px;background:#1a2228"></div>
<div class="a" style="left:103px;top:523px;width:101px;height:17px;background:#c8c8c8"></div>
<div class="t" style="left:106px;top:527px;font-size:11px;color:#202020">SB1</div>
<div class="a" style="left:194px;top:534.5px;width:5px;height:1.5px;background:#202020"></div>
<div class="t" style="left:106px;top:542px;font-size:13px;color:#eef0f2">UART</div>
<div class="a" style="left:204px;top:523px;width:1px;height:53px;background:#1a2228"></div>
<div class="a" style="left:205px;top:523px;width:101px;height:53px;background:#c8c8c8"></div>
<div class="a" style="left:206px;top:540px;width:99px;height:34px;background:#36434d"></div>
<div class="t" style="left:208px;top:527px;font-size:11px;color:#202020">SB2</div>
<div class="a" style="left:296px;top:534.5px;width:5px;height:1.5px;background:#202020"></div>
<div class="t" style="left:208px;top:542px;font-size:13px;color:#eef0f2">UART</div>
<div class="a" style="left:48px;top:525px;width:1px;height:1px;background:#707070"></div>
<div class="a" style="left:50px;top:525px;width:1px;height:1px;background:#707070"></div>
<div class="a" style="left:52px;top:525px;width:1px;height:1px;background:#707070"></div>
<div class="a" style="left:54px;top:525px;width:1px;height:1px;background:#707070"></div>
<div class="a" style="left:56px;top:525px;width:1px;height:1px;background:#707070"></div>
<div class="a" style="left:150px;top:525px;width:1px;height:1px;background:#707070"></div>
<div class="a" style="left:152px;top:525px;width:1px;height:1px;background:#707070"></div>
<div class="a" style="left:154px;top:525px;width:1px;height:1px;background:#707070"></div>
<div class="a" style="left:156px;top:525px;width:1px;height:1px;background:#707070"></div>
<div class="a" style="left:158px;top:525px;width:1px;height:1px;background:#707070"></div>
<div class="a" style="left:252px;top:525px;width:1px;height:1px;background:#707070"></div>
<div class="a" style="left:254px;top:525px;width:1px;height:1px;background:#707070"></div>
<div class="a" style="left:256px;top:525px;width:1px;height:1px;background:#707070"></div>
<div class="a" style="left:258px;top:525px;width:1px;height:1px;background:#707070"></div>
<div class="a" style="left:260px;top:525px;width:1px;height:1px;background:#707070"></div>
<div class="a" style="left:714px;top:523px;width:1px;height:53px;background:#1a2228"></div>
<div class="a" style="left:715px;top:523px;width:29px;height:5px;background:#22e022"></div>
<div class="t" style="left:715px;width:29px;text-align:center;top:547.5px;font-size:8.5px;color:#e6eaee">C2</div>
<div class="a" style="left:744px;top:523px;width:1px;height:53px;background:#1a2228"></div>
<div class="a" style="left:745px;top:523px;width:30px;height:5px;background:#f06818"></div>
<div class="t" style="left:745px;width:30px;text-align:center;top:547.5px;font-size:8.5px;color:#e6eaee">C3</div>
<div class="a" style="left:775px;top:523px;width:1px;height:53px;background:#1a2228"></div>
<div class="a" style="left:776px;top:523px;width:29px;height:5px;background:#7890f0"></div>
<div class="t" style="left:776px;width:29px;text-align:center;top:547.5px;font-size:8.5px;color:#e6eaee">C4</div>
<div class="a" style="left:805px;top:523px;width:1px;height:53px;background:#1a2228"></div>
<div class="a" style="left:806px;top:523px;width:30px;height:5px;background:#e09418"></div>
<div class="t" style="left:806px;width:30px;text-align:center;top:547.5px;font-size:8.5px;color:#e6eaee">Logic</div>
<div class="a" style="left:836px;top:523px;width:1px;height:53px;background:#1a2228"></div>
<div class="a" style="left:837px;top:523px;width:29px;height:5px;background:#22d8e8"></div>
<div class="t" style="left:837px;width:29px;text-align:center;top:547.5px;font-size:8.5px;color:#e6eaee">Math</div>
<div class="t" style="left:837px;width:29px;text-align:center;top:538px;font-size:8px;color:#e6eaee">+</div>
<div class="a" style="left:866px;top:523px;width:1px;height:53px;background:#1a2228"></div>
<div class="a" style="left:867px;top:523px;width:30px;height:5px;background:#c0c0c0"></div>
<div class="t" style="left:867px;width:30px;text-align:center;top:547.5px;font-size:8.5px;color:#e6eaee">Bus</div>
<div class="t" style="left:867px;width:30px;text-align:center;top:538px;font-size:8px;color:#e6eaee">+</div>
<div class="a" style="left:897px;top:523px;width:1px;height:53px;background:#1a2228"></div>
<div class="a" style="left:898px;top:523px;width:29px;height:5px;background:#f4f4f4"></div>
<div class="t" style="left:898px;width:29px;text-align:center;top:547.5px;font-size:8.5px;color:#e6eaee">Ref</div>
<div class="t" style="left:898px;width:29px;text-align:center;top:538px;font-size:8px;color:#e6eaee">+</div>
<div class="a" style="left:927px;top:523px;width:1px;height:53px;background:#1a2228"></div>
<div class="a" style="left:928px;top:523px;width:29px;height:5px;background:#f2e600"></div>
<div class="t" style="left:928px;width:29px;text-align:center;top:547.5px;font-size:8.5px;color:#e6eaee">Spec</div>
<div class="t" style="left:928px;width:29px;text-align:center;top:538px;font-size:8px;color:#e6eaee">+</div>
<div class="a" style="left:957px;top:523px;width:1px;height:53px;background:#1a2228"></div>
<div class="a" style="left:958px;top:523px;width:30px;height:5px;background:#c8c8c8"></div>
<div class="t" style="left:958px;width:30px;text-align:center;top:547.5px;font-size:8.5px;color:#e6eaee">Gen</div>
<div class="a" style="left:988px;top:523px;width:1px;height:53px;background:#1a2228"></div>
<div class="a" style="left:1000px;top:538.5px;width:12.5px;height:1.5px;background:#eef0f2"></div>
<div class="a" style="left:1000px;top:542px;width:12.5px;height:1.5px;background:#eef0f2"></div>
<div class="a" style="left:1000px;top:545.5px;width:12.5px;height:1.5px;background:#eef0f2"></div>
<div class="t" style="left:989px;width:35px;text-align:center;top:549px;font-size:10px;color:#eef0f2">Menu</div>
<div class="a" style="left:51px;top:42px;width:101px;height:21px;background:#44545f"></div>
<div class="a" style="left:51px;top:60px;width:101px;height:2.5px;background:#2f8ad8"></div>
<div class="t" style="left:57.5px;top:47.3px;font-size:10px;color:#e6eaee">Diagram Set 1</div>
<div class="a" style="left:153px;top:42px;width:20px;height:21px;background:#44545f"></div>
<div class="t" style="left:153px;width:20px;text-align:center;top:45px;font-size:13px;color:#e6eaee">+</div>
</body></html>
